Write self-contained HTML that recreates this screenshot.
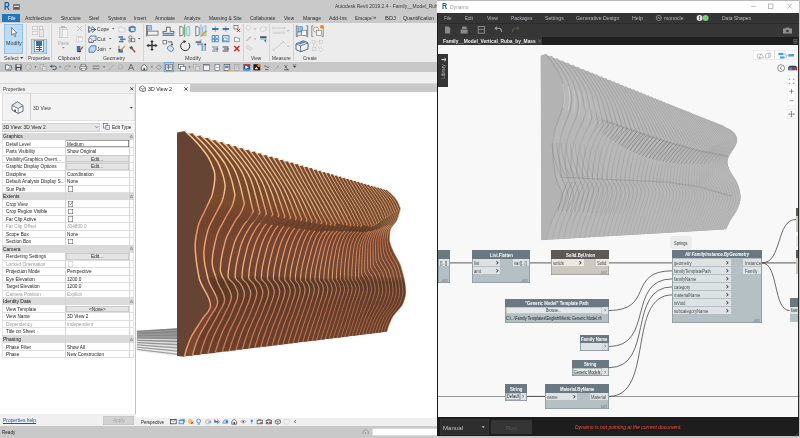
<!DOCTYPE html>
<html lang="en">
<head>
<meta charset="utf-8">
<title>Autodesk Revit 2019.2.4 and Dynamo</title>
<style>
html,body{margin:0;padding:0;}
body{width:800px;height:438px;overflow:hidden;background:#fff;font-family:"Liberation Sans",sans-serif;}
#screen{filter:blur(0.3px);position:relative;width:800px;height:438px;overflow:hidden;background:#fff;}
#screen div,#screen span,#screen svg,#screen a,#screen button,#screen section,#screen header,#screen nav{position:absolute;display:block;box-sizing:border-box;margin:0;padding:0;border:0;}
#screen svg{overflow:visible;}
.t{white-space:nowrap;transform-origin:0 0;line-height:1;font-family:"Liberation Sans",sans-serif;}
</style>
</head>
<body>
<div id="screen">
<section id="revit" style="left:0;top:0;width:438px;height:438px;overflow:hidden;background:#fff">
<div style="left:0px;top:0px;width:438px;height:22.5px;background:#c9c9c9;"></div>
<div style="left:0px;top:22.5px;width:438px;height:39.5px;background:#ececec;"></div>
<div style="left:0px;top:62px;width:438px;height:10px;background:#c8c8c8;"></div>
<div style="left:0px;top:72px;width:438px;height:11.5px;background:#f0f0f0;"></div>
<div style="left:0px;top:83.2px;width:438px;height:0.8px;background:#d9d9d9;"></div>
<span class="t" style="left:3.8px;top:1.1px;font-size:43.6px;color:#1c5aa0;font-weight:bold;transform:scale(0.1842,0.25);">R</span>
<div style="left:13.2px;top:4.2px;width:6.4px;height:5.6px;background:#7a7a7a;border-radius:0.6px;"></div>
<div style="left:14px;top:5.6px;width:4.8px;height:0.9px;background:#e8e8e8;"></div>
<div style="left:14px;top:7.3px;width:4.8px;height:1.7px;background:#5a5a5a;"></div>
<span class="t" style="left:335px;top:4.24px;font-size:19.6px;color:#3a3a3a;transform:scale(0.2500,0.25);">Autodesk Revit 2019.2.4 - Family__Model_Ruba_by_Mass.rfa</span>
<div style="left:1.6px;top:13.8px;width:18.8px;height:8.7px;background:#2377b9;"></div>
<span class="t" style="left:7.6px;top:15.7px;font-size:20px;color:#fff;transform:scale(0.2327,0.25);">File</span>
<span class="t" style="left:25.4px;top:15.7px;font-size:20px;color:#2b2b2b;transform:scale(0.2540,0.25);">Architecture</span>
<span class="t" style="left:60.9px;top:15.7px;font-size:20px;color:#2b2b2b;transform:scale(0.2440,0.25);">Structure</span>
<span class="t" style="left:89.1px;top:15.7px;font-size:20px;color:#2b2b2b;transform:scale(0.2237,0.25);">Steel</span>
<span class="t" style="left:107.8px;top:15.7px;font-size:20px;color:#2b2b2b;transform:scale(0.2360,0.25);">Systems</span>
<span class="t" style="left:134.1px;top:15.7px;font-size:20px;color:#2b2b2b;transform:scale(0.2399,0.25);">Insert</span>
<span class="t" style="left:155px;top:15.7px;font-size:20px;color:#2b2b2b;transform:scale(0.2498,0.25);">Annotate</span>
<span class="t" style="left:183.6px;top:15.7px;font-size:20px;color:#2b2b2b;transform:scale(0.2319,0.25);">Analyze</span>
<span class="t" style="left:208.9px;top:15.7px;font-size:20px;color:#2b2b2b;transform:scale(0.2444,0.25);">Massing &amp; Site</span>
<span class="t" style="left:249.9px;top:15.7px;font-size:20px;color:#2b2b2b;transform:scale(0.2493,0.25);">Collaborate</span>
<span class="t" style="left:283.9px;top:15.7px;font-size:20px;color:#2b2b2b;transform:scale(0.2349,0.25);">View</span>
<span class="t" style="left:302.5px;top:15.7px;font-size:20px;color:#2b2b2b;transform:scale(0.2477,0.25);">Manage</span>
<span class="t" style="left:328.6px;top:15.7px;font-size:20px;color:#2b2b2b;transform:scale(0.2597,0.25);">Add-Ins</span>
<span class="t" style="left:354.8px;top:15.7px;font-size:20px;color:#2b2b2b;transform:scale(0.2187,0.25);">Enscape™</span>
<span class="t" style="left:384.5px;top:15.7px;font-size:20px;color:#2b2b2b;transform:scale(0.2911,0.25);">BDJ</span>
<span class="t" style="left:403.4px;top:15.7px;font-size:20px;color:#2b2b2b;transform:scale(0.2551,0.25);">Quantification</span>
<div style="left:25.6px;top:24px;width:0.6px;height:36.5px;background:#d4d4d4;"></div>
<div style="left:51px;top:24px;width:0.6px;height:36.5px;background:#d4d4d4;"></div>
<div style="left:85.3px;top:24px;width:0.6px;height:36.5px;background:#d4d4d4;"></div>
<div style="left:143px;top:24px;width:0.6px;height:36.5px;background:#d4d4d4;"></div>
<div style="left:242.6px;top:24px;width:0.6px;height:36.5px;background:#d4d4d4;"></div>
<div style="left:269px;top:24px;width:0.6px;height:36.5px;background:#d4d4d4;"></div>
<div style="left:292.9px;top:24px;width:0.6px;height:36.5px;background:#d4d4d4;"></div>
<span class="t" style="left:3.9px;top:56px;font-size:20px;color:#3c3c3c;transform:scale(0.2644,0.25);">Select</span>
<span class="t" style="left:27.5px;top:56px;font-size:20px;color:#3c3c3c;transform:scale(0.2413,0.25);">Properties</span>
<span class="t" style="left:57.8px;top:56px;font-size:20px;color:#3c3c3c;transform:scale(0.2570,0.25);">Clipboard</span>
<span class="t" style="left:103px;top:56px;font-size:20px;color:#3c3c3c;transform:scale(0.2506,0.25);">Geometry</span>
<span class="t" style="left:184.8px;top:56px;font-size:20px;color:#3c3c3c;transform:scale(0.2716,0.25);">Modify</span>
<span class="t" style="left:250.8px;top:56px;font-size:20px;color:#3c3c3c;transform:scale(0.2373,0.25);">View</span>
<span class="t" style="left:271.7px;top:56px;font-size:20px;color:#3c3c3c;transform:scale(0.2403,0.25);">Measure</span>
<span class="t" style="left:303px;top:56px;font-size:20px;color:#3c3c3c;transform:scale(0.2299,0.25);">Create</span>
<svg style="left:20.3px;top:57.3px" width="3.4" height="2" viewBox="0 0 3.4 2"><path d="M0 0H3.4L1.7 2Z" fill="#444"/></svg>
<div style="left:4px;top:23.6px;width:19px;height:30px;background:#bcdcf6;box-shadow:inset 0 0 0 0.6px #6fb0e6;"></div>
<span class="t" style="left:6px;top:41.1px;font-size:20px;color:#333;transform:scale(0.2665,0.25);">Modify</span>
<svg style="left:9.5px;top:26.5px" width="8" height="11" viewBox="0 0 8 11"><path d="M1.6 0.6V8.2L3.4 6.6L4.7 9.6L5.9 9.1L4.6 6.2H6.9Z" fill="#fff" stroke="#555" stroke-width="0.7" stroke-linejoin="round"/></svg>
<div style="left:31px;top:39px;width:16.2px;height:14.6px;background:#bcdcf6;box-shadow:inset 0 0 0 0.6px #6fb0e6;"></div>
<div style="left:34.3px;top:40.3px;width:9.4px;height:12px;background:#fdfdfd;box-shadow:inset 0 0 0 0.6px #555;"></div>
<div style="left:35.6px;top:41.4px;width:6.8px;height:4.2px;background:#2f6fb4;"></div>
<div style="left:35.6px;top:47px;width:6.8px;height:0.7px;background:#555;"></div>
<div style="left:35.6px;top:49.2px;width:6.8px;height:0.7px;background:#555;"></div>
<div style="left:39.2px;top:46.4px;width:0.7px;height:4.3px;background:#555;"></div>
<div style="left:32.4px;top:26px;width:6px;height:4.3px;background:#f4f4f4;box-shadow:inset 0 0 0 0.5px #b0b0b0;"></div>
<div style="left:38.9px;top:26px;width:4.6px;height:4.3px;background:#f4f4f4;box-shadow:inset 0 0 0 0.5px #b0b0b0;"></div>
<div style="left:32.4px;top:30.8px;width:6px;height:4.3px;background:#f4f4f4;box-shadow:inset 0 0 0 0.5px #b0b0b0;"></div>
<div style="left:38.9px;top:29px;width:5.4px;height:8px;background:#e6e6e6;box-shadow:inset 0 0 0 0.5px #b0b0b0;"></div>
<div style="left:58.6px;top:27.2px;width:8.4px;height:10.4px;background:#e3e3e3;box-shadow:inset 0 0 0 0.5px #b9b9b9;border-radius:0.8px;"></div>
<div style="left:60.8px;top:26px;width:4px;height:2.4px;background:#d0d0d0;box-shadow:inset 0 0 0 0.4px #aaa;"></div>
<div style="left:62.4px;top:29.2px;width:6px;height:8.6px;background:#f3f3f3;box-shadow:inset 0 0 0 0.5px #bdbdbd;"></div>
<span class="t" style="left:57.8px;top:41px;font-size:20px;color:#a8a8a8;transform:scale(0.2190,0.25);">Paste</span>
<svg style="left:62.2px;top:47px" width="2.6" height="1.6" viewBox="0 0 2.6 1.6"><path d="M0 0H2.6L1.3 1.6Z" fill="#888"/></svg>
<svg style="left:76px;top:25.4px" width="7" height="7" viewBox="0 0 7 7"><path d="M1 1L6 6M6 1L1 6" stroke="#c4c4c4" stroke-width="1"/></svg>
<div style="left:76.2px;top:35.6px;width:5.2px;height:6.2px;background:#f0f0f0;box-shadow:inset 0 0 0 0.5px #c2c2c2;"></div>
<div style="left:77.8px;top:37.2px;width:5px;height:5.2px;background:#f4f4f4;box-shadow:inset 0 0 0 0.5px #c2c2c2;"></div>
<svg style="left:75.6px;top:45px" width="8" height="8" viewBox="0 0 8 8"><rect x="0.8" y="1" width="3.6" height="5" fill="#3d6fa8"/><path d="M3 7L7 1.6" stroke="#8a6a3a" stroke-width="1.3"/><path d="M1 6.6H5" stroke="#333" stroke-width="0.9"/></svg>
<svg style="left:87.5px;top:24.5px" width="9" height="9" viewBox="0 0 9 9"><path d="M1 1V8M2 4.5H8M4 1.5L7.5 4.5L4 7.5" stroke="#3a4a5a" stroke-width="0.9" fill="none"/><rect x="0.6" y="3" width="3" height="3" fill="#e8eef5" stroke="#3a4a5a" stroke-width="0.6"/></svg>
<span class="t" style="left:96.6px;top:26.6px;font-size:20px;color:#333;transform:scale(0.2510,0.25);">Cope</span>
<svg style="left:88px;top:34.5px" width="9" height="8" viewBox="0 0 9 8"><path d="M2.5 1H8V5.5H5.5V7.5H0.8V4Z" fill="#dfeaf6" stroke="#2b6cb0" stroke-width="0.8"/><circle cx="2.3" cy="5.3" r="1.7" fill="#fff" stroke="#c33" stroke-width="0.6"/></svg>
<span class="t" style="left:96.6px;top:36.6px;font-size:20px;color:#333;transform:scale(0.2699,0.25);">Cut</span>
<svg style="left:88px;top:44.5px" width="9" height="8" viewBox="0 0 9 8"><path d="M3 0.8H8V4.5L6 7.2H1V3.6Z" fill="#b9d6f2" stroke="#2b6cb0" stroke-width="0.8"/></svg>
<span class="t" style="left:96.6px;top:46.6px;font-size:20px;color:#333;transform:scale(0.2453,0.25);">Join</span>
<svg style="left:111.5px;top:28.3px" width="2.4" height="1.5" viewBox="0 0 2.4 1.5"><path d="M0 0H2.4L1.2 1.5Z" fill="#555"/></svg>
<svg style="left:108.6px;top:38.3px" width="2.4" height="1.5" viewBox="0 0 2.4 1.5"><path d="M0 0H2.4L1.2 1.5Z" fill="#555"/></svg>
<svg style="left:108.6px;top:48.3px" width="2.4" height="1.5" viewBox="0 0 2.4 1.5"><path d="M0 0H2.4L1.2 1.5Z" fill="#555"/></svg>
<svg style="left:117.5px;top:25px" width="8" height="8" viewBox="0 0 8 8"><path d="M1 2H3.5L4.3 3H7V7H1Z" fill="#efefef" stroke="#c4c4c4" stroke-width="0.6"/></svg>
<svg style="left:127.5px;top:25px" width="8" height="8" viewBox="0 0 8 8"><path d="M1 2.2L4.6 1L7.2 2V6L3.6 7.2L1 6Z" fill="#5b8fc7" stroke="#2a4f7a" stroke-width="0.6"/><rect x="3" y="3" width="3.4" height="3" fill="#cfe2f5"/></svg>
<svg style="left:117.5px;top:35px" width="8" height="8" viewBox="0 0 8 8"><path d="M0.5 2H5M2 4.2H7.5M1 6.4H5.5" stroke="#4a7db5" stroke-width="1.5"/><path d="M4 0.8V7.4" stroke="#666" stroke-width="0.6"/></svg>
<svg style="left:127.5px;top:35px" width="9" height="8" viewBox="0 0 9 8"><circle cx="2.4" cy="2.4" r="1.6" fill="none" stroke="#555" stroke-width="0.7"/><rect x="3.6" y="3.8" width="3.2" height="3" fill="#fff" stroke="#555" stroke-width="0.7"/><circle cx="1.8" cy="6" r="1.1" fill="none" stroke="#555" stroke-width="0.6"/></svg>
<svg style="left:138px;top:38.3px" width="2.4" height="1.5" viewBox="0 0 2.4 1.5"><path d="M0 0H2.4L1.2 1.5Z" fill="#555"/></svg>
<svg style="left:117.5px;top:44.5px" width="8" height="8" viewBox="0 0 8 8"><rect x="0.6" y="4" width="4.2" height="3.6" fill="#2e6db3"/><path d="M2.5 5.5L7 1" stroke="#e09a2b" stroke-width="1.5"/><path d="M1 0.6V6.5" stroke="#444" stroke-width="0.7"/></svg>
<svg style="left:127.5px;top:44.5px" width="8" height="8" viewBox="0 0 8 8"><path d="M1.2 2.4L3.6 1L5.4 3.2L3 4.6Z" fill="#555"/><path d="M4 3.6L7.2 7.2" stroke="#a0522d" stroke-width="1.4"/></svg>
<svg style="left:0;top:0" width="438" height="62" viewBox="0 0 438 62"><g transform="translate(146,24.5)"><path d="M0.7 0.5V12" stroke="#444" stroke-width="0.8"/><rect x="1.4" y="1.2" width="4.2" height="4.2" fill="#9fc9f0" stroke="#3a78b8" stroke-width="0.5"/><rect x="1.4" y="6.6" width="10.6" height="4" fill="#f2f2f2" stroke="#555" stroke-width="0.7"/></g><g transform="translate(162,25)"><path d="M1 8.3V6.4H4.6V2.2H8.2V6.4H12V8.3Z" fill="#f8f8f8" stroke="#444" stroke-width="0.8"/><path d="M0.6 10.2H12.4" stroke="#2f7ac6" stroke-width="1.3"/></g><g transform="translate(179,24.5)"><path d="M0.8 1.6L4.2 3V10.4L0.8 11.6Z" fill="#f4f4f4" stroke="#555" stroke-width="0.7"/><path d="M10.6 1.6L7.2 3V10.4L10.6 11.6Z" fill="#cfe4f7" stroke="#8ab" stroke-width="0.7"/><path d="M5.7 0V12.5" stroke="#3a9a3a" stroke-width="0.8"/></g><g transform="translate(195,24.5)"><path d="M0.8 1.6L4.2 3V10.4L0.8 11.6Z" fill="#f4f4f4" stroke="#555" stroke-width="0.7"/><path d="M11 1L7.6 3V10.4L11 11.6Z" fill="#cfe4f7" stroke="#8ab" stroke-width="0.7"/><path d="M6 0V12.5" stroke="#6aa9e0" stroke-width="0.8"/><path d="M6.4 11.4L11.4 6.4" stroke="#e0a020" stroke-width="1.8"/></g><g transform="translate(146,39.5)"><path d="M6 0.4L7.8 2.6H6.7V5.3H9.4V4.2L11.6 6L9.4 7.8V6.7H6.7V9.4H7.8L6 11.6L4.2 9.4H5.3V6.7H2.6V7.8L0.4 6L2.6 4.2V5.3H5.3V2.6H4.2Z" fill="#333"/></g><g transform="translate(162,39.5)"><rect x="1" y="1" width="3.6" height="3.4" fill="#fff" stroke="#555" stroke-width="0.7"/><path d="M5.6 2.4H10V5.4" fill="none" stroke="#444" stroke-width="0.8"/><path d="M8.8 4.6L10 6.4L11.2 4.6Z" fill="#444"/><ellipse cx="8.4" cy="9" rx="3.2" ry="2.6" fill="#cfe4f7" stroke="#3a78b8" stroke-width="0.7" transform="rotate(35 8.4 9)"/></g><g transform="translate(179,39.5)"><path d="M9.6 3.4A4.6 4.6 0 1 1 5.4 2" fill="none" stroke="#333" stroke-width="1"/><path d="M4.6 0.4L7.4 2L4.8 3.8Z" fill="#333"/></g><g transform="translate(195,39.5)"><path d="M0.6 2.6H6.4" stroke="#777" stroke-width="1.8"/><path d="M2 4.8H7.4V11.6" fill="none" stroke="#6aa9e0" stroke-width="1.9"/><path d="M10.2 4.5V11.4" stroke="#555" stroke-width="0.8"/><path d="M9 5.6L10.2 3.6L11.4 5.6Z" fill="#444"/><path d="M4.6 1.2L6.6 0.4" stroke="#555" stroke-width="0.6"/></g><g transform="translate(211.5,26)"><path d="M0.6 3H7" stroke="#2f7ac6" stroke-width="2"/><path d="M3.8 0.4V5.8" stroke="#c33" stroke-width="0.6"/></g><g transform="translate(222,26)"><path d="M0.6 3H7" stroke="#2f7ac6" stroke-width="2"/><path d="M3.8 0.4V5.8" stroke="#c33" stroke-width="0.6"/></g><g transform="translate(233,25)"><rect x="1" y="0.6" width="4" height="3.4" fill="#f4f4f4" stroke="#555" stroke-width="0.6"/><path d="M4 3.8L7 6.8M7 3.8L4 6.8" stroke="#d22" stroke-width="1"/></g><g transform="translate(211.5,35)"><rect x="0.6" y="0.6" width="2.6" height="2.6" fill="#fff" stroke="#2f7ac6" stroke-width="0.8"/><rect x="4.2" y="0.6" width="2.6" height="2.6" fill="#fff" stroke="#2f7ac6" stroke-width="0.8"/><rect x="0.6" y="4.2" width="2.6" height="2.6" fill="#fff" stroke="#2f7ac6" stroke-width="0.8"/><rect x="4.2" y="4.2" width="2.6" height="2.6" fill="#fff" stroke="#2f7ac6" stroke-width="0.8"/></g><g transform="translate(222,35)"><rect x="0.6" y="0.6" width="6.4" height="6.2" fill="#cfe4f7" stroke="#2f7ac6" stroke-width="0.8"/><rect x="1.6" y="3" width="3.4" height="2.8" fill="#fff" stroke="#2f7ac6" stroke-width="0.5"/></g><g transform="translate(233.5,36)"><path d="M1 1.4H3L3.6 2.2H6V5.4H1Z" fill="#fff" stroke="#666" stroke-width="0.6"/></g><g transform="translate(211.5,45)"><path d="M0.6 2H4.2M1.8 4H7M0.6 6H4.2" stroke="#555" stroke-width="0.8"/><path d="M5.6 1V7" stroke="#2f7ac6" stroke-width="1"/></g><g transform="translate(222,45)"><path d="M0.6 2H5M1.8 4H7M0.6 6H5" stroke="#333" stroke-width="0.9"/><path d="M5.8 1V7" stroke="#2f7ac6" stroke-width="1"/></g><g transform="translate(233.5,45.3)"><path d="M0.8 0.8L5.8 6M5.8 0.8L0.8 6" stroke="#e02020" stroke-width="1.5"/></g><g transform="translate(245.5,25)"><circle cx="3" cy="2.6" r="2.1" fill="#f6f6f6" stroke="#c6c6c6" stroke-width="0.6"/><rect x="2.1" y="4.6" width="1.8" height="1.6" fill="#d4d4d4"/><path d="M8.4 3.4H10.8L9.6 4.8Z" fill="#999"/></g><g transform="translate(259.5,25.2)"><path d="M0.8 3L3.4 1.4L6.4 2.4V5.4L3.4 6.4L0.8 5.2Z" fill="#eee" stroke="#c2c2c2" stroke-width="0.6"/></g><g transform="translate(245.5,35)"><path d="M1 6L5.4 1.4" stroke="#c4c4c4" stroke-width="1.5"/><path d="M8.4 3.4H10.8L9.6 4.8Z" fill="#999"/></g><g transform="translate(259.5,35.6)"><rect x="0.6" y="0.6" width="6.4" height="2" fill="#555"/><rect x="0.6" y="2.8" width="6.4" height="1.2" fill="#9ab"/><path d="M6.6 3.6L4.4 5.2L6.6 6.6Z" fill="#1d6fd0"/></g><g transform="translate(245.5,45)"><rect x="0.8" y="1.6" width="5.4" height="2.6" fill="#e2e2e2" stroke="#c0c0c0" stroke-width="0.5" transform="rotate(32 3.5 3)"/></g><g transform="translate(272,26.5)"><path d="M1 1.6H12.4" stroke="#bdbdbd" stroke-width="0.7"/><path d="M1 0.4V2.8M12.4 0.4V2.8" stroke="#bdbdbd" stroke-width="0.7"/><rect x="0.6" y="5" width="12.4" height="2.6" fill="#d9d9d9"/><path d="M15.2 4.2H17.4" stroke="#888" stroke-width="0.6"/></g><g transform="translate(272,40)"><path d="M1.4 10L11.8 1.6" stroke="#bdbdbd" stroke-width="0.7"/><path d="M0.4 8.6L2.6 11.4M10.6 0.6L12.8 3" stroke="#bdbdbd" stroke-width="0.7"/><path d="M15.2 6.2H17.4" stroke="#888" stroke-width="0.6"/></g><g transform="translate(295.5,25)"><path d="M2.4 0.8H0.8V11.6H2.4M10.6 0.8H12.2V11.6H10.6" fill="none" stroke="#555" stroke-width="0.7"/><rect x="2.4" y="1.8" width="4.6" height="5" fill="#8fc1ee" stroke="#3a78b8" stroke-width="0.6"/><rect x="6" y="5.2" width="5.2" height="5.2" fill="#f6f6f6" stroke="#666" stroke-width="0.6"/><rect x="2" y="7" width="4" height="3.6" fill="#cfe4f7" stroke="#3a78b8" stroke-width="0.5"/></g><g transform="translate(311,25)"><path d="M2.4 0.8H0.8V11.6H2.4M10.6 0.8H12.2V11.6H10.6" fill="none" stroke="#666" stroke-width="0.7"/><circle cx="5" cy="4.6" r="2.6" fill="#f4f4f4" stroke="#777" stroke-width="0.6"/><rect x="5.4" y="5.6" width="5" height="4.8" fill="#f4f4f4" stroke="#777" stroke-width="0.6"/><circle cx="10.8" cy="1.8" r="1.9" fill="#f08a1c"/></g><g transform="translate(295,39.5)"><path d="M1 4.4L8.4 1.2L13 3.4V9.6L5.6 12.2L1 10.2Z" fill="#eef3f8" stroke="#3c4a58" stroke-width="0.8" stroke-linejoin="round"/><path d="M1 4.4L5.6 6.4L13 3.4M5.6 6.4V12.2" fill="none" stroke="#3c4a58" stroke-width="0.7"/><path d="M2.6 3.8L9 1.4L11.4 2.6L5.2 5Z" fill="#4a8fd4"/></g><g transform="translate(311.5,39.5)" opacity="0.75"><rect x="0.6" y="0.8" width="2.8" height="2.8" fill="#f4f4f4" stroke="#aaa" stroke-width="0.5"/><rect x="8" y="0.8" width="2.8" height="2.8" fill="#f4f4f4" stroke="#aaa" stroke-width="0.5"/><path d="M3.6 2.2H7.6M2 4V8M4 4.4L8.6 9" stroke="#aaa" stroke-width="0.5"/><rect x="0.6" y="8" width="4" height="3.4" fill="#e4e4e4" stroke="#b5b5b5" stroke-width="0.5"/><rect x="8" y="8.6" width="2.8" height="2.8" fill="#f4f4f4" stroke="#aaa" stroke-width="0.5" transform="rotate(45 9.4 10)"/></g></svg>
<svg style="left:0;top:0" width="438" height="73" viewBox="0 0 438 73"><g transform="translate(5,63.5)"><path d="M0.6 1.4H3L3.8 2.4H6.4V6.4H0.6Z" fill="#f4f4f4" stroke="#3a4a5a" stroke-width="0.7"/><path d="M4.2 4.4H7.2L6 6.4H3Z" fill="#dfe8f0" stroke="#3a4a5a" stroke-width="0.5"/></g><g transform="translate(15,63.8)"><rect x="0.4" y="0.4" width="6.2" height="6.2" fill="#3a4350" rx="0.5"/><rect x="1.6" y="0.8" width="3.8" height="2.2" fill="#eef2f6"/><rect x="1.8" y="4.2" width="3.4" height="2.4" fill="#c9d3de"/></g><g transform="translate(25,63.8)" opacity="0.6"><circle cx="3.4" cy="3.4" r="2.8" fill="#ddd" stroke="#8a8a8a" stroke-width="0.7"/><path d="M3.4 3.4L5.4 5.4" stroke="#888" stroke-width="0.8"/></g><g transform="translate(39.5,63.8)" opacity="0.6"><rect x="0.6" y="0.6" width="3.6" height="4.6" fill="#e2e2e2" stroke="#8a8a8a" stroke-width="0.6"/><rect x="3" y="2.4" width="3.6" height="4.4" fill="#e9e9e9" stroke="#8a8a8a" stroke-width="0.6"/></g><g transform="translate(49.5,63.8)"><path d="M1.8 2.4H5.2A1.7 1.7 0 0 1 5.2 5.8H3" fill="none" stroke="#4a5866" stroke-width="1"/><path d="M2.6 0.6L0.4 2.4L2.6 4.2Z" fill="#4a5866"/></g><g transform="translate(64.5,63.8)" opacity="0.45"><path d="M5.2 2.4H1.8A1.7 1.7 0 0 0 1.8 5.8H4" fill="none" stroke="#7a7a7a" stroke-width="1"/><path d="M4.4 0.6L6.6 2.4L4.4 4.2Z" fill="#7a7a7a"/></g><g transform="translate(79.5,63.6)"><rect x="1.6" y="0.6" width="4.4" height="2.4" fill="#fff" stroke="#4a5866" stroke-width="0.6"/><rect x="0.4" y="2.6" width="6.8" height="3.2" fill="#eef2f6" stroke="#3a4350" stroke-width="0.7" rx="0.6"/><rect x="1.8" y="4.6" width="4" height="2" fill="#fff" stroke="#4a5866" stroke-width="0.5"/></g><g transform="translate(92.5,64)"><path d="M0.6 2H6.4M0.6 4.8H6.4" stroke="#5a5a5a" stroke-width="0.7"/><path d="M0.6 1V6M6.4 1V6" stroke="#8a8a8a" stroke-width="0.5"/></g><g transform="translate(108,63.8)" opacity="0.6"><path d="M0.8 6L6 0.8" stroke="#8a8a8a" stroke-width="0.8"/><circle cx="1.4" cy="5.6" r="0.9" fill="#999"/></g><g transform="translate(117.5,63.8)" opacity="0.6"><circle cx="3.2" cy="3" r="2.2" fill="none" stroke="#9a9a9a" stroke-width="0.8"/><path d="M1.6 4.6L0.6 6.6" stroke="#999" stroke-width="0.8"/></g><g transform="translate(127.5,63.4)"><path d="M0.8 7L3.6 0.6L6.4 7M1.8 4.8H5.4" fill="none" stroke="#5a5a5a" stroke-width="0.8"/></g><g transform="translate(140.5,63.6)"><path d="M0.8 3.2L3.6 0.8L6.4 3.2V6.6H0.8Z" fill="#f4f6f8" stroke="#3a4350" stroke-width="0.7"/><rect x="3" y="4.2" width="1.4" height="2.4" fill="#3a4350"/></g><g transform="translate(155.5,64.2)" opacity="0.7"><path d="M1 3L3.6 0.6L6 3L3.6 5.6Z" fill="none" stroke="#6a6a6a" stroke-width="0.7"/></g><g transform="translate(164.2,62.6)"><rect x="0" y="0" width="9.6" height="9.2" fill="#b9d8f5" stroke="#4a90d9" stroke-width="0.6"/><rect x="1.6" y="1.6" width="6.4" height="6" fill="#fff" stroke="#333" stroke-width="0.6"/><path d="M2.4 3.4H7.2M2.4 5.2H7.2M4.2 2.4V7" stroke="#333" stroke-width="0.6"/></g><g transform="translate(178,63.8)"><rect x="0.6" y="0.6" width="5" height="4" fill="#fff" stroke="#4a5360" stroke-width="0.6"/><rect x="2.4" y="2.6" width="5" height="4" fill="#fff" stroke="#4a5360" stroke-width="0.6"/></g><g transform="translate(193,63.8)" opacity="0.55"><rect x="0.6" y="0.6" width="3.4" height="3.4" fill="#eee" stroke="#8a8a8a" stroke-width="0.6"/><rect x="2.6" y="2.6" width="3.8" height="3.8" fill="#eee" stroke="#8a8a8a" stroke-width="0.6"/></g><g transform="translate(203,63.8)"><rect x="0.6" y="0.6" width="6" height="6" fill="#f4f4f4" stroke="#5a6270" stroke-width="0.6"/><rect x="0.6" y="0.6" width="6" height="1.1" fill="#6a7280"/></g><g transform="translate(214.4,63.8)"><rect x="0.6" y="0.6" width="4.6" height="6" fill="#f4f4f4" stroke="#5a6270" stroke-width="0.6"/><path d="M1.6 3.6H4.2" stroke="#5a6270" stroke-width="0.6"/></g><g transform="translate(223.5,63.6)"><rect x="0.6" y="0.8" width="5.6" height="6" fill="#f6f6f6" stroke="#555" stroke-width="0.7"/><rect x="1.6" y="2" width="3.6" height="2.6" fill="#4a8fd4"/><circle cx="5.6" cy="6.4" r="1.3" fill="#e8a020"/></g><g transform="translate(233.5,63.8)" opacity="0.7"><rect x="1" y="0.6" width="4.4" height="6" fill="#ddd" stroke="#8a8a8a" stroke-width="0.6"/><path d="M2 2.4H4.4M2 4H4.4" stroke="#888" stroke-width="0.5"/></g><g transform="translate(243,63.6)"><rect x="0.4" y="0.6" width="6.8" height="6.2" fill="#2a5d92"/><path d="M2.4 2L5.6 3.7L2.4 5.4Z" fill="#fff"/><rect x="0.4" y="0.6" width="6.8" height="1.4" fill="#d33"/><rect x="0.4" y="5.4" width="6.8" height="1.4" fill="#3a9ad9"/></g><g transform="translate(253,63.6)"><rect x="0.4" y="0.6" width="6.8" height="6.2" fill="#1c1c1c"/><circle cx="5.8" cy="1.8" r="1.6" fill="#f0761c"/><path d="M1.4 5.6L3.4 3.2L5.4 5.6Z" fill="#ddd"/></g><g transform="translate(263,64)"><path d="M0.8 2.6C2.4 0.4 4.2 4.8 6.4 2.6M2 5.2L5.6 5.8" fill="none" stroke="#5a5a5a" stroke-width="0.9"/></g><g transform="translate(273.5,64)" opacity="0.5"><path d="M1 6L5.4 0.8M3.4 2.4L5.6 3.4" stroke="#8a8a8a" stroke-width="0.8" fill="none"/></g><g transform="translate(283,64)"><path d="M1.4 1L4.6 5.6M1 5.8H6M4.4 1.4L2 3.6" stroke="#4a4a4a" stroke-width="0.8" fill="none"/></g><g transform="translate(292.7,66)"><path d="M0.6 0H3L1.8 1.5Z M0 -1.2H3.6" fill="#333" stroke="#333" stroke-width="0.4"/></g><path d="M34.5 66.4H36.7L35.6 67.8Z" fill="#444"/><path d="M59 66.4H61.2L60.1 67.8Z" fill="#444"/><path d="M74 66.4H76.2L75.1 67.8Z" fill="#444"/><path d="M103 66.4H105.2L104.1 67.8Z" fill="#444"/><path d="M150.8 66.4H153.0L151.9 67.8Z" fill="#444"/><path d="M188.5 66.4H190.7L189.6 67.8Z" fill="#444"/></svg>
<section id="props" style="left:0;top:83.5px;width:135.5px;height:341.5px;background:#fff">
</section>
<div style="left:0px;top:84px;width:135.5px;height:8.6px;background:#f0f0f0;"></div>
<span class="t" style="left:3px;top:86.6px;font-size:20px;color:#444;transform:scale(0.2435,0.25);">Properties</span>
<svg style="left:129.6px;top:87px" width="3.6" height="3.6" viewBox="0 0 3.6 3.6"><path d="M0.3 0.3L3.3 3.3M3.3 0.3L0.3 3.3" stroke="#222" stroke-width="0.8"/></svg>
<div style="left:1.5px;top:92.6px;width:133px;height:28.6px;background:#f3f3f3;box-shadow:inset 0 0 0 0.5px #d0d0d0;"></div>
<div style="left:30.4px;top:92.6px;width:0.5px;height:28.6px;background:#d0d0d0;"></div>
<svg style="left:10.5px;top:101px" width="13" height="13" viewBox="0 0 13 13"><path d="M6.4 0.8L12 4.6V10.2L7.2 12.4L1 9V4.4Z" fill="#fdfdfd" stroke="#55606c" stroke-width="0.9" stroke-linejoin="round"/><path d="M1 4.4L7.2 7.4L12 4.6M7.2 7.4V12.4" fill="none" stroke="#55606c" stroke-width="0.7"/><path d="M3.4 8.2V10.2L4.8 11V8.8Z" fill="#333"/><path d="M6.4 0.8L12 4.6L7.2 7.4L1 4.4Z" fill="#e4e9ee" stroke="#55606c" stroke-width="0.6"/></svg>
<span class="t" style="left:32.8px;top:105.8px;font-size:20px;color:#444;transform:scale(0.2402,0.25);">3D View</span>
<svg style="left:130.4px;top:107.2px" width="2.8" height="1.8" viewBox="0 0 2.8 1.8"><path d="M0 0H2.8L1.4 1.8Z" fill="#333"/></svg>
<div style="left:1.8px;top:122.8px;width:98.6px;height:9.2px;background:#e6e6e6;box-shadow:inset 0 0 0 0.5px #bdbdbd;"></div>
<div style="left:101.2px;top:122.6px;width:33.6px;height:9.6px;background:#f6f6f6;box-shadow:inset 0 0 0 0.4px #dadada;"></div>
<span class="t" style="left:3.4px;top:125.4px;font-size:20px;color:#222;transform:scale(0.2420,0.25);">3D View: 3D View 2</span>
<svg style="left:94.6px;top:126px" width="3.4" height="2.2" viewBox="0 0 3.4 2.2"><path d="M0.3 0.3L1.7 1.8L3.1 0.3" fill="none" stroke="#555" stroke-width="0.6"/></svg>
<svg style="left:103px;top:123.4px" width="7" height="7" viewBox="0 0 7 7"><rect x="0.6" y="0.6" width="3.6" height="4.4" fill="#fff" stroke="#555" stroke-width="0.6"/><rect x="2.8" y="2.6" width="3.6" height="3.8" fill="#dfe9f4" stroke="#3a6ea8" stroke-width="0.6"/></svg>
<span class="t" style="left:112.2px;top:125.3px;font-size:20px;color:#222;transform:scale(0.2337,0.25);">Edit Type</span>
<div style="left:1.5px;top:132.5px;width:132.6px;height:225.39px;background:#fff;box-shadow:inset 0 0 0 0.5px #cfcfcf;"></div>
<div style="left:1.5px;top:132.5px;width:132.6px;height:7.51px;background:#dadada;"></div>
<span class="t" style="left:3px;top:134.16px;font-size:20px;color:#111;transform:scale(0.2475,0.25);">Graphics</span>
<svg style="left:129.6px;top:134.76px" width="3" height="3.2" viewBox="0 0 3 3.2"><path d="M0.3 1.5L1.5 0.3L2.7 1.5M0.3 3L1.5 1.8L2.7 3" fill="none" stroke="#333" stroke-width="0.5"/></svg>
<div style="left:1.5px;top:147.13px;width:132.6px;height:0.5px;background:#dedede;"></div>
<span class="t" style="left:6.4px;top:141.67px;font-size:20px;color:#1f1f1f;transform:scale(0.2350,0.25);">Detail Level</span>
<div style="left:65.4px;top:140.21px;width:63.8px;height:7.01px;background:#fff;box-shadow:inset 0 0 0 0.6px #444;"></div>
<span class="t" style="left:67px;top:141.67px;font-size:20px;color:#1f1f1f;transform:scale(0.2350,0.25);">Medium</span>
<div style="left:1.5px;top:154.64px;width:132.6px;height:0.5px;background:#dedede;"></div>
<span class="t" style="left:6.4px;top:149.18px;font-size:20px;color:#1f1f1f;transform:scale(0.2350,0.25);">Parts Visibility</span>
<span class="t" style="left:67px;top:149.18px;font-size:20px;color:#1f1f1f;transform:scale(0.2350,0.25);">Show Original</span>
<div style="left:1.5px;top:162.15px;width:132.6px;height:0.5px;background:#dedede;"></div>
<span class="t" style="left:6.4px;top:156.7px;font-size:20px;color:#1f1f1f;transform:scale(0.2350,0.25);">Visibility/Graphics Overri...</span>
<div style="left:65.6px;top:155.34px;width:63.6px;height:6.71px;background:#e4e4e4;box-shadow:inset 0 0 0 0.5px #b4b4b4;"></div>
<span class="t" style="left:91.49px;top:156.7px;font-size:20px;color:#1f1f1f;transform:scale(0.2350,0.25);">Edit...</span>
<div style="left:1.5px;top:169.66px;width:132.6px;height:0.5px;background:#dedede;"></div>
<span class="t" style="left:6.4px;top:164.21px;font-size:20px;color:#1f1f1f;transform:scale(0.2350,0.25);">Graphic Display Options</span>
<div style="left:65.6px;top:162.85px;width:63.6px;height:6.71px;background:#e4e4e4;box-shadow:inset 0 0 0 0.5px #b4b4b4;"></div>
<span class="t" style="left:91.49px;top:164.21px;font-size:20px;color:#1f1f1f;transform:scale(0.2350,0.25);">Edit...</span>
<div style="left:1.5px;top:177.18px;width:132.6px;height:0.5px;background:#dedede;"></div>
<span class="t" style="left:6.4px;top:171.72px;font-size:20px;color:#1f1f1f;transform:scale(0.2350,0.25);">Discipline</span>
<span class="t" style="left:67px;top:171.72px;font-size:20px;color:#1f1f1f;transform:scale(0.2350,0.25);">Coordination</span>
<div style="left:1.5px;top:184.69px;width:132.6px;height:0.5px;background:#dedede;"></div>
<span class="t" style="left:6.4px;top:179.23px;font-size:20px;color:#1f1f1f;transform:scale(0.2350,0.25);">Default Analysis Display S...</span>
<span class="t" style="left:67px;top:179.23px;font-size:20px;color:#1f1f1f;transform:scale(0.2350,0.25);">None</span>
<div style="left:1.5px;top:192.2px;width:132.6px;height:0.5px;background:#dedede;"></div>
<span class="t" style="left:6.4px;top:186.75px;font-size:20px;color:#1f1f1f;transform:scale(0.2350,0.25);">Sun Path</span>
<div style="left:67.6px;top:186.19px;width:5.4px;height:5.4px;background:#fff;box-shadow:inset 0 0 0 0.5px #555;"></div>
<div style="left:1.5px;top:192.6px;width:132.6px;height:7.51px;background:#dadada;"></div>
<span class="t" style="left:3px;top:194.26px;font-size:20px;color:#111;transform:scale(0.2475,0.25);">Extents</span>
<svg style="left:129.6px;top:194.86px" width="3" height="3.2" viewBox="0 0 3 3.2"><path d="M0.3 1.5L1.5 0.3L2.7 1.5M0.3 3L1.5 1.8L2.7 3" fill="none" stroke="#333" stroke-width="0.5"/></svg>
<div style="left:1.5px;top:207.23px;width:132.6px;height:0.5px;background:#dedede;"></div>
<span class="t" style="left:6.4px;top:201.77px;font-size:20px;color:#1f1f1f;transform:scale(0.2350,0.25);">Crop View</span>
<div style="left:67.6px;top:201.22px;width:5.4px;height:5.4px;background:#fff;box-shadow:inset 0 0 0 0.5px #555;"></div>
<svg style="left:68.5px;top:202.32px" width="3.6" height="3.2" viewBox="0 0 3.6 3.2"><path d="M0.4 1.6L1.4 2.7L3.3 0.4" fill="none" stroke="#333" stroke-width="0.6"/></svg>
<div style="left:1.5px;top:214.74px;width:132.6px;height:0.5px;background:#dedede;"></div>
<span class="t" style="left:6.4px;top:209.29px;font-size:20px;color:#1f1f1f;transform:scale(0.2350,0.25);">Crop Region Visible</span>
<div style="left:67.6px;top:208.73px;width:5.4px;height:5.4px;background:#fff;box-shadow:inset 0 0 0 0.5px #555;"></div>
<div style="left:1.5px;top:222.26px;width:132.6px;height:0.5px;background:#dedede;"></div>
<span class="t" style="left:6.4px;top:216.8px;font-size:20px;color:#1f1f1f;transform:scale(0.2350,0.25);">Far Clip Active</span>
<div style="left:67.6px;top:216.24px;width:5.4px;height:5.4px;background:#fff;box-shadow:inset 0 0 0 0.5px #555;"></div>
<div style="left:1.5px;top:229.77px;width:132.6px;height:0.5px;background:#dedede;"></div>
<span class="t" style="left:6.4px;top:224.31px;font-size:20px;color:#9a9a9a;transform:scale(0.2350,0.25);">Far Clip Offset</span>
<span class="t" style="left:67px;top:224.31px;font-size:20px;color:#9a9a9a;transform:scale(0.2350,0.25);">304800.0</span>
<div style="left:1.5px;top:237.28px;width:132.6px;height:0.5px;background:#dedede;"></div>
<span class="t" style="left:6.4px;top:231.83px;font-size:20px;color:#1f1f1f;transform:scale(0.2350,0.25);">Scope Box</span>
<span class="t" style="left:67px;top:231.83px;font-size:20px;color:#1f1f1f;transform:scale(0.2350,0.25);">None</span>
<div style="left:1.5px;top:244.8px;width:132.6px;height:0.5px;background:#dedede;"></div>
<span class="t" style="left:6.4px;top:239.34px;font-size:20px;color:#1f1f1f;transform:scale(0.2350,0.25);">Section Box</span>
<div style="left:67.6px;top:238.78px;width:5.4px;height:5.4px;background:#fff;box-shadow:inset 0 0 0 0.5px #555;"></div>
<div style="left:1.5px;top:245.19px;width:132.6px;height:7.51px;background:#dadada;"></div>
<span class="t" style="left:3px;top:246.85px;font-size:20px;color:#111;transform:scale(0.2475,0.25);">Camera</span>
<svg style="left:129.6px;top:247.45px" width="3" height="3.2" viewBox="0 0 3 3.2"><path d="M0.3 1.5L1.5 0.3L2.7 1.5M0.3 3L1.5 1.8L2.7 3" fill="none" stroke="#333" stroke-width="0.5"/></svg>
<div style="left:1.5px;top:259.82px;width:132.6px;height:0.5px;background:#dedede;"></div>
<span class="t" style="left:6.4px;top:254.36px;font-size:20px;color:#1f1f1f;transform:scale(0.2350,0.25);">Rendering Settings</span>
<div style="left:65.6px;top:253.01px;width:63.6px;height:6.71px;background:#e4e4e4;box-shadow:inset 0 0 0 0.5px #b4b4b4;"></div>
<span class="t" style="left:91.49px;top:254.36px;font-size:20px;color:#1f1f1f;transform:scale(0.2350,0.25);">Edit...</span>
<div style="left:1.5px;top:267.33px;width:132.6px;height:0.5px;background:#dedede;"></div>
<span class="t" style="left:6.4px;top:261.88px;font-size:20px;color:#9a9a9a;transform:scale(0.2350,0.25);">Locked Orientation</span>
<div style="left:67.6px;top:261.32px;width:5.4px;height:5.4px;background:#fff;box-shadow:inset 0 0 0 0.5px #c8c8c8;"></div>
<div style="left:1.5px;top:274.85px;width:132.6px;height:0.5px;background:#dedede;"></div>
<span class="t" style="left:6.4px;top:269.39px;font-size:20px;color:#1f1f1f;transform:scale(0.2350,0.25);">Projection Mode</span>
<span class="t" style="left:67px;top:269.39px;font-size:20px;color:#1f1f1f;transform:scale(0.2350,0.25);">Perspective</span>
<div style="left:1.5px;top:282.36px;width:132.6px;height:0.5px;background:#dedede;"></div>
<span class="t" style="left:6.4px;top:276.9px;font-size:20px;color:#1f1f1f;transform:scale(0.2350,0.25);">Eye Elevation</span>
<span class="t" style="left:67px;top:276.9px;font-size:20px;color:#1f1f1f;transform:scale(0.2350,0.25);">1200.0</span>
<div style="left:1.5px;top:289.87px;width:132.6px;height:0.5px;background:#dedede;"></div>
<span class="t" style="left:6.4px;top:284.42px;font-size:20px;color:#1f1f1f;transform:scale(0.2350,0.25);">Target Elevation</span>
<span class="t" style="left:67px;top:284.42px;font-size:20px;color:#1f1f1f;transform:scale(0.2350,0.25);">1200.0</span>
<div style="left:1.5px;top:297.39px;width:132.6px;height:0.5px;background:#dedede;"></div>
<span class="t" style="left:6.4px;top:291.93px;font-size:20px;color:#9a9a9a;transform:scale(0.2350,0.25);">Camera Position</span>
<span class="t" style="left:67px;top:291.93px;font-size:20px;color:#9a9a9a;transform:scale(0.2350,0.25);">Explicit</span>
<div style="left:1.5px;top:297.79px;width:132.6px;height:7.51px;background:#dadada;"></div>
<span class="t" style="left:3px;top:299.44px;font-size:20px;color:#111;transform:scale(0.2475,0.25);">Identity Data</span>
<svg style="left:129.6px;top:300.04px" width="3" height="3.2" viewBox="0 0 3 3.2"><path d="M0.3 1.5L1.5 0.3L2.7 1.5M0.3 3L1.5 1.8L2.7 3" fill="none" stroke="#333" stroke-width="0.5"/></svg>
<div style="left:1.5px;top:312.41px;width:132.6px;height:0.5px;background:#dedede;"></div>
<span class="t" style="left:6.4px;top:306.96px;font-size:20px;color:#1f1f1f;transform:scale(0.2350,0.25);">View Template</span>
<div style="left:65.6px;top:305.6px;width:63.6px;height:6.71px;background:#e4e4e4;box-shadow:inset 0 0 0 0.5px #b4b4b4;"></div>
<span class="t" style="left:89.14px;top:306.96px;font-size:20px;color:#1f1f1f;transform:scale(0.2350,0.25);">&lt;None&gt;</span>
<div style="left:1.5px;top:319.93px;width:132.6px;height:0.5px;background:#dedede;"></div>
<span class="t" style="left:6.4px;top:314.47px;font-size:20px;color:#1f1f1f;transform:scale(0.2350,0.25);">View Name</span>
<span class="t" style="left:67px;top:314.47px;font-size:20px;color:#1f1f1f;transform:scale(0.2350,0.25);">3D View 2</span>
<div style="left:1.5px;top:327.44px;width:132.6px;height:0.5px;background:#dedede;"></div>
<span class="t" style="left:6.4px;top:321.98px;font-size:20px;color:#9a9a9a;transform:scale(0.2350,0.25);">Dependency</span>
<span class="t" style="left:67px;top:321.98px;font-size:20px;color:#9a9a9a;transform:scale(0.2350,0.25);">Independent</span>
<div style="left:1.5px;top:334.95px;width:132.6px;height:0.5px;background:#dedede;"></div>
<span class="t" style="left:6.4px;top:329.49px;font-size:20px;color:#1f1f1f;transform:scale(0.2350,0.25);">Title on Sheet</span>
<div style="left:1.5px;top:335.35px;width:132.6px;height:7.51px;background:#dadada;"></div>
<span class="t" style="left:3px;top:337.01px;font-size:20px;color:#111;transform:scale(0.2475,0.25);">Phasing</span>
<svg style="left:129.6px;top:337.61px" width="3" height="3.2" viewBox="0 0 3 3.2"><path d="M0.3 1.5L1.5 0.3L2.7 1.5M0.3 3L1.5 1.8L2.7 3" fill="none" stroke="#333" stroke-width="0.5"/></svg>
<div style="left:1.5px;top:349.98px;width:132.6px;height:0.5px;background:#dedede;"></div>
<span class="t" style="left:6.4px;top:344.52px;font-size:20px;color:#1f1f1f;transform:scale(0.2350,0.25);">Phase Filter</span>
<span class="t" style="left:67px;top:344.52px;font-size:20px;color:#1f1f1f;transform:scale(0.2350,0.25);">Show All</span>
<div style="left:1.5px;top:357.49px;width:132.6px;height:0.5px;background:#dedede;"></div>
<span class="t" style="left:6.4px;top:352.03px;font-size:20px;color:#1f1f1f;transform:scale(0.2350,0.25);">Phase</span>
<span class="t" style="left:67px;top:352.03px;font-size:20px;color:#1f1f1f;transform:scale(0.2350,0.25);">New Construction</span>
<div style="left:64.6px;top:132.5px;width:0.5px;height:225.39px;background:#d6d6d6;"></div>
<div style="left:129.4px;top:132.9px;width:0.5px;height:225.39px;background:#d6d6d6;"></div>
<div style="left:135.2px;top:84px;width:0.7px;height:341px;background:#c4c4c4;"></div>
<div style="left:0px;top:414.4px;width:135.5px;height:11.6px;background:#f0f0f0;"></div>
<span class="t" style="left:3px;top:417.8px;font-size:20px;color:#1b55c0;transform:scale(0.2453,0.25);">Properties help</span>
<div style="left:3px;top:422.6px;width:33px;height:0.4px;background:#1b55c0;"></div>
<div style="left:103.2px;top:415.9px;width:30.8px;height:8.8px;background:#d2d2d2;box-shadow:inset 0 0 0 0.5px #c0c0c0;"></div>
<span class="t" style="left:113px;top:417.8px;font-size:20px;color:#a2a2a2;transform:scale(0.2399,0.25);">Apply</span>
<div style="left:136px;top:83.6px;width:302px;height:8.7px;background:#c9c9c9;"></div>
<div style="left:136.2px;top:83.6px;width:53.6px;height:9px;background:#fff;"></div>
<svg style="left:138.6px;top:85.4px" width="7" height="7" viewBox="0 0 7 7"><path d="M3.5 0.6L6.4 2.8V5.8L3.8 6.6L0.6 5.2V2.6Z" fill="#fff" stroke="#444" stroke-width="0.7" stroke-linejoin="round"/><path d="M0.6 2.6L3.8 4L6.4 2.8M3.8 4V6.6" fill="none" stroke="#444" stroke-width="0.5"/></svg>
<span class="t" style="left:147.6px;top:86.8px;font-size:20px;color:#222;transform:scale(0.2621,0.25);">3D View 2</span>
<svg style="left:183.6px;top:87px" width="3.8" height="3.8" viewBox="0 0 3.8 3.8"><path d="M0.3 0.3L3.5 3.5M3.5 0.3L0.3 3.5" stroke="#222" stroke-width="0.8"/></svg>
<div style="left:136px;top:92.3px;width:302px;height:325.7px;background:#fff;"></div>
<svg id="revit-model" style="left:0;top:0" width="438" height="438" viewBox="0 0 438 438"><defs><linearGradient id="bs" x1="0" y1="0" x2="0" y2="1"><stop offset="0" stop-color="#f6cf96"/><stop offset="0.25" stop-color="#f5c68c"/><stop offset="0.36" stop-color="#e6875f"/><stop offset="0.5" stop-color="#f0a676"/><stop offset="0.68" stop-color="#f6c589"/><stop offset="0.8" stop-color="#ea8d64"/><stop offset="1" stop-color="#ee9a6c"/></linearGradient><linearGradient id="bf" x1="0" y1="0" x2="0" y2="1"><stop offset="0" stop-color="#784830"/><stop offset="0.3" stop-color="#7a4a2e"/><stop offset="0.38" stop-color="#70432d"/><stop offset="0.5" stop-color="#764632"/><stop offset="0.7" stop-color="#6e4230"/><stop offset="1" stop-color="#7c4a33"/></linearGradient></defs><g><linearGradient id="gl" x1="0" y1="0" x2="0" y2="1"><stop offset="0" stop-color="#828282"/><stop offset="0.35" stop-color="#979797"/><stop offset="0.6" stop-color="#bcbcbc"/><stop offset="1" stop-color="#e2e2e2"/></linearGradient><polygon points="136.9,330.7 177,328.2 177,356.2 136.9,350.8" fill="url(#gl)"/><line x1="136.9" y1="331.2" x2="177" y2="328.8" stroke="#7c7c7c" stroke-width="0.5"/><line x1="136.9" y1="332.34" x2="177" y2="330.39" stroke="#a8a8a8" stroke-width="0.5"/><line x1="136.9" y1="333.48" x2="177" y2="331.98" stroke="#7c7c7c" stroke-width="0.5"/><line x1="136.9" y1="334.62" x2="177" y2="333.56" stroke="#a8a8a8" stroke-width="0.5"/><line x1="136.9" y1="335.76" x2="177" y2="335.15" stroke="#7c7c7c" stroke-width="0.5"/><line x1="136.9" y1="336.91" x2="177" y2="336.74" stroke="#a8a8a8" stroke-width="0.5"/><line x1="136.9" y1="338.05" x2="177" y2="338.33" stroke="#7c7c7c" stroke-width="0.5"/><line x1="136.9" y1="339.19" x2="177" y2="339.92" stroke="#fafafa" stroke-width="0.75"/><line x1="136.9" y1="340.33" x2="177" y2="341.51" stroke="#8a8a8a" stroke-width="0.75"/><line x1="136.9" y1="341.47" x2="177" y2="343.09" stroke="#fafafa" stroke-width="0.75"/><line x1="136.9" y1="342.61" x2="177" y2="344.68" stroke="#8a8a8a" stroke-width="0.75"/><line x1="136.9" y1="343.75" x2="177" y2="346.27" stroke="#fafafa" stroke-width="0.75"/><line x1="136.9" y1="344.89" x2="177" y2="347.86" stroke="#8a8a8a" stroke-width="0.75"/><line x1="136.9" y1="346.04" x2="177" y2="349.45" stroke="#fafafa" stroke-width="0.75"/><line x1="136.9" y1="347.18" x2="177" y2="351.04" stroke="#8a8a8a" stroke-width="0.75"/><line x1="136.9" y1="348.32" x2="177" y2="352.62" stroke="#fafafa" stroke-width="0.75"/><line x1="136.9" y1="349.46" x2="177" y2="354.21" stroke="#8a8a8a" stroke-width="0.75"/><line x1="136.9" y1="350.6" x2="177" y2="355.8" stroke="#fafafa" stroke-width="0.75"/></g><path d="M378 191L387 190L390.1 192.6L392.8 195.2L394.6 197.1L395.1 197.7L396.9 200.3L397.6 201.3L398.3 202.8L398.4 202.9L399 204.2L399.5 205.5L399.5 205.6L400 207L400.5 208L400.6 208.4L400.2 209.8L399.9 210.6L399.8 211.3L399.4 212.7L399.2 213.2L399 214.1L398.5 215.5L398.5 215.8L398.1 216.9L397.6 218.3L397.6 218.3L397.1 219.8L397.1 219.8L396.5 220.9L394.7 223.5L392.7 226.1L391 228.6L390.1 231.1L390.1 231.2L389.9 233.8L389.7 236.4L389.6 239L389.6 239.6L389.8 241.5L390.5 244.1L391.4 246.7L391.4 246.7L392.4 249.3L393.6 251.8L395 254.4L396.4 257L397.8 259.6L399.2 262.1L400.4 264.7L401.3 267.3L401.5 267.9L402 269.9L402.7 272.4L403.4 275L404 277.6L404.5 280.2L405 282.7L405.4 285.3L405.7 287.9L405.9 290.5L405.9 292L405.9 293.1L405.5 295.6L404.9 298.2L404 300.8L403.1 303.4L403.1 303.4L401.7 305.9L399.7 308.5L397.4 311.1L395.1 313.7L393.1 316.2L392.4 317.5L391.7 318.8L390.5 321.4L389.4 324L388.4 326.5L387.6 329.1L387 331.7L378 332.2Z" fill="url(#bf)"/><path d="M387 190L390.1 192.6L392.8 195.2L394.6 197.1L395.1 197.7L396.9 200.3L397.6 201.3L398.3 202.8L398.4 202.9L399 204.2L399.5 205.5L399.5 205.6L400 207L400.5 208L400.6 208.4L400.2 209.8L399.9 210.6L399.8 211.3L399.4 212.7L399.2 213.2L399 214.1L398.5 215.5L398.5 215.8L398.1 216.9L397.6 218.3L397.6 218.3L397.1 219.8L397.1 219.8L396.5 220.9L394.7 223.5L392.7 226.1L391 228.6L390.1 231.1L390.1 231.2L389.9 233.8L389.7 236.4L389.6 239L389.6 239.6L389.8 241.5L390.5 244.1L391.4 246.7L391.4 246.7L392.4 249.3L393.6 251.8L395 254.4L396.4 257L397.8 259.6L399.2 262.1L400.4 264.7L401.3 267.3L401.5 267.9L402 269.9L402.7 272.4L403.4 275L404 277.6L404.5 280.2L405 282.7L405.4 285.3L405.7 287.9L405.9 290.5L405.9 292L405.9 293.1L405.5 295.6L404.9 298.2L404 300.8L403.1 303.4L403.1 303.4L401.7 305.9L399.7 308.5L397.4 311.1L395.1 313.7L393.1 316.2L392.4 317.5L391.7 318.8L390.5 321.4L389.4 324L388.4 326.5L387.6 329.1L387 331.7" fill="none" stroke="url(#bs)" stroke-width="0.8" stroke-opacity="0.72" stroke-linejoin="round"/><path d="M400.2 209.8L399.9 210.6L399.8 211.3L399.4 212.7L399.2 213.2L399 214.1L398.5 215.5L398.5 215.8L398.1 216.9L397.6 218.3L397.6 218.3L397.1 219.8L397.1 219.8L396.5 220.9L394.7 223.5" fill="none" stroke="#2a1a10" stroke-width="1.1" stroke-opacity="0.15"/><path d="M375.1 190.2L384.1 189.2L387.1 191.8L389.7 194.4L391.8 196.8L391.9 197L393.8 199.6L395.5 202.2L395.5 202.3L396 203.1L396.3 203.7L396.7 204.8L396.9 205.2L397.5 206.6L397.7 207.4L398 208L398.6 209.5L398.5 209.9L398.1 210.9L397.7 212.3L397.6 212.5L397.3 213.7L396.9 215.1L396.9 215.2L396.4 216.6L396.1 217.7L396 218L395.4 219.5L395.1 220.3L395.1 220.3L394.8 220.9L393.5 222.9L391.5 225.5L389.5 228.1L388.3 230.7L388.2 231.3L387.9 233.3L387.5 235.9L387.4 238.5L387.3 240.2L387.4 241.1L387.7 243.7L388.3 246.3L388.9 248.7L389 248.9L389.9 251.5L391.1 254.1L392.5 256.7L394 259.3L395.5 261.9L396.9 264.5L398 267.1L398.5 268.9L398.8 269.7L399.5 272.3L400.2 274.9L400.8 277.5L401.4 280.1L401.9 282.7L402.3 285.3L402.6 287.9L402.8 290.5L402.8 291.8L402.7 293.1L402.3 295.7L401.6 298.3L400.8 300.9L399.9 303.3L399.8 303.5L398.4 306.1L396.5 308.7L394.3 311.3L392.1 313.9L390.2 316.5L389.5 317.8L388.9 319.1L387.7 321.7L386.6 324.3L385.6 326.9L384.8 329.5L384.1 332.1L375.1 332.6Z" fill="url(#bf)"/><path d="M384.1 189.2L387.1 191.8L389.7 194.4L391.8 196.8L391.9 197L393.8 199.6L395.5 202.2L395.5 202.3L396 203.1L396.3 203.7L396.7 204.8L396.9 205.2L397.5 206.6L397.7 207.4L398 208L398.6 209.5L398.5 209.9L398.1 210.9L397.7 212.3L397.6 212.5L397.3 213.7L396.9 215.1L396.9 215.2L396.4 216.6L396.1 217.7L396 218L395.4 219.5L395.1 220.3L395.1 220.3L394.8 220.9L393.5 222.9L391.5 225.5L389.5 228.1L388.3 230.7L388.2 231.3L387.9 233.3L387.5 235.9L387.4 238.5L387.3 240.2L387.4 241.1L387.7 243.7L388.3 246.3L388.9 248.7L389 248.9L389.9 251.5L391.1 254.1L392.5 256.7L394 259.3L395.5 261.9L396.9 264.5L398 267.1L398.5 268.9L398.8 269.7L399.5 272.3L400.2 274.9L400.8 277.5L401.4 280.1L401.9 282.7L402.3 285.3L402.6 287.9L402.8 290.5L402.8 291.8L402.7 293.1L402.3 295.7L401.6 298.3L400.8 300.9L399.9 303.3L399.8 303.5L398.4 306.1L396.5 308.7L394.3 311.3L392.1 313.9L390.2 316.5L389.5 317.8L388.9 319.1L387.7 321.7L386.6 324.3L385.6 326.9L384.8 329.5L384.1 332.1" fill="none" stroke="url(#bs)" stroke-width="0.81" stroke-opacity="0.72" stroke-linejoin="round"/><path d="M398.5 209.9L398.1 210.9L397.7 212.3L397.6 212.5L397.3 213.7L396.9 215.1L396.9 215.2L396.4 216.6L396.1 217.7L396 218L395.4 219.5L395.1 220.3L395.1 220.3L394.8 220.9L393.5 222.9L391.5 225.5" fill="none" stroke="#2a1a10" stroke-width="1.11" stroke-opacity="0.19"/><path d="M372.2 189.3L381.2 188.3L384 190.9L386.5 193.6L388.7 196.2L389 196.5L390.7 198.8L392.4 201.4L393.5 203.3L393.6 203.5L393.8 204L394.2 204.8L394.8 206.2L395 206.7L395.4 207.7L396 209.1L396 209.3L396.6 210.5L396.1 211.9L396.1 212L395.6 213.4L395.3 214.5L395.2 214.9L394.7 216.3L394.5 217.1L394.3 217.8L393.7 219.2L393.5 219.8L393.2 220.6L393 220.9L392.4 222.1L392.2 222.4L390.3 225L388.2 227.6L386.6 230.2L386.2 231.5L385.9 232.9L385.5 235.5L385.2 238.1L385 240.7L385 240.8L385.2 243.3L385.5 246L386 248.6L386.4 250.8L386.5 251.2L387.4 253.8L388.6 256.4L390.1 259.1L391.6 261.7L393.2 264.3L394.5 266.9L395.5 269.5L395.5 269.8L396.2 272.2L396.9 274.8L397.6 277.4L398.2 280L398.7 282.6L399.1 285.3L399.4 287.9L399.6 290.5L399.6 291.6L399.5 293.1L399.1 295.7L398.3 298.4L397.4 301L396.6 303.2L396.5 303.6L395.1 306.2L393.2 308.8L391.1 311.5L389.1 314.1L387.3 316.7L386.6 318L385.9 319.3L384.8 321.9L383.7 324.6L382.7 327.2L381.9 329.8L381.2 332.4L372.2 332.9Z" fill="url(#bf)"/><path d="M381.2 188.3L384 190.9L386.5 193.6L388.7 196.2L389 196.5L390.7 198.8L392.4 201.4L393.5 203.3L393.6 203.5L393.8 204L394.2 204.8L394.8 206.2L395 206.7L395.4 207.7L396 209.1L396 209.3L396.6 210.5L396.1 211.9L396.1 212L395.6 213.4L395.3 214.5L395.2 214.9L394.7 216.3L394.5 217.1L394.3 217.8L393.7 219.2L393.5 219.8L393.2 220.6L393 220.9L392.4 222.1L392.2 222.4L390.3 225L388.2 227.6L386.6 230.2L386.2 231.5L385.9 232.9L385.5 235.5L385.2 238.1L385 240.7L385 240.8L385.2 243.3L385.5 246L386 248.6L386.4 250.8L386.5 251.2L387.4 253.8L388.6 256.4L390.1 259.1L391.6 261.7L393.2 264.3L394.5 266.9L395.5 269.5L395.5 269.8L396.2 272.2L396.9 274.8L397.6 277.4L398.2 280L398.7 282.6L399.1 285.3L399.4 287.9L399.6 290.5L399.6 291.6L399.5 293.1L399.1 295.7L398.3 298.4L397.4 301L396.6 303.2L396.5 303.6L395.1 306.2L393.2 308.8L391.1 311.5L389.1 314.1L387.3 316.7L386.6 318L385.9 319.3L384.8 321.9L383.7 324.6L382.7 327.2L381.9 329.8L381.2 332.4" fill="none" stroke="url(#bs)" stroke-width="0.82" stroke-opacity="0.73" stroke-linejoin="round"/><path d="M396.1 211.9L396.1 212L395.6 213.4L395.3 214.5L395.2 214.9L394.7 216.3L394.5 217.1L394.3 217.8L393.7 219.2L393.5 219.8L393.2 220.6L393 220.9L392.4 222.1L392.2 222.4L390.3 225" fill="none" stroke="#2a1a10" stroke-width="1.12" stroke-opacity="0.22"/><path d="M369.3 188.4L378.3 187.4L380.9 190.1L383.3 192.7L385.4 195.4L386.1 196.3L387.4 198L389.2 200.7L390.8 203.3L391.1 204L391.4 204.4L392 205.9L392.1 205.9L392.7 207.3L393.2 208.6L393.3 208.8L393.9 210.2L394.4 211.2L394.5 211.7L394 213.1L393.7 213.9L393.5 214.6L393 216L392.9 216.5L392.5 217.5L392 219L392 219.2L391.5 220.4L391 221.6L390.9 221.8L390.8 221.9L389.9 223.3L389.1 224.4L386.9 227.1L385 229.7L384.1 231.8L384 232.4L383.4 235L383 237.7L382.7 240.3L382.7 241.5L382.7 242.9L382.9 245.6L383.2 248.2L383.6 250.9L383.9 253L384 253.5L384.8 256.2L386.1 258.8L387.6 261.4L389.3 264.1L390.8 266.7L392 269.4L392.5 270.8L392.8 272L393.5 274.6L394.2 277.3L394.9 279.9L395.4 282.6L395.9 285.2L396.2 287.9L396.3 290.5L396.4 291.3L396.2 293.1L395.8 295.8L395 298.4L394 301.1L393.3 303.1L393.1 303.7L391.7 306.4L389.9 309L387.9 311.6L386 314.3L384.3 316.9L383.6 318.2L383 319.6L381.8 322.2L380.7 324.9L379.8 327.5L378.9 330.1L378.2 332.8L369.2 333.3Z" fill="url(#bf)"/><path d="M378.3 187.4L380.9 190.1L383.3 192.7L385.4 195.4L386.1 196.3L387.4 198L389.2 200.7L390.8 203.3L391.1 204L391.4 204.4L392 205.9L392.1 205.9L392.7 207.3L393.2 208.6L393.3 208.8L393.9 210.2L394.4 211.2L394.5 211.7L394 213.1L393.7 213.9L393.5 214.6L393 216L392.9 216.5L392.5 217.5L392 219L392 219.2L391.5 220.4L391 221.6L390.9 221.8L390.8 221.9L389.9 223.3L389.1 224.4L386.9 227.1L385 229.7L384.1 231.8L384 232.4L383.4 235L383 237.7L382.7 240.3L382.7 241.5L382.7 242.9L382.9 245.6L383.2 248.2L383.6 250.9L383.9 253L384 253.5L384.8 256.2L386.1 258.8L387.6 261.4L389.3 264.1L390.8 266.7L392 269.4L392.5 270.8L392.8 272L393.5 274.6L394.2 277.3L394.9 279.9L395.4 282.6L395.9 285.2L396.2 287.9L396.3 290.5L396.4 291.3L396.2 293.1L395.8 295.8L395 298.4L394 301.1L393.3 303.1L393.1 303.7L391.7 306.4L389.9 309L387.9 311.6L386 314.3L384.3 316.9L383.6 318.2L383 319.6L381.8 322.2L380.7 324.9L379.8 327.5L378.9 330.1L378.2 332.8" fill="none" stroke="url(#bs)" stroke-width="0.83" stroke-opacity="0.73" stroke-linejoin="round"/><path d="M394 213.1L393.7 213.9L393.5 214.6L393 216L392.9 216.5L392.5 217.5L392 219L392 219.2L391.5 220.4L391 221.6L390.9 221.8L390.8 221.9L389.9 223.3L389.1 224.4" fill="none" stroke="#2a1a10" stroke-width="1.13" stroke-opacity="0.26"/><path d="M366.2 187.6L375.2 186.6L377.7 189.2L380 191.9L382.1 194.6L383.2 196L384.1 197.2L385.9 199.9L387.6 202.6L388.7 204.5L389 205.2L389.2 205.6L389.9 207L390.3 207.9L390.5 208.5L391.1 210L391.4 210.5L391.8 211.4L392.4 212.9L392.3 213.2L391.9 214.3L391.3 215.8L391.3 215.9L390.8 217.3L390.4 218.5L390.3 218.7L389.8 220.2L389.3 221.2L389.1 221.7L388.9 222.3L388.4 223.1L387.9 223.9L387.3 224.6L385.7 226.5L383.6 229.2L382.1 231.9L382.1 232.1L381.4 234.5L380.8 237.2L380.4 239.9L380.3 242.1L380.3 242.5L380.4 245.2L380.5 247.9L380.8 250.5L381 253.2L381.3 255.2L381.4 255.9L382.2 258.5L383.6 261.2L385.2 263.9L386.8 266.5L388.3 269.2L389.3 271.9L389.3 271.9L390.1 274.5L390.8 277.2L391.5 279.8L392.1 282.5L392.6 285.2L392.9 287.8L393 290.5L393 291L392.9 293.2L392.3 295.8L391.5 298.5L390.6 301.2L389.9 303L389.6 303.8L388.2 306.5L386.5 309.2L384.6 311.8L382.8 314.5L381.2 317.2L380.5 318.5L379.9 319.8L378.8 322.5L377.7 325.2L376.8 327.8L375.9 330.5L375.2 333.2L366.2 333.7Z" fill="url(#bf)"/><path d="M375.2 186.6L377.7 189.2L380 191.9L382.1 194.6L383.2 196L384.1 197.2L385.9 199.9L387.6 202.6L388.7 204.5L389 205.2L389.2 205.6L389.9 207L390.3 207.9L390.5 208.5L391.1 210L391.4 210.5L391.8 211.4L392.4 212.9L392.3 213.2L391.9 214.3L391.3 215.8L391.3 215.9L390.8 217.3L390.4 218.5L390.3 218.7L389.8 220.2L389.3 221.2L389.1 221.7L388.9 222.3L388.4 223.1L387.9 223.9L387.3 224.6L385.7 226.5L383.6 229.2L382.1 231.9L382.1 232.1L381.4 234.5L380.8 237.2L380.4 239.9L380.3 242.1L380.3 242.5L380.4 245.2L380.5 247.9L380.8 250.5L381 253.2L381.3 255.2L381.4 255.9L382.2 258.5L383.6 261.2L385.2 263.9L386.8 266.5L388.3 269.2L389.3 271.9L389.3 271.9L390.1 274.5L390.8 277.2L391.5 279.8L392.1 282.5L392.6 285.2L392.9 287.8L393 290.5L393 291L392.9 293.2L392.3 295.8L391.5 298.5L390.6 301.2L389.9 303L389.6 303.8L388.2 306.5L386.5 309.2L384.6 311.8L382.8 314.5L381.2 317.2L380.5 318.5L379.9 319.8L378.8 322.5L377.7 325.2L376.8 327.8L375.9 330.5L375.2 333.2" fill="none" stroke="url(#bs)" stroke-width="0.84" stroke-opacity="0.74" stroke-linejoin="round"/><path d="M392.3 213.2L391.9 214.3L391.3 215.8L391.3 215.9L390.8 217.3L390.4 218.5L390.3 218.7L389.8 220.2L389.3 221.2L389.1 221.7L388.9 222.3L388.4 223.1L387.9 223.9L387.3 224.6L385.7 226.5" fill="none" stroke="#2a1a10" stroke-width="1.14" stroke-opacity="0.3"/><path d="M363.1 186.7L372.1 185.7L374.5 188.3L376.7 191L378.8 193.7L380.3 195.8L380.7 196.4L382.6 199.1L384.3 201.8L385.9 204.5L386.1 205L387 206.7L387.2 207.2L387.7 208.2L388.3 209.7L388.4 209.9L389 211.2L389.6 212.5L389.6 212.7L390.3 214.1L390.3 214.1L389.8 215.2L389.7 215.6L389.1 217.1L388.8 217.9L388.6 218.6L388 220.1L387.8 220.6L387.4 221.5L386.7 223L386.7 223L386.6 223.3L385.8 224.5L384.6 226L384.6 226L382.3 228.7L380.4 231.4L380 232.4L379.5 234.1L378.7 236.7L378.2 239.4L377.9 242.1L377.9 242.9L377.9 244.8L378 247.5L378.1 250.2L378.3 252.9L378.5 255.6L378.6 257.6L378.7 258.3L379.6 260.9L381 263.6L382.7 266.3L384.3 269L385.7 271.7L386.1 273L386.5 274.4L387.3 277.1L388 279.8L388.6 282.5L389.1 285.1L389.5 287.8L389.6 290.5L389.6 290.8L389.4 293.2L388.8 295.9L388 298.6L387 301.3L386.4 302.9L386 304L384.7 306.7L383 309.3L381.3 312L379.6 314.7L378.1 317.4L377.4 318.8L376.8 320.1L375.7 322.8L374.7 325.5L373.7 328.2L372.8 330.9L372.1 333.5L363.1 334Z" fill="url(#bf)"/><path d="M372.1 185.7L374.5 188.3L376.7 191L378.8 193.7L380.3 195.8L380.7 196.4L382.6 199.1L384.3 201.8L385.9 204.5L386.1 205L387 206.7L387.2 207.2L387.7 208.2L388.3 209.7L388.4 209.9L389 211.2L389.6 212.5L389.6 212.7L390.3 214.1L390.3 214.1L389.8 215.2L389.7 215.6L389.1 217.1L388.8 217.9L388.6 218.6L388 220.1L387.8 220.6L387.4 221.5L386.7 223L386.7 223L386.6 223.3L385.8 224.5L384.6 226L384.6 226L382.3 228.7L380.4 231.4L380 232.4L379.5 234.1L378.7 236.7L378.2 239.4L377.9 242.1L377.9 242.9L377.9 244.8L378 247.5L378.1 250.2L378.3 252.9L378.5 255.6L378.6 257.6L378.7 258.3L379.6 260.9L381 263.6L382.7 266.3L384.3 269L385.7 271.7L386.1 273L386.5 274.4L387.3 277.1L388 279.8L388.6 282.5L389.1 285.1L389.5 287.8L389.6 290.5L389.6 290.8L389.4 293.2L388.8 295.9L388 298.6L387 301.3L386.4 302.9L386 304L384.7 306.7L383 309.3L381.3 312L379.6 314.7L378.1 317.4L377.4 318.8L376.8 320.1L375.7 322.8L374.7 325.5L373.7 328.2L372.8 330.9L372.1 333.5" fill="none" stroke="url(#bs)" stroke-width="0.85" stroke-opacity="0.74" stroke-linejoin="round"/><path d="M389.8 215.2L389.7 215.6L389.1 217.1L388.8 217.9L388.6 218.6L388 220.1L387.8 220.6L387.4 221.5L386.7 223L386.7 223L386.6 223.3L385.8 224.5L384.6 226L384.6 226" fill="none" stroke="#2a1a10" stroke-width="1.15" stroke-opacity="0.34"/><path d="M360 185.7L369 184.7L371.2 187.4L373.3 190.2L375.3 192.9L377.2 195.5L377.3 195.6L379.1 198.3L380.9 201L382.6 203.7L383.6 205.5L384 206.4L384.8 208L385.3 209.1L385.5 209.5L386.1 211L386.5 211.9L386.8 212.5L387.4 214L387.7 214.6L388.1 215.5L387.5 216.9L387.4 217.3L386.9 218.4L386.3 219.9L386.3 220L385.7 221.4L385.1 222.7L385 222.9L384.6 223.7L384.2 224.4L383.4 225.4L383.1 225.9L381.8 227.4L381.1 228.1L378.8 230.8L377.9 232.7L377.6 233.6L376.7 236.3L376 239L375.6 241.7L375.5 243.6L375.5 244.4L375.5 247.1L375.5 249.8L375.6 252.6L375.7 255.3L375.8 258L375.9 260.1L376 260.7L376.9 263.4L378.4 266.1L380.1 268.8L381.8 271.5L382.9 274.1L382.9 274.3L383.7 277L384.4 279.7L385.1 282.4L385.7 285.1L386 287.8L386.2 290.5L386.2 290.5L385.9 293.2L385.3 296L384.4 298.7L383.4 301.4L382.9 302.8L382.4 304.1L381.1 306.8L379.5 309.5L377.9 312.2L376.3 314.9L374.9 317.7L374.3 319L373.7 320.4L372.6 323.1L371.6 325.8L370.6 328.5L369.7 331.2L368.9 333.9L359.9 334.4Z" fill="url(#bf)"/><path d="M369 184.7L371.2 187.4L373.3 190.2L375.3 192.9L377.2 195.5L377.3 195.6L379.1 198.3L380.9 201L382.6 203.7L383.6 205.5L384 206.4L384.8 208L385.3 209.1L385.5 209.5L386.1 211L386.5 211.9L386.8 212.5L387.4 214L387.7 214.6L388.1 215.5L387.5 216.9L387.4 217.3L386.9 218.4L386.3 219.9L386.3 220L385.7 221.4L385.1 222.7L385 222.9L384.6 223.7L384.2 224.4L383.4 225.4L383.1 225.9L381.8 227.4L381.1 228.1L378.8 230.8L377.9 232.7L377.6 233.6L376.7 236.3L376 239L375.6 241.7L375.5 243.6L375.5 244.4L375.5 247.1L375.5 249.8L375.6 252.6L375.7 255.3L375.8 258L375.9 260.1L376 260.7L376.9 263.4L378.4 266.1L380.1 268.8L381.8 271.5L382.9 274.1L382.9 274.3L383.7 277L384.4 279.7L385.1 282.4L385.7 285.1L386 287.8L386.2 290.5L386.2 290.5L385.9 293.2L385.3 296L384.4 298.7L383.4 301.4L382.9 302.8L382.4 304.1L381.1 306.8L379.5 309.5L377.9 312.2L376.3 314.9L374.9 317.7L374.3 319L373.7 320.4L372.6 323.1L371.6 325.8L370.6 328.5L369.7 331.2L368.9 333.9" fill="none" stroke="url(#bs)" stroke-width="0.86" stroke-opacity="0.74" stroke-linejoin="round"/><path d="M387.5 216.9L387.4 217.3L386.9 218.4L386.3 219.9L386.3 220L385.7 221.4L385.1 222.7L385 222.9L384.6 223.7L384.2 224.4L383.4 225.4L383.1 225.9L381.8 227.4" fill="none" stroke="#2a1a10" stroke-width="1.16" stroke-opacity="0.38"/><path d="M356.7 184.8L365.7 183.8L367.8 186.5L369.9 189.3L371.8 192L373.7 194.7L374.1 195.3L375.6 197.5L377.4 200.2L379.2 202.9L380.7 205.7L380.9 206.1L382.1 208.4L382.5 209.3L383.2 210.8L383.4 211.2L383.9 212.3L384.6 213.8L384.6 213.9L385.2 215.3L385.9 216.6L385.9 216.8L385.3 218.3L384.8 219.4L384.6 219.8L384 221.3L383.6 222.1L383.3 222.9L382.5 224.4L382.4 224.5L382.2 224.8L381.5 225.9L380.2 227.4L380 227.6L378.8 228.9L377.5 230.3L375.8 233L375.7 233.1L374.7 235.8L373.9 238.5L373.3 241.3L373 244L373 244.4L373 246.7L373 249.5L373 252.2L373.1 255L373.1 257.7L373.2 260.4L373.2 262.6L373.2 263.2L374.1 265.9L375.7 268.6L377.5 271.4L379.1 274.1L379.5 275.3L380 276.9L380.8 279.6L381.5 282.3L382.1 285.1L382.5 287.8L382.6 290.2L382.6 290.5L382.3 293.3L381.6 296L380.6 298.7L379.6 301.5L379.2 302.6L378.6 304.2L377.4 307L375.9 309.7L374.4 312.4L373 315.2L371.6 317.9L371 319.3L370.5 320.6L369.4 323.4L368.4 326.1L367.4 328.9L366.5 331.6L365.7 334.3L356.7 334.8Z" fill="url(#bf)"/><path d="M365.7 183.8L367.8 186.5L369.9 189.3L371.8 192L373.7 194.7L374.1 195.3L375.6 197.5L377.4 200.2L379.2 202.9L380.7 205.7L380.9 206.1L382.1 208.4L382.5 209.3L383.2 210.8L383.4 211.2L383.9 212.3L384.6 213.8L384.6 213.9L385.2 215.3L385.9 216.6L385.9 216.8L385.3 218.3L384.8 219.4L384.6 219.8L384 221.3L383.6 222.1L383.3 222.9L382.5 224.4L382.4 224.5L382.2 224.8L381.5 225.9L380.2 227.4L380 227.6L378.8 228.9L377.5 230.3L375.8 233L375.7 233.1L374.7 235.8L373.9 238.5L373.3 241.3L373 244L373 244.4L373 246.7L373 249.5L373 252.2L373.1 255L373.1 257.7L373.2 260.4L373.2 262.6L373.2 263.2L374.1 265.9L375.7 268.6L377.5 271.4L379.1 274.1L379.5 275.3L380 276.9L380.8 279.6L381.5 282.3L382.1 285.1L382.5 287.8L382.6 290.2L382.6 290.5L382.3 293.3L381.6 296L380.6 298.7L379.6 301.5L379.2 302.6L378.6 304.2L377.4 307L375.9 309.7L374.4 312.4L373 315.2L371.6 317.9L371 319.3L370.5 320.6L369.4 323.4L368.4 326.1L367.4 328.9L366.5 331.6L365.7 334.3" fill="none" stroke="url(#bs)" stroke-width="0.87" stroke-opacity="0.75" stroke-linejoin="round"/><path d="M385.3 218.3L384.8 219.4L384.6 219.8L384 221.3L383.6 222.1L383.3 222.9L382.5 224.4L382.4 224.5L382.2 224.8L381.5 225.9L380.2 227.4L380 227.6L378.8 228.9" fill="none" stroke="#2a1a10" stroke-width="1.17" stroke-opacity="0.42"/><path d="M353.4 183.8L362.4 182.8L364.4 185.6L366.4 188.4L368.3 191.1L370.2 193.9L370.9 195L372 196.6L373.8 199.4L375.6 202.2L377.3 204.9L378.3 206.7L378.8 207.7L380.2 210.4L380.3 210.7L381 212.2L381.4 213.2L381.6 213.7L382.3 215.2L382.7 216L383 216.8L383.7 218.3L383.6 218.7L383 219.8L382.3 221.3L382.2 221.5L381.6 222.8L380.8 224.3L380.8 224.4L380.2 225.3L379.8 225.9L378.9 227L378.6 227.4L377.1 228.9L376.3 229.8L375.7 230.4L374 232.5L373.6 233.3L372.8 235.3L371.8 238.1L371 240.8L370.6 243.6L370.5 245.2L370.5 246.4L370.4 249.1L370.4 251.9L370.4 254.6L370.4 257.4L370.4 260.2L370.4 262.9L370.4 265.3L370.4 265.7L371.3 268.5L373 271.2L374.9 274L376.1 276.5L376.1 276.7L377 279.5L377.8 282.3L378.4 285L378.8 287.8L378.9 289.9L378.9 290.5L378.6 293.3L377.8 296.1L376.8 298.8L375.8 301.6L375.5 302.5L374.8 304.4L373.6 307.1L372.3 309.9L370.9 312.6L369.5 315.4L368.3 318.2L367.7 319.5L367.2 320.9L366.1 323.7L365.1 326.5L364.1 329.2L363.2 332L362.4 334.7L353.4 335.2Z" fill="url(#bf)"/><path d="M362.4 182.8L364.4 185.6L366.4 188.4L368.3 191.1L370.2 193.9L370.9 195L372 196.6L373.8 199.4L375.6 202.2L377.3 204.9L378.3 206.7L378.8 207.7L380.2 210.4L380.3 210.7L381 212.2L381.4 213.2L381.6 213.7L382.3 215.2L382.7 216L383 216.8L383.7 218.3L383.6 218.7L383 219.8L382.3 221.3L382.2 221.5L381.6 222.8L380.8 224.3L380.8 224.4L380.2 225.3L379.8 225.9L378.9 227L378.6 227.4L377.1 228.9L376.3 229.8L375.7 230.4L374 232.5L373.6 233.3L372.8 235.3L371.8 238.1L371 240.8L370.6 243.6L370.5 245.2L370.5 246.4L370.4 249.1L370.4 251.9L370.4 254.6L370.4 257.4L370.4 260.2L370.4 262.9L370.4 265.3L370.4 265.7L371.3 268.5L373 271.2L374.9 274L376.1 276.5L376.1 276.7L377 279.5L377.8 282.3L378.4 285L378.8 287.8L378.9 289.9L378.9 290.5L378.6 293.3L377.8 296.1L376.8 298.8L375.8 301.6L375.5 302.5L374.8 304.4L373.6 307.1L372.3 309.9L370.9 312.6L369.5 315.4L368.3 318.2L367.7 319.5L367.2 320.9L366.1 323.7L365.1 326.5L364.1 329.2L363.2 332L362.4 334.7" fill="none" stroke="url(#bs)" stroke-width="0.88" stroke-opacity="0.75" stroke-linejoin="round"/><path d="M383.6 218.7L383 219.8L382.3 221.3L382.2 221.5L381.6 222.8L380.8 224.3L380.8 224.4L380.2 225.3L379.8 225.9L378.9 227L378.6 227.4L377.1 228.9L376.3 229.8" fill="none" stroke="#2a1a10" stroke-width="1.18" stroke-opacity="0.46"/><path d="M350.1 182.8L359.1 181.8L361 184.6L362.9 187.4L364.7 190.2L366.5 193L367.7 194.8L368.3 195.8L370.2 198.6L372 201.4L373.7 204.1L375.4 206.9L375.6 207.3L376.8 209.7L378 212.1L378.1 212.5L378.7 213.7L379.4 215.2L379.4 215.3L380.1 216.7L380.7 218.1L380.8 218.3L381.5 219.8L381.5 219.8L380.9 220.9L380.6 221.3L379.9 222.9L379.4 223.7L379.1 224.4L378.2 225.9L378 226.2L377.8 226.4L377 227.5L375.5 229L375.2 229.2L373.9 230.5L372.5 232L372.5 232.1L371.4 233.7L370.9 234.8L369.8 237.6L368.9 240.4L368.2 243.2L367.9 246L367.9 246.1L367.8 248.7L367.8 251.5L367.7 254.3L367.6 257.1L367.6 259.9L367.6 262.7L367.6 265.5L367.6 268.1L367.6 268.3L368.5 271L370.3 273.8L372.1 276.6L372.6 277.8L373.1 279.4L373.9 282.2L374.7 285L375.1 287.8L375.2 289.6L375.2 290.6L374.7 293.3L373.9 296.1L372.9 298.9L371.9 301.7L371.7 302.4L370.9 304.5L369.8 307.3L368.6 310.1L367.3 312.9L366 315.6L364.9 318.4L364.3 319.8L363.8 321.2L362.8 324L361.8 326.8L360.8 329.6L359.9 332.4L359 335.2L350 335.7Z" fill="url(#bf)"/><path d="M359.1 181.8L361 184.6L362.9 187.4L364.7 190.2L366.5 193L367.7 194.8L368.3 195.8L370.2 198.6L372 201.4L373.7 204.1L375.4 206.9L375.6 207.3L376.8 209.7L378 212.1L378.1 212.5L378.7 213.7L379.4 215.2L379.4 215.3L380.1 216.7L380.7 218.1L380.8 218.3L381.5 219.8L381.5 219.8L380.9 220.9L380.6 221.3L379.9 222.9L379.4 223.7L379.1 224.4L378.2 225.9L378 226.2L377.8 226.4L377 227.5L375.5 229L375.2 229.2L373.9 230.5L372.5 232L372.5 232.1L371.4 233.7L370.9 234.8L369.8 237.6L368.9 240.4L368.2 243.2L367.9 246L367.9 246.1L367.8 248.7L367.8 251.5L367.7 254.3L367.6 257.1L367.6 259.9L367.6 262.7L367.6 265.5L367.6 268.1L367.6 268.3L368.5 271L370.3 273.8L372.1 276.6L372.6 277.8L373.1 279.4L373.9 282.2L374.7 285L375.1 287.8L375.2 289.6L375.2 290.6L374.7 293.3L373.9 296.1L372.9 298.9L371.9 301.7L371.7 302.4L370.9 304.5L369.8 307.3L368.6 310.1L367.3 312.9L366 315.6L364.9 318.4L364.3 319.8L363.8 321.2L362.8 324L361.8 326.8L360.8 329.6L359.9 332.4L359 335.2" fill="none" stroke="url(#bs)" stroke-width="0.89" stroke-opacity="0.76" stroke-linejoin="round"/><path d="M380.9 220.9L380.6 221.3L379.9 222.9L379.4 223.7L379.1 224.4L378.2 225.9L378 226.2L377.8 226.4L377 227.5L375.5 229L375.2 229.2" fill="none" stroke="#2a1a10" stroke-width="1.19" stroke-opacity="0.5"/><path d="M346.6 181.8L355.6 180.8L357.4 183.7L359.2 186.5L361 189.3L362.8 192.1L364.4 194.6L364.6 194.9L366.4 197.7L368.3 200.5L370.1 203.3L371.8 206.2L372.8 208L373.3 209L374.7 211.8L375.6 213.6L376.1 214.6L376.3 215.2L377 216.7L377.3 217.4L377.7 218.3L378.5 219.8L378.7 220.2L379.2 221.4L378.3 222.9L378.2 223L377.4 224.5L376.6 225.9L376.4 226L375.7 227.2L375.4 227.6L374.3 228.7L373.9 229.1L372.2 230.7L371.3 231.5L370.6 232.2L369.4 233.8L369.2 234.1L369.1 234.3L367.8 237.1L366.8 239.9L365.9 242.7L365.4 245.5L365.3 247L365.2 248.4L365.1 251.2L365 254L364.9 256.8L364.8 259.6L364.7 262.4L364.7 265.2L364.7 268.1L364.7 270.9L364.7 271L365.6 273.7L367.5 276.5L369 279.2L369 279.3L370 282.1L370.8 284.9L371.3 287.8L371.4 289.3L371.3 290.6L370.8 293.4L369.9 296.2L368.9 299L367.9 301.8L367.8 302.2L366.9 304.6L365.9 307.4L364.8 310.3L363.6 313.1L362.5 315.9L361.4 318.7L360.9 320.1L360.4 321.5L359.3 324.3L358.4 327.1L357.4 330L356.5 332.8L355.5 335.6L346.5 336.1Z" fill="url(#bf)"/><path d="M355.6 180.8L357.4 183.7L359.2 186.5L361 189.3L362.8 192.1L364.4 194.6L364.6 194.9L366.4 197.7L368.3 200.5L370.1 203.3L371.8 206.2L372.8 208L373.3 209L374.7 211.8L375.6 213.6L376.1 214.6L376.3 215.2L377 216.7L377.3 217.4L377.7 218.3L378.5 219.8L378.7 220.2L379.2 221.4L378.3 222.9L378.2 223L377.4 224.5L376.6 225.9L376.4 226L375.7 227.2L375.4 227.6L374.3 228.7L373.9 229.1L372.2 230.7L371.3 231.5L370.6 232.2L369.4 233.8L369.2 234.1L369.1 234.3L367.8 237.1L366.8 239.9L365.9 242.7L365.4 245.5L365.3 247L365.2 248.4L365.1 251.2L365 254L364.9 256.8L364.8 259.6L364.7 262.4L364.7 265.2L364.7 268.1L364.7 270.9L364.7 271L365.6 273.7L367.5 276.5L369 279.2L369 279.3L370 282.1L370.8 284.9L371.3 287.8L371.4 289.3L371.3 290.6L370.8 293.4L369.9 296.2L368.9 299L367.9 301.8L367.8 302.2L366.9 304.6L365.9 307.4L364.8 310.3L363.6 313.1L362.5 315.9L361.4 318.7L360.9 320.1L360.4 321.5L359.3 324.3L358.4 327.1L357.4 330L356.5 332.8L355.5 335.6" fill="none" stroke="url(#bs)" stroke-width="0.9" stroke-opacity="0.76" stroke-linejoin="round"/><path d="M378.3 222.9L378.2 223L377.4 224.5L376.6 225.9L376.4 226L375.7 227.2L375.4 227.6L374.3 228.7L373.9 229.1L372.2 230.7" fill="none" stroke="#2a1a10" stroke-width="1.2" stroke-opacity="0.54"/><path d="M343.1 180.8L352.1 179.8L353.8 182.7L355.6 185.5L357.3 188.3L359.1 191.2L360.8 194L361 194.4L362.6 196.9L364.4 199.7L366.3 202.5L368.1 205.4L369.7 208.2L370 208.7L371.2 211.1L372.6 213.9L373.2 215.2L373.9 216.7L374 216.8L374.7 218.4L375.2 219.6L375.4 219.9L376.1 221.5L376.7 222.4L376.9 223L375.8 224.6L375.4 225.3L374.8 226.2L373.7 227.7L373.4 228.1L373.4 228.1L372.3 229.3L370.5 230.9L370.4 230.9L368.7 232.4L367.4 233.8L367.3 234L366.9 234.6L366.4 235.5L365.9 236.6L364.7 239.5L363.7 242.3L363 245.1L362.6 248L362.6 248L362.5 250.8L362.3 253.7L362.1 256.5L362 259.3L361.9 262.2L361.8 265L361.8 267.9L361.7 270.7L361.7 273.5L361.7 274L362.6 276.4L364.6 279.2L365.3 280.6L365.9 282.1L366.8 284.9L367.4 287.7L367.5 288.9L367.4 290.6L366.8 293.4L365.8 296.3L364.8 299.1L363.8 301.9L363.7 302.1L362.9 304.8L361.9 307.6L360.9 310.5L359.9 313.3L358.8 316.1L357.8 319L357.3 320.4L356.8 321.8L355.9 324.7L354.9 327.5L353.9 330.3L353 333.2L352 336L343 336.5Z" fill="url(#bf)"/><path d="M352.1 179.8L353.8 182.7L355.6 185.5L357.3 188.3L359.1 191.2L360.8 194L361 194.4L362.6 196.9L364.4 199.7L366.3 202.5L368.1 205.4L369.7 208.2L370 208.7L371.2 211.1L372.6 213.9L373.2 215.2L373.9 216.7L374 216.8L374.7 218.4L375.2 219.6L375.4 219.9L376.1 221.5L376.7 222.4L376.9 223L375.8 224.6L375.4 225.3L374.8 226.2L373.7 227.7L373.4 228.1L373.4 228.1L372.3 229.3L370.5 230.9L370.4 230.9L368.7 232.4L367.4 233.8L367.3 234L366.9 234.6L366.4 235.5L365.9 236.6L364.7 239.5L363.7 242.3L363 245.1L362.6 248L362.6 248L362.5 250.8L362.3 253.7L362.1 256.5L362 259.3L361.9 262.2L361.8 265L361.8 267.9L361.7 270.7L361.7 273.5L361.7 274L362.6 276.4L364.6 279.2L365.3 280.6L365.9 282.1L366.8 284.9L367.4 287.7L367.5 288.9L367.4 290.6L366.8 293.4L365.8 296.3L364.8 299.1L363.8 301.9L363.7 302.1L362.9 304.8L361.9 307.6L360.9 310.5L359.9 313.3L358.8 316.1L357.8 319L357.3 320.4L356.8 321.8L355.9 324.7L354.9 327.5L353.9 330.3L353 333.2L352 336" fill="none" stroke="url(#bs)" stroke-width="0.91" stroke-opacity="0.77" stroke-linejoin="round"/><path d="M375.8 224.6L375.4 225.3L374.8 226.2L373.7 227.7L373.4 228.1L373.4 228.1L372.3 229.3L370.5 230.9L370.4 230.9" fill="none" stroke="#2a1a10" stroke-width="1.21" stroke-opacity="0.58"/><path d="M339.5 179.8L348.5 178.8L350.2 181.6L351.8 184.5L353.5 187.4L355.2 190.2L356.9 193.1L357.6 194.2L358.7 196L360.5 198.8L362.4 201.7L364.2 204.6L366 207.4L367.1 209.5L367.6 210.3L369 213.2L370.4 216L370.8 216.9L371.6 218.5L371.8 218.9L372.3 220.1L373 221.6L373.1 221.8L373.8 223.2L374.5 224.6L374.6 224.8L373.3 226.4L372.4 227.5L372.1 227.9L371 229.2L370.7 229.5L369.7 230.4L368.8 231.1L366.8 232.7L366.2 233.2L365.2 234.3L364.7 235L364.2 235.8L364.1 236.1L363.4 237.4L362.7 239L361.5 241.8L360.7 244.7L360.1 247.6L360 249L359.8 250.4L359.6 253.3L359.4 256.2L359.2 259L359.1 261.9L358.9 264.8L358.8 267.6L358.8 270.5L358.7 273.4L358.7 276.2L358.7 277.1L359.5 279.1L361.5 282L361.6 282L362.7 284.9L363.4 287.7L363.5 288.6L363.3 290.6L362.6 293.5L361.6 296.3L360.6 299.2L359.6 301.9L359.6 302.1L358.7 304.9L357.8 307.8L356.9 310.7L356 313.5L355.1 316.4L354.2 319.3L353.7 320.7L353.2 322.1L352.3 325L351.3 327.9L350.4 330.7L349.4 333.6L348.4 336.5L339.4 337Z" fill="url(#bf)"/><path d="M348.5 178.8L350.2 181.6L351.8 184.5L353.5 187.4L355.2 190.2L356.9 193.1L357.6 194.2L358.7 196L360.5 198.8L362.4 201.7L364.2 204.6L366 207.4L367.1 209.5L367.6 210.3L369 213.2L370.4 216L370.8 216.9L371.6 218.5L371.8 218.9L372.3 220.1L373 221.6L373.1 221.8L373.8 223.2L374.5 224.6L374.6 224.8L373.3 226.4L372.4 227.5L372.1 227.9L371 229.2L370.7 229.5L369.7 230.4L368.8 231.1L366.8 232.7L366.2 233.2L365.2 234.3L364.7 235L364.2 235.8L364.1 236.1L363.4 237.4L362.7 239L361.5 241.8L360.7 244.7L360.1 247.6L360 249L359.8 250.4L359.6 253.3L359.4 256.2L359.2 259L359.1 261.9L358.9 264.8L358.8 267.6L358.8 270.5L358.7 273.4L358.7 276.2L358.7 277.1L359.5 279.1L361.5 282L361.6 282L362.7 284.9L363.4 287.7L363.5 288.6L363.3 290.6L362.6 293.5L361.6 296.3L360.6 299.2L359.6 301.9L359.6 302.1L358.7 304.9L357.8 307.8L356.9 310.7L356 313.5L355.1 316.4L354.2 319.3L353.7 320.7L353.2 322.1L352.3 325L351.3 327.9L350.4 330.7L349.4 333.6L348.4 336.5" fill="none" stroke="url(#bs)" stroke-width="0.92" stroke-opacity="0.77" stroke-linejoin="round"/><path d="M373.3 226.4L372.4 227.5L372.1 227.9L371 229.2L370.7 229.5L369.7 230.4L368.8 231.1" fill="none" stroke="#2a1a10" stroke-width="1.22" stroke-opacity="0.61"/><path d="M335.8 178.7L344.8 177.7L346.5 180.6L348.1 183.5L349.8 186.4L351.4 189.3L353.1 192.2L354 193.6L354.9 195.1L356.7 198L358.6 200.8L360.4 203.7L362.2 206.6L363.9 209.5L363.9 209.6L365.4 212.4L366.8 215.3L368 217.7L368.2 218.2L368.7 219.3L369.5 220.9L369.6 221.1L370.2 222.5L371 224L371 224.1L371.8 225.7L370.7 226.9L370.4 227.2L369 228.8L368.3 229.6L368.1 229.8L367.4 230.4L365.4 232L364.5 232.7L363.4 233.6L361.9 235.2L361.9 235.2L361.7 235.6L361.1 236.8L360.3 238.4L360.2 238.5L359 241.4L358 244.3L357.3 247.2L356.9 249.6L356.9 250.1L356.6 253L356.4 255.9L356.2 258.8L356 261.6L355.8 264.5L355.6 267.4L355.5 270.3L355.5 273.2L355.4 276.1L355.4 278.9L355.4 279L357.3 281.9L357.9 282.8L358.7 284.8L359.6 287.7L359.6 288.4L359.4 290.6L358.7 293.5L357.7 296.4L356.6 299.3L355.7 301.9L355.6 302.2L354.8 305.1L354 308L353.1 310.9L352.2 313.8L351.4 316.7L350.5 319.5L350 321L349.6 322.4L348.6 325.3L347.7 328.2L346.7 331.1L345.7 334L344.7 336.9L335.7 337.4Z" fill="url(#bf)"/><path d="M344.8 177.7L346.5 180.6L348.1 183.5L349.8 186.4L351.4 189.3L353.1 192.2L354 193.6L354.9 195.1L356.7 198L358.6 200.8L360.4 203.7L362.2 206.6L363.9 209.5L363.9 209.6L365.4 212.4L366.8 215.3L368 217.7L368.2 218.2L368.7 219.3L369.5 220.9L369.6 221.1L370.2 222.5L371 224L371 224.1L371.8 225.7L370.7 226.9L370.4 227.2L369 228.8L368.3 229.6L368.1 229.8L367.4 230.4L365.4 232L364.5 232.7L363.4 233.6L361.9 235.2L361.9 235.2L361.7 235.6L361.1 236.8L360.3 238.4L360.2 238.5L359 241.4L358 244.3L357.3 247.2L356.9 249.6L356.9 250.1L356.6 253L356.4 255.9L356.2 258.8L356 261.6L355.8 264.5L355.6 267.4L355.5 270.3L355.5 273.2L355.4 276.1L355.4 278.9L355.4 279L357.3 281.9L357.9 282.8L358.7 284.8L359.6 287.7L359.6 288.4L359.4 290.6L358.7 293.5L357.7 296.4L356.6 299.3L355.7 301.9L355.6 302.2L354.8 305.1L354 308L353.1 310.9L352.2 313.8L351.4 316.7L350.5 319.5L350 321L349.6 322.4L348.6 325.3L347.7 328.2L346.7 331.1L345.7 334L344.7 336.9" fill="none" stroke="url(#bs)" stroke-width="0.94" stroke-opacity="0.78" stroke-linejoin="round"/><path d="M370.7 226.9L370.4 227.2L369 228.8L368.3 229.6L368.1 229.8L367.4 230.4L365.4 232" fill="none" stroke="#2a1a10" stroke-width="1.24" stroke-opacity="0.65"/><path d="M332.1 177.6L341.1 176.6L342.7 179.5L344.4 182.4L346 185.4L347.7 188.3L349.4 191.2L350.3 192.7L351.2 194.1L353 197.1L354.8 200L356.7 202.9L358.5 205.8L360.2 208.7L360.4 209.1L361.8 211.7L363.2 214.6L364.6 217.4L364.7 217.5L365.4 219L366.1 220.4L366.1 220.6L366.9 222.2L367.5 223.4L367.7 223.8L368.5 225.4L367.8 226.3L367.1 227.1L365.7 228.7L365.2 229.2L365 229.5L364.1 230.3L362.1 231.9L361.8 232.1L360.1 233.5L358.7 235.1L358.7 235.1L358.6 235.2L357.8 236.7L357.2 238L357 238.3L355.9 240.9L354.8 243.8L354.1 246.8L353.6 249.7L353.6 249.8L353.3 252.6L353 255.5L352.7 258.4L352.5 261.4L352.3 264.3L352.1 267.2L351.9 270.1L351.8 273.1L351.8 276L351.8 278.9L351.8 279L353.5 281.8L354.2 282.9L355 284.8L355.9 287.7L356 288.4L355.8 290.6L355.1 293.5L354.1 296.5L353 299.4L352.1 302L352 302.3L351.2 305.2L350.3 308.1L349.4 311.1L348.5 314L347.7 316.9L346.7 319.8L346.3 321.3L345.8 322.8L344.9 325.7L343.9 328.6L342.9 331.5L342 334.5L341 337.4L332 337.9Z" fill="url(#bf)"/><path d="M341.1 176.6L342.7 179.5L344.4 182.4L346 185.4L347.7 188.3L349.4 191.2L350.3 192.7L351.2 194.1L353 197.1L354.8 200L356.7 202.9L358.5 205.8L360.2 208.7L360.4 209.1L361.8 211.7L363.2 214.6L364.6 217.4L364.7 217.5L365.4 219L366.1 220.4L366.1 220.6L366.9 222.2L367.5 223.4L367.7 223.8L368.5 225.4L367.8 226.3L367.1 227.1L365.7 228.7L365.2 229.2L365 229.5L364.1 230.3L362.1 231.9L361.8 232.1L360.1 233.5L358.7 235.1L358.7 235.1L358.6 235.2L357.8 236.7L357.2 238L357 238.3L355.9 240.9L354.8 243.8L354.1 246.8L353.6 249.7L353.6 249.8L353.3 252.6L353 255.5L352.7 258.4L352.5 261.4L352.3 264.3L352.1 267.2L351.9 270.1L351.8 273.1L351.8 276L351.8 278.9L351.8 279L353.5 281.8L354.2 282.9L355 284.8L355.9 287.7L356 288.4L355.8 290.6L355.1 293.5L354.1 296.5L353 299.4L352.1 302L352 302.3L351.2 305.2L350.3 308.1L349.4 311.1L348.5 314L347.7 316.9L346.7 319.8L346.3 321.3L345.8 322.8L344.9 325.7L343.9 328.6L342.9 331.5L342 334.5L341 337.4" fill="none" stroke="url(#bs)" stroke-width="0.95" stroke-opacity="0.78" stroke-linejoin="round"/><path d="M367.8 226.3L367.1 227.1L365.7 228.7L365.2 229.2L365 229.5L364.1 230.3L362.1 231.9L361.8 232.1" fill="none" stroke="#2a1a10" stroke-width="1.25" stroke-opacity="0.68"/><path d="M328.2 176.5L337.2 175.5L338.9 178.4L340.5 181.4L342.2 184.3L343.9 187.3L345.6 190.2L346.5 191.7L347.4 193.2L349.2 196.1L351 199.1L352.9 202L354.7 205L356.4 207.9L356.8 208.5L358 210.9L359.5 213.9L361 216.8L361.1 217.1L361.9 218.7L362.4 219.8L362.7 220.4L363.5 222L363.9 222.7L364.3 223.6L365.1 225.2L364.9 225.7L363.8 226.9L362.4 228.5L362.3 228.6L361.7 229.3L360.8 230.1L359 231.6L358.8 231.7L356.8 233.4L355.7 234.5L355.4 235L355.3 235.1L354.5 236.6L354 237.5L353.7 238.2L352.7 240.4L351.6 243.4L350.8 246.3L350.2 249.3L350.1 250L349.8 252.2L349.5 255.2L349.2 258.1L348.9 261.1L348.7 264L348.4 267L348.3 269.9L348.1 272.9L348.1 275.9L348 278.8L348 279L349.7 281.8L350.5 283L351.3 284.7L352.2 287.7L352.2 288.5L352 290.6L351.4 293.6L350.4 296.5L349.3 299.5L348.4 302.1L348.3 302.4L347.4 305.4L346.5 308.3L345.7 311.3L344.8 314.2L343.8 317.2L342.9 320.1L342.5 321.6L342 323.1L341 326L340.1 329L339.1 332L338.1 334.9L337.1 337.9L328.1 338.4Z" fill="url(#bf)"/><path d="M337.2 175.5L338.9 178.4L340.5 181.4L342.2 184.3L343.9 187.3L345.6 190.2L346.5 191.7L347.4 193.2L349.2 196.1L351 199.1L352.9 202L354.7 205L356.4 207.9L356.8 208.5L358 210.9L359.5 213.9L361 216.8L361.1 217.1L361.9 218.7L362.4 219.8L362.7 220.4L363.5 222L363.9 222.7L364.3 223.6L365.1 225.2L364.9 225.7L363.8 226.9L362.4 228.5L362.3 228.6L361.7 229.3L360.8 230.1L359 231.6L358.8 231.7L356.8 233.4L355.7 234.5L355.4 235L355.3 235.1L354.5 236.6L354 237.5L353.7 238.2L352.7 240.4L351.6 243.4L350.8 246.3L350.2 249.3L350.1 250L349.8 252.2L349.5 255.2L349.2 258.1L348.9 261.1L348.7 264L348.4 267L348.3 269.9L348.1 272.9L348.1 275.9L348 278.8L348 279L349.7 281.8L350.5 283L351.3 284.7L352.2 287.7L352.2 288.5L352 290.6L351.4 293.6L350.4 296.5L349.3 299.5L348.4 302.1L348.3 302.4L347.4 305.4L346.5 308.3L345.7 311.3L344.8 314.2L343.8 317.2L342.9 320.1L342.5 321.6L342 323.1L341 326L340.1 329L339.1 332L338.1 334.9L337.1 337.9" fill="none" stroke="url(#bs)" stroke-width="0.96" stroke-opacity="0.79" stroke-linejoin="round"/><path d="M364.9 225.7L363.8 226.9L362.4 228.5L362.3 228.6L361.7 229.3L360.8 230.1L359 231.6L358.8 231.7" fill="none" stroke="#2a1a10" stroke-width="1.26" stroke-opacity="0.7"/><path d="M324.3 175.3L333.3 174.3L334.9 177.3L336.6 180.3L338.3 183.3L340 186.2L341.7 189.2L342.6 190.7L343.5 192.2L345.3 195.2L347.1 198.2L349 201.2L350.8 204.1L352.6 207.1L353 208L354.2 210.1L355.7 213.1L357.2 216.1L357.6 216.8L358.4 218.5L358.7 219.1L359.2 220.1L360 221.8L360.2 222L360.9 223.4L361.7 225L361.7 225L360.3 226.7L359.2 228L359 228.3L358.3 229.1L357.4 230L356.2 231L355.4 231.6L353.5 233.2L352.7 234L352 234.9L351.9 235.1L351.1 236.5L350.9 236.9L350.3 238.2L349.5 239.9L348.3 242.9L347.5 245.9L346.8 248.9L346.6 250.3L346.4 251.9L346 254.8L345.6 257.8L345.3 260.8L345 263.8L344.7 266.8L344.5 269.8L344.4 272.7L344.3 275.7L344.2 278.7L344.2 279.1L345.8 281.7L346.7 283.1L347.4 284.7L348.3 287.6L348.4 288.5L348.2 290.6L347.6 293.6L346.6 296.6L345.5 299.6L344.6 302.3L344.5 302.6L343.6 305.5L342.7 308.5L341.8 311.5L340.9 314.5L339.9 317.5L339 320.5L338.5 321.9L338.1 323.4L337.1 326.4L336.1 329.4L335.1 332.4L334.2 335.4L333.2 338.3L324.2 338.8Z" fill="url(#bf)"/><path d="M333.3 174.3L334.9 177.3L336.6 180.3L338.3 183.3L340 186.2L341.7 189.2L342.6 190.7L343.5 192.2L345.3 195.2L347.1 198.2L349 201.2L350.8 204.1L352.6 207.1L353 208L354.2 210.1L355.7 213.1L357.2 216.1L357.6 216.8L358.4 218.5L358.7 219.1L359.2 220.1L360 221.8L360.2 222L360.9 223.4L361.7 225L361.7 225L360.3 226.7L359.2 228L359 228.3L358.3 229.1L357.4 230L356.2 231L355.4 231.6L353.5 233.2L352.7 234L352 234.9L351.9 235.1L351.1 236.5L350.9 236.9L350.3 238.2L349.5 239.9L348.3 242.9L347.5 245.9L346.8 248.9L346.6 250.3L346.4 251.9L346 254.8L345.6 257.8L345.3 260.8L345 263.8L344.7 266.8L344.5 269.8L344.4 272.7L344.3 275.7L344.2 278.7L344.2 279.1L345.8 281.7L346.7 283.1L347.4 284.7L348.3 287.6L348.4 288.5L348.2 290.6L347.6 293.6L346.6 296.6L345.5 299.6L344.6 302.3L344.5 302.6L343.6 305.5L342.7 308.5L341.8 311.5L340.9 314.5L339.9 317.5L339 320.5L338.5 321.9L338.1 323.4L337.1 326.4L336.1 329.4L335.1 332.4L334.2 335.4L333.2 338.3" fill="none" stroke="url(#bs)" stroke-width="0.97" stroke-opacity="0.79" stroke-linejoin="round"/><path d="M360.3 226.7L359.2 228L359 228.3L358.3 229.1L357.4 230L356.2 231L355.4 231.6" fill="none" stroke="#2a1a10" stroke-width="1.27" stroke-opacity="0.7"/><path d="M320.3 174.1L329.3 173.1L330.9 176.2L332.6 179.2L334.3 182.2L336 185.2L337.7 188.2L338.6 189.7L339.5 191.2L341.3 194.2L343.2 197.2L345 200.3L346.8 203.3L348.6 206.3L349.2 207.4L350.3 209.3L351.8 212.3L353.4 215.3L354 216.6L354.8 218.2L354.9 218.3L355.7 219.9L356.4 221.3L356.5 221.5L357.3 223.2L358 224.4L358.2 224.8L356.8 226.5L356.1 227.4L355.5 228.2L354.8 229L353.9 229.8L353.3 230.4L352 231.5L350 233.1L349.8 233.4L348.6 234.8L348.4 235.1L347.7 236.4L347.6 236.4L346.8 238.1L346.2 239.4L345 242.4L344.1 245.4L343.3 248.5L343 250.5L342.8 251.5L342.4 254.5L342 257.5L341.6 260.5L341.2 263.5L341 266.5L340.7 269.6L340.5 272.6L340.4 275.6L340.3 278.6L340.3 279.2L341.7 281.6L342.9 283.2L343.5 284.6L344.4 287.6L344.5 288.6L344.3 290.6L343.7 293.7L342.7 296.7L341.6 299.7L340.7 302.4L340.6 302.7L339.7 305.7L338.8 308.7L337.9 311.7L336.9 314.7L336 317.8L335 320.8L334.5 322.3L334 323.8L333.1 326.8L332.1 329.8L331.1 332.8L330.1 335.8L329.1 338.8L320.1 339.3Z" fill="url(#bf)"/><path d="M329.3 173.1L330.9 176.2L332.6 179.2L334.3 182.2L336 185.2L337.7 188.2L338.6 189.7L339.5 191.2L341.3 194.2L343.2 197.2L345 200.3L346.8 203.3L348.6 206.3L349.2 207.4L350.3 209.3L351.8 212.3L353.4 215.3L354 216.6L354.8 218.2L354.9 218.3L355.7 219.9L356.4 221.3L356.5 221.5L357.3 223.2L358 224.4L358.2 224.8L356.8 226.5L356.1 227.4L355.5 228.2L354.8 229L353.9 229.8L353.3 230.4L352 231.5L350 233.1L349.8 233.4L348.6 234.8L348.4 235.1L347.7 236.4L347.6 236.4L346.8 238.1L346.2 239.4L345 242.4L344.1 245.4L343.3 248.5L343 250.5L342.8 251.5L342.4 254.5L342 257.5L341.6 260.5L341.2 263.5L341 266.5L340.7 269.6L340.5 272.6L340.4 275.6L340.3 278.6L340.3 279.2L341.7 281.6L342.9 283.2L343.5 284.6L344.4 287.6L344.5 288.6L344.3 290.6L343.7 293.7L342.7 296.7L341.6 299.7L340.7 302.4L340.6 302.7L339.7 305.7L338.8 308.7L337.9 311.7L336.9 314.7L336 317.8L335 320.8L334.5 322.3L334 323.8L333.1 326.8L332.1 329.8L331.1 332.8L330.1 335.8L329.1 338.8" fill="none" stroke="url(#bs)" stroke-width="0.99" stroke-opacity="0.8" stroke-linejoin="round"/><path d="M356.8 226.5L356.1 227.4L355.5 228.2L354.8 229L353.9 229.8L353.3 230.4L352 231.5" fill="none" stroke="#2a1a10" stroke-width="1.29" stroke-opacity="0.7"/><path d="M316.2 172.9L325.2 171.9L326.8 175L328.5 178L330.2 181.1L331.9 184.1L333.6 187.2L334.5 188.7L335.4 190.2L337.2 193.2L339.1 196.3L340.9 199.3L342.8 202.4L344.5 205.4L345.4 206.8L346.2 208.5L347.9 211.5L349.4 214.6L350.3 216.3L351 217.6L351.2 218L352 219.6L352.5 220.6L352.9 221.3L353.7 223L354.1 223.7L354.6 224.7L353.3 226.3L352.9 226.7L351.9 228L351.2 228.8L350.4 229.7L350.3 229.8L348.5 231.3L346.8 232.8L346.5 233L345 234.7L344.8 235.1L344.4 235.9L344.1 236.4L343.3 238L342.9 238.9L341.6 241.9L340.6 245L339.8 248L339.3 250.8L339.2 251.1L338.7 254.1L338.3 257.2L337.8 260.2L337.4 263.3L337.1 266.3L336.8 269.3L336.6 272.4L336.4 275.4L336.4 278.5L336.4 279.3L337.6 281.5L338.9 283.3L339.4 284.6L340.4 287.6L340.5 288.6L340.3 290.7L339.7 293.7L338.7 296.7L337.6 299.8L336.7 302.5L336.6 302.8L335.7 305.9L334.8 308.9L333.8 312L332.9 315L331.9 318L330.9 321.1L330.4 322.6L329.9 324.1L329 327.2L328 330.2L327 333.3L326 336.3L325 339.4L316 339.9Z" fill="url(#bf)"/><path d="M325.2 171.9L326.8 175L328.5 178L330.2 181.1L331.9 184.1L333.6 187.2L334.5 188.7L335.4 190.2L337.2 193.2L339.1 196.3L340.9 199.3L342.8 202.4L344.5 205.4L345.4 206.8L346.2 208.5L347.9 211.5L349.4 214.6L350.3 216.3L351 217.6L351.2 218L352 219.6L352.5 220.6L352.9 221.3L353.7 223L354.1 223.7L354.6 224.7L353.3 226.3L352.9 226.7L351.9 228L351.2 228.8L350.4 229.7L350.3 229.8L348.5 231.3L346.8 232.8L346.5 233L345 234.7L344.8 235.1L344.4 235.9L344.1 236.4L343.3 238L342.9 238.9L341.6 241.9L340.6 245L339.8 248L339.3 250.8L339.2 251.1L338.7 254.1L338.3 257.2L337.8 260.2L337.4 263.3L337.1 266.3L336.8 269.3L336.6 272.4L336.4 275.4L336.4 278.5L336.4 279.3L337.6 281.5L338.9 283.3L339.4 284.6L340.4 287.6L340.5 288.6L340.3 290.7L339.7 293.7L338.7 296.7L337.6 299.8L336.7 302.5L336.6 302.8L335.7 305.9L334.8 308.9L333.8 312L332.9 315L331.9 318L330.9 321.1L330.4 322.6L329.9 324.1L329 327.2L328 330.2L327 333.3L326 336.3L325 339.4" fill="none" stroke="url(#bs)" stroke-width="1" stroke-opacity="0.81" stroke-linejoin="round"/><path d="M353.3 226.3L352.9 226.7L351.9 228L351.2 228.8L350.4 229.7L350.3 229.8L348.5 231.3" fill="none" stroke="#2a1a10" stroke-width="1.3" stroke-opacity="0.7"/><path d="M311.9 171.7L320.9 170.7L322.6 173.8L324.3 176.9L326 179.9L327.7 183L329.4 186.1L330.3 187.6L331.2 189.2L333 192.2L334.9 195.3L336.7 198.4L338.6 201.5L340.4 204.5L341.4 206.3L342.1 207.6L343.8 210.7L345.4 213.8L346.6 216L347 216.8L347.4 217.7L348.3 219.4L348.6 219.9L349.2 221.1L350.1 222.8L350.2 223L350.9 224.5L349.7 226.1L349.6 226.2L348.3 227.8L347.6 228.7L347.1 229.1L346.8 229.5L344.9 231.2L343.7 232.2L343 232.9L341.4 234.6L341.2 235L341 235.3L340.5 236.3L339.7 238L339.5 238.4L338.2 241.4L337.1 244.5L336.3 247.6L335.6 250.7L335.5 251.1L335.1 253.8L334.5 256.8L334 259.9L333.6 263L333.2 266.1L332.8 269.1L332.6 272.2L332.4 275.3L332.3 278.4L332.3 279.4L333.4 281.4L334.8 283.4L335.3 284.5L336.3 287.6L336.4 288.7L336.3 290.7L335.6 293.7L334.6 296.8L333.5 299.9L332.6 302.7L332.5 303L331.6 306L330.7 309.1L329.7 312.2L328.7 315.3L327.7 318.3L326.7 321.4L326.2 323L325.7 324.5L324.7 327.6L323.7 330.6L322.7 333.7L321.7 336.8L320.7 339.9L311.7 340.4Z" fill="url(#bf)"/><path d="M320.9 170.7L322.6 173.8L324.3 176.9L326 179.9L327.7 183L329.4 186.1L330.3 187.6L331.2 189.2L333 192.2L334.9 195.3L336.7 198.4L338.6 201.5L340.4 204.5L341.4 206.3L342.1 207.6L343.8 210.7L345.4 213.8L346.6 216L347 216.8L347.4 217.7L348.3 219.4L348.6 219.9L349.2 221.1L350.1 222.8L350.2 223L350.9 224.5L349.7 226.1L349.6 226.2L348.3 227.8L347.6 228.7L347.1 229.1L346.8 229.5L344.9 231.2L343.7 232.2L343 232.9L341.4 234.6L341.2 235L341 235.3L340.5 236.3L339.7 238L339.5 238.4L338.2 241.4L337.1 244.5L336.3 247.6L335.6 250.7L335.5 251.1L335.1 253.8L334.5 256.8L334 259.9L333.6 263L333.2 266.1L332.8 269.1L332.6 272.2L332.4 275.3L332.3 278.4L332.3 279.4L333.4 281.4L334.8 283.4L335.3 284.5L336.3 287.6L336.4 288.7L336.3 290.7L335.6 293.7L334.6 296.8L333.5 299.9L332.6 302.7L332.5 303L331.6 306L330.7 309.1L329.7 312.2L328.7 315.3L327.7 318.3L326.7 321.4L326.2 323L325.7 324.5L324.7 327.6L323.7 330.6L322.7 333.7L321.7 336.8L320.7 339.9" fill="none" stroke="url(#bs)" stroke-width="1.01" stroke-opacity="0.81" stroke-linejoin="round"/><path d="M349.7 226.1L349.6 226.2L348.3 227.8L347.6 228.7L347.1 229.1L346.8 229.5L344.9 231.2" fill="none" stroke="#2a1a10" stroke-width="1.31" stroke-opacity="0.7"/><path d="M307.6 170.4L316.6 169.4L318.3 172.6L320 175.7L321.7 178.8L323.4 181.9L325.1 185L326 186.5L326.9 188.1L328.7 191.2L330.6 194.3L332.5 197.4L334.3 200.5L336.1 203.6L337.3 205.7L337.9 206.7L339.6 209.9L341.2 213L342.7 215.7L342.9 216.1L343.6 217.4L344.5 219.2L344.5 219.2L345.4 220.9L346.1 222.3L346.3 222.6L347.2 224.3L346.3 225.4L345.9 226L344.5 227.7L343.9 228.5L343.8 228.6L343 229.4L341.2 231.1L340.6 231.6L339.3 232.8L337.8 234.5L337.7 234.7L337.5 235.1L336.8 236.3L336 237.8L336 238L334.7 240.9L333.6 244L332.6 247.2L331.9 250.3L331.7 251.5L331.3 253.4L330.7 256.5L330.1 259.6L329.6 262.7L329.2 265.8L328.8 268.9L328.4 272L328.2 275.1L328.1 278.2L328.1 279.5L329 281.3L330.7 283.5L331 284.5L332.1 287.6L332.2 288.8L332.1 290.7L331.4 293.8L330.4 296.9L329.3 300L328.4 302.8L328.4 303.1L327.4 306.2L326.5 309.3L325.5 312.4L324.4 315.5L323.4 318.7L322.4 321.8L321.9 323.3L321.4 324.9L320.4 328L319.4 331.1L318.4 334.2L317.4 337.3L316.4 340.4L307.4 340.9Z" fill="url(#bf)"/><path d="M316.6 169.4L318.3 172.6L320 175.7L321.7 178.8L323.4 181.9L325.1 185L326 186.5L326.9 188.1L328.7 191.2L330.6 194.3L332.5 197.4L334.3 200.5L336.1 203.6L337.3 205.7L337.9 206.7L339.6 209.9L341.2 213L342.7 215.7L342.9 216.1L343.6 217.4L344.5 219.2L344.5 219.2L345.4 220.9L346.1 222.3L346.3 222.6L347.2 224.3L346.3 225.4L345.9 226L344.5 227.7L343.9 228.5L343.8 228.6L343 229.4L341.2 231.1L340.6 231.6L339.3 232.8L337.8 234.5L337.7 234.7L337.5 235.1L336.8 236.3L336 237.8L336 238L334.7 240.9L333.6 244L332.6 247.2L331.9 250.3L331.7 251.5L331.3 253.4L330.7 256.5L330.1 259.6L329.6 262.7L329.2 265.8L328.8 268.9L328.4 272L328.2 275.1L328.1 278.2L328.1 279.5L329 281.3L330.7 283.5L331 284.5L332.1 287.6L332.2 288.8L332.1 290.7L331.4 293.8L330.4 296.9L329.3 300L328.4 302.8L328.4 303.1L327.4 306.2L326.5 309.3L325.5 312.4L324.4 315.5L323.4 318.7L322.4 321.8L321.9 323.3L321.4 324.9L320.4 328L319.4 331.1L318.4 334.2L317.4 337.3L316.4 340.4" fill="none" stroke="url(#bs)" stroke-width="1.03" stroke-opacity="0.82" stroke-linejoin="round"/><path d="M346.3 225.4L345.9 226L344.5 227.7L343.9 228.5L343.8 228.6L343 229.4L341.2 231.1L340.6 231.6" fill="none" stroke="#2a1a10" stroke-width="1.33" stroke-opacity="0.7"/><path d="M303.2 169.1L312.2 168.1L313.9 171.3L315.5 174.4L317.2 177.6L319 180.7L320.7 183.9L321.6 185.4L322.5 187L324.3 190.1L326.2 193.3L328.1 196.4L329.9 199.6L331.8 202.7L333.1 205.1L333.5 205.9L335.3 209L337 212.1L338.6 215.3L338.7 215.5L339.7 217.2L340.3 218.4L340.6 218.9L341.5 220.7L342 221.6L342.4 222.4L343.4 224.1L343 224.7L342 225.8L340.7 227.6L340.5 227.8L340 228.4L339.2 229.3L337.4 231L337.4 231L335.5 232.8L334.3 234.1L334 234.5L333.6 235.1L333 236.2L332.5 237.3L332.2 237.9L331.1 240.4L329.9 243.6L329 246.7L328.2 249.8L327.7 251.8L327.5 253L326.8 256.1L326.2 259.3L325.6 262.4L325.1 265.6L324.6 268.7L324.2 271.8L324 275L323.8 278.1L323.8 279.6L324.6 281.3L326.4 283.6L326.7 284.4L327.7 287.5L327.9 288.8L327.8 290.7L327.1 293.8L326.2 297L325.1 300.1L324.2 302.9L324.1 303.3L323.1 306.4L322.1 309.5L321.1 312.7L320.1 315.8L319 319L318 322.1L317.5 323.7L317 325.2L316 328.4L315 331.5L314 334.7L313 337.8L312 341L303 341.5Z" fill="url(#bf)"/><path d="M312.2 168.1L313.9 171.3L315.5 174.4L317.2 177.6L319 180.7L320.7 183.9L321.6 185.4L322.5 187L324.3 190.1L326.2 193.3L328.1 196.4L329.9 199.6L331.8 202.7L333.1 205.1L333.5 205.9L335.3 209L337 212.1L338.6 215.3L338.7 215.5L339.7 217.2L340.3 218.4L340.6 218.9L341.5 220.7L342 221.6L342.4 222.4L343.4 224.1L343 224.7L342 225.8L340.7 227.6L340.5 227.8L340 228.4L339.2 229.3L337.4 231L337.4 231L335.5 232.8L334.3 234.1L334 234.5L333.6 235.1L333 236.2L332.5 237.3L332.2 237.9L331.1 240.4L329.9 243.6L329 246.7L328.2 249.8L327.7 251.8L327.5 253L326.8 256.1L326.2 259.3L325.6 262.4L325.1 265.6L324.6 268.7L324.2 271.8L324 275L323.8 278.1L323.8 279.6L324.6 281.3L326.4 283.6L326.7 284.4L327.7 287.5L327.9 288.8L327.8 290.7L327.1 293.8L326.2 297L325.1 300.1L324.2 302.9L324.1 303.3L323.1 306.4L322.1 309.5L321.1 312.7L320.1 315.8L319 319L318 322.1L317.5 323.7L317 325.2L316 328.4L315 331.5L314 334.7L313 337.8L312 341" fill="none" stroke="url(#bs)" stroke-width="1.04" stroke-opacity="0.82" stroke-linejoin="round"/><path d="M343 224.7L342 225.8L340.7 227.6L340.5 227.8L340 228.4L339.2 229.3L337.4 231L337.4 231" fill="none" stroke="#2a1a10" stroke-width="1.34" stroke-opacity="0.7"/><path d="M298.6 167.8L307.6 166.8L309.3 170L311 173.2L312.7 176.4L314.5 179.5L316.2 182.7L317.1 184.3L318 185.9L319.8 189.1L321.7 192.2L323.6 195.4L325.4 198.6L327.3 201.8L328.8 204.5L329.1 204.9L330.9 208.1L332.6 211.3L334.3 214.5L334.7 215.2L335.6 217L336 217.6L336.6 218.7L337.5 220.5L337.7 220.8L338.5 222.2L339.4 223.9L339.4 224L338.1 225.7L337 227.2L336.8 227.4L336.1 228.3L335.4 229.2L334.2 230.3L333.5 230.9L331.7 232.7L330.9 233.5L330.2 234.4L329.7 235.1L329.2 236.2L328.9 236.7L328.3 237.9L327.4 239.9L326.2 243.1L325.2 246.2L324.3 249.4L323.7 252.2L323.6 252.6L322.9 255.8L322.2 258.9L321.5 262.1L320.9 265.3L320.4 268.5L319.9 271.6L319.6 274.8L319.4 278L319.4 279.8L320 281.2L322 283.7L322.3 284.3L323.3 287.5L323.5 288.9L323.4 290.7L322.7 293.9L321.8 297.1L320.7 300.2L319.8 303.1L319.7 303.4L318.7 306.6L317.7 309.8L316.7 312.9L315.6 316.1L314.5 319.3L313.5 322.5L312.9 324.1L312.4 325.6L311.4 328.8L310.4 332L309.4 335.2L308.4 338.3L307.4 341.5L298.4 342Z" fill="url(#bf)"/><path d="M307.6 166.8L309.3 170L311 173.2L312.7 176.4L314.5 179.5L316.2 182.7L317.1 184.3L318 185.9L319.8 189.1L321.7 192.2L323.6 195.4L325.4 198.6L327.3 201.8L328.8 204.5L329.1 204.9L330.9 208.1L332.6 211.3L334.3 214.5L334.7 215.2L335.6 217L336 217.6L336.6 218.7L337.5 220.5L337.7 220.8L338.5 222.2L339.4 223.9L339.4 224L338.1 225.7L337 227.2L336.8 227.4L336.1 228.3L335.4 229.2L334.2 230.3L333.5 230.9L331.7 232.7L330.9 233.5L330.2 234.4L329.7 235.1L329.2 236.2L328.9 236.7L328.3 237.9L327.4 239.9L326.2 243.1L325.2 246.2L324.3 249.4L323.7 252.2L323.6 252.6L322.9 255.8L322.2 258.9L321.5 262.1L320.9 265.3L320.4 268.5L319.9 271.6L319.6 274.8L319.4 278L319.4 279.8L320 281.2L322 283.7L322.3 284.3L323.3 287.5L323.5 288.9L323.4 290.7L322.7 293.9L321.8 297.1L320.7 300.2L319.8 303.1L319.7 303.4L318.7 306.6L317.7 309.8L316.7 312.9L315.6 316.1L314.5 319.3L313.5 322.5L312.9 324.1L312.4 325.6L311.4 328.8L310.4 332L309.4 335.2L308.4 338.3L307.4 341.5" fill="none" stroke="url(#bs)" stroke-width="1.06" stroke-opacity="0.83" stroke-linejoin="round"/><path d="M339.4 224L338.1 225.7L337 227.2L336.8 227.4L336.1 228.3L335.4 229.2L334.2 230.3L333.5 230.9" fill="none" stroke="#2a1a10" stroke-width="1.36" stroke-opacity="0.7"/><path d="M294 166.5L303 165.5L304.7 168.7L306.4 171.9L308.1 175.1L309.8 178.3L311.6 181.5L312.5 183.1L313.4 184.7L315.2 187.9L317.1 191.2L319 194.4L320.8 197.6L322.7 200.8L324.4 203.8L324.5 204L326.3 207.2L328.1 210.4L329.8 213.6L330.6 215L331.5 216.7L331.6 216.8L332.5 218.5L333.4 220.1L333.5 220.3L334.4 222L335.2 223.3L335.4 223.8L334.1 225.6L333.4 226.5L332.8 227.3L332.2 228.2L331.4 229.1L330.8 229.7L329.6 230.9L327.8 232.6L327.5 232.9L326.2 234.4L325.8 235.2L325.2 236.1L325.2 236.2L324.4 237.9L323.7 239.3L322.5 242.5L321.4 245.8L320.5 249L319.7 252.2L319.6 252.6L318.9 255.4L318.1 258.6L317.4 261.8L316.7 265L316.1 268.2L315.6 271.4L315.2 274.7L315 277.9L314.9 279.9L315.4 281.1L317.5 283.9L317.7 284.3L318.8 287.5L318.9 289L318.8 290.7L318.2 293.9L317.3 297.1L316.2 300.3L315.3 303.2L315.2 303.6L314.2 306.8L313.2 310L312.1 313.2L311 316.4L309.9 319.6L308.8 322.8L308.3 324.4L307.8 326L306.8 329.3L305.7 332.5L304.7 335.7L303.7 338.9L302.7 342.1L293.7 342.6Z" fill="url(#bf)"/><path d="M303 165.5L304.7 168.7L306.4 171.9L308.1 175.1L309.8 178.3L311.6 181.5L312.5 183.1L313.4 184.7L315.2 187.9L317.1 191.2L319 194.4L320.8 197.6L322.7 200.8L324.4 203.8L324.5 204L326.3 207.2L328.1 210.4L329.8 213.6L330.6 215L331.5 216.7L331.6 216.8L332.5 218.5L333.4 220.1L333.5 220.3L334.4 222L335.2 223.3L335.4 223.8L334.1 225.6L333.4 226.5L332.8 227.3L332.2 228.2L331.4 229.1L330.8 229.7L329.6 230.9L327.8 232.6L327.5 232.9L326.2 234.4L325.8 235.2L325.2 236.1L325.2 236.2L324.4 237.9L323.7 239.3L322.5 242.5L321.4 245.8L320.5 249L319.7 252.2L319.6 252.6L318.9 255.4L318.1 258.6L317.4 261.8L316.7 265L316.1 268.2L315.6 271.4L315.2 274.7L315 277.9L314.9 279.9L315.4 281.1L317.5 283.9L317.7 284.3L318.8 287.5L318.9 289L318.8 290.7L318.2 293.9L317.3 297.1L316.2 300.3L315.3 303.2L315.2 303.6L314.2 306.8L313.2 310L312.1 313.2L311 316.4L309.9 319.6L308.8 322.8L308.3 324.4L307.8 326L306.8 329.3L305.7 332.5L304.7 335.7L303.7 338.9L302.7 342.1" fill="none" stroke="url(#bs)" stroke-width="1.07" stroke-opacity="0.84" stroke-linejoin="round"/><path d="M334.1 225.6L333.4 226.5L332.8 227.3L332.2 228.2L331.4 229.1L330.8 229.7L329.6 230.9" fill="none" stroke="#2a1a10" stroke-width="1.37" stroke-opacity="0.7"/><path d="M289.2 165.1L298.2 164.1L299.9 167.3L301.6 170.6L303.3 173.8L305.1 177.1L306.8 180.3L307.7 181.9L308.6 183.6L310.5 186.8L312.3 190L314.2 193.3L316.1 196.5L318 199.8L319.8 203L319.9 203.2L321.7 206.3L323.5 209.5L325.3 212.8L326.3 214.7L327.1 216L327.3 216.5L328.3 218.3L328.9 219.3L329.3 220.1L330.3 221.9L330.7 222.5L331.3 223.6L330 225.4L329.8 225.8L328.7 227.2L328.1 228.1L327.3 229L327.3 229L325.6 230.8L324.1 232.3L323.8 232.6L322.2 234.4L321.7 235.2L321.5 235.5L321.2 236.1L320.3 237.9L319.9 238.8L318.6 242L317.5 245.3L316.5 248.5L315.7 251.8L315.4 253L314.8 255L314 258.2L313.2 261.5L312.4 264.7L311.7 268L311.1 271.2L310.6 274.5L310.4 277.7L310.3 280.1L310.6 281L312.9 284L313 284.2L314.1 287.5L314.3 289.1L314.2 290.7L313.6 294L312.7 297.2L311.6 300.5L310.7 303.4L310.6 303.7L309.6 307L308.5 310.2L307.4 313.5L306.3 316.7L305.2 320L304.1 323.2L303.5 324.8L303 326.5L302 329.7L301 332.9L299.9 336.2L298.9 339.4L297.9 342.7L288.9 343.2Z" fill="url(#bf)"/><path d="M298.2 164.1L299.9 167.3L301.6 170.6L303.3 173.8L305.1 177.1L306.8 180.3L307.7 181.9L308.6 183.6L310.5 186.8L312.3 190L314.2 193.3L316.1 196.5L318 199.8L319.8 203L319.9 203.2L321.7 206.3L323.5 209.5L325.3 212.8L326.3 214.7L327.1 216L327.3 216.5L328.3 218.3L328.9 219.3L329.3 220.1L330.3 221.9L330.7 222.5L331.3 223.6L330 225.4L329.8 225.8L328.7 227.2L328.1 228.1L327.3 229L327.3 229L325.6 230.8L324.1 232.3L323.8 232.6L322.2 234.4L321.7 235.2L321.5 235.5L321.2 236.1L320.3 237.9L319.9 238.8L318.6 242L317.5 245.3L316.5 248.5L315.7 251.8L315.4 253L314.8 255L314 258.2L313.2 261.5L312.4 264.7L311.7 268L311.1 271.2L310.6 274.5L310.4 277.7L310.3 280.1L310.6 281L312.9 284L313 284.2L314.1 287.5L314.3 289.1L314.2 290.7L313.6 294L312.7 297.2L311.6 300.5L310.7 303.4L310.6 303.7L309.6 307L308.5 310.2L307.4 313.5L306.3 316.7L305.2 320L304.1 323.2L303.5 324.8L303 326.5L302 329.7L301 332.9L299.9 336.2L298.9 339.4L297.9 342.7" fill="none" stroke="url(#bs)" stroke-width="1.09" stroke-opacity="0.84" stroke-linejoin="round"/><path d="M330 225.4L329.8 225.8L328.7 227.2L328.1 228.1L327.3 229L327.3 229L325.6 230.8" fill="none" stroke="#2a1a10" stroke-width="1.39" stroke-opacity="0.7"/><path d="M284.3 163.6L293.3 162.6L295 165.9L296.8 169.2L298.6 172.5L300.4 175.8L302.2 179.1L303 180.5L304 182.3L305.9 185.6L307.8 188.9L309.7 192.2L311.6 195.5L313.5 198.8L315.4 202.1L315.4 202.1L317.2 205.3L319 208.6L320.7 211.9L321.9 214.1L322.5 215.2L322.9 215.9L323.9 217.7L324.3 218.5L324.9 219.5L325.8 221.3L326.1 221.8L326.8 223.2L325.6 225L325.5 225L324.3 226.8L323.6 227.7L323.1 228.3L322.9 228.6L321.1 230.4L319.9 231.6L319.4 232.2L317.8 234L317.2 234.9L317.2 234.9L316.8 235.8L315.9 237.6L315.6 238.2L314.2 241.5L313.1 244.8L312 248L311.1 251.3L310.7 253L310.3 254.6L309.4 257.9L308.6 261.2L307.7 264.5L307 267.7L306.3 271L305.9 274.3L305.6 277.6L305.5 280L305.8 280.9L308.2 284.1L308.3 284.2L309.4 287.5L309.6 289.3L309.6 290.7L309 294L308.1 297.3L307 300.6L306 303.7L305.9 303.9L304.9 307.2L303.8 310.4L302.7 313.7L301.5 317L300.4 320.3L299.2 323.6L298.6 325.4L298.1 326.9L297.1 330.2L296.1 333.4L295 336.7L294 340L293 343.3L284 343.8Z" fill="url(#bf)"/><path d="M293.3 162.6L295 165.9L296.8 169.2L298.6 172.5L300.4 175.8L302.2 179.1L303 180.5L304 182.3L305.9 185.6L307.8 188.9L309.7 192.2L311.6 195.5L313.5 198.8L315.4 202.1L315.4 202.1L317.2 205.3L319 208.6L320.7 211.9L321.9 214.1L322.5 215.2L322.9 215.9L323.9 217.7L324.3 218.5L324.9 219.5L325.8 221.3L326.1 221.8L326.8 223.2L325.6 225L325.5 225L324.3 226.8L323.6 227.7L323.1 228.3L322.9 228.6L321.1 230.4L319.9 231.6L319.4 232.2L317.8 234L317.2 234.9L317.2 234.9L316.8 235.8L315.9 237.6L315.6 238.2L314.2 241.5L313.1 244.8L312 248L311.1 251.3L310.7 253L310.3 254.6L309.4 257.9L308.6 261.2L307.7 264.5L307 267.7L306.3 271L305.9 274.3L305.6 277.6L305.5 280L305.8 280.9L308.2 284.1L308.3 284.2L309.4 287.5L309.6 289.3L309.6 290.7L309 294L308.1 297.3L307 300.6L306 303.7L305.9 303.9L304.9 307.2L303.8 310.4L302.7 313.7L301.5 317L300.4 320.3L299.2 323.6L298.6 325.4L298.1 326.9L297.1 330.2L296.1 333.4L295 336.7L294 340L293 343.3" fill="none" stroke="url(#bs)" stroke-width="1.1" stroke-opacity="0.85" stroke-linejoin="round"/><path d="M325.6 225L325.5 225L324.3 226.8L323.6 227.7L323.1 228.3L322.9 228.6L321.1 230.4L319.9 231.6" fill="none" stroke="#2a1a10" stroke-width="1.4" stroke-opacity="0.7"/><path d="M279.3 162.2L288.3 161.2L290.1 164.5L292 167.8L293.8 171.1L295.7 174.5L297.6 177.8L298.2 178.9L299.5 181.1L301.4 184.4L303.4 187.7L305.3 191.1L307.3 194.4L309.2 197.7L310.7 200.5L311 201L312.8 204.4L314.5 207.7L316.2 211L317.4 213.2L317.9 214.3L318.3 215.1L319.3 216.9L319.6 217.7L320.2 218.7L321.1 220.6L321.3 221L322.1 222.4L320.8 224.2L320.8 224.3L319.6 226L318.9 227L318.4 227.6L318.2 227.9L316.4 229.7L315.2 230.9L314.6 231.5L313.1 233.4L312.5 234.3L312.5 234.3L312 235.2L311.1 237L310.8 237.6L309.4 240.9L308.2 244.2L307.1 247.6L306.2 250.9L305.7 252.5L305.3 254.2L304.4 257.5L303.5 260.8L302.7 264.2L302 267.5L301.3 270.8L300.9 274.1L300.6 277.5L300.5 279.9L300.8 280.8L303.4 284L303.4 284.1L304.7 287.4L305 289.5L304.9 290.8L304.4 294.1L303.4 297.4L302.3 300.7L301.2 304L301.2 304.1L300.2 307.4L299.1 310.7L297.9 314L296.7 317.3L295.5 320.7L294.3 324L293.6 326L293.2 327.3L292.1 330.6L291 333.9L290 337.3L289 340.6L288 343.9L279 344.4Z" fill="url(#bf)"/><path d="M288.3 161.2L290.1 164.5L292 167.8L293.8 171.1L295.7 174.5L297.6 177.8L298.2 178.9L299.5 181.1L301.4 184.4L303.4 187.7L305.3 191.1L307.3 194.4L309.2 197.7L310.7 200.5L311 201L312.8 204.4L314.5 207.7L316.2 211L317.4 213.2L317.9 214.3L318.3 215.1L319.3 216.9L319.6 217.7L320.2 218.7L321.1 220.6L321.3 221L322.1 222.4L320.8 224.2L320.8 224.3L319.6 226L318.9 227L318.4 227.6L318.2 227.9L316.4 229.7L315.2 230.9L314.6 231.5L313.1 233.4L312.5 234.3L312.5 234.3L312 235.2L311.1 237L310.8 237.6L309.4 240.9L308.2 244.2L307.1 247.6L306.2 250.9L305.7 252.5L305.3 254.2L304.4 257.5L303.5 260.8L302.7 264.2L302 267.5L301.3 270.8L300.9 274.1L300.6 277.5L300.5 279.9L300.8 280.8L303.4 284L303.4 284.1L304.7 287.4L305 289.5L304.9 290.8L304.4 294.1L303.4 297.4L302.3 300.7L301.2 304L301.2 304.1L300.2 307.4L299.1 310.7L297.9 314L296.7 317.3L295.5 320.7L294.3 324L293.6 326L293.2 327.3L292.1 330.6L291 333.9L290 337.3L289 340.6L288 343.9" fill="none" stroke="url(#bs)" stroke-width="1.12" stroke-opacity="0.86" stroke-linejoin="round"/><path d="M320.8 224.2L320.8 224.3L319.6 226L318.9 227L318.4 227.6L318.2 227.9L316.4 229.7L315.2 230.9" fill="none" stroke="#2a1a10" stroke-width="1.42" stroke-opacity="0.7"/><path d="M274.1 160.7L283.1 159.7L285.1 163L287 166.4L289 169.7L290.9 173.1L292.9 176.5L293.3 177.3L294.8 179.8L296.8 183.2L298.9 186.6L300.9 189.9L302.8 193.3L304.7 196.6L305.9 198.8L306.5 200L308.3 203.4L310 206.7L311.6 210.1L312.7 212.4L313.2 213.4L313.6 214.2L314.5 216.1L314.8 216.8L315.4 217.9L316.3 219.7L316.5 220.2L317.2 221.6L315.9 223.4L315.9 223.5L314.7 225.3L314 226.2L313.5 226.9L313.3 227.1L311.5 229L310.3 230.3L309.8 230.8L308.2 232.7L307.6 233.6L307.6 233.6L307.1 234.5L306.1 236.4L305.9 237L304.4 240.3L303.1 243.7L302 247.1L301.1 250.4L300.6 252.1L300.2 253.8L299.3 257.1L298.4 260.5L297.6 263.9L296.8 267.2L296.2 270.6L295.7 274L295.4 277.3L295.4 279.7L295.7 280.7L298.4 284L298.4 284L299.8 287.4L300.2 289.8L300.1 290.8L299.6 294.1L298.7 297.5L297.5 300.9L296.4 304.2L296.3 304.5L295.3 307.6L294.2 310.9L293 314.3L291.7 317.7L290.4 321L289.2 324.4L288.4 326.7L288.1 327.7L287 331.1L285.9 334.5L284.8 337.8L283.8 341.2L282.8 344.6L273.8 345.1Z" fill="url(#bf)"/><path d="M283.1 159.7L285.1 163L287 166.4L289 169.7L290.9 173.1L292.9 176.5L293.3 177.3L294.8 179.8L296.8 183.2L298.9 186.6L300.9 189.9L302.8 193.3L304.7 196.6L305.9 198.8L306.5 200L308.3 203.4L310 206.7L311.6 210.1L312.7 212.4L313.2 213.4L313.6 214.2L314.5 216.1L314.8 216.8L315.4 217.9L316.3 219.7L316.5 220.2L317.2 221.6L315.9 223.4L315.9 223.5L314.7 225.3L314 226.2L313.5 226.9L313.3 227.1L311.5 229L310.3 230.3L309.8 230.8L308.2 232.7L307.6 233.6L307.6 233.6L307.1 234.5L306.1 236.4L305.9 237L304.4 240.3L303.1 243.7L302 247.1L301.1 250.4L300.6 252.1L300.2 253.8L299.3 257.1L298.4 260.5L297.6 263.9L296.8 267.2L296.2 270.6L295.7 274L295.4 277.3L295.4 279.7L295.7 280.7L298.4 284L298.4 284L299.8 287.4L300.2 289.8L300.1 290.8L299.6 294.1L298.7 297.5L297.5 300.9L296.4 304.2L296.3 304.5L295.3 307.6L294.2 310.9L293 314.3L291.7 317.7L290.4 321L289.2 324.4L288.4 326.7L288.1 327.7L287 331.1L285.9 334.5L284.8 337.8L283.8 341.2L282.8 344.6" fill="none" stroke="url(#bs)" stroke-width="1.13" stroke-opacity="0.86" stroke-linejoin="round"/><path d="M315.9 223.4L315.9 223.5L314.7 225.3L314 226.2L313.5 226.9L313.3 227.1L311.5 229L310.3 230.3" fill="none" stroke="#2a1a10" stroke-width="1.43" stroke-opacity="0.7"/><path d="M268.8 159.1L277.8 158.1L279.9 161.5L281.9 164.9L284 168.3L286 171.7L288 175.1L288.3 175.5L290.1 178.5L292.2 181.9L294.2 185.3L296.3 188.7L298.3 192.1L300.2 195.5L301 197.2L302 198.9L303.6 202.3L305.3 205.7L306.8 209.1L307.9 211.4L308.4 212.5L308.7 213.3L309.6 215.2L309.9 215.9L310.4 217L311.3 218.9L311.5 219.3L312.2 220.8L310.9 222.7L310.9 222.7L309.7 224.5L309 225.5L308.5 226.1L308.3 226.4L306.6 228.3L305.3 229.5L304.8 230.1L303.2 232L302.6 233L302.6 233L302.1 233.9L301.1 235.8L300.8 236.4L299.3 239.8L297.9 243.2L296.8 246.6L295.8 250L295.3 251.7L294.9 253.4L294 256.8L293.1 260.2L292.3 263.6L291.5 267L290.9 270.4L290.4 273.8L290.2 277.2L290.1 279.5L290.5 280.6L293.3 284L293.3 284L294.7 287.4L295.3 290.1L295.2 290.8L294.8 294.2L293.8 297.6L292.6 301L291.5 304.4L291.3 304.9L290.4 307.8L289.2 311.2L287.9 314.6L286.6 318L285.3 321.4L284 324.8L283.1 327.4L282.9 328.2L281.7 331.6L280.6 335L279.6 338.4L278.5 341.8L277.5 345.2L268.5 345.7Z" fill="url(#bf)"/><path d="M277.8 158.1L279.9 161.5L281.9 164.9L284 168.3L286 171.7L288 175.1L288.3 175.5L290.1 178.5L292.2 181.9L294.2 185.3L296.3 188.7L298.3 192.1L300.2 195.5L301 197.2L302 198.9L303.6 202.3L305.3 205.7L306.8 209.1L307.9 211.4L308.4 212.5L308.7 213.3L309.6 215.2L309.9 215.9L310.4 217L311.3 218.9L311.5 219.3L312.2 220.8L310.9 222.7L310.9 222.7L309.7 224.5L309 225.5L308.5 226.1L308.3 226.4L306.6 228.3L305.3 229.5L304.8 230.1L303.2 232L302.6 233L302.6 233L302.1 233.9L301.1 235.8L300.8 236.4L299.3 239.8L297.9 243.2L296.8 246.6L295.8 250L295.3 251.7L294.9 253.4L294 256.8L293.1 260.2L292.3 263.6L291.5 267L290.9 270.4L290.4 273.8L290.2 277.2L290.1 279.5L290.5 280.6L293.3 284L293.3 284L294.7 287.4L295.3 290.1L295.2 290.8L294.8 294.2L293.8 297.6L292.6 301L291.5 304.4L291.3 304.9L290.4 307.8L289.2 311.2L287.9 314.6L286.6 318L285.3 321.4L284 324.8L283.1 327.4L282.9 328.2L281.7 331.6L280.6 335L279.6 338.4L278.5 341.8L277.5 345.2" fill="none" stroke="url(#bs)" stroke-width="1.15" stroke-opacity="0.87" stroke-linejoin="round"/><path d="M310.9 222.7L310.9 222.7L309.7 224.5L309 225.5L308.5 226.1L308.3 226.4L306.6 228.3L305.3 229.5" fill="none" stroke="#2a1a10" stroke-width="1.45" stroke-opacity="0.7"/><path d="M263.4 157.5L272.4 156.5L274.6 160L276.7 163.4L278.9 166.8L281 170.3L283.1 173.7L283.2 173.8L285.2 177.2L287.4 180.6L289.5 184.1L291.6 187.5L293.6 190.9L295.5 194.4L296 195.4L297.2 197.8L298.9 201.3L300.4 204.7L301.9 208.2L302.9 210.5L303.4 211.6L303.7 212.4L304.5 214.3L304.9 215L305.3 216.2L306.2 218.1L306.4 218.5L307 220L305.8 221.8L305.7 221.9L304.6 223.7L303.9 224.7L303.4 225.4L303.2 225.6L301.4 227.5L300.2 228.8L299.6 229.4L298 231.3L297.4 232.3L297.4 232.3L296.9 233.2L295.9 235.1L295.6 235.7L294 239.2L292.6 242.6L291.4 246L290.4 249.5L289.9 251.2L289.5 252.9L288.6 256.4L287.7 259.8L286.8 263.3L286.1 266.7L285.5 270.1L285 273.6L284.7 277L284.7 279.3L285.1 280.5L288.1 283.9L288.1 283.9L289.6 287.4L290.2 290.5L290.2 290.8L289.8 294.2L288.8 297.7L287.6 301.1L286.4 304.6L286.2 305.3L285.3 308L284 311.5L282.7 314.9L281.4 318.3L280 321.8L278.7 325.2L277.7 328.1L277.5 328.7L276.3 332.1L275.2 335.6L274.1 339L273 342.4L272 345.9L263 346.4Z" fill="url(#bf)"/><path d="M272.4 156.5L274.6 160L276.7 163.4L278.9 166.8L281 170.3L283.1 173.7L283.2 173.8L285.2 177.2L287.4 180.6L289.5 184.1L291.6 187.5L293.6 190.9L295.5 194.4L296 195.4L297.2 197.8L298.9 201.3L300.4 204.7L301.9 208.2L302.9 210.5L303.4 211.6L303.7 212.4L304.5 214.3L304.9 215L305.3 216.2L306.2 218.1L306.4 218.5L307 220L305.8 221.8L305.7 221.9L304.6 223.7L303.9 224.7L303.4 225.4L303.2 225.6L301.4 227.5L300.2 228.8L299.6 229.4L298 231.3L297.4 232.3L297.4 232.3L296.9 233.2L295.9 235.1L295.6 235.7L294 239.2L292.6 242.6L291.4 246L290.4 249.5L289.9 251.2L289.5 252.9L288.6 256.4L287.7 259.8L286.8 263.3L286.1 266.7L285.5 270.1L285 273.6L284.7 277L284.7 279.3L285.1 280.5L288.1 283.9L288.1 283.9L289.6 287.4L290.2 290.5L290.2 290.8L289.8 294.2L288.8 297.7L287.6 301.1L286.4 304.6L286.2 305.3L285.3 308L284 311.5L282.7 314.9L281.4 318.3L280 321.8L278.7 325.2L277.7 328.1L277.5 328.7L276.3 332.1L275.2 335.6L274.1 339L273 342.4L272 345.9" fill="none" stroke="url(#bs)" stroke-width="1.17" stroke-opacity="0.88" stroke-linejoin="round"/><path d="M305.8 221.8L305.7 221.9L304.6 223.7L303.9 224.7L303.4 225.4L303.2 225.6L301.4 227.5L300.2 228.8" fill="none" stroke="#2a1a10" stroke-width="1.47" stroke-opacity="0.7"/><path d="M257.8 155.9L266.8 154.9L269.1 158.4L271.4 161.9L273.6 165.3L275.9 168.8L277.9 172L278.1 172.3L280.3 175.8L282.5 179.3L284.7 182.8L286.8 186.3L288.8 189.7L290.7 193.2L290.8 193.6L292.4 196.7L293.9 200.2L295.4 203.7L296.8 207.2L297.8 209.5L298.2 210.6L298.6 211.4L299.3 213.3L299.6 214.1L300.1 215.3L300.9 217.2L301.1 217.6L301.7 219.1L300.5 221L300.4 221.1L299.3 222.9L298.6 223.9L298.1 224.6L297.9 224.9L296.2 226.8L294.9 228.1L294.3 228.7L292.8 230.6L292.1 231.6L292.1 231.6L291.6 232.5L290.6 234.4L290.2 235L288.6 238.5L287.1 242L285.9 245.5L284.8 249L284.4 250.7L283.9 252.5L283 256L282.1 259.4L281.3 262.9L280.5 266.4L279.9 269.9L279.4 273.4L279.1 276.9L279.1 279.1L279.6 280.4L282.7 283.8L282.7 283.9L284.3 287.3L285 290.8L285 290.8L284.6 294.3L283.7 297.8L282.5 301.3L281.2 304.8L280.9 305.8L280 308.2L278.8 311.7L277.4 315.2L276 318.7L274.6 322.2L273.2 325.7L272.1 328.8L272 329.2L270.8 332.6L269.6 336.1L268.5 339.6L267.4 343.1L266.4 346.6L257.4 347.1Z" fill="url(#bf)"/><path d="M266.8 154.9L269.1 158.4L271.4 161.9L273.6 165.3L275.9 168.8L277.9 172L278.1 172.3L280.3 175.8L282.5 179.3L284.7 182.8L286.8 186.3L288.8 189.7L290.7 193.2L290.8 193.6L292.4 196.7L293.9 200.2L295.4 203.7L296.8 207.2L297.8 209.5L298.2 210.6L298.6 211.4L299.3 213.3L299.6 214.1L300.1 215.3L300.9 217.2L301.1 217.6L301.7 219.1L300.5 221L300.4 221.1L299.3 222.9L298.6 223.9L298.1 224.6L297.9 224.9L296.2 226.8L294.9 228.1L294.3 228.7L292.8 230.6L292.1 231.6L292.1 231.6L291.6 232.5L290.6 234.4L290.2 235L288.6 238.5L287.1 242L285.9 245.5L284.8 249L284.4 250.7L283.9 252.5L283 256L282.1 259.4L281.3 262.9L280.5 266.4L279.9 269.9L279.4 273.4L279.1 276.9L279.1 279.1L279.6 280.4L282.7 283.8L282.7 283.9L284.3 287.3L285 290.8L285 290.8L284.6 294.3L283.7 297.8L282.5 301.3L281.2 304.8L280.9 305.8L280 308.2L278.8 311.7L277.4 315.2L276 318.7L274.6 322.2L273.2 325.7L272.1 328.8L272 329.2L270.8 332.6L269.6 336.1L268.5 339.6L267.4 343.1L266.4 346.6" fill="none" stroke="url(#bs)" stroke-width="1.19" stroke-opacity="0.89" stroke-linejoin="round"/><path d="M300.5 221L300.4 221.1L299.3 222.9L298.6 223.9L298.1 224.6L297.9 224.9L296.2 226.8L294.9 228.1" fill="none" stroke="#2a1a10" stroke-width="1.49" stroke-opacity="0.7"/><path d="M252 154.2L261 153.2L263.5 156.7L265.9 160.3L268.3 163.8L270.6 167.3L272.4 170.1L272.9 170.8L275.2 174.4L277.5 177.9L279.7 181.4L281.9 185L283.9 188.5L285.5 191.7L285.7 192L287.3 195.5L288.8 199.1L290.3 202.6L291.6 206.1L292.5 208.5L292.9 209.7L293.2 210.5L294 212.4L294.3 213.2L294.7 214.3L295.5 216.3L295.7 216.7L296.3 218.2L295.1 220.2L295 220.2L293.9 222.1L293.2 223.1L292.7 223.8L292.5 224L290.7 226L289.5 227.3L288.9 227.9L287.3 229.9L286.7 230.8L286.7 230.8L286.1 231.8L285.1 233.7L284.7 234.4L283 237.9L281.5 241.4L280.2 245L279.1 248.5L278.6 250.2L278.2 252L277.2 255.5L276.3 259.1L275.5 262.6L274.8 266.1L274.1 269.7L273.7 273.2L273.4 276.7L273.4 278.9L273.9 280.2L277.1 283.8L277.2 283.9L278.8 287.3L279.7 290.8L279.7 291.2L279.4 294.4L278.4 297.9L277.2 301.4L275.9 304.9L275.4 306.3L274.7 308.5L273.4 312L271.9 315.5L270.5 319.1L269 322.6L267.6 326.1L266.3 329.6L266.3 329.6L265.1 333.2L263.9 336.7L262.8 340.2L261.7 343.8L260.6 347.3L251.6 347.8Z" fill="url(#bf)"/><path d="M261 153.2L263.5 156.7L265.9 160.3L268.3 163.8L270.6 167.3L272.4 170.1L272.9 170.8L275.2 174.4L277.5 177.9L279.7 181.4L281.9 185L283.9 188.5L285.5 191.7L285.7 192L287.3 195.5L288.8 199.1L290.3 202.6L291.6 206.1L292.5 208.5L292.9 209.7L293.2 210.5L294 212.4L294.3 213.2L294.7 214.3L295.5 216.3L295.7 216.7L296.3 218.2L295.1 220.2L295 220.2L293.9 222.1L293.2 223.1L292.7 223.8L292.5 224L290.7 226L289.5 227.3L288.9 227.9L287.3 229.9L286.7 230.8L286.7 230.8L286.1 231.8L285.1 233.7L284.7 234.4L283 237.9L281.5 241.4L280.2 245L279.1 248.5L278.6 250.2L278.2 252L277.2 255.5L276.3 259.1L275.5 262.6L274.8 266.1L274.1 269.7L273.7 273.2L273.4 276.7L273.4 278.9L273.9 280.2L277.1 283.8L277.2 283.9L278.8 287.3L279.7 290.8L279.7 291.2L279.4 294.4L278.4 297.9L277.2 301.4L275.9 304.9L275.4 306.3L274.7 308.5L273.4 312L271.9 315.5L270.5 319.1L269 322.6L267.6 326.1L266.3 329.6L266.3 329.6L265.1 333.2L263.9 336.7L262.8 340.2L261.7 343.8L260.6 347.3" fill="none" stroke="url(#bs)" stroke-width="1.21" stroke-opacity="0.89" stroke-linejoin="round"/><path d="M295.1 220.2L295 220.2L293.9 222.1L293.2 223.1L292.7 223.8L292.5 224L290.7 226L289.5 227.3" fill="none" stroke="#2a1a10" stroke-width="1.51" stroke-opacity="0.7"/><path d="M246.1 152.5L255.1 151.5L257.7 155L260.3 158.6L262.8 162.2L265.3 165.8L266.8 168.1L267.6 169.3L270 172.9L272.4 176.5L274.7 180.1L276.8 183.6L278.8 187.2L280.1 189.7L280.6 190.8L282.1 194.4L283.6 197.9L284.9 201.5L286.2 205.1L287.1 207.5L287.5 208.6L287.8 209.5L288.5 211.4L288.8 212.2L289.2 213.4L289.9 215.4L290.1 215.8L290.7 217.3L289.5 219.3L289.4 219.4L288.3 221.2L287.6 222.2L287.1 222.9L286.9 223.2L285.2 225.2L283.9 226.5L283.3 227.1L281.7 229.1L281.1 230.1L281.1 230.1L280.5 231.1L279.4 233L279.1 233.7L277.3 237.2L275.7 240.8L274.4 244.4L273.2 248L272.7 249.7L272.3 251.5L271.3 255.1L270.4 258.7L269.6 262.3L268.8 265.8L268.2 269.4L267.8 273L267.5 276.6L267.5 278.7L268.1 280.1L271.4 283.7L271.5 283.9L273.2 287.3L274.2 290.8L274.2 291.6L274 294.4L273 298L271.8 301.6L270.4 305.1L269.8 306.8L269.2 308.7L267.8 312.3L266.3 315.9L264.8 319.4L263.3 323L261.8 326.6L260.5 330.2L260.4 330.4L259.2 333.7L258 337.3L256.9 340.9L255.7 344.5L254.7 348L245.7 348.5Z" fill="url(#bf)"/><path d="M255.1 151.5L257.7 155L260.3 158.6L262.8 162.2L265.3 165.8L266.8 168.1L267.6 169.3L270 172.9L272.4 176.5L274.7 180.1L276.8 183.6L278.8 187.2L280.1 189.7L280.6 190.8L282.1 194.4L283.6 197.9L284.9 201.5L286.2 205.1L287.1 207.5L287.5 208.6L287.8 209.5L288.5 211.4L288.8 212.2L289.2 213.4L289.9 215.4L290.1 215.8L290.7 217.3L289.5 219.3L289.4 219.4L288.3 221.2L287.6 222.2L287.1 222.9L286.9 223.2L285.2 225.2L283.9 226.5L283.3 227.1L281.7 229.1L281.1 230.1L281.1 230.1L280.5 231.1L279.4 233L279.1 233.7L277.3 237.2L275.7 240.8L274.4 244.4L273.2 248L272.7 249.7L272.3 251.5L271.3 255.1L270.4 258.7L269.6 262.3L268.8 265.8L268.2 269.4L267.8 273L267.5 276.6L267.5 278.7L268.1 280.1L271.4 283.7L271.5 283.9L273.2 287.3L274.2 290.8L274.2 291.6L274 294.4L273 298L271.8 301.6L270.4 305.1L269.8 306.8L269.2 308.7L267.8 312.3L266.3 315.9L264.8 319.4L263.3 323L261.8 326.6L260.5 330.2L260.4 330.4L259.2 333.7L258 337.3L256.9 340.9L255.7 344.5L254.7 348" fill="none" stroke="url(#bs)" stroke-width="1.22" stroke-opacity="0.9" stroke-linejoin="round"/><path d="M289.5 219.3L289.4 219.4L288.3 221.2L287.6 222.2L287.1 222.9L286.9 223.2L285.2 225.2L283.9 226.5" fill="none" stroke="#2a1a10" stroke-width="1.52" stroke-opacity="0.7"/><path d="M240 150.7L249 149.7L251.8 153.3L254.5 156.9L257.2 160.5L259.8 164.2L261.1 166.1L262.2 167.8L264.7 171.4L267.1 175L269.5 178.6L271.6 182.3L273.6 185.9L274.5 187.7L275.3 189.5L276.8 193.1L278.2 196.7L279.4 200.4L280.7 204L281.5 206.4L281.9 207.6L282.1 208.4L282.8 210.4L283.1 211.2L283.5 212.4L284.2 214.4L284.3 214.8L284.9 216.4L283.7 218.4L283.6 218.5L282.5 220.4L281.9 221.4L281.3 222.1L281.1 222.4L279.4 224.3L278.2 225.7L277.6 226.3L276 228.3L275.3 229.3L275.3 229.3L274.7 230.3L273.6 232.3L273.3 232.9L271.4 236.6L269.8 240.2L268.3 243.8L267.2 247.4L266.7 249.2L266.2 251L265.2 254.7L264.3 258.3L263.5 261.9L262.7 265.5L262.1 269.1L261.7 272.8L261.4 276.4L261.4 278.5L262 280L265.6 283.6L265.7 283.8L267.4 287.2L268.5 290.9L268.6 292L268.4 294.5L267.5 298.1L266.2 301.7L264.8 305.3L264.1 307.3L263.5 309L262.1 312.6L260.6 316.2L259 319.8L257.4 323.4L255.9 327.1L254.5 330.7L254.3 331.2L253.2 334.3L251.9 337.9L250.8 341.5L249.6 345.2L248.6 348.8L239.6 349.3Z" fill="url(#bf)"/><path d="M249 149.7L251.8 153.3L254.5 156.9L257.2 160.5L259.8 164.2L261.1 166.1L262.2 167.8L264.7 171.4L267.1 175L269.5 178.6L271.6 182.3L273.6 185.9L274.5 187.7L275.3 189.5L276.8 193.1L278.2 196.7L279.4 200.4L280.7 204L281.5 206.4L281.9 207.6L282.1 208.4L282.8 210.4L283.1 211.2L283.5 212.4L284.2 214.4L284.3 214.8L284.9 216.4L283.7 218.4L283.6 218.5L282.5 220.4L281.9 221.4L281.3 222.1L281.1 222.4L279.4 224.3L278.2 225.7L277.6 226.3L276 228.3L275.3 229.3L275.3 229.3L274.7 230.3L273.6 232.3L273.3 232.9L271.4 236.6L269.8 240.2L268.3 243.8L267.2 247.4L266.7 249.2L266.2 251L265.2 254.7L264.3 258.3L263.5 261.9L262.7 265.5L262.1 269.1L261.7 272.8L261.4 276.4L261.4 278.5L262 280L265.6 283.6L265.7 283.8L267.4 287.2L268.5 290.9L268.6 292L268.4 294.5L267.5 298.1L266.2 301.7L264.8 305.3L264.1 307.3L263.5 309L262.1 312.6L260.6 316.2L259 319.8L257.4 323.4L255.9 327.1L254.5 330.7L254.3 331.2L253.2 334.3L251.9 337.9L250.8 341.5L249.6 345.2L248.6 348.8" fill="none" stroke="url(#bs)" stroke-width="1.24" stroke-opacity="0.91" stroke-linejoin="round"/><path d="M283.7 218.4L283.6 218.5L282.5 220.4L281.9 221.4L281.3 222.1L281.1 222.4L279.4 224.3L278.2 225.7" fill="none" stroke="#2a1a10" stroke-width="1.54" stroke-opacity="0.66"/><path d="M233.7 148.9L242.7 147.9L245.7 151.5L248.6 155.2L251.4 158.9L254.1 162.5L255.2 164L256.7 166.2L259.3 169.9L261.8 173.5L264.1 177.2L266.3 180.9L268.2 184.5L268.7 185.6L269.8 188.2L271.3 191.9L272.6 195.5L273.8 199.2L274.9 202.9L275.7 205.3L276.1 206.5L276.3 207.4L276.9 209.4L277.2 210.2L277.6 211.4L278.3 213.4L278.4 213.9L278.9 215.4L277.8 217.4L277.7 217.5L276.6 219.5L276 220.5L275.4 221.2L275.2 221.5L273.5 223.5L272.3 224.9L271.7 225.5L270 227.5L269.4 228.5L269.4 228.5L268.8 229.5L267.6 231.6L267.3 232.2L265.3 235.9L263.6 239.5L262.1 243.2L260.9 246.9L260.4 248.7L259.9 250.5L259 254.2L258.1 257.9L257.2 261.5L256.5 265.2L255.9 268.9L255.4 272.5L255.2 276.2L255.1 278.3L255.9 279.9L259.5 283.5L259.7 283.8L261.4 287.2L262.7 290.9L262.8 292.4L262.6 294.5L261.8 298.2L260.5 301.9L259 305.5L258.2 307.8L257.7 309.2L256.2 312.9L254.7 316.6L253 320.2L251.4 323.9L249.8 327.6L248.3 331.2L248 332.1L247 334.9L245.7 338.6L244.5 342.2L243.4 345.9L242.3 349.6L233.3 350.1Z" fill="url(#bf)"/><path d="M242.7 147.9L245.7 151.5L248.6 155.2L251.4 158.9L254.1 162.5L255.2 164L256.7 166.2L259.3 169.9L261.8 173.5L264.1 177.2L266.3 180.9L268.2 184.5L268.7 185.6L269.8 188.2L271.3 191.9L272.6 195.5L273.8 199.2L274.9 202.9L275.7 205.3L276.1 206.5L276.3 207.4L276.9 209.4L277.2 210.2L277.6 211.4L278.3 213.4L278.4 213.9L278.9 215.4L277.8 217.4L277.7 217.5L276.6 219.5L276 220.5L275.4 221.2L275.2 221.5L273.5 223.5L272.3 224.9L271.7 225.5L270 227.5L269.4 228.5L269.4 228.5L268.8 229.5L267.6 231.6L267.3 232.2L265.3 235.9L263.6 239.5L262.1 243.2L260.9 246.9L260.4 248.7L259.9 250.5L259 254.2L258.1 257.9L257.2 261.5L256.5 265.2L255.9 268.9L255.4 272.5L255.2 276.2L255.1 278.3L255.9 279.9L259.5 283.5L259.7 283.8L261.4 287.2L262.7 290.9L262.8 292.4L262.6 294.5L261.8 298.2L260.5 301.9L259 305.5L258.2 307.8L257.7 309.2L256.2 312.9L254.7 316.6L253 320.2L251.4 323.9L249.8 327.6L248.3 331.2L248 332.1L247 334.9L245.7 338.6L244.5 342.2L243.4 345.9L242.3 349.6" fill="none" stroke="url(#bs)" stroke-width="1.26" stroke-opacity="0.92" stroke-linejoin="round"/><path d="M277.8 217.4L277.7 217.5L276.6 219.5L276 220.5L275.4 221.2L275.2 221.5L273.5 223.5L272.3 224.9" fill="none" stroke="#2a1a10" stroke-width="1.56" stroke-opacity="0.6"/><path d="M227.3 147L236.3 146L239.5 149.7L242.6 153.4L245.6 157.1L248.4 160.8L249.1 161.9L251 164.6L253.7 168.3L256.3 172L258.7 175.7L260.8 179.4L262.7 183.1L262.8 183.4L264.2 186.8L265.6 190.6L266.8 194.3L267.9 198L269 201.7L269.7 204.2L270.1 205.4L270.3 206.3L270.9 208.3L271.2 209.1L271.5 210.4L272.2 212.4L272.3 212.9L272.8 214.4L271.6 216.5L271.6 216.6L270.5 218.5L269.9 219.5L269.3 220.3L269.1 220.6L267.4 222.6L266.2 224L265.6 224.7L263.9 226.7L263.3 227.7L263.3 227.7L262.6 228.7L261.5 230.8L261.1 231.4L259.1 235.2L257.3 238.9L255.8 242.6L254.5 246.3L254 248.2L253.5 250L252.5 253.7L251.6 257.5L250.7 261.2L250 264.9L249.4 268.6L249 272.3L248.7 276L248.7 278.1L249.5 279.8L253.3 283.5L253.5 283.8L255.3 287.2L256.6 290.9L256.9 292.8L256.7 294.6L255.9 298.3L254.6 302L253.1 305.8L252.1 308.4L251.7 309.5L250.2 313.2L248.6 316.9L246.9 320.6L245.1 324.3L243.5 328.1L242 331.8L241.5 332.9L240.6 335.5L239.3 339.2L238.1 342.9L236.9 346.6L235.8 350.4L226.8 350.9Z" fill="url(#bf)"/><path d="M236.3 146L239.5 149.7L242.6 153.4L245.6 157.1L248.4 160.8L249.1 161.9L251 164.6L253.7 168.3L256.3 172L258.7 175.7L260.8 179.4L262.7 183.1L262.8 183.4L264.2 186.8L265.6 190.6L266.8 194.3L267.9 198L269 201.7L269.7 204.2L270.1 205.4L270.3 206.3L270.9 208.3L271.2 209.1L271.5 210.4L272.2 212.4L272.3 212.9L272.8 214.4L271.6 216.5L271.6 216.6L270.5 218.5L269.9 219.5L269.3 220.3L269.1 220.6L267.4 222.6L266.2 224L265.6 224.7L263.9 226.7L263.3 227.7L263.3 227.7L262.6 228.7L261.5 230.8L261.1 231.4L259.1 235.2L257.3 238.9L255.8 242.6L254.5 246.3L254 248.2L253.5 250L252.5 253.7L251.6 257.5L250.7 261.2L250 264.9L249.4 268.6L249 272.3L248.7 276L248.7 278.1L249.5 279.8L253.3 283.5L253.5 283.8L255.3 287.2L256.6 290.9L256.9 292.8L256.7 294.6L255.9 298.3L254.6 302L253.1 305.8L252.1 308.4L251.7 309.5L250.2 313.2L248.6 316.9L246.9 320.6L245.1 324.3L243.5 328.1L242 331.8L241.5 332.9L240.6 335.5L239.3 339.2L238.1 342.9L236.9 346.6L235.8 350.4" fill="none" stroke="url(#bs)" stroke-width="1.29" stroke-opacity="0.93" stroke-linejoin="round"/><path d="M271.6 216.5L271.6 216.6L270.5 218.5L269.9 219.5L269.3 220.3L269.1 220.6L267.4 222.6L266.2 224" fill="none" stroke="#2a1a10" stroke-width="1.59" stroke-opacity="0.53"/><path d="M220.6 145L229.6 144L233.1 147.8L236.4 151.6L239.5 155.3L242.5 159.1L242.8 159.6L245.2 162.9L248 166.6L250.6 170.4L253 174.2L255.2 177.9L256.7 181.1L256.9 181.7L258.4 185.5L259.7 189.2L260.8 193L261.9 196.8L262.9 200.5L263.6 203.1L263.9 204.3L264.1 205.1L264.7 207.2L264.9 208.1L265.3 209.3L265.9 211.4L266 211.8L266.5 213.4L265.3 215.5L265.3 215.6L264.2 217.6L263.6 218.6L263 219.4L262.8 219.6L261.1 221.7L259.9 223.1L259.3 223.8L257.7 225.9L257 226.9L257 226.9L256.3 227.9L255.1 230L254.7 230.7L252.6 234.4L250.8 238.2L249.2 242L247.8 245.7L247.3 247.6L246.8 249.5L245.8 253.3L244.9 257L244.1 260.8L243.3 264.6L242.7 268.3L242.3 272.1L242.1 275.9L242 277.8L242.9 279.6L246.8 283.4L247.1 283.7L248.9 287.2L250.4 290.9L250.7 293.3L250.7 294.7L249.9 298.5L248.6 302.2L247 306L245.8 309L245.5 309.7L244 313.5L242.3 317.3L240.6 321L238.8 324.8L237 328.6L235.4 332.3L234.8 333.9L234 336.1L232.7 339.9L231.4 343.6L230.2 347.4L229.1 351.2L220.1 351.7Z" fill="url(#bf)"/><path d="M229.6 144L233.1 147.8L236.4 151.6L239.5 155.3L242.5 159.1L242.8 159.6L245.2 162.9L248 166.6L250.6 170.4L253 174.2L255.2 177.9L256.7 181.1L256.9 181.7L258.4 185.5L259.7 189.2L260.8 193L261.9 196.8L262.9 200.5L263.6 203.1L263.9 204.3L264.1 205.1L264.7 207.2L264.9 208.1L265.3 209.3L265.9 211.4L266 211.8L266.5 213.4L265.3 215.5L265.3 215.6L264.2 217.6L263.6 218.6L263 219.4L262.8 219.6L261.1 221.7L259.9 223.1L259.3 223.8L257.7 225.9L257 226.9L257 226.9L256.3 227.9L255.1 230L254.7 230.7L252.6 234.4L250.8 238.2L249.2 242L247.8 245.7L247.3 247.6L246.8 249.5L245.8 253.3L244.9 257L244.1 260.8L243.3 264.6L242.7 268.3L242.3 272.1L242.1 275.9L242 277.8L242.9 279.6L246.8 283.4L247.1 283.7L248.9 287.2L250.4 290.9L250.7 293.3L250.7 294.7L249.9 298.5L248.6 302.2L247 306L245.8 309L245.5 309.7L244 313.5L242.3 317.3L240.6 321L238.8 324.8L237 328.6L235.4 332.3L234.8 333.9L234 336.1L232.7 339.9L231.4 343.6L230.2 347.4L229.1 351.2" fill="none" stroke="url(#bs)" stroke-width="1.31" stroke-opacity="0.94" stroke-linejoin="round"/><path d="M265.3 215.5L265.3 215.6L264.2 217.6L263.6 218.6L263 219.4L262.8 219.6L261.1 221.7L259.9 223.1" fill="none" stroke="#2a1a10" stroke-width="1.61" stroke-opacity="0.46"/><path d="M213.7 143L222.7 142L226.5 145.8L230 149.7L233.3 153.5L236.4 157.3L236.4 157.3L239.3 161.1L242.2 164.9L244.8 168.8L247.3 172.6L249.3 176.4L250.4 178.7L251 180.2L252.3 184L253.6 187.8L254.6 191.7L255.6 195.5L256.6 199.3L257.2 201.9L257.5 203.1L257.7 204L258.3 206.1L258.5 206.9L258.8 208.2L259.4 210.3L259.5 210.8L260 212.4L258.8 214.5L258.8 214.6L257.7 216.6L257.1 217.6L256.6 218.4L256.4 218.7L254.7 220.8L253.4 222.2L252.9 222.9L251.2 225L250.5 226L250.5 226L249.8 227.1L248.6 229.2L248.2 229.8L246 233.7L244.1 237.5L242.4 241.3L241 245.1L240.4 247L239.9 248.9L239 252.8L238 256.6L237.2 260.4L236.5 264.2L235.9 268L235.4 271.8L235.2 275.7L235.2 277.6L236.2 279.5L240.2 283.3L240.5 283.7L242.4 287.1L244 290.9L244.4 293.8L244.4 294.8L243.7 298.6L242.4 302.4L240.7 306.2L239.4 309.6L239.2 310L237.7 313.8L235.9 317.7L234.1 321.5L232.2 325.3L230.4 329.1L228.7 332.9L228 334.8L227.2 336.8L225.9 340.6L224.6 344.4L223.4 348.2L222.2 352L213.2 352.5Z" fill="url(#bf)"/><path d="M222.7 142L226.5 145.8L230 149.7L233.3 153.5L236.4 157.3L236.4 157.3L239.3 161.1L242.2 164.9L244.8 168.8L247.3 172.6L249.3 176.4L250.4 178.7L251 180.2L252.3 184L253.6 187.8L254.6 191.7L255.6 195.5L256.6 199.3L257.2 201.9L257.5 203.1L257.7 204L258.3 206.1L258.5 206.9L258.8 208.2L259.4 210.3L259.5 210.8L260 212.4L258.8 214.5L258.8 214.6L257.7 216.6L257.1 217.6L256.6 218.4L256.4 218.7L254.7 220.8L253.4 222.2L252.9 222.9L251.2 225L250.5 226L250.5 226L249.8 227.1L248.6 229.2L248.2 229.8L246 233.7L244.1 237.5L242.4 241.3L241 245.1L240.4 247L239.9 248.9L239 252.8L238 256.6L237.2 260.4L236.5 264.2L235.9 268L235.4 271.8L235.2 275.7L235.2 277.6L236.2 279.5L240.2 283.3L240.5 283.7L242.4 287.1L244 290.9L244.4 293.8L244.4 294.8L243.7 298.6L242.4 302.4L240.7 306.2L239.4 309.6L239.2 310L237.7 313.8L235.9 317.7L234.1 321.5L232.2 325.3L230.4 329.1L228.7 332.9L228 334.8L227.2 336.8L225.9 340.6L224.6 344.4L223.4 348.2L222.2 352" fill="none" stroke="url(#bs)" stroke-width="1.33" stroke-opacity="0.95" stroke-linejoin="round"/><path d="M258.8 214.5L258.8 214.6L257.7 216.6L257.1 217.6L256.6 218.4L256.4 218.7L254.7 220.8L253.4 222.2" fill="none" stroke="#2a1a10" stroke-width="1.63" stroke-opacity="0.37"/><path d="M206.7 141L215.7 140L219.7 143.8L223.5 147.7L227 151.6L229.8 154.9L230.2 155.4L233.2 159.3L236.2 163.2L238.9 167.1L241.3 170.9L243.3 174.8L243.9 176.2L244.8 178.7L246.1 182.5L247.2 186.4L248.2 190.3L249.2 194.2L250 198L250.6 200.6L250.9 201.9L251.1 202.8L251.6 204.9L251.8 205.8L252.1 207L252.7 209.2L252.8 209.6L253.3 211.3L252.1 213.4L252.1 213.5L251 215.6L250.4 216.6L249.9 217.4L249.7 217.7L248 219.8L246.8 221.3L246.2 221.9L244.5 224.1L243.8 225.1L243.8 225.1L243.1 226.2L241.8 228.3L241.4 229L239.2 232.9L237.1 236.8L235.3 240.6L233.9 244.5L233.4 246.4L232.9 248.4L231.9 252.2L230.9 256.1L230.1 260L229.4 263.9L228.8 267.7L228.3 271.6L228.1 275.5L228.1 277.3L229.2 279.3L233.4 283.2L233.7 283.7L235.6 287.1L237.3 291L237.9 294.3L237.9 294.8L237.3 298.7L236 302.6L234.3 306.4L232.7 310.3L232.7 310.3L231.1 314.2L229.3 318.1L227.4 321.9L225.4 325.8L223.5 329.7L221.8 333.5L220.9 335.9L220.3 337.4L218.9 341.3L217.5 345.2L216.3 349L215.2 352.9L206.2 353.4Z" fill="url(#bf)"/><path d="M215.7 140L219.7 143.8L223.5 147.7L227 151.6L229.8 154.9L230.2 155.4L233.2 159.3L236.2 163.2L238.9 167.1L241.3 170.9L243.3 174.8L243.9 176.2L244.8 178.7L246.1 182.5L247.2 186.4L248.2 190.3L249.2 194.2L250 198L250.6 200.6L250.9 201.9L251.1 202.8L251.6 204.9L251.8 205.8L252.1 207L252.7 209.2L252.8 209.6L253.3 211.3L252.1 213.4L252.1 213.5L251 215.6L250.4 216.6L249.9 217.4L249.7 217.7L248 219.8L246.8 221.3L246.2 221.9L244.5 224.1L243.8 225.1L243.8 225.1L243.1 226.2L241.8 228.3L241.4 229L239.2 232.9L237.1 236.8L235.3 240.6L233.9 244.5L233.4 246.4L232.9 248.4L231.9 252.2L230.9 256.1L230.1 260L229.4 263.9L228.8 267.7L228.3 271.6L228.1 275.5L228.1 277.3L229.2 279.3L233.4 283.2L233.7 283.7L235.6 287.1L237.3 291L237.9 294.3L237.9 294.8L237.3 298.7L236 302.6L234.3 306.4L232.7 310.3L232.7 310.3L231.1 314.2L229.3 318.1L227.4 321.9L225.4 325.8L223.5 329.7L221.8 333.5L220.9 335.9L220.3 337.4L218.9 341.3L217.5 345.2L216.3 349L215.2 352.9" fill="none" stroke="url(#bs)" stroke-width="1.35" stroke-opacity="0.96" stroke-linejoin="round"/><path d="M252.1 213.4L252.1 213.5L251 215.6L250.4 216.6L249.9 217.4L249.7 217.7L248 219.8L246.8 221.3" fill="none" stroke="#2a1a10" stroke-width="1.65" stroke-opacity="0.28"/><path d="M199.4 138.8L208.4 137.8L212.5 141.8L216.4 145.7L220 149.6L222.8 152.9L223.3 153.5L226.4 157.5L229.3 161.4L232 165.3L234.3 169.2L235.9 172.6L236.1 173.2L237.6 177.1L238.8 181L240 184.9L241 188.9L241.9 192.7L241.9 192.8L242.4 194.9L242.8 196.7L242.9 197L243.3 199.2L243.7 200.7L243.8 201.3L244.3 203.5L244 204.6L243.7 205.7L243 207.8L242.7 208.5L242.1 210L241.6 211.1L241.1 212.1L241 212.4L239.8 214.3L238.4 216.4L238.3 216.5L236.7 218.6L235.6 220.3L235.3 220.8L234.9 221.5L233.4 224.2L231.1 228.1L229 232.1L227.1 236L225.6 239.9L225.1 241.9L224.6 243.9L223.6 247.8L222.7 251.7L221.9 255.6L221.2 259.6L220.7 263.5L220.4 267.4L220.3 270.2L220.4 271.3L221.8 275.3L224 279.2L225.6 282.4L225.9 283.1L227.9 287L229.9 291L231.2 294.9L231.4 296.9L231.2 298.8L230 302.8L228.2 306.7L226.2 310.6L225.4 312.3L224.4 314.5L222.5 318.5L220.5 322.4L218.4 326.3L216.4 330.2L214.6 334.2L213.5 336.8L213 338.1L211.5 342L210.2 346L209 349.9L207.8 353.8L198.8 354.3Z" fill="url(#bf)"/><path d="M208.4 137.8L212.5 141.8L216.4 145.7L220 149.6L222.8 152.9L223.3 153.5L226.4 157.5L229.3 161.4L232 165.3L234.3 169.2L235.9 172.6L236.1 173.2L237.6 177.1L238.8 181L240 184.9L241 188.9L241.9 192.7L241.9 192.8L242.4 194.9L242.8 196.7L242.9 197L243.3 199.2L243.7 200.7L243.8 201.3L244.3 203.5L244 204.6L243.7 205.7L243 207.8L242.7 208.5L242.1 210L241.6 211.1L241.1 212.1L241 212.4L239.8 214.3L238.4 216.4L238.3 216.5L236.7 218.6L235.6 220.3L235.3 220.8L234.9 221.5L233.4 224.2L231.1 228.1L229 232.1L227.1 236L225.6 239.9L225.1 241.9L224.6 243.9L223.6 247.8L222.7 251.7L221.9 255.6L221.2 259.6L220.7 263.5L220.4 267.4L220.3 270.2L220.4 271.3L221.8 275.3L224 279.2L225.6 282.4L225.9 283.1L227.9 287L229.9 291L231.2 294.9L231.4 296.9L231.2 298.8L230 302.8L228.2 306.7L226.2 310.6L225.4 312.3L224.4 314.5L222.5 318.5L220.5 322.4L218.4 326.3L216.4 330.2L214.6 334.2L213.5 336.8L213 338.1L211.5 342L210.2 346L209 349.9L207.8 353.8" fill="none" stroke="url(#bs)" stroke-width="1.37" stroke-opacity="0.97" stroke-linejoin="round"/><path d="M191.8 136.6L200.8 135.6L205.1 139.6L209.1 143.6L212.7 147.6L215.6 151L216.1 151.6L219.2 155.5L222.2 159.5L224.9 163.5L227 167.5L227.6 168.7L228.7 171.5L230.1 175.5L231.4 179.4L232.5 183.4L232.6 183.9L233.1 186.1L233.4 187.4L233.6 188.3L234.1 190.5L234.3 191.4L234.5 192.7L234.9 194.9L234.8 195.4L234.6 197.1L234.1 199.3L234.1 199.4L233.5 201.5L233 203.3L232.9 203.7L232.4 205.1L232.1 205.9L231.5 207.3L231.1 208L229.9 210.2L229.2 211.3L228.5 212.4L226.8 215.3L225.6 217.5L224.6 219.3L222.5 223.3L220.3 227.3L218.4 231.2L216.9 235.2L216.5 236.8L215.9 239.2L214.9 243.2L214 247.2L213.3 251.2L212.7 255.1L212.3 259.1L212.2 262.3L212.2 263.1L212.7 267.1L213.7 271.1L215.1 275.1L216.5 279L217.1 280.9L217.9 283L219.8 287L222 291L223.7 295L224.6 299L224.6 299.7L224.1 302.9L222.3 306.9L219.9 310.9L217.9 314.6L217.7 314.9L215.7 318.9L213.5 322.9L211.3 326.9L209.1 330.8L207.2 334.8L205.9 337.7L205.5 338.8L204 342.8L202.6 346.8L201.4 350.8L200.3 354.7L191.3 355.2Z" fill="url(#bf)"/><path d="M200.8 135.6L205.1 139.6L209.1 143.6L212.7 147.6L215.6 151L216.1 151.6L219.2 155.5L222.2 159.5L224.9 163.5L227 167.5L227.6 168.7L228.7 171.5L230.1 175.5L231.4 179.4L232.5 183.4L232.6 183.9L233.1 186.1L233.4 187.4L233.6 188.3L234.1 190.5L234.3 191.4L234.5 192.7L234.9 194.9L234.8 195.4L234.6 197.1L234.1 199.3L234.1 199.4L233.5 201.5L233 203.3L232.9 203.7L232.4 205.1L232.1 205.9L231.5 207.3L231.1 208L229.9 210.2L229.2 211.3L228.5 212.4L226.8 215.3L225.6 217.5L224.6 219.3L222.5 223.3L220.3 227.3L218.4 231.2L216.9 235.2L216.5 236.8L215.9 239.2L214.9 243.2L214 247.2L213.3 251.2L212.7 255.1L212.3 259.1L212.2 262.3L212.2 263.1L212.7 267.1L213.7 271.1L215.1 275.1L216.5 279L217.1 280.9L217.9 283L219.8 287L222 291L223.7 295L224.6 299L224.6 299.7L224.1 302.9L222.3 306.9L219.9 310.9L217.9 314.6L217.7 314.9L215.7 318.9L213.5 322.9L211.3 326.9L209.1 330.8L207.2 334.8L205.9 337.7L205.5 338.8L204 342.8L202.6 346.8L201.4 350.8L200.3 354.7" fill="none" stroke="url(#bs)" stroke-width="1.4" stroke-opacity="0.98" stroke-linejoin="round"/><path d="M184 134.3L193 133.3L197.4 137.4L201.5 141.4L205.2 145.5L208.1 148.9L208.6 149.5L211.8 153.6L214.8 157.6L217.4 161.6L218.9 164.6L219.4 165.7L221 169.7L222.5 173.8L222.8 174.7L223.5 176.9L223.7 177.8L224 179.1L224.5 181.3L224.6 181.9L224.9 183.6L225.1 185.8L225.1 185.9L224.9 188L224.7 189.9L224.7 190.2L224.3 192.5L224 194L223.8 194.7L223.3 196.9L223 198L222.8 198.7L222.7 199.1L221.9 201.4L221.6 202.1L220.9 203.6L219.6 206.1L217.5 210.2L215.9 213.3L215.5 214.2L213.4 218.2L211.2 222.3L209.3 226.3L207.8 230.4L207.5 231.5L206.8 234.4L205.9 238.5L205 242.5L204.4 246.5L204 250.6L203.9 253.9L203.9 254.6L204.1 258.7L204.6 262.7L205.3 266.8L206.2 270.8L207.1 274.8L208.1 278.9L208.3 279.4L209.5 282.9L211.5 287L213.7 291L215.7 295.1L217.2 299.1L217.7 302.7L217.7 303.1L216.4 307.2L213.9 311.2L211.1 315.3L210.1 317L208.7 319.3L206.4 323.4L204 327.4L201.6 331.4L199.5 335.5L198.1 338.7L197.7 339.5L196.2 343.6L194.8 347.6L193.5 351.7L192.5 355.7L183.5 356.2Z" fill="url(#bf)"/><path d="M193 133.3L197.4 137.4L201.5 141.4L205.2 145.5L208.1 148.9L208.6 149.5L211.8 153.6L214.8 157.6L217.4 161.6L218.9 164.6L219.4 165.7L221 169.7L222.5 173.8L222.8 174.7L223.5 176.9L223.7 177.8L224 179.1L224.5 181.3L224.6 181.9L224.9 183.6L225.1 185.8L225.1 185.9L224.9 188L224.7 189.9L224.7 190.2L224.3 192.5L224 194L223.8 194.7L223.3 196.9L223 198L222.8 198.7L222.7 199.1L221.9 201.4L221.6 202.1L220.9 203.6L219.6 206.1L217.5 210.2L215.9 213.3L215.5 214.2L213.4 218.2L211.2 222.3L209.3 226.3L207.8 230.4L207.5 231.5L206.8 234.4L205.9 238.5L205 242.5L204.4 246.5L204 250.6L203.9 253.9L203.9 254.6L204.1 258.7L204.6 262.7L205.3 266.8L206.2 270.8L207.1 274.8L208.1 278.9L208.3 279.4L209.5 282.9L211.5 287L213.7 291L215.7 295.1L217.2 299.1L217.7 302.7L217.7 303.1L216.4 307.2L213.9 311.2L211.1 315.3L210.1 317L208.7 319.3L206.4 323.4L204 327.4L201.6 331.4L199.5 335.5L198.1 338.7L197.7 339.5L196.2 343.6L194.8 347.6L193.5 351.7L192.5 355.7" fill="none" stroke="url(#bs)" stroke-width="1.42" stroke-opacity="0.99" stroke-linejoin="round"/><path d="M177 132.5L185 131L189.5 135.1L193.7 139.2L197.5 143.3L200.5 146.8L201 147.4L204.3 151.5L207.3 155.6L209.6 159.7L209.9 160.3L211.5 163.8L211.9 164.9L212.8 167.1L213.2 167.9L213.7 169.4L214.3 171.6L214.4 172L214.7 173.9L214.9 176.1L214.9 176.1L214.8 178.4L214.7 180.2L214.6 180.7L214.4 182.9L214.2 184.3L214.1 185.2L213.7 187.4L213.5 188.5L213.3 189.7L212.8 191.9L212.7 192.6L212.3 194.2L211.4 196.7L209.6 200.8L207.7 204.9L205.8 208.9L205.7 209L203.8 213.1L201.7 217.2L199.8 221.3L198.3 225.4L198.2 225.8L197.4 229.5L196.5 233.6L195.8 237.7L195.3 241.8L195.2 245L195.2 245.9L195.3 250L195.6 254.1L196 258.2L196.5 262.3L197.1 266.4L197.8 270.5L198.5 274.6L199.1 277.7L199.3 278.7L200.8 282.8L202.8 286.9L205.1 291L207.3 295.1L209.2 299.2L210.3 303.4L210.5 305.9L210.3 307.5L208.2 311.6L204.8 315.7L202 319.5L201.8 319.8L199.2 323.9L196.5 328L194 332.1L191.6 336.2L189.9 339.8L189.7 340.3L188.1 344.4L186.6 348.5L185.4 352.6L184.4 356.7L177 356Z" fill="#654433"/><path d="M185 131L189.5 135.1L193.7 139.2L197.5 143.3L200.5 146.8L201 147.4L204.3 151.5L207.3 155.6L209.6 159.7L209.9 160.3L211.5 163.8L211.9 164.9L212.8 167.1L213.2 167.9L213.7 169.4L214.3 171.6L214.4 172L214.7 173.9L214.9 176.1L214.9 176.1L214.8 178.4L214.7 180.2L214.6 180.7L214.4 182.9L214.2 184.3L214.1 185.2L213.7 187.4L213.5 188.5L213.3 189.7L212.8 191.9L212.7 192.6L212.3 194.2L211.4 196.7L209.6 200.8L207.7 204.9L205.8 208.9L205.7 209L203.8 213.1L201.7 217.2L199.8 221.3L198.3 225.4L198.2 225.8L197.4 229.5L196.5 233.6L195.8 237.7L195.3 241.8L195.2 245L195.2 245.9L195.3 250L195.6 254.1L196 258.2L196.5 262.3L197.1 266.4L197.8 270.5L198.5 274.6L199.1 277.7L199.3 278.7L200.8 282.8L202.8 286.9L205.1 291L207.3 295.1L209.2 299.2L210.3 303.4L210.5 305.9L210.3 307.5L208.2 311.6L204.8 315.7L202 319.5L201.8 319.8L199.2 323.9L196.5 328L194 332.1L191.6 336.2L189.9 339.8L189.7 340.3L188.1 344.4L186.6 348.5L185.4 352.6L184.4 356.7" fill="none" stroke="url(#bs)" stroke-width="1.45" stroke-opacity="1" stroke-linejoin="round"/><linearGradient id="bd" gradientUnits="userSpaceOnUse" x1="0" y1="274" x2="0" y2="292"><stop offset="0" stop-color="#2e170c" stop-opacity="0"/><stop offset="0.45" stop-color="#2e170c" stop-opacity="0.3"/><stop offset="1" stop-color="#2e170c" stop-opacity="0.2"/></linearGradient><path d="M208.14 278.89L215.06 275.06L221.76 275.27L228.08 277.31L235.16 277.57L242.02 277.82L248.71 276.03L255.16 276.21L261.42 276.38L267.5 276.55L273.41 276.71L279.15 276.87L284.73 277.03L290.15 277.18L295.43 277.32L300.57 277.46L305.57 277.6L310.37 277.74L314.96 277.87L319.45 277.99L323.83 278.12L328.1 278.24L332.28 278.36L336.36 278.48L340.4 275.58L344.27 275.72L348.07 275.85L351.78 275.99L355.41 276.12L358.69 277.14L362.59 276.38L367.51 276.5L372.07 276.62L376.13 276.74L379.96 276.85L383.68 276.96L387.29 277.08L390.8 277.18L394.22 277.29L397.55 277.39L400.8 277.5L403.97 277.6L403.97 277.6L404.54 280.17L405.03 282.75L405.43 285.33L405.71 287.9L405.87 290.48L405.9 292.02L405.87 293.05L405.51 295.63L404.86 298.21L404.01 300.78L403.06 303.36L403.06 303.36L401.69 305.94L399.68 308.51L397.36 311.09L395.06 313.67L393.1 316.24L392.36 317.53L391.71 318.82L390.49 321.39L389.38 323.97L388.4 326.55L387.6 329.12L387 331.7L387 331.7L384.13 332.05L381.21 332.41L378.23 332.78L375.19 333.16L372.08 333.54L368.91 333.93L365.67 334.33L362.37 334.74L358.99 335.16L355.54 335.58L352.01 336.02L348.41 336.46L344.72 336.92L340.95 337.38L337.1 337.86L333.15 338.34L329.11 338.84L324.98 339.35L320.75 339.88L316.41 340.41L311.96 340.96L307.41 341.52L302.74 342.1L297.95 342.69L293.03 343.3L287.98 343.92L282.81 344.56L277.49 345.21L272.02 345.89L266.4 346.58L260.63 347.29L254.69 348.03L248.58 348.78L242.29 349.56L235.81 350.36L229.13 351.18L222.25 352.03L215.15 352.91L207.83 353.81L200.27 354.74L192.47 355.7L192.47 355.7L193.51 351.66L194.76 347.62L196.17 343.58L197.74 339.53L198.06 338.73L199.51 335.49L201.63 331.45L203.96 327.4L206.37 323.36L208.75 319.32L210.07 316.95L211.07 315.28L213.88 311.23L216.43 307.19L217.68 303.15L217.7 302.72L217.21 299.11L215.74 295.06L213.69 291.02L211.46 286.98L209.48 282.93L208.26 279.36L208.14 278.89Z" fill="url(#bd)"/></svg>
<div style="left:136px;top:417.6px;width:302px;height:8.2px;background:#f0f0f0;"></div>
<span class="t" style="left:141.2px;top:419.53px;font-size:18.8px;color:#222;transform:scale(0.2342,0.25);">Perspective</span>
<svg style="left:0;top:0" width="438" height="438" viewBox="0 0 438 438"><g transform="translate(170,418.4)" opacity="1"><rect x="0.4" y="1" width="5.8" height="4.4" fill="#fff" stroke="#333" stroke-width="0.7"/><path d="M0.6 1.2L3.3 3.4L6 1.2" fill="none" stroke="#333" stroke-width="0.5"/></g><g transform="translate(178.5,418.4)" opacity="1"><rect x="0.6" y="2" width="4.6" height="3.4" fill="#dbeaf8" stroke="#2f7ac6" stroke-width="0.7"/><path d="M1.8 1H6.2V4.2" fill="none" stroke="#2f7ac6" stroke-width="0.7"/></g><g transform="translate(187.6,418.4)" opacity="1"><circle cx="2.6" cy="3" r="2" fill="#f8d26a" stroke="#d89a20" stroke-width="0.5"/><path d="M3.4 3.2L5.8 5.6M5.8 3.2L3.4 5.6" stroke="#d22" stroke-width="0.8"/></g><g transform="translate(195.5,418.4)" opacity="1"><circle cx="3.2" cy="2.6" r="1.9" fill="#eaf3fb" stroke="#2f7ac6" stroke-width="0.7"/><path d="M2 5.6H4.4" stroke="#2f7ac6" stroke-width="0.8"/></g><g transform="translate(205,418.4)" opacity="1"><path d="M0.6 2.4L3 1.2L5.6 2.4V4.4L3 5.6L0.6 4.4Z" fill="#eee" stroke="#888" stroke-width="0.5"/><path d="M3.4 3.6H6.2" stroke="#2f7ac6" stroke-width="0.9"/></g><g transform="translate(213.5,418.4)" opacity="1"><path d="M0.6 3.4H4.6" stroke="#2f7ac6" stroke-width="1.6"/><path d="M3.6 1.2L6 3.4L3.6 5.6" fill="none" stroke="#2f5f9a" stroke-width="0.7"/><circle cx="1.4" cy="1.8" r="0.8" fill="#d33"/></g><g transform="translate(222,418.4)" opacity="1"><path d="M0.6 4.8L2.4 1.6H5.8V4.8Z" fill="#cfe2f5" stroke="#2f7ac6" stroke-width="0.6"/><circle cx="4.6" cy="3.4" r="1" fill="#2f5f9a"/></g><g transform="translate(231,418.4)" opacity="1"><path d="M0.8 3L3.2 0.8L5.6 3V5.8H0.8Z" fill="#f4f4f4" stroke="#444" stroke-width="0.7"/><rect x="2.6" y="3.6" width="1.4" height="2.2" fill="#444"/></g><g transform="translate(240.1,418.4)" opacity="1"><path d="M0.4 3.2C1.6 1.4 4.8 1.4 6 3.2C4.8 5 1.6 5 0.4 3.2Z" fill="#f0f0f0" stroke="#777" stroke-width="0.5"/><circle cx="3.2" cy="3.2" r="0.9" fill="#555"/></g><g transform="translate(248.6,418.4)" opacity="1"><circle cx="3.2" cy="2.4" r="1.2" fill="#3a8ee0"/><path d="M3.2 3.4V5.6" stroke="#3a8ee0" stroke-width="0.6"/></g><g transform="translate(256.5,418.4)" opacity="1"><rect x="0.6" y="1.8" width="5.2" height="3.6" fill="#f0f0f0" stroke="#444" stroke-width="0.7"/><path d="M2 1.8V1H4.2V1.8" fill="none" stroke="#444" stroke-width="0.5"/><circle cx="4.6" cy="4.4" r="0.9" fill="#555"/></g><g transform="translate(265.6,418.4)" opacity="1"><rect x="0.6" y="1.8" width="5.2" height="3.6" fill="#f0f0f0" stroke="#444" stroke-width="0.7"/><path d="M2 1.8V1H4.2V1.8" fill="none" stroke="#444" stroke-width="0.5"/><circle cx="4.6" cy="4.2" r="1.1" fill="#c33"/><circle cx="2" cy="4.2" r="0.8" fill="#2f7ac6"/></g><g transform="translate(274.7,418.4)" opacity="1"><path d="M0.6 2.2L3.4 1L5.8 2V4.6L3 5.8L0.6 4.8Z" fill="#ddd" stroke="#444" stroke-width="0.6"/><path d="M0.6 2.2L3 3.2L5.8 2M3 3.2V5.8" fill="none" stroke="#444" stroke-width="0.4"/></g><g transform="translate(283.7,418.4)" opacity="0.8"><rect x="0.8" y="1" width="4.6" height="4.6" fill="#f4f4f4" stroke="#aaa" stroke-width="0.5" stroke-dasharray="0.9 0.6"/></g><path d="M295.8 420.2L294.4 421.6L295.8 423" fill="none" stroke="#222" stroke-width="0.7"/></svg>
<div style="left:0px;top:425.8px;width:438px;height:12.2px;background:#c9c9c9;"></div>
<span class="t" style="left:2.2px;top:429.6px;font-size:20px;color:#222;transform:scale(0.2283,0.25);">Ready</span>
<div style="left:371.6px;top:428.2px;width:66.4px;height:8px;background:#fff;box-shadow:inset 0 0 0 0.5px #b4b4b4;"></div>
<svg style="left:361.5px;top:428.4px" width="8" height="7" viewBox="0 0 8 7"><path d="M1 6V3.4L3.6 1.4L6.4 3.4V6M3.6 6V4.2" fill="none" stroke="#8a8a8a" stroke-width="0.7"/></svg>
</section>
<section id="dynamo" style="left:437.6px;top:0;width:362.4px;height:438px;overflow:hidden;background:#f8f8f8">
</section>
<div style="left:437.2px;top:0px;width:362.8px;height:438px;background:#f8f8f8;"></div>
<div style="left:437.2px;top:0px;width:362.8px;height:12.8px;background:#fff;"></div>
<div style="left:437.2px;top:0px;width:362.8px;height:0.8px;background:#b9b9b9;"></div>
<div style="left:798.6px;top:0px;width:1.4px;height:438px;background:#c4c4c4;"></div>
<span class="t" style="left:441.5px;top:1.72px;font-size:34.4px;color:#1c5aa0;font-weight:bold;transform:scale(0.2093,0.25);">R</span>
<span class="t" style="left:450px;top:4.69px;font-size:19.2px;color:#9a9a9a;transform:scale(0.2574,0.25);">Dynamo</span>
<div style="left:438px;top:12.8px;width:360.8px;height:10.2px;background:#353535;"></div>
<span class="t" style="left:443.9px;top:15.8px;font-size:20px;color:#b4b8c0;transform:scale(0.2327,0.25);">File</span>
<span class="t" style="left:464.7px;top:15.8px;font-size:20px;color:#b4b8c0;transform:scale(0.2292,0.25);">Edit</span>
<span class="t" style="left:486.5px;top:15.8px;font-size:20px;color:#b4b8c0;transform:scale(0.2582,0.25);">View</span>
<span class="t" style="left:510.5px;top:15.8px;font-size:20px;color:#b4b8c0;transform:scale(0.2448,0.25);">Packages</span>
<span class="t" style="left:544.8px;top:15.8px;font-size:20px;color:#b4b8c0;transform:scale(0.2601,0.25);">Settings</span>
<span class="t" style="left:575.7px;top:15.8px;font-size:20px;color:#b4b8c0;transform:scale(0.2614,0.25);">Generative Design</span>
<span class="t" style="left:631.6px;top:15.8px;font-size:20px;color:#b4b8c0;transform:scale(0.2626,0.25);">Help</span>
<span class="t" style="left:664px;top:15.8px;font-size:20px;color:#b4b8c0;transform:scale(0.2593,0.25);">monocle</span>
<span class="t" style="left:721.9px;top:15.8px;font-size:20px;color:#b4b8c0;transform:scale(0.2508,0.25);">Data Shapes</span>
<div style="left:438px;top:23px;width:360.8px;height:13.8px;background:#363636;"></div>
<div style="left:438px;top:22.8px;width:360.8px;height:0.4px;background:#2c2c2c;"></div>
<div style="left:438px;top:36.8px;width:360.8px;height:8px;background:#1f1f1f;"></div>
<div style="left:438px;top:37px;width:104.4px;height:7.8px;background:#383838;"></div>
<span class="t" style="left:442.6px;top:38.89px;font-size:19.2px;color:#f0f0f0;font-weight:bold;transform:scale(0.2528,0.25);">Family__Model_Vertical_Ruba_by_Mass</span>
<div style="left:438px;top:44.8px;width:360.8px;height:372px;background:#f8f8f8;"></div>
<svg id="wires" style="left:0;top:0" width="800" height="438" viewBox="0 0 800 438"><path d="M438 396.5H800" stroke="#8c8c8c" stroke-width="0.9"/><path d="M438 262.9H472.2M529.9 262.9H551.4M609 262.9H672.3" stroke="#4a4a4a" stroke-width="0.9"/><path d="M762 262.9H796.2" stroke="#777" stroke-width="1.1"/><path d="M608.9 310.5C654.55 310.5 626.65 270.8 672.3 270.8" fill="none" stroke="#3c3c3c" stroke-width="0.75"/><path d="M608.9 346.5C654.55 346.5 626.65 278.9 672.3 278.9" fill="none" stroke="#3c3c3c" stroke-width="0.75"/><path d="M608.9 367.7C654.55 367.7 626.65 286.9 672.3 286.9" fill="none" stroke="#3c3c3c" stroke-width="0.75"/><path d="M608.9 396.4C654.55 396.4 626.65 294.9 672.3 294.9" fill="none" stroke="#3c3c3c" stroke-width="0.75"/><path d="M526.8 396.4C540.12 396.4 531.98 396.4 545.3 396.4" fill="none" stroke="#3c3c3c" stroke-width="0.75"/><path d="M762 262.9C782.52 262.9 775.68 219.4 796.2 219.4" fill="none" stroke="#3c3c3c" stroke-width="0.75"/><path d="M762 262.9C778.56 262.9 773.04 310.5 789.6 310.5" fill="none" stroke="#3c3c3c" stroke-width="0.75"/></svg>
<svg id="dynamo-model" style="left:0;top:0" width="800" height="438" viewBox="0 0 800 438"><defs><clipPath id="gclip"><path d="M540.5 55.6L545.7 53L722 124.6C730 128 737.5 133 737.5 140C737.5 147 729.5 153 728 160C727 166 731 173 736 180C739 186 740.6 192 740.6 197C740.6 206 735 214 730.3 221L726.2 229.6L541.2 240.2Z"/></clipPath><linearGradient id="gs" x1="0" y1="0" x2="0" y2="1"><stop offset="0" stop-color="#8e8e8e"/><stop offset="0.18" stop-color="#959595"/><stop offset="0.3" stop-color="#858585"/><stop offset="0.45" stop-color="#a2a2a2"/><stop offset="0.62" stop-color="#8a8a8a"/><stop offset="0.8" stop-color="#989898"/><stop offset="1" stop-color="#a4a4a4"/></linearGradient></defs><g clip-path="url(#gclip)"><path d="M540.5 57L545.7 55.4L722 126.8C730 128 737.5 133 737.5 140C737.5 147 729.5 153 728 160C727 166 731 173 736 180C739 186 740.6 192 740.6 197C740.6 206 735 214 730.3 221L726.2 229.6L541.2 240.2Z" fill="#b3b3b3"/><path d="M716 124.6L722 125.2L725.2 127.1L727.9 129L729.7 130.4L730.2 130.9L732.1 132.8L732.7 133.5L733.5 134.6L733.6 134.7L734.2 135.6L734.7 136.6L734.8 136.7L735.3 137.7L735.8 138.4L735.9 138.7L735.5 139.8L735.3 140.3L735.2 140.8L734.8 141.9L734.7 142.2L734.5 142.9L734.1 143.9L734.1 144.1L733.7 145L733.3 146L733.3 146L732.8 147.1L732.8 147.1L732.3 147.9L730.6 149.8L728.7 151.7L727.1 153.6L726.3 155.4L726.3 155.5L726.1 157.4L726 159.3L726 161.2L726 161.6L726.3 163.1L727.1 164.9L728 166.8L728 166.8L729 168.7L730.3 170.6L731.7 172.5L733.2 174.4L734.7 176.3L736.1 178.2L737.4 180.1L738.4 182L738.6 182.5L739.1 183.9L739.9 185.8L740.6 187.7L741.3 189.6L741.9 191.4L742.5 193.3L743 195.2L743.3 197.1L743.6 199L743.6 200.2L743.6 200.9L743.3 202.8L742.8 204.7L742 206.6L741.2 208.5L741.2 208.5L739.9 210.4L738 212.3L735.8 214.2L733.6 216.1L731.7 217.9L731.1 218.9L730.5 219.8L729.3 221.7L728.3 223.6L727.4 225.5L726.7 227.4L726.2 229.3L720.2 229.8Z" fill="#b8b8b8"/><path d="M722 125.2L725.2 127.1L727.9 129L729.7 130.4L730.2 130.9L732.1 132.8L732.7 133.5L733.5 134.6L733.6 134.7L734.2 135.6L734.7 136.6L734.8 136.7L735.3 137.7L735.8 138.4L735.9 138.7L735.5 139.8L735.3 140.3L735.2 140.8L734.8 141.9L734.7 142.2L734.5 142.9L734.1 143.9L734.1 144.1L733.7 145L733.3 146L733.3 146L732.8 147.1L732.8 147.1L732.3 147.9L730.6 149.8L728.7 151.7L727.1 153.6L726.3 155.4L726.3 155.5L726.1 157.4L726 159.3L726 161.2L726 161.6L726.3 163.1L727.1 164.9L728 166.8L728 166.8L729 168.7L730.3 170.6L731.7 172.5L733.2 174.4L734.7 176.3L736.1 178.2L737.4 180.1L738.4 182L738.6 182.5L739.1 183.9L739.9 185.8L740.6 187.7L741.3 189.6L741.9 191.4L742.5 193.3L743 195.2L743.3 197.1L743.6 199L743.6 200.2L743.6 200.9L743.3 202.8L742.8 204.7L742 206.6L741.2 208.5L741.2 208.5L739.9 210.4L738 212.3L735.8 214.2L733.6 216.1L731.7 217.9L731.1 218.9L730.5 219.8L729.3 221.7L728.3 223.6L727.4 225.5L726.7 227.4L726.2 229.3" fill="none" stroke="url(#gs)" stroke-width="0.7" stroke-opacity="0.4"/><path d="M713.8 123.7L719.8 124.3L722.8 126.2L725.4 128.1L727.5 129.9L727.7 130.1L729.6 132L731.2 133.8L731.3 133.9L731.7 134.5L732 134.9L732.6 135.8L732.7 135.9L733.2 137L733.6 137.7L733.8 138L734.4 139.1L734.2 139.6L734 140.1L733.6 141.2L733.5 141.5L733.3 142.2L732.9 143.3L732.9 143.4L732.5 144.3L732.1 145.3L732.1 145.4L731.7 146.4L731.3 147.1L731.2 147.3L731.1 147.5L729.8 149.2L727.9 151.1L726.1 153L725 154.9L724.9 155.3L724.6 156.8L724.4 158.7L724.3 160.6L724.3 161.8L724.4 162.5L724.9 164.5L725.6 166.4L726.2 167.9L726.4 168.3L727.4 170.2L728.7 172.1L730.1 174L731.7 175.9L733.2 177.8L734.6 179.7L735.7 181.7L736.2 182.8L736.5 183.6L737.3 185.5L738 187.4L738.7 189.3L739.4 191.2L739.9 193.1L740.4 195L740.8 196.9L741 198.9L741.1 199.8L741.1 200.8L740.8 202.7L740.2 204.6L739.4 206.5L738.6 208.3L738.5 208.4L737.2 210.3L735.4 212.2L733.3 214.1L731.2 216.1L729.5 218L728.8 218.9L728.2 219.9L727.1 221.8L726.1 223.7L725.3 225.6L724.5 227.5L724 229.4L718 229.9Z" fill="#b8b8b8"/><path d="M719.8 124.3L722.8 126.2L725.4 128.1L727.5 129.9L727.7 130.1L729.6 132L731.2 133.8L731.3 133.9L731.7 134.5L732 134.9L732.6 135.8L732.7 135.9L733.2 137L733.6 137.7L733.8 138L734.4 139.1L734.2 139.6L734 140.1L733.6 141.2L733.5 141.5L733.3 142.2L732.9 143.3L732.9 143.4L732.5 144.3L732.1 145.3L732.1 145.4L731.7 146.4L731.3 147.1L731.2 147.3L731.1 147.5L729.8 149.2L727.9 151.1L726.1 153L725 154.9L724.9 155.3L724.6 156.8L724.4 158.7L724.3 160.6L724.3 161.8L724.4 162.5L724.9 164.5L725.6 166.4L726.2 167.9L726.4 168.3L727.4 170.2L728.7 172.1L730.1 174L731.7 175.9L733.2 177.8L734.6 179.7L735.7 181.7L736.2 182.8L736.5 183.6L737.3 185.5L738 187.4L738.7 189.3L739.4 191.2L739.9 193.1L740.4 195L740.8 196.9L741 198.9L741.1 199.8L741.1 200.8L740.8 202.7L740.2 204.6L739.4 206.5L738.6 208.3L738.5 208.4L737.2 210.3L735.4 212.2L733.3 214.1L731.2 216.1L729.5 218L728.8 218.9L728.2 219.9L727.1 221.8L726.1 223.7L725.3 225.6L724.5 227.5L724 229.4" fill="none" stroke="url(#gs)" stroke-width="0.71" stroke-opacity="0.4"/><path d="M711.6 122.8L717.6 123.4L720.4 125.4L723 127.3L725.2 129.2L725.4 129.4L727.2 131.2L728.9 133.1L729.7 134.2L729.9 134.4L730.3 135L730.4 135.2L731.1 136.3L731.5 136.9L731.7 137.3L732.3 138.4L732.6 138.9L732.9 139.5L732.5 140.5L732.4 140.8L732.1 141.6L731.7 142.6L731.7 142.7L731.3 143.7L731 144.7L730.9 144.8L730.5 145.8L730.1 146.6L730 146.9L729.8 147.2L729.3 148L728.9 148.5L727 150.4L725.1 152.4L723.7 154.3L723.4 155.1L723.2 156.2L722.9 158.2L722.7 160.1L722.7 161.9L722.7 162L722.9 164L723.4 165.9L724 167.8L724.4 169L724.6 169.7L725.7 171.7L727 173.6L728.5 175.5L730.1 177.5L731.6 179.4L732.9 181.3L733.9 183.3L733.9 183.3L734.6 185.2L735.4 187.1L736.1 189L736.8 191L737.4 192.9L737.8 194.8L738.2 196.8L738.4 198.7L738.5 199.5L738.5 200.6L738.1 202.5L737.5 204.5L736.7 206.4L736 208.1L735.8 208.3L734.6 210.3L732.8 212.2L730.8 214.1L728.9 216.1L727.2 218L726.5 219L726 219.9L724.9 221.8L723.9 223.8L723 225.7L722.3 227.6L721.8 229.6L715.8 230.1Z" fill="#b8b8b8"/><path d="M717.6 123.4L720.4 125.4L723 127.3L725.2 129.2L725.4 129.4L727.2 131.2L728.9 133.1L729.7 134.2L729.9 134.4L730.3 135L730.4 135.2L731.1 136.3L731.5 136.9L731.7 137.3L732.3 138.4L732.6 138.9L732.9 139.5L732.5 140.5L732.4 140.8L732.1 141.6L731.7 142.6L731.7 142.7L731.3 143.7L731 144.7L730.9 144.8L730.5 145.8L730.1 146.6L730 146.9L729.8 147.2L729.3 148L728.9 148.5L727 150.4L725.1 152.4L723.7 154.3L723.4 155.1L723.2 156.2L722.9 158.2L722.7 160.1L722.7 161.9L722.7 162L722.9 164L723.4 165.9L724 167.8L724.4 169L724.6 169.7L725.7 171.7L727 173.6L728.5 175.5L730.1 177.5L731.6 179.4L732.9 181.3L733.9 183.3L733.9 183.3L734.6 185.2L735.4 187.1L736.1 189L736.8 191L737.4 192.9L737.8 194.8L738.2 196.8L738.4 198.7L738.5 199.5L738.5 200.6L738.1 202.5L737.5 204.5L736.7 206.4L736 208.1L735.8 208.3L734.6 210.3L732.8 212.2L730.8 214.1L728.9 216.1L727.2 218L726.5 219L726 219.9L724.9 221.8L723.9 223.8L723 225.7L722.3 227.6L721.8 229.6" fill="none" stroke="url(#gs)" stroke-width="0.71" stroke-opacity="0.4"/><path d="M709.4 121.9L715.4 122.5L718 124.5L720.5 126.4L722.7 128.4L723.2 128.9L724.6 130.3L726.4 132.3L727.9 134.2L728.1 134.4L728.1 134.5L728.8 135.6L729.2 136.2L729.5 136.7L730.1 137.7L730.3 138.1L730.7 138.8L731.4 139.9L731.3 140.1L730.9 140.9L730.5 142L730.5 142L730.1 143.1L729.8 144L729.7 144.2L729.2 145.2L729 145.9L728.8 146.3L728.2 147.3L728.2 147.4L727.9 147.9L727.5 148.4L726.2 149.8L724.2 151.8L722.6 153.7L721.9 155L721.8 155.7L721.3 157.6L721 159.6L720.9 161.5L720.9 162L721 163.4L721.3 165.4L721.8 167.3L722.3 169.3L722.5 170.1L722.9 171.2L723.9 173.2L725.3 175.1L726.9 177.1L728.5 179L730 181L731.1 182.9L731.5 183.7L731.9 184.9L732.7 186.8L733.4 188.8L734.1 190.7L734.7 192.7L735.2 194.6L735.6 196.6L735.8 198.5L735.9 199.2L735.8 200.5L735.4 202.4L734.8 204.4L734 206.3L733.3 207.9L733.1 208.3L731.8 210.2L730.2 212.2L728.3 214.1L726.4 216.1L724.8 218L724.2 219L723.7 220L722.6 221.9L721.6 223.9L720.8 225.8L720.1 227.8L719.5 229.7L713.5 230.2Z" fill="#b8b8b8"/><path d="M715.4 122.5L718 124.5L720.5 126.4L722.7 128.4L723.2 128.9L724.6 130.3L726.4 132.3L727.9 134.2L728.1 134.4L728.1 134.5L728.8 135.6L729.2 136.2L729.5 136.7L730.1 137.7L730.3 138.1L730.7 138.8L731.4 139.9L731.3 140.1L730.9 140.9L730.5 142L730.5 142L730.1 143.1L729.8 144L729.7 144.2L729.2 145.2L729 145.9L728.8 146.3L728.2 147.3L728.2 147.4L727.9 147.9L727.5 148.4L726.2 149.8L724.2 151.8L722.6 153.7L721.9 155L721.8 155.7L721.3 157.6L721 159.6L720.9 161.5L720.9 162L721 163.4L721.3 165.4L721.8 167.3L722.3 169.3L722.5 170.1L722.9 171.2L723.9 173.2L725.3 175.1L726.9 177.1L728.5 179L730 181L731.1 182.9L731.5 183.7L731.9 184.9L732.7 186.8L733.4 188.8L734.1 190.7L734.7 192.7L735.2 194.6L735.6 196.6L735.8 198.5L735.9 199.2L735.8 200.5L735.4 202.4L734.8 204.4L734 206.3L733.3 207.9L733.1 208.3L731.8 210.2L730.2 212.2L728.3 214.1L726.4 216.1L724.8 218L724.2 219L723.7 220L722.6 221.9L721.6 223.9L720.8 225.8L720.1 227.8L719.5 229.7" fill="none" stroke="url(#gs)" stroke-width="0.72" stroke-opacity="0.4"/><path d="M707.1 121L713.1 121.6L715.6 123.6L718 125.5L720.1 127.5L721 128.4L722 129.5L723.8 131.4L725.5 133.4L726.2 134.3L726.5 134.9L726.9 135.4L727.2 136L727.9 137.1L728 137.4L728.5 138.1L729.1 139.2L729.2 139.3L729.8 140.3L729.3 141.3L729.3 141.4L728.9 142.5L728.6 143.3L728.4 143.6L728 144.6L727.8 145.2L727.5 145.7L727 146.8L726.8 147.2L726.7 147.5L726.4 147.9L725.5 149L725.4 149.2L723.4 151.1L721.5 153.1L720.4 154.9L720.4 155.1L719.8 157L719.4 159L719.2 161L719.2 162.2L719.2 162.9L719.4 164.9L719.7 166.9L720 168.8L720.5 170.8L720.6 171.3L721.1 172.8L722.2 174.7L723.7 176.7L725.3 178.7L726.9 180.6L728.3 182.6L729 184.1L729.2 184.6L730 186.5L730.7 188.5L731.4 190.5L732.1 192.5L732.6 194.4L733 196.4L733.2 198.4L733.2 198.9L733.1 200.3L732.7 202.3L732 204.3L731.2 206.2L730.6 207.6L730.3 208.2L729.1 210.2L727.5 212.1L725.7 214.1L724 216.1L722.5 218L721.9 219L721.3 220L720.3 222L719.4 223.9L718.5 225.9L717.8 227.9L717.2 229.8L711.2 230.3Z" fill="#b8b8b8"/><path d="M713.1 121.6L715.6 123.6L718 125.5L720.1 127.5L721 128.4L722 129.5L723.8 131.4L725.5 133.4L726.2 134.3L726.5 134.9L726.9 135.4L727.2 136L727.9 137.1L728 137.4L728.5 138.1L729.1 139.2L729.2 139.3L729.8 140.3L729.3 141.3L729.3 141.4L728.9 142.5L728.6 143.3L728.4 143.6L728 144.6L727.8 145.2L727.5 145.7L727 146.8L726.8 147.2L726.7 147.5L726.4 147.9L725.5 149L725.4 149.2L723.4 151.1L721.5 153.1L720.4 154.9L720.4 155.1L719.8 157L719.4 159L719.2 161L719.2 162.2L719.2 162.9L719.4 164.9L719.7 166.9L720 168.8L720.5 170.8L720.6 171.3L721.1 172.8L722.2 174.7L723.7 176.7L725.3 178.7L726.9 180.6L728.3 182.6L729 184.1L729.2 184.6L730 186.5L730.7 188.5L731.4 190.5L732.1 192.5L732.6 194.4L733 196.4L733.2 198.4L733.2 198.9L733.1 200.3L732.7 202.3L732 204.3L731.2 206.2L730.6 207.6L730.3 208.2L729.1 210.2L727.5 212.1L725.7 214.1L724 216.1L722.5 218L721.9 219L721.3 220L720.3 222L719.4 223.9L718.5 225.9L717.8 227.9L717.2 229.8" fill="none" stroke="url(#gs)" stroke-width="0.73" stroke-opacity="0.41"/><path d="M704.8 120.1L710.8 120.7L713.2 122.7L715.4 124.7L717.5 126.6L718.7 127.9L719.4 128.6L721.3 130.6L722.9 132.6L724.2 134.3L724.4 134.6L724.9 135.3L725.6 136.4L725.7 136.6L726.2 137.5L726.8 138.6L726.9 138.6L727.5 139.7L728.1 140.5L728.2 140.8L727.7 141.9L727.4 142.5L727.2 143L726.8 144.1L726.6 144.5L726.3 145.2L725.8 146.2L725.7 146.5L725.2 147.3L725.1 147.6L724.5 148.4L724.4 148.5L723.5 149.5L722.5 150.5L720.5 152.5L719 154.5L718.9 154.8L718.4 156.4L717.8 158.4L717.5 160.4L717.4 162.4L717.4 162.4L717.5 164.4L717.7 166.4L718 168.4L718.3 170.4L718.6 172.3L718.6 172.5L719.2 174.3L720.5 176.3L722 178.3L723.7 180.3L725.2 182.3L726.4 184.3L726.5 184.6L727.2 186.3L728 188.2L728.7 190.2L729.3 192.2L729.9 194.2L730.3 196.2L730.5 198.2L730.5 198.5L730.4 200.2L729.9 202.2L729.2 204.1L728.4 206.1L727.8 207.4L727.5 208.1L726.3 210.1L724.8 212.1L723.1 214.1L721.5 216.1L720.1 218.1L719.5 219L719 220L717.9 222L717 224L716.2 226L715.4 228L714.8 230L708.8 230.5Z" fill="#b8b8b8"/><path d="M710.8 120.7L713.2 122.7L715.4 124.7L717.5 126.6L718.7 127.9L719.4 128.6L721.3 130.6L722.9 132.6L724.2 134.3L724.4 134.6L724.9 135.3L725.6 136.4L725.7 136.6L726.2 137.5L726.8 138.6L726.9 138.6L727.5 139.7L728.1 140.5L728.2 140.8L727.7 141.9L727.4 142.5L727.2 143L726.8 144.1L726.6 144.5L726.3 145.2L725.8 146.2L725.7 146.5L725.2 147.3L725.1 147.6L724.5 148.4L724.4 148.5L723.5 149.5L722.5 150.5L720.5 152.5L719 154.5L718.9 154.8L718.4 156.4L717.8 158.4L717.5 160.4L717.4 162.4L717.4 162.4L717.5 164.4L717.7 166.4L718 168.4L718.3 170.4L718.6 172.3L718.6 172.5L719.2 174.3L720.5 176.3L722 178.3L723.7 180.3L725.2 182.3L726.4 184.3L726.5 184.6L727.2 186.3L728 188.2L728.7 190.2L729.3 192.2L729.9 194.2L730.3 196.2L730.5 198.2L730.5 198.5L730.4 200.2L729.9 202.2L729.2 204.1L728.4 206.1L727.8 207.4L727.5 208.1L726.3 210.1L724.8 212.1L723.1 214.1L721.5 216.1L720.1 218.1L719.5 219L719 220L717.9 222L717 224L716.2 226L715.4 228L714.8 230" fill="none" stroke="url(#gs)" stroke-width="0.73" stroke-opacity="0.41"/><path d="M702.5 119.1L708.5 119.7L710.7 121.7L712.8 123.7L714.9 125.7L716.4 127.4L716.8 127.8L718.6 129.8L720.3 131.8L721.9 133.8L722.3 134.3L723.2 135.8L723.3 135.8L723.9 136.9L724.5 137.8L724.6 138L725.2 139.1L725.6 139.8L725.9 140.2L726.5 141.3L726.3 141.8L726 142.4L725.5 143.5L725.4 143.8L725 144.6L724.5 145.7L724.5 145.8L724 146.8L723.4 147.8L723.4 147.8L723.4 147.9L722.5 149L721.7 149.8L721.4 150.1L719.5 151.8L717.8 153.8L717.3 154.7L716.9 155.9L716.3 157.9L715.8 159.9L715.6 161.9L715.6 162.6L715.7 163.9L715.8 165.9L716 167.9L716.2 169.9L716.4 171.9L716.6 173.8L716.7 173.9L717.4 175.9L718.7 177.9L720.4 179.9L722 181.9L723.4 184L724 185.1L724.3 186L725.1 188L725.9 190L726.6 192L727.1 194L727.5 196L727.7 198L727.7 198.2L727.6 200L727.1 202L726.4 204L725.5 206L725 207.2L724.6 208L723.5 210L722 212.1L720.5 214.1L719 216.1L717.6 218.1L717.1 219.1L716.5 220.1L715.6 222.1L714.6 224.1L713.8 226.1L713.1 228.1L712.4 230.1L706.4 230.6Z" fill="#b8b8b8"/><path d="M708.5 119.7L710.7 121.7L712.8 123.7L714.9 125.7L716.4 127.4L716.8 127.8L718.6 129.8L720.3 131.8L721.9 133.8L722.3 134.3L723.2 135.8L723.3 135.8L723.9 136.9L724.5 137.8L724.6 138L725.2 139.1L725.6 139.8L725.9 140.2L726.5 141.3L726.3 141.8L726 142.4L725.5 143.5L725.4 143.8L725 144.6L724.5 145.7L724.5 145.8L724 146.8L723.4 147.8L723.4 147.8L723.4 147.9L722.5 149L721.7 149.8L721.4 150.1L719.5 151.8L717.8 153.8L717.3 154.7L716.9 155.9L716.3 157.9L715.8 159.9L715.6 161.9L715.6 162.6L715.7 163.9L715.8 165.9L716 167.9L716.2 169.9L716.4 171.9L716.6 173.8L716.7 173.9L717.4 175.9L718.7 177.9L720.4 179.9L722 181.9L723.4 184L724 185.1L724.3 186L725.1 188L725.9 190L726.6 192L727.1 194L727.5 196L727.7 198L727.7 198.2L727.6 200L727.1 202L726.4 204L725.5 206L725 207.2L724.6 208L723.5 210L722 212.1L720.5 214.1L719 216.1L717.6 218.1L717.1 219.1L716.5 220.1L715.6 222.1L714.6 224.1L713.8 226.1L713.1 228.1L712.4 230.1" fill="none" stroke="url(#gs)" stroke-width="0.74" stroke-opacity="0.41"/><path d="M700.1 118.2L706.1 118.8L708.2 120.8L710.3 122.8L712.2 124.8L714.1 126.9L714.1 126.9L715.9 128.9L717.7 130.9L719.3 133L720.3 134.3L720.7 135L721.6 136.2L722 137L722.2 137.4L722.9 138.5L723.2 139L723.5 139.6L724.2 140.7L724.4 141.1L724.9 141.8L724.3 142.9L724.2 143.1L723.8 144L723.3 145.1L723.3 145.2L722.7 146.3L722.3 147.1L722.1 147.4L721.8 148L721.4 148.5L720.8 149.2L720.4 149.6L719.2 150.7L718.7 151.2L716.6 153.2L715.8 154.6L715.5 155.3L714.8 157.3L714.2 159.3L713.8 161.3L713.8 162.8L713.8 163.4L713.9 165.4L714 167.4L714.1 169.4L714.3 171.5L714.5 173.5L714.6 175.2L714.7 175.5L715.5 177.6L717 179.6L718.7 181.6L720.3 183.6L721.4 185.6L721.4 185.7L722.2 187.7L723 189.7L723.7 191.7L724.3 193.8L724.7 195.8L724.9 197.8L724.9 197.8L724.8 199.9L724.2 201.9L723.5 203.9L722.6 205.9L722.2 207L721.7 208L720.6 210L719.2 212L717.8 214L716.4 216.1L715.1 218.1L714.6 219.1L714.1 220.1L713.1 222.2L712.2 224.2L711.4 226.2L710.7 228.2L710 230.3L704 230.8Z" fill="#b8b8b8"/><path d="M706.1 118.8L708.2 120.8L710.3 122.8L712.2 124.8L714.1 126.9L714.1 126.9L715.9 128.9L717.7 130.9L719.3 133L720.3 134.3L720.7 135L721.6 136.2L722 137L722.2 137.4L722.9 138.5L723.2 139L723.5 139.6L724.2 140.7L724.4 141.1L724.9 141.8L724.3 142.9L724.2 143.1L723.8 144L723.3 145.1L723.3 145.2L722.7 146.3L722.3 147.1L722.1 147.4L721.8 148L721.4 148.5L720.8 149.2L720.4 149.6L719.2 150.7L718.7 151.2L716.6 153.2L715.8 154.6L715.5 155.3L714.8 157.3L714.2 159.3L713.8 161.3L713.8 162.8L713.8 163.4L713.9 165.4L714 167.4L714.1 169.4L714.3 171.5L714.5 173.5L714.6 175.2L714.7 175.5L715.5 177.6L717 179.6L718.7 181.6L720.3 183.6L721.4 185.6L721.4 185.7L722.2 187.7L723 189.7L723.7 191.7L724.3 193.8L724.7 195.8L724.9 197.8L724.9 197.8L724.8 199.9L724.2 201.9L723.5 203.9L722.6 205.9L722.2 207L721.7 208L720.6 210L719.2 212L717.8 214L716.4 216.1L715.1 218.1L714.6 219.1L714.1 220.1L713.1 222.2L712.2 224.2L711.4 226.2L710.7 228.2L710 230.3" fill="none" stroke="url(#gs)" stroke-width="0.75" stroke-opacity="0.41"/><path d="M697.7 117.2L703.7 117.8L705.7 119.8L707.6 121.9L709.5 123.9L711.4 126L711.7 126.3L713.2 128L714.9 130.1L716.6 132.1L718.1 134.2L718.3 134.4L719.5 136.2L719.8 136.8L720.5 137.9L720.7 138.3L721.2 139L721.8 140.1L721.9 140.3L722.5 141.3L723.2 142.4L723.2 142.4L722.6 143.5L722.1 144.4L722 144.6L721.5 145.8L721.1 146.5L720.9 146.9L720.2 148L720.1 148.2L719.9 148.5L719.3 149.1L718.2 150.3L717.8 150.5L716.9 151.4L715.6 152.6L714.1 154.5L714.1 154.6L713.3 156.7L712.5 158.7L712.1 160.8L711.9 162.8L711.9 163.1L712 164.9L712.1 166.9L712.2 169L712.3 171L712.4 173.1L712.5 175.1L712.6 176.6L712.7 177.2L713.6 179.2L715.2 181.3L716.9 183.3L718.4 185.4L718.8 186.2L719.3 187.4L720.1 189.5L720.9 191.5L721.5 193.6L721.9 195.6L722.1 197.4L722.1 197.6L721.9 199.7L721.3 201.7L720.5 203.8L719.6 205.8L719.3 206.7L718.8 207.9L717.7 209.9L716.4 212L715.1 214L713.8 216.1L712.6 218.1L712.1 219.2L711.6 220.2L710.7 222.2L709.8 224.3L709 226.3L708.2 228.4L707.5 230.4L701.5 230.9Z" fill="#b8b8b8"/><path d="M703.7 117.8L705.7 119.8L707.6 121.9L709.5 123.9L711.4 126L711.7 126.3L713.2 128L714.9 130.1L716.6 132.1L718.1 134.2L718.3 134.4L719.5 136.2L719.8 136.8L720.5 137.9L720.7 138.3L721.2 139L721.8 140.1L721.9 140.3L722.5 141.3L723.2 142.4L723.2 142.4L722.6 143.5L722.1 144.4L722 144.6L721.5 145.8L721.1 146.5L720.9 146.9L720.2 148L720.1 148.2L719.9 148.5L719.3 149.1L718.2 150.3L717.8 150.5L716.9 151.4L715.6 152.6L714.1 154.5L714.1 154.6L713.3 156.7L712.5 158.7L712.1 160.8L711.9 162.8L711.9 163.1L712 164.9L712.1 166.9L712.2 169L712.3 171L712.4 173.1L712.5 175.1L712.6 176.6L712.7 177.2L713.6 179.2L715.2 181.3L716.9 183.3L718.4 185.4L718.8 186.2L719.3 187.4L720.1 189.5L720.9 191.5L721.5 193.6L721.9 195.6L722.1 197.4L722.1 197.6L721.9 199.7L721.3 201.7L720.5 203.8L719.6 205.8L719.3 206.7L718.8 207.9L717.7 209.9L716.4 212L715.1 214L713.8 216.1L712.6 218.1L712.1 219.2L711.6 220.2L710.7 222.2L709.8 224.3L709 226.3L708.2 228.4L707.5 230.4" fill="none" stroke="url(#gs)" stroke-width="0.76" stroke-opacity="0.41"/><path d="M695.2 116.2L701.2 116.8L703.1 118.9L705 120.9L706.8 123L708.6 125.1L709.3 125.8L710.4 127.1L712.2 129.2L713.9 131.3L715.5 133.3L716.2 134.4L716.9 135.4L718.1 137.3L718.2 137.5L718.8 138.4L719.4 139.5L719.4 139.6L720.1 140.7L720.6 141.6L720.8 141.9L721.5 143L721.1 143.7L720.8 144.1L720.2 145.3L720 145.7L719.6 146.4L719 147.5L718.8 147.8L718.4 148.4L718.2 148.7L717.1 149.8L717 149.9L715.8 151L714.7 152L714.5 152.1L712.8 154L712.5 154.5L711.8 156.1L711 158.2L710.3 160.2L710 162.3L710 163.3L710 164.4L710.1 166.4L710.2 168.5L710.3 170.6L710.3 172.6L710.4 174.7L710.5 176.8L710.5 178.1L710.6 178.8L711.7 180.9L713.4 183L715.1 185.1L716.1 186.7L716.3 187.1L717.1 189.2L717.9 191.3L718.6 193.3L719 195.4L719.2 197L719.2 197.5L718.9 199.5L718.3 201.6L717.5 203.7L716.6 205.7L716.3 206.5L715.8 207.8L714.7 209.9L713.6 211.9L712.3 214L711.1 216.1L710 218.2L709.5 219.2L709.1 220.2L708.2 222.3L707.3 224.4L706.5 226.4L705.7 228.5L705 230.6L699 231.1Z" fill="#b8b8b8"/><path d="M701.2 116.8L703.1 118.9L705 120.9L706.8 123L708.6 125.1L709.3 125.8L710.4 127.1L712.2 129.2L713.9 131.3L715.5 133.3L716.2 134.4L716.9 135.4L718.1 137.3L718.2 137.5L718.8 138.4L719.4 139.5L719.4 139.6L720.1 140.7L720.6 141.6L720.8 141.9L721.5 143L721.1 143.7L720.8 144.1L720.2 145.3L720 145.7L719.6 146.4L719 147.5L718.8 147.8L718.4 148.4L718.2 148.7L717.1 149.8L717 149.9L715.8 151L714.7 152L714.5 152.1L712.8 154L712.5 154.5L711.8 156.1L711 158.2L710.3 160.2L710 162.3L710 163.3L710 164.4L710.1 166.4L710.2 168.5L710.3 170.6L710.3 172.6L710.4 174.7L710.5 176.8L710.5 178.1L710.6 178.8L711.7 180.9L713.4 183L715.1 185.1L716.1 186.7L716.3 187.1L717.1 189.2L717.9 191.3L718.6 193.3L719 195.4L719.2 197L719.2 197.5L718.9 199.5L718.3 201.6L717.5 203.7L716.6 205.7L716.3 206.5L715.8 207.8L714.7 209.9L713.6 211.9L712.3 214L711.1 216.1L710 218.2L709.5 219.2L709.1 220.2L708.2 222.3L707.3 224.4L706.5 226.4L705.7 228.5L705 230.6" fill="none" stroke="url(#gs)" stroke-width="0.76" stroke-opacity="0.41"/><path d="M692.7 115.2L698.7 115.8L700.5 117.9L702.3 119.9L704.1 122L705.9 124.1L706.8 125.3L707.6 126.2L709.3 128.3L711.1 130.4L712.7 132.5L714.1 134.5L714.2 134.6L715.6 136.7L716.3 137.9L716.8 138.8L717 139L717.7 140.2L718 140.8L718.3 141.3L719 142.5L719.3 142.9L719.7 143.6L719 144.8L718.9 145L718.4 145.9L717.7 147.1L717.7 147.1L716.9 148.2L716.6 148.7L716.2 149.2L716 149.4L714.8 150.5L713.8 151.3L713.4 151.7L712.1 152.8L711.6 153.4L710.8 154.4L710.3 155.5L709.4 157.6L708.7 159.7L708.2 161.7L708.1 163.6L708.1 163.8L708.1 165.9L708.1 168L708.2 170.1L708.2 172.2L708.2 174.3L708.3 176.4L708.4 178.5L708.4 179.6L708.6 180.6L709.8 182.6L711.6 184.7L713.2 186.8L713.4 187.4L714.1 188.9L714.9 191L715.6 193.1L716.1 195.2L716.2 196.6L716.2 197.3L715.9 199.4L715.3 201.5L714.4 203.5L713.6 205.6L713.4 206.2L712.7 207.7L711.8 209.8L710.7 211.9L709.5 214L708.4 216.1L707.4 218.2L706.9 219.2L706.5 220.3L705.6 222.4L704.8 224.4L703.9 226.5L703.2 228.6L702.4 230.7L696.4 231.2Z" fill="#b8b8b8"/><path d="M698.7 115.8L700.5 117.9L702.3 119.9L704.1 122L705.9 124.1L706.8 125.3L707.6 126.2L709.3 128.3L711.1 130.4L712.7 132.5L714.1 134.5L714.2 134.6L715.6 136.7L716.3 137.9L716.8 138.8L717 139L717.7 140.2L718 140.8L718.3 141.3L719 142.5L719.3 142.9L719.7 143.6L719 144.8L718.9 145L718.4 145.9L717.7 147.1L717.7 147.1L716.9 148.2L716.6 148.7L716.2 149.2L716 149.4L714.8 150.5L713.8 151.3L713.4 151.7L712.1 152.8L711.6 153.4L710.8 154.4L710.3 155.5L709.4 157.6L708.7 159.7L708.2 161.7L708.1 163.6L708.1 163.8L708.1 165.9L708.1 168L708.2 170.1L708.2 172.2L708.2 174.3L708.3 176.4L708.4 178.5L708.4 179.6L708.6 180.6L709.8 182.6L711.6 184.7L713.2 186.8L713.4 187.4L714.1 188.9L714.9 191L715.6 193.1L716.1 195.2L716.2 196.6L716.2 197.3L715.9 199.4L715.3 201.5L714.4 203.5L713.6 205.6L713.4 206.2L712.7 207.7L711.8 209.8L710.7 211.9L709.5 214L708.4 216.1L707.4 218.2L706.9 219.2L706.5 220.3L705.6 222.4L704.8 224.4L703.9 226.5L703.2 228.6L702.4 230.7" fill="none" stroke="url(#gs)" stroke-width="0.77" stroke-opacity="0.41"/><path d="M690.1 114.1L696.1 114.7L697.9 116.8L699.6 119L701.3 121.1L703 123.2L704.3 124.8L704.7 125.3L706.5 127.4L708.2 129.5L709.9 131.6L711.4 133.7L712 134.6L712.9 135.9L714.2 138L714.5 138.5L715.2 139.7L715.4 140.1L715.9 140.8L716.5 142L716.6 142.2L717.2 143.2L717.9 144.3L717.9 144.3L717.2 145.5L716.6 146.4L716.4 146.6L715.7 147.8L715.2 148.5L714.9 148.9L714.8 149L713.7 150.1L713.1 150.6L712.3 151.3L710.9 152.4L710.5 152.7L709.7 153.6L709.1 154.4L708.9 154.9L707.9 157L707 159.1L706.4 161.2L706.1 163.3L706.1 163.9L706.1 165.4L706.1 167.5L706.1 169.6L706.1 171.7L706.1 173.9L706.1 176L706.1 178.1L706.2 180.2L706.2 181.2L706.5 182.3L708 184.4L709.8 186.5L710.7 188L711 188.6L711.9 190.8L712.6 192.9L713.1 195L713.2 196.2L713.2 197.1L712.9 199.2L712.2 201.3L711.3 203.4L710.5 205.5L710.3 205.9L709.7 207.6L708.7 209.8L707.7 211.9L706.7 214L705.7 216.1L704.7 218.2L704.3 219.3L703.9 220.3L703 222.4L702.2 224.5L701.4 226.6L700.6 228.8L699.8 230.9L693.8 231.4Z" fill="#b8b8b8"/><path d="M696.1 114.7L697.9 116.8L699.6 119L701.3 121.1L703 123.2L704.3 124.8L704.7 125.3L706.5 127.4L708.2 129.5L709.9 131.6L711.4 133.7L712 134.6L712.9 135.9L714.2 138L714.5 138.5L715.2 139.7L715.4 140.1L715.9 140.8L716.5 142L716.6 142.2L717.2 143.2L717.9 144.3L717.9 144.3L717.2 145.5L716.6 146.4L716.4 146.6L715.7 147.8L715.2 148.5L714.9 148.9L714.8 149L713.7 150.1L713.1 150.6L712.3 151.3L710.9 152.4L710.5 152.7L709.7 153.6L709.1 154.4L708.9 154.9L707.9 157L707 159.1L706.4 161.2L706.1 163.3L706.1 163.9L706.1 165.4L706.1 167.5L706.1 169.6L706.1 171.7L706.1 173.9L706.1 176L706.1 178.1L706.2 180.2L706.2 181.2L706.5 182.3L708 184.4L709.8 186.5L710.7 188L711 188.6L711.9 190.8L712.6 192.9L713.1 195L713.2 196.2L713.2 197.1L712.9 199.2L712.2 201.3L711.3 203.4L710.5 205.5L710.3 205.9L709.7 207.6L708.7 209.8L707.7 211.9L706.7 214L705.7 216.1L704.7 218.2L704.3 219.3L703.9 220.3L703 222.4L702.2 224.5L701.4 226.6L700.6 228.8L699.8 230.9" fill="none" stroke="url(#gs)" stroke-width="0.78" stroke-opacity="0.41"/><path d="M687.5 113.1L693.5 113.7L695.2 115.8L696.9 118L698.5 120.1L700.2 122.2L701.8 124.3L701.9 124.4L703.5 126.5L705.3 128.6L707 130.8L708.6 132.9L709.9 134.7L710.1 135L711.5 137.2L712.7 139.2L712.7 139.3L713.4 140.4L714 141.4L714 141.5L714.7 142.7L715.2 143.6L715.4 143.9L716.1 145L715.7 145.7L715.3 146.2L714.5 147.4L714.2 147.8L713.6 148.6L713.1 149.2L712.6 149.7L712.3 150L711.2 150.9L709.7 152.1L709.7 152.1L708.3 153.3L707.5 154.2L707.4 154.3L707.4 154.4L706.4 156.4L705.4 158.5L704.7 160.6L704.2 162.8L704.1 164.2L704.1 164.9L704 167L704 169.2L703.9 171.3L703.9 173.4L703.9 175.6L703.9 177.7L704 179.8L704 182L704 182.9L704.4 184.1L706.1 186.2L707.7 188.4L707.9 188.6L708.7 190.5L709.5 192.6L710.1 194.8L710.2 195.8L710.2 196.9L709.7 199L709 201.2L708.1 203.3L707.3 205.4L707.2 205.7L706.5 207.6L705.7 209.7L704.8 211.8L703.8 214L702.9 216.1L702 218.2L701.6 219.3L701.2 220.4L700.4 222.5L699.6 224.6L698.8 226.8L698 228.9L697.2 231L691.2 231.5Z" fill="#b8b8b8"/><path d="M693.5 113.7L695.2 115.8L696.9 118L698.5 120.1L700.2 122.2L701.8 124.3L701.9 124.4L703.5 126.5L705.3 128.6L707 130.8L708.6 132.9L709.9 134.7L710.1 135L711.5 137.2L712.7 139.2L712.7 139.3L713.4 140.4L714 141.4L714 141.5L714.7 142.7L715.2 143.6L715.4 143.9L716.1 145L715.7 145.7L715.3 146.2L714.5 147.4L714.2 147.8L713.6 148.6L713.1 149.2L712.6 149.7L712.3 150L711.2 150.9L709.7 152.1L709.7 152.1L708.3 153.3L707.5 154.2L707.4 154.3L707.4 154.4L706.4 156.4L705.4 158.5L704.7 160.6L704.2 162.8L704.1 164.2L704.1 164.9L704 167L704 169.2L703.9 171.3L703.9 173.4L703.9 175.6L703.9 177.7L704 179.8L704 182L704 182.9L704.4 184.1L706.1 186.2L707.7 188.4L707.9 188.6L708.7 190.5L709.5 192.6L710.1 194.8L710.2 195.8L710.2 196.9L709.7 199L709 201.2L708.1 203.3L707.3 205.4L707.2 205.7L706.5 207.6L705.7 209.7L704.8 211.8L703.8 214L702.9 216.1L702 218.2L701.6 219.3L701.2 220.4L700.4 222.5L699.6 224.6L698.8 226.8L698 228.9L697.2 231" fill="none" stroke="url(#gs)" stroke-width="0.79" stroke-opacity="0.42"/><path d="M684.9 112L690.9 112.6L692.5 114.8L694.1 116.9L695.7 119.1L697.3 121.2L698.9 123.4L699.2 123.8L700.6 125.6L702.3 127.7L704 129.9L705.7 132L707.2 134.2L707.7 134.8L708.7 136.3L710 138.5L710.8 139.9L711.2 140.6L711.5 141.1L712.2 142.3L712.5 142.8L712.9 143.4L713.6 144.6L713.8 145L714.3 145.8L713.3 147L713.2 147.1L712.4 148.2L711.5 149.3L711.4 149.4L711.2 149.5L710.1 150.6L708.9 151.4L708.5 151.7L706.9 152.9L706.2 153.6L705.8 154.1L705.7 154.3L705.1 155.3L704.9 155.7L703.8 157.9L703 160L702.4 162.2L702.1 164.4L702.1 164.6L702 166.5L701.9 168.7L701.8 170.8L701.8 173L701.7 175.1L701.7 177.3L701.7 179.4L701.7 181.6L701.8 183.8L701.8 184.6L702.3 185.9L704.2 188.1L705 189.3L705.4 190.2L706.4 192.4L707 194.5L707.1 195.4L707 196.7L706.6 198.9L705.8 201L704.9 203.2L704.1 205.3L704.1 205.4L703.3 207.5L702.6 209.6L701.8 211.8L700.9 213.9L700.1 216.1L699.3 218.3L698.9 219.3L698.5 220.4L697.7 222.6L696.9 224.7L696.1 226.9L695.3 229L694.5 231.2L688.5 231.7Z" fill="#b8b8b8"/><path d="M690.9 112.6L692.5 114.8L694.1 116.9L695.7 119.1L697.3 121.2L698.9 123.4L699.2 123.8L700.6 125.6L702.3 127.7L704 129.9L705.7 132L707.2 134.2L707.7 134.8L708.7 136.3L710 138.5L710.8 139.9L711.2 140.6L711.5 141.1L712.2 142.3L712.5 142.8L712.9 143.4L713.6 144.6L713.8 145L714.3 145.8L713.3 147L713.2 147.1L712.4 148.2L711.5 149.3L711.4 149.4L711.2 149.5L710.1 150.6L708.9 151.4L708.5 151.7L706.9 152.9L706.2 153.6L705.8 154.1L705.7 154.3L705.1 155.3L704.9 155.7L703.8 157.9L703 160L702.4 162.2L702.1 164.4L702.1 164.6L702 166.5L701.9 168.7L701.8 170.8L701.8 173L701.7 175.1L701.7 177.3L701.7 179.4L701.7 181.6L701.8 183.8L701.8 184.6L702.3 185.9L704.2 188.1L705 189.3L705.4 190.2L706.4 192.4L707 194.5L707.1 195.4L707 196.7L706.6 198.9L705.8 201L704.9 203.2L704.1 205.3L704.1 205.4L703.3 207.5L702.6 209.6L701.8 211.8L700.9 213.9L700.1 216.1L699.3 218.3L698.9 219.3L698.5 220.4L697.7 222.6L696.9 224.7L696.1 226.9L695.3 229L694.5 231.2" fill="none" stroke="url(#gs)" stroke-width="0.8" stroke-opacity="0.42"/><path d="M682.2 110.9L688.2 111.5L689.7 113.7L691.3 115.9L692.8 118.1L694.4 120.2L696 122.4L696.6 123.3L697.6 124.6L699.3 126.8L701 129L702.7 131.1L704.3 133.3L705.4 134.9L705.8 135.5L707.1 137.7L708.4 139.9L708.9 140.6L709.6 141.8L709.7 142L710.3 143L711 144.2L711 144.2L711.7 145.4L712.3 146.4L712.4 146.6L711.3 147.8L710.6 148.6L710.2 149L709.4 149.9L709 150.2L708.3 150.7L707.4 151.4L705.7 152.6L705.3 152.9L704.3 153.8L703.9 154.3L703.4 155L703.4 155.1L702.8 156.2L702.2 157.3L701.3 159.5L700.6 161.6L700.1 163.8L700 165L699.9 166L699.8 168.2L699.7 170.4L699.6 172.5L699.5 174.7L699.5 176.9L699.4 179.1L699.4 181.2L699.5 183.4L699.5 185.6L699.5 186.4L700.2 187.8L702.1 190L702.1 190.1L703.2 192.1L703.9 194.3L703.9 194.9L703.8 196.5L703.3 198.7L702.5 200.9L701.6 203L700.9 205.1L700.8 205.2L700.1 207.4L699.4 209.6L698.7 211.7L698 213.9L697.2 216.1L696.5 218.3L696.1 219.4L695.7 220.5L694.9 222.6L694.2 224.8L693.4 227L692.6 229.2L691.8 231.4L685.8 231.9Z" fill="#b8b8b8"/><path d="M688.2 111.5L689.7 113.7L691.3 115.9L692.8 118.1L694.4 120.2L696 122.4L696.6 123.3L697.6 124.6L699.3 126.8L701 129L702.7 131.1L704.3 133.3L705.4 134.9L705.8 135.5L707.1 137.7L708.4 139.9L708.9 140.6L709.6 141.8L709.7 142L710.3 143L711 144.2L711 144.2L711.7 145.4L712.3 146.4L712.4 146.6L711.3 147.8L710.6 148.6L710.2 149L709.4 149.9L709 150.2L708.3 150.7L707.4 151.4L705.7 152.6L705.3 152.9L704.3 153.8L703.9 154.3L703.4 155L703.4 155.1L702.8 156.2L702.2 157.3L701.3 159.5L700.6 161.6L700.1 163.8L700 165L699.9 166L699.8 168.2L699.7 170.4L699.6 172.5L699.5 174.7L699.5 176.9L699.4 179.1L699.4 181.2L699.5 183.4L699.5 185.6L699.5 186.4L700.2 187.8L702.1 190L702.1 190.1L703.2 192.1L703.9 194.3L703.9 194.9L703.8 196.5L703.3 198.7L702.5 200.9L701.6 203L700.9 205.1L700.8 205.2L700.1 207.4L699.4 209.6L698.7 211.7L698 213.9L697.2 216.1L696.5 218.3L696.1 219.4L695.7 220.5L694.9 222.6L694.2 224.8L693.4 227L692.6 229.2L691.8 231.4" fill="none" stroke="url(#gs)" stroke-width="0.81" stroke-opacity="0.42"/><path d="M679.5 109.8L685.5 110.4L687 112.6L688.5 114.8L690 117L691.5 119.2L693.1 121.4L693.9 122.5L694.7 123.6L696.3 125.8L698 128L699.7 130.2L701.4 132.4L702.9 134.6L702.9 134.7L704.3 136.8L705.6 139L706.6 140.8L706.9 141.3L707.3 142L708 143.2L708.2 143.5L708.7 144.5L709.4 145.7L709.4 145.7L710.2 146.9L709.2 147.9L709 148.1L707.8 149.3L707.2 149.9L707 150.1L706.4 150.5L704.7 151.7L703.9 152.3L702.9 152.9L701.7 154.1L701.7 154.2L701.5 154.5L701 155.4L700.3 156.6L700.3 156.7L699.3 158.9L698.5 161.1L697.9 163.3L697.7 165.1L697.7 165.5L697.5 167.7L697.3 169.9L697.2 172.1L697.1 174.3L697 176.5L697 178.7L696.9 180.9L696.9 183.1L697 185.3L697 187.4L697 187.5L698.7 189.7L699.3 190.4L700.1 191.9L700.9 194.1L700.9 194.6L700.8 196.3L700.3 198.5L699.4 200.7L698.5 202.9L697.8 204.9L697.8 205.1L697.1 207.3L696.4 209.5L695.7 211.7L695.1 213.9L694.4 216.1L693.6 218.3L693.3 219.4L692.9 220.5L692.2 222.7L691.4 224.9L690.6 227.1L689.8 229.3L689 231.5L683 232Z" fill="#b8b8b8"/><path d="M685.5 110.4L687 112.6L688.5 114.8L690 117L691.5 119.2L693.1 121.4L693.9 122.5L694.7 123.6L696.3 125.8L698 128L699.7 130.2L701.4 132.4L702.9 134.6L702.9 134.7L704.3 136.8L705.6 139L706.6 140.8L706.9 141.3L707.3 142L708 143.2L708.2 143.5L708.7 144.5L709.4 145.7L709.4 145.7L710.2 146.9L709.2 147.9L709 148.1L707.8 149.3L707.2 149.9L707 150.1L706.4 150.5L704.7 151.7L703.9 152.3L702.9 152.9L701.7 154.1L701.7 154.2L701.5 154.5L701 155.4L700.3 156.6L700.3 156.7L699.3 158.9L698.5 161.1L697.9 163.3L697.7 165.1L697.7 165.5L697.5 167.7L697.3 169.9L697.2 172.1L697.1 174.3L697 176.5L697 178.7L696.9 180.9L696.9 183.1L697 185.3L697 187.4L697 187.5L698.7 189.7L699.3 190.4L700.1 191.9L700.9 194.1L700.9 194.6L700.8 196.3L700.3 198.5L699.4 200.7L698.5 202.9L697.8 204.9L697.8 205.1L697.1 207.3L696.4 209.5L695.7 211.7L695.1 213.9L694.4 216.1L693.6 218.3L693.3 219.4L692.9 220.5L692.2 222.7L691.4 224.9L690.6 227.1L689.8 229.3L689 231.5" fill="none" stroke="url(#gs)" stroke-width="0.81" stroke-opacity="0.42"/><path d="M676.7 108.7L682.7 109.3L684.2 111.5L685.7 113.8L687.2 116L688.7 118.2L690.3 120.4L691 121.5L691.8 122.7L693.5 124.9L695.2 127.1L696.9 129.3L698.5 131.6L700 133.8L700.2 134L701.4 136L702.8 138.2L704 140.3L704.1 140.5L704.7 141.5L705.3 142.7L705.4 142.7L706.1 144L706.6 144.9L706.8 145.2L707.5 146.4L706.9 147.1L706.4 147.6L705.2 148.9L704.7 149.4L704.6 149.5L703.8 150.1L702.1 151.3L701.7 151.6L700.4 152.5L699.2 153.8L699.2 153.8L699.2 153.8L698.5 155L697.9 156L697.8 156.2L696.8 158.3L696 160.5L695.4 162.7L695.1 164.9L695.1 164.9L694.9 167.2L694.7 169.4L694.5 171.6L694.4 173.8L694.3 176.1L694.2 178.3L694.2 180.5L694.2 182.7L694.2 185L694.2 187.2L694.2 187.2L695.9 189.4L696.5 190.2L697.2 191.6L698 193.9L698.1 194.4L698 196.1L697.4 198.3L696.6 200.5L695.7 202.8L695 204.8L695 205L694.3 207.2L693.6 209.4L692.9 211.7L692.2 213.9L691.5 216.1L690.8 218.3L690.4 219.4L690.1 220.6L689.3 222.8L688.5 225L687.8 227.2L687 229.5L686.2 231.7L680.2 232.2Z" fill="#b8b8b8"/><path d="M682.7 109.3L684.2 111.5L685.7 113.8L687.2 116L688.7 118.2L690.3 120.4L691 121.5L691.8 122.7L693.5 124.9L695.2 127.1L696.9 129.3L698.5 131.6L700 133.8L700.2 134L701.4 136L702.8 138.2L704 140.3L704.1 140.5L704.7 141.5L705.3 142.7L705.4 142.7L706.1 144L706.6 144.9L706.8 145.2L707.5 146.4L706.9 147.1L706.4 147.6L705.2 148.9L704.7 149.4L704.6 149.5L703.8 150.1L702.1 151.3L701.7 151.6L700.4 152.5L699.2 153.8L699.2 153.8L699.2 153.8L698.5 155L697.9 156L697.8 156.2L696.8 158.3L696 160.5L695.4 162.7L695.1 164.9L695.1 164.9L694.9 167.2L694.7 169.4L694.5 171.6L694.4 173.8L694.3 176.1L694.2 178.3L694.2 180.5L694.2 182.7L694.2 185L694.2 187.2L694.2 187.2L695.9 189.4L696.5 190.2L697.2 191.6L698 193.9L698.1 194.4L698 196.1L697.4 198.3L696.6 200.5L695.7 202.8L695 204.8L695 205L694.3 207.2L693.6 209.4L692.9 211.7L692.2 213.9L691.5 216.1L690.8 218.3L690.4 219.4L690.1 220.6L689.3 222.8L688.5 225L687.8 227.2L687 229.5L686.2 231.7" fill="none" stroke="url(#gs)" stroke-width="0.82" stroke-opacity="0.42"/><path d="M673.9 107.6L679.9 108.2L681.3 110.4L682.8 112.7L684.3 114.9L685.8 117.2L687.4 119.4L688.2 120.5L689 121.7L690.6 123.9L692.3 126.1L693.9 128.4L695.5 130.6L697.1 132.9L697.3 133.3L698.5 135.1L699.9 137.4L701.2 139.6L701.3 139.8L702 141L702.5 141.9L702.7 142.2L703.4 143.5L703.8 144.1L704.1 144.7L704.8 145.9L704.5 146.4L703.7 147.2L702.5 148.4L702.3 148.6L701.9 149L701.2 149.7L699.5 150.9L699.5 150.9L697.8 152.1L696.8 153.1L696.6 153.4L696.6 153.5L695.9 154.6L695.5 155.4L695.2 155.8L694.4 157.6L693.5 159.9L692.9 162.1L692.5 164.4L692.4 164.8L692.3 166.6L692 168.9L691.8 171.1L691.7 173.4L691.5 175.6L691.4 177.9L691.4 180.1L691.3 182.4L691.3 184.6L691.4 186.9L691.4 187L692.9 189.1L693.6 190L694.3 191.4L695.1 193.6L695.2 194.2L695.1 195.9L694.6 198.1L693.8 200.4L692.9 202.6L692.2 204.6L692.1 204.9L691.4 207.1L690.7 209.4L690 211.6L689.3 213.9L688.6 216.1L687.9 218.4L687.5 219.5L687.2 220.6L686.4 222.9L685.6 225.1L684.9 227.4L684.1 229.6L683.3 231.9L677.3 232.4Z" fill="#b8b8b8"/><path d="M679.9 108.2L681.3 110.4L682.8 112.7L684.3 114.9L685.8 117.2L687.4 119.4L688.2 120.5L689 121.7L690.6 123.9L692.3 126.1L693.9 128.4L695.5 130.6L697.1 132.9L697.3 133.3L698.5 135.1L699.9 137.4L701.2 139.6L701.3 139.8L702 141L702.5 141.9L702.7 142.2L703.4 143.5L703.8 144.1L704.1 144.7L704.8 145.9L704.5 146.4L703.7 147.2L702.5 148.4L702.3 148.6L701.9 149L701.2 149.7L699.5 150.9L699.5 150.9L697.8 152.1L696.8 153.1L696.6 153.4L696.6 153.5L695.9 154.6L695.5 155.4L695.2 155.8L694.4 157.6L693.5 159.9L692.9 162.1L692.5 164.4L692.4 164.8L692.3 166.6L692 168.9L691.8 171.1L691.7 173.4L691.5 175.6L691.4 177.9L691.4 180.1L691.3 182.4L691.3 184.6L691.4 186.9L691.4 187L692.9 189.1L693.6 190L694.3 191.4L695.1 193.6L695.2 194.2L695.1 195.9L694.6 198.1L693.8 200.4L692.9 202.6L692.2 204.6L692.1 204.9L691.4 207.1L690.7 209.4L690 211.6L689.3 213.9L688.6 216.1L687.9 218.4L687.5 219.5L687.2 220.6L686.4 222.9L685.6 225.1L684.9 227.4L684.1 229.6L683.3 231.9" fill="none" stroke="url(#gs)" stroke-width="0.83" stroke-opacity="0.42"/><path d="M671 106.4L677 107L678.4 109.3L679.9 111.5L681.4 113.8L682.9 116.1L684.5 118.4L685.2 119.5L686 120.6L687.6 122.9L689.3 125.2L691 127.5L692.6 129.7L694.1 132L694.5 132.6L695.6 134.3L696.9 136.5L698.3 138.8L698.5 139.2L699.2 140.5L699.6 141.1L699.9 141.7L700.6 143L700.9 143.4L701.4 144.2L702.1 145.5L702.1 145.6L701 146.7L699.9 147.9L699.8 148L699.2 148.6L698.5 149.2L697.3 150.2L696.9 150.5L695.2 151.7L694.4 152.5L694 153L693.9 153.1L693.3 154.2L693 154.7L692.6 155.5L691.9 157L691 159.3L690.3 161.6L689.9 163.8L689.7 164.6L689.6 166.1L689.3 168.4L689.1 170.6L688.9 172.9L688.7 175.2L688.6 177.5L688.5 179.7L688.5 182L688.4 184.3L688.5 186.6L688.5 186.8L689.9 188.8L690.7 189.9L691.3 191.1L692.2 193.4L692.3 194L692.2 195.7L691.6 197.9L690.8 200.2L690 202.5L689.3 204.5L689.2 204.8L688.5 207L687.8 209.3L687.1 211.6L686.4 213.8L685.7 216.1L684.9 218.4L684.6 219.5L684.2 220.7L683.5 222.9L682.7 225.2L681.9 227.5L681.1 229.8L680.3 232L674.3 232.5Z" fill="#b8b8b8"/><path d="M677 107L678.4 109.3L679.9 111.5L681.4 113.8L682.9 116.1L684.5 118.4L685.2 119.5L686 120.6L687.6 122.9L689.3 125.2L691 127.5L692.6 129.7L694.1 132L694.5 132.6L695.6 134.3L696.9 136.5L698.3 138.8L698.5 139.2L699.2 140.5L699.6 141.1L699.9 141.7L700.6 143L700.9 143.4L701.4 144.2L702.1 145.5L702.1 145.6L701 146.7L699.9 147.9L699.8 148L699.2 148.6L698.5 149.2L697.3 150.2L696.9 150.5L695.2 151.7L694.4 152.5L694 153L693.9 153.1L693.3 154.2L693 154.7L692.6 155.5L691.9 157L691 159.3L690.3 161.6L689.9 163.8L689.7 164.6L689.6 166.1L689.3 168.4L689.1 170.6L688.9 172.9L688.7 175.2L688.6 177.5L688.5 179.7L688.5 182L688.4 184.3L688.5 186.6L688.5 186.8L689.9 188.8L690.7 189.9L691.3 191.1L692.2 193.4L692.3 194L692.2 195.7L691.6 197.9L690.8 200.2L690 202.5L689.3 204.5L689.2 204.8L688.5 207L687.8 209.3L687.1 211.6L686.4 213.8L685.7 216.1L684.9 218.4L684.6 219.5L684.2 220.7L683.5 222.9L682.7 225.2L681.9 227.5L681.1 229.8L680.3 232" fill="none" stroke="url(#gs)" stroke-width="0.84" stroke-opacity="0.43"/><path d="M668 105.2L674 105.8L675.5 108.1L677 110.4L678.4 112.7L680 115L681.5 117.3L682.2 118.4L683 119.6L684.6 121.9L686.3 124.2L687.9 126.5L689.5 128.8L691.1 131.1L691.5 131.8L692.5 133.4L693.9 135.7L695.3 138L695.7 138.7L696.4 139.9L696.6 140.3L697.1 141.2L697.9 142.5L697.9 142.6L698.6 143.7L699.3 144.9L699.3 145L698.2 146.3L697.4 147.2L697.1 147.5L696.5 148.2L695.8 148.8L695 149.5L694.2 150.1L692.5 151.3L692.1 151.8L691.3 152.6L691.2 152.8L690.6 153.8L690.5 154.1L689.9 155.1L689.3 156.4L688.4 158.7L687.7 161L687.2 163.3L687 164.5L686.9 165.6L686.6 167.9L686.3 170.2L686.1 172.5L685.9 174.8L685.7 177.1L685.6 179.3L685.5 181.6L685.5 183.9L685.5 186.2L685.5 186.6L686.9 188.5L687.8 189.7L688.3 190.8L689.2 193.1L689.3 193.8L689.2 195.4L688.7 197.7L687.9 200L687 202.3L686.3 204.4L686.2 204.6L685.6 206.9L684.9 209.2L684.1 211.5L683.4 213.8L682.7 216.1L681.9 218.4L681.6 219.6L681.2 220.7L680.4 223L679.7 225.3L678.9 227.6L678.1 229.9L677.3 232.2L671.3 232.7Z" fill="#b8b8b8"/><path d="M674 105.8L675.5 108.1L677 110.4L678.4 112.7L680 115L681.5 117.3L682.2 118.4L683 119.6L684.6 121.9L686.3 124.2L687.9 126.5L689.5 128.8L691.1 131.1L691.5 131.8L692.5 133.4L693.9 135.7L695.3 138L695.7 138.7L696.4 139.9L696.6 140.3L697.1 141.2L697.9 142.5L697.9 142.6L698.6 143.7L699.3 144.9L699.3 145L698.2 146.3L697.4 147.2L697.1 147.5L696.5 148.2L695.8 148.8L695 149.5L694.2 150.1L692.5 151.3L692.1 151.8L691.3 152.6L691.2 152.8L690.6 153.8L690.5 154.1L689.9 155.1L689.3 156.4L688.4 158.7L687.7 161L687.2 163.3L687 164.5L686.9 165.6L686.6 167.9L686.3 170.2L686.1 172.5L685.9 174.8L685.7 177.1L685.6 179.3L685.5 181.6L685.5 183.9L685.5 186.2L685.5 186.6L686.9 188.5L687.8 189.7L688.3 190.8L689.2 193.1L689.3 193.8L689.2 195.4L688.7 197.7L687.9 200L687 202.3L686.3 204.4L686.2 204.6L685.6 206.9L684.9 209.2L684.1 211.5L683.4 213.8L682.7 216.1L681.9 218.4L681.6 219.6L681.2 220.7L680.4 223L679.7 225.3L678.9 227.6L678.1 229.9L677.3 232.2" fill="none" stroke="url(#gs)" stroke-width="0.85" stroke-opacity="0.43"/><path d="M665 104L671 104.6L672.5 106.9L674 109.2L675.4 111.6L676.9 113.9L678.4 116.2L679.2 117.4L680 118.5L681.6 120.9L683.2 123.2L684.8 125.5L686.4 127.8L688 130.2L688.6 131.1L689.4 132.5L690.9 134.8L692.2 137.1L692.8 138.1L693.5 139.4L693.6 139.4L694.3 140.7L694.9 141.8L695 142L695.8 143.2L696.3 144.1L696.5 144.5L695.4 145.8L694.9 146.4L694.3 147.1L693.7 147.7L693 148.4L692.6 148.7L691.4 149.6L689.8 150.9L689.7 151.1L688.6 152.2L688.5 152.4L687.9 153.4L687.9 153.5L687.2 154.7L686.7 155.7L685.8 158L685.1 160.4L684.5 162.7L684.2 164.4L684.1 165L683.8 167.3L683.5 169.7L683.2 172L683 174.3L682.8 176.6L682.7 178.9L682.6 181.3L682.5 183.6L682.5 185.9L682.5 186.4L683.7 188.2L684.7 189.5L685.3 190.6L686.1 192.9L686.2 193.6L686.1 195.2L685.6 197.5L684.9 199.9L684 202.2L683.3 204.3L683.2 204.5L682.5 206.8L681.8 209.2L681.1 211.5L680.4 213.8L679.6 216.1L678.9 218.5L678.5 219.6L678.1 220.8L677.4 223.1L676.6 225.4L675.8 227.7L675.1 230.1L674.3 232.4L668.3 232.9Z" fill="#b8b8b8"/><path d="M671 104.6L672.5 106.9L674 109.2L675.4 111.6L676.9 113.9L678.4 116.2L679.2 117.4L680 118.5L681.6 120.9L683.2 123.2L684.8 125.5L686.4 127.8L688 130.2L688.6 131.1L689.4 132.5L690.9 134.8L692.2 137.1L692.8 138.1L693.5 139.4L693.6 139.4L694.3 140.7L694.9 141.8L695 142L695.8 143.2L696.3 144.1L696.5 144.5L695.4 145.8L694.9 146.4L694.3 147.1L693.7 147.7L693 148.4L692.6 148.7L691.4 149.6L689.8 150.9L689.7 151.1L688.6 152.2L688.5 152.4L687.9 153.4L687.9 153.5L687.2 154.7L686.7 155.7L685.8 158L685.1 160.4L684.5 162.7L684.2 164.4L684.1 165L683.8 167.3L683.5 169.7L683.2 172L683 174.3L682.8 176.6L682.7 178.9L682.6 181.3L682.5 183.6L682.5 185.9L682.5 186.4L683.7 188.2L684.7 189.5L685.3 190.6L686.1 192.9L686.2 193.6L686.1 195.2L685.6 197.5L684.9 199.9L684 202.2L683.3 204.3L683.2 204.5L682.5 206.8L681.8 209.2L681.1 211.5L680.4 213.8L679.6 216.1L678.9 218.5L678.5 219.6L678.1 220.8L677.4 223.1L676.6 225.4L675.8 227.7L675.1 230.1L674.3 232.4" fill="none" stroke="url(#gs)" stroke-width="0.86" stroke-opacity="0.43"/><path d="M662 102.8L668 103.4L669.4 105.7L670.9 108.1L672.4 110.4L673.8 112.8L675.4 115.1L676.1 116.3L676.9 117.5L678.5 119.8L680.1 122.2L681.7 124.5L683.3 126.9L684.8 129.2L685.5 130.3L686.3 131.6L687.7 133.9L689.1 136.3L689.9 137.6L690.5 138.6L690.6 138.9L691.4 140.2L691.8 141L692.1 141.5L692.9 142.8L693.2 143.3L693.6 144L692.5 145.3L692.3 145.6L691.4 146.6L690.9 147.3L690.2 147.9L690.1 148L688.6 149.2L687.2 150.3L687.1 150.5L685.8 151.8L685.7 152.1L685.3 152.7L685.1 153.1L684.4 154.4L684.1 155L683.1 157.4L682.4 159.7L681.8 162.1L681.4 164.3L681.3 164.4L681 166.8L680.6 169.1L680.3 171.5L680.1 173.8L679.8 176.2L679.7 178.5L679.5 180.9L679.5 183.2L679.5 185.6L679.5 186.2L680.6 187.9L681.7 189.3L682.1 190.3L683 192.6L683.1 193.4L683 195L682.5 197.3L681.8 199.7L680.9 202L680.2 204.1L680.2 204.4L679.5 206.7L678.8 209.1L678 211.4L677.3 213.8L676.5 216.1L675.8 218.5L675.4 219.7L675 220.8L674.3 223.2L673.5 225.5L672.7 227.9L672 230.2L671.2 232.6L665.2 233.1Z" fill="#b8b8b8"/><path d="M668 103.4L669.4 105.7L670.9 108.1L672.4 110.4L673.8 112.8L675.4 115.1L676.1 116.3L676.9 117.5L678.5 119.8L680.1 122.2L681.7 124.5L683.3 126.9L684.8 129.2L685.5 130.3L686.3 131.6L687.7 133.9L689.1 136.3L689.9 137.6L690.5 138.6L690.6 138.9L691.4 140.2L691.8 141L692.1 141.5L692.9 142.8L693.2 143.3L693.6 144L692.5 145.3L692.3 145.6L691.4 146.6L690.9 147.3L690.2 147.9L690.1 148L688.6 149.2L687.2 150.3L687.1 150.5L685.8 151.8L685.7 152.1L685.3 152.7L685.1 153.1L684.4 154.4L684.1 155L683.1 157.4L682.4 159.7L681.8 162.1L681.4 164.3L681.3 164.4L681 166.8L680.6 169.1L680.3 171.5L680.1 173.8L679.8 176.2L679.7 178.5L679.5 180.9L679.5 183.2L679.5 185.6L679.5 186.2L680.6 187.9L681.7 189.3L682.1 190.3L683 192.6L683.1 193.4L683 195L682.5 197.3L681.8 199.7L680.9 202L680.2 204.1L680.2 204.4L679.5 206.7L678.8 209.1L678 211.4L677.3 213.8L676.5 216.1L675.8 218.5L675.4 219.7L675 220.8L674.3 223.2L673.5 225.5L672.7 227.9L672 230.2L671.2 232.6" fill="none" stroke="url(#gs)" stroke-width="0.87" stroke-opacity="0.43"/><path d="M658.9 101.5L664.9 102.1L666.3 104.5L667.8 106.9L669.2 109.2L670.7 111.6L672.2 114L673 115.2L673.7 116.4L675.3 118.7L676.9 121.1L678.5 123.5L680.1 125.9L681.6 128.2L682.4 129.5L683.1 130.6L684.5 133L685.9 135.4L686.9 137L687.3 137.7L687.6 138.3L688.4 139.7L688.7 140.1L689.2 141L689.9 142.3L690 142.5L690.7 143.6L689.6 144.9L689.6 144.9L688.5 146.2L688 146.8L687.6 147.2L687.3 147.5L685.8 148.8L684.8 149.6L684.2 150.1L683 151.4L682.8 151.7L682.7 152L682.3 152.7L681.6 154L681.4 154.4L680.4 156.7L679.6 159.1L679 161.5L678.5 163.9L678.5 164.1L678.1 166.2L677.7 168.6L677.4 171L677.1 173.4L676.8 175.8L676.6 178.1L676.4 180.5L676.4 182.9L676.3 185.3L676.4 186L677.3 187.6L678.5 189.1L679 190L679.8 192.4L679.9 193.2L679.9 194.8L679.4 197.1L678.6 199.5L677.8 201.9L677.1 204L677 204.3L676.3 206.6L675.6 209L674.9 211.4L674.1 213.8L673.3 216.1L672.6 218.5L672.2 219.7L671.8 220.9L671.1 223.3L670.3 225.6L669.6 228L668.8 230.4L668 232.8L662 233.3Z" fill="#b8b8b8"/><path d="M664.9 102.1L666.3 104.5L667.8 106.9L669.2 109.2L670.7 111.6L672.2 114L673 115.2L673.7 116.4L675.3 118.7L676.9 121.1L678.5 123.5L680.1 125.9L681.6 128.2L682.4 129.5L683.1 130.6L684.5 133L685.9 135.4L686.9 137L687.3 137.7L687.6 138.3L688.4 139.7L688.7 140.1L689.2 141L689.9 142.3L690 142.5L690.7 143.6L689.6 144.9L689.6 144.9L688.5 146.2L688 146.8L687.6 147.2L687.3 147.5L685.8 148.8L684.8 149.6L684.2 150.1L683 151.4L682.8 151.7L682.7 152L682.3 152.7L681.6 154L681.4 154.4L680.4 156.7L679.6 159.1L679 161.5L678.5 163.9L678.5 164.1L678.1 166.2L677.7 168.6L677.4 171L677.1 173.4L676.8 175.8L676.6 178.1L676.4 180.5L676.4 182.9L676.3 185.3L676.4 186L677.3 187.6L678.5 189.1L679 190L679.8 192.4L679.9 193.2L679.9 194.8L679.4 197.1L678.6 199.5L677.8 201.9L677.1 204L677 204.3L676.3 206.6L675.6 209L674.9 211.4L674.1 213.8L673.3 216.1L672.6 218.5L672.2 219.7L671.8 220.9L671.1 223.3L670.3 225.6L669.6 228L668.8 230.4L668 232.8" fill="none" stroke="url(#gs)" stroke-width="0.88" stroke-opacity="0.43"/><path d="M655.7 100.2L661.7 100.8L663.1 103.2L664.6 105.6L666 108L667.5 110.4L669 112.8L669.7 114L670.5 115.2L672.1 117.6L673.6 120L675.2 122.4L676.8 124.8L678.4 127.3L679.3 128.8L679.8 129.7L681.3 132.1L682.7 134.5L683.9 136.5L684.1 136.9L684.6 137.8L685.4 139.1L685.5 139.3L686.1 140.4L686.8 141.7L686.9 141.8L687.7 143.1L686.9 144.1L686.6 144.4L685.6 145.7L685 146.4L684.9 146.5L684.4 147.1L682.9 148.4L682.3 148.9L681.3 149.7L680.1 151L680 151.3L679.9 151.4L679.4 152.3L678.7 153.7L678.7 153.7L677.7 156.1L676.8 158.5L676.2 160.9L675.6 163.3L675.5 164L675.2 165.7L674.8 168.1L674.4 170.5L674.1 172.9L673.8 175.3L673.5 177.7L673.3 180.1L673.2 182.5L673.2 184.9L673.2 185.9L674 187.3L675.4 188.9L675.7 189.7L676.6 192.1L676.7 193L676.7 194.5L676.2 196.9L675.4 199.3L674.6 201.7L673.9 203.9L673.8 204.1L673.1 206.5L672.4 208.9L671.7 211.3L670.9 213.7L670.1 216.1L669.3 218.5L669 219.7L668.6 220.9L667.8 223.3L667.1 225.8L666.3 228.2L665.6 230.6L664.8 233L658.8 233.5Z" fill="#b8b8b8"/><path d="M661.7 100.8L663.1 103.2L664.6 105.6L666 108L667.5 110.4L669 112.8L669.7 114L670.5 115.2L672.1 117.6L673.6 120L675.2 122.4L676.8 124.8L678.4 127.3L679.3 128.8L679.8 129.7L681.3 132.1L682.7 134.5L683.9 136.5L684.1 136.9L684.6 137.8L685.4 139.1L685.5 139.3L686.1 140.4L686.8 141.7L686.9 141.8L687.7 143.1L686.9 144.1L686.6 144.4L685.6 145.7L685 146.4L684.9 146.5L684.4 147.1L682.9 148.4L682.3 148.9L681.3 149.7L680.1 151L680 151.3L679.9 151.4L679.4 152.3L678.7 153.7L678.7 153.7L677.7 156.1L676.8 158.5L676.2 160.9L675.6 163.3L675.5 164L675.2 165.7L674.8 168.1L674.4 170.5L674.1 172.9L673.8 175.3L673.5 177.7L673.3 180.1L673.2 182.5L673.2 184.9L673.2 185.9L674 187.3L675.4 188.9L675.7 189.7L676.6 192.1L676.7 193L676.7 194.5L676.2 196.9L675.4 199.3L674.6 201.7L673.9 203.9L673.8 204.1L673.1 206.5L672.4 208.9L671.7 211.3L670.9 213.7L670.1 216.1L669.3 218.5L669 219.7L668.6 220.9L667.8 223.3L667.1 225.8L666.3 228.2L665.6 230.6L664.8 233" fill="none" stroke="url(#gs)" stroke-width="0.89" stroke-opacity="0.43"/><path d="M652.5 98.9L658.5 99.5L659.9 102L661.3 104.4L662.8 106.8L664.2 109.2L665.7 111.7L666.5 112.9L667.2 114.1L668.8 116.5L670.3 119L671.9 121.4L673.5 123.8L675 126.2L676.1 128L676.5 128.7L678 131.1L679.4 133.5L680.8 135.9L680.8 136L681.5 137.3L682.2 138.4L682.3 138.6L683.1 139.9L683.6 140.8L683.8 141.3L684.6 142.6L684.2 143.3L683.6 143.9L682.6 145.3L682.2 145.7L682 145.9L681.4 146.6L679.9 148L679.7 148.1L678.4 149.3L677.3 150.5L677.2 150.6L676.9 151.1L676.4 152L675.9 153L675.8 153.3L674.9 155.4L674 157.8L673.3 160.3L672.7 162.7L672.5 163.9L672.3 165.1L671.8 167.6L671.4 170L671 172.4L670.6 174.8L670.3 177.3L670.1 179.7L670 182.1L669.9 184.6L669.9 185.7L670.7 187L672.1 188.7L672.4 189.4L673.3 191.8L673.4 192.8L673.4 194.3L672.9 196.7L672.2 199.1L671.3 201.6L670.7 203.8L670.6 204L669.9 206.4L669.2 208.9L668.4 211.3L667.6 213.7L666.8 216.1L666 218.6L665.7 219.8L665.3 221L664.5 223.4L663.8 225.9L663 228.3L662.3 230.7L661.5 233.2L655.5 233.7Z" fill="#b8b8b8"/><path d="M658.5 99.5L659.9 102L661.3 104.4L662.8 106.8L664.2 109.2L665.7 111.7L666.5 112.9L667.2 114.1L668.8 116.5L670.3 119L671.9 121.4L673.5 123.8L675 126.2L676.1 128L676.5 128.7L678 131.1L679.4 133.5L680.8 135.9L680.8 136L681.5 137.3L682.2 138.4L682.3 138.6L683.1 139.9L683.6 140.8L683.8 141.3L684.6 142.6L684.2 143.3L683.6 143.9L682.6 145.3L682.2 145.7L682 145.9L681.4 146.6L679.9 148L679.7 148.1L678.4 149.3L677.3 150.5L677.2 150.6L676.9 151.1L676.4 152L675.9 153L675.8 153.3L674.9 155.4L674 157.8L673.3 160.3L672.7 162.7L672.5 163.9L672.3 165.1L671.8 167.6L671.4 170L671 172.4L670.6 174.8L670.3 177.3L670.1 179.7L670 182.1L669.9 184.6L669.9 185.7L670.7 187L672.1 188.7L672.4 189.4L673.3 191.8L673.4 192.8L673.4 194.3L672.9 196.7L672.2 199.1L671.3 201.6L670.7 203.8L670.6 204L669.9 206.4L669.2 208.9L668.4 211.3L667.6 213.7L666.8 216.1L666 218.6L665.7 219.8L665.3 221L664.5 223.4L663.8 225.9L663 228.3L662.3 230.7L661.5 233.2" fill="none" stroke="url(#gs)" stroke-width="0.9" stroke-opacity="0.44"/><path d="M649.2 97.6L655.2 98.2L656.6 100.6L658 103.1L659.5 105.6L660.9 108L662.4 110.5L663.1 111.7L663.9 112.9L665.4 115.4L667 117.9L668.5 120.3L670.1 122.8L671.6 125.2L672.8 127.2L673.1 127.7L674.6 130.1L676 132.6L677.4 135.1L677.6 135.4L678.4 136.7L678.8 137.5L679.2 138.1L679.9 139.4L680.3 140L680.7 140.8L681.5 142.1L681.4 142.4L680.5 143.5L679.5 144.8L679.4 144.9L678.9 145.5L678.3 146.2L677.1 147.3L676.9 147.5L675.4 148.9L674.5 149.8L674.2 150.2L673.9 150.7L673.4 151.6L673.1 152.3L672.8 152.9L672 154.7L671.1 157.2L670.4 159.6L669.8 162.1L669.4 163.8L669.3 164.5L668.8 167L668.3 169.5L667.9 171.9L667.5 174.4L667.1 176.8L666.9 179.3L666.7 181.7L666.6 184.2L666.6 185.5L667.2 186.7L668.8 188.6L669 189.1L669.9 191.6L670.1 192.6L670 194L669.6 196.5L668.9 198.9L668 201.4L667.4 203.6L667.3 203.9L666.6 206.3L665.8 208.8L665.1 211.2L664.3 213.7L663.5 216.2L662.7 218.6L662.3 219.8L661.9 221.1L661.2 223.5L660.4 226L659.7 228.4L658.9 230.9L658.2 233.4L652.2 233.9Z" fill="#b8b8b8"/><path d="M655.2 98.2L656.6 100.6L658 103.1L659.5 105.6L660.9 108L662.4 110.5L663.1 111.7L663.9 112.9L665.4 115.4L667 117.9L668.5 120.3L670.1 122.8L671.6 125.2L672.8 127.2L673.1 127.7L674.6 130.1L676 132.6L677.4 135.1L677.6 135.4L678.4 136.7L678.8 137.5L679.2 138.1L679.9 139.4L680.3 140L680.7 140.8L681.5 142.1L681.4 142.4L680.5 143.5L679.5 144.8L679.4 144.9L678.9 145.5L678.3 146.2L677.1 147.3L676.9 147.5L675.4 148.9L674.5 149.8L674.2 150.2L673.9 150.7L673.4 151.6L673.1 152.3L672.8 152.9L672 154.7L671.1 157.2L670.4 159.6L669.8 162.1L669.4 163.8L669.3 164.5L668.8 167L668.3 169.5L667.9 171.9L667.5 174.4L667.1 176.8L666.9 179.3L666.7 181.7L666.6 184.2L666.6 185.5L667.2 186.7L668.8 188.6L669 189.1L669.9 191.6L670.1 192.6L670 194L669.6 196.5L668.9 198.9L668 201.4L667.4 203.6L667.3 203.9L666.6 206.3L665.8 208.8L665.1 211.2L664.3 213.7L663.5 216.2L662.7 218.6L662.3 219.8L661.9 221.1L661.2 223.5L660.4 226L659.7 228.4L658.9 230.9L658.2 233.4" fill="none" stroke="url(#gs)" stroke-width="0.91" stroke-opacity="0.44"/><path d="M645.9 96.2L651.9 96.8L653.3 99.3L654.7 101.8L656.1 104.3L657.5 106.8L659 109.3L659.7 110.5L660.5 111.8L662 114.2L663.5 116.7L665.1 119.2L666.6 121.7L668.2 124.2L669.5 126.3L669.7 126.7L671.1 129.2L672.6 131.6L674 134.1L674.4 134.8L675.2 136.2L675.4 136.6L676 137.5L676.8 138.9L676.9 139.1L677.5 140.3L678.3 141.6L678.3 141.6L677.3 143L676.6 144.1L676.3 144.4L675.8 145.1L675.2 145.7L674.4 146.6L673.8 147.1L672.3 148.5L671.8 149L671.2 149.8L670.8 150.4L670.4 151.2L670.2 151.5L669.7 152.6L669.1 154L668.2 156.5L667.4 159L666.8 161.5L666.3 163.8L666.2 164L665.7 166.4L665.2 168.9L664.7 171.4L664.3 173.9L663.9 176.4L663.6 178.9L663.4 181.4L663.3 183.8L663.3 185.3L663.8 186.3L665.4 188.4L665.6 188.8L666.5 191.3L666.7 192.4L666.6 193.8L666.2 196.3L665.5 198.8L664.7 201.2L664 203.5L663.9 203.7L663.2 206.2L662.4 208.7L661.7 211.2L660.9 213.7L660 216.2L659.3 218.6L658.9 219.9L658.5 221.1L657.7 223.6L657 226.1L656.2 228.6L655.5 231.1L654.8 233.6L648.8 234.1Z" fill="#b8b8b8"/><path d="M651.9 96.8L653.3 99.3L654.7 101.8L656.1 104.3L657.5 106.8L659 109.3L659.7 110.5L660.5 111.8L662 114.2L663.5 116.7L665.1 119.2L666.6 121.7L668.2 124.2L669.5 126.3L669.7 126.7L671.1 129.2L672.6 131.6L674 134.1L674.4 134.8L675.2 136.2L675.4 136.6L676 137.5L676.8 138.9L676.9 139.1L677.5 140.3L678.3 141.6L678.3 141.6L677.3 143L676.6 144.1L676.3 144.4L675.8 145.1L675.2 145.7L674.4 146.6L673.8 147.1L672.3 148.5L671.8 149L671.2 149.8L670.8 150.4L670.4 151.2L670.2 151.5L669.7 152.6L669.1 154L668.2 156.5L667.4 159L666.8 161.5L666.3 163.8L666.2 164L665.7 166.4L665.2 168.9L664.7 171.4L664.3 173.9L663.9 176.4L663.6 178.9L663.4 181.4L663.3 183.8L663.3 185.3L663.8 186.3L665.4 188.4L665.6 188.8L666.5 191.3L666.7 192.4L666.6 193.8L666.2 196.3L665.5 198.8L664.7 201.2L664 203.5L663.9 203.7L663.2 206.2L662.4 208.7L661.7 211.2L660.9 213.7L660 216.2L659.3 218.6L658.9 219.9L658.5 221.1L657.7 223.6L657 226.1L656.2 228.6L655.5 231.1L654.8 233.6" fill="none" stroke="url(#gs)" stroke-width="0.92" stroke-opacity="0.44"/><path d="M642.5 94.9L648.5 95.5L649.8 98L651.2 100.5L652.6 103L654.1 105.5L655.5 108L656.3 109.3L657 110.5L658.5 113.1L660 115.6L661.6 118.1L663.1 120.6L664.6 123.1L666.1 125.5L666.1 125.6L667.6 128.1L669.1 130.7L670.5 133.2L671.1 134.2L671.9 135.6L672 135.7L672.7 137L673.4 138.2L673.5 138.4L674.3 139.8L674.9 140.7L675.1 141.2L674.1 142.5L673.6 143.2L673.1 143.9L672.6 144.6L672 145.3L671.6 145.7L670.6 146.7L669.2 148.1L669 148.3L668 149.5L667.7 150.1L667.3 150.8L667.3 150.8L666.6 152.2L666.2 153.3L665.2 155.8L664.4 158.3L663.7 160.8L663.2 163.4L663.1 163.7L662.6 165.9L662 168.4L661.5 170.9L661 173.4L660.6 175.9L660.2 178.4L660 181L659.8 183.5L659.8 185.1L660.2 186L662 188.2L662.1 188.5L663 191L663.2 192.2L663.1 193.5L662.7 196L662 198.6L661.2 201.1L660.5 203.3L660.5 203.6L659.8 206.1L659 208.6L658.2 211.1L657.4 213.6L656.6 216.2L655.8 218.7L655.4 219.9L655 221.2L654.2 223.7L653.5 226.2L652.7 228.7L652 231.2L651.3 233.8L645.3 234.3Z" fill="#b8b8b8"/><path d="M648.5 95.5L649.8 98L651.2 100.5L652.6 103L654.1 105.5L655.5 108L656.3 109.3L657 110.5L658.5 113.1L660 115.6L661.6 118.1L663.1 120.6L664.6 123.1L666.1 125.5L666.1 125.6L667.6 128.1L669.1 130.7L670.5 133.2L671.1 134.2L671.9 135.6L672 135.7L672.7 137L673.4 138.2L673.5 138.4L674.3 139.8L674.9 140.7L675.1 141.2L674.1 142.5L673.6 143.2L673.1 143.9L672.6 144.6L672 145.3L671.6 145.7L670.6 146.7L669.2 148.1L669 148.3L668 149.5L667.7 150.1L667.3 150.8L667.3 150.8L666.6 152.2L666.2 153.3L665.2 155.8L664.4 158.3L663.7 160.8L663.2 163.4L663.1 163.7L662.6 165.9L662 168.4L661.5 170.9L661 173.4L660.6 175.9L660.2 178.4L660 181L659.8 183.5L659.8 185.1L660.2 186L662 188.2L662.1 188.5L663 191L663.2 192.2L663.1 193.5L662.7 196L662 198.6L661.2 201.1L660.5 203.3L660.5 203.6L659.8 206.1L659 208.6L658.2 211.1L657.4 213.6L656.6 216.2L655.8 218.7L655.4 219.9L655 221.2L654.2 223.7L653.5 226.2L652.7 228.7L652 231.2L651.3 233.8" fill="none" stroke="url(#gs)" stroke-width="0.93" stroke-opacity="0.44"/><path d="M639 93.4L645 94L646.3 96.6L647.7 99.1L649.1 101.7L650.5 104.2L652 106.8L652.7 108L653.4 109.3L654.9 111.9L656.5 114.4L658 116.9L659.5 119.5L661 122L662.5 124.6L662.6 124.7L664 127.1L665.5 129.7L666.9 132.2L667.8 133.7L668.4 134.8L668.6 135.1L669.4 136.5L669.9 137.3L670.2 137.9L671 139.3L671.3 139.8L671.8 140.7L670.8 142.1L670.6 142.4L669.9 143.5L669.4 144.2L668.8 144.9L668.7 144.9L667.4 146.3L666.2 147.5L666 147.7L664.9 149.1L664.5 149.7L664.3 150L664.1 150.5L663.4 151.9L663.1 152.6L662.2 155.1L661.3 157.6L660.6 160.2L660 162.7L659.8 163.6L659.4 165.3L658.8 167.8L658.3 170.4L657.7 172.9L657.2 175.5L656.8 178L656.5 180.5L656.4 183.1L656.3 184.9L656.6 185.6L658.5 188L658.5 188.2L659.5 190.7L659.6 192L659.6 193.3L659.2 195.8L658.5 198.4L657.7 200.9L657 203.2L657 203.4L656.2 206L655.5 208.5L654.7 211.1L653.8 213.6L653 216.2L652.2 218.7L651.8 220L651.4 221.3L650.7 223.8L649.9 226.3L649.2 228.9L648.4 231.4L647.7 234L641.7 234.5Z" fill="#b8b8b8"/><path d="M645 94L646.3 96.6L647.7 99.1L649.1 101.7L650.5 104.2L652 106.8L652.7 108L653.4 109.3L654.9 111.9L656.5 114.4L658 116.9L659.5 119.5L661 122L662.5 124.6L662.6 124.7L664 127.1L665.5 129.7L666.9 132.2L667.8 133.7L668.4 134.8L668.6 135.1L669.4 136.5L669.9 137.3L670.2 137.9L671 139.3L671.3 139.8L671.8 140.7L670.8 142.1L670.6 142.4L669.9 143.5L669.4 144.2L668.8 144.9L668.7 144.9L667.4 146.3L666.2 147.5L666 147.7L664.9 149.1L664.5 149.7L664.3 150L664.1 150.5L663.4 151.9L663.1 152.6L662.2 155.1L661.3 157.6L660.6 160.2L660 162.7L659.8 163.6L659.4 165.3L658.8 167.8L658.3 170.4L657.7 172.9L657.2 175.5L656.8 178L656.5 180.5L656.4 183.1L656.3 184.9L656.6 185.6L658.5 188L658.5 188.2L659.5 190.7L659.6 192L659.6 193.3L659.2 195.8L658.5 198.4L657.7 200.9L657 203.2L657 203.4L656.2 206L655.5 208.5L654.7 211.1L653.8 213.6L653 216.2L652.2 218.7L651.8 220L651.4 221.3L650.7 223.8L649.9 226.3L649.2 228.9L648.4 231.4L647.7 234" fill="none" stroke="url(#gs)" stroke-width="0.94" stroke-opacity="0.44"/><path d="M635.4 92L641.4 92.6L642.8 95.2L644.2 97.8L645.6 100.3L647 102.9L648.5 105.5L649.1 106.7L649.9 108.1L651.4 110.6L652.9 113.2L654.5 115.8L656 118.3L657.5 120.9L659 123.5L659.1 123.6L660.5 126.1L661.9 128.6L663.4 131.2L664.4 133L664.8 133.8L665.1 134.4L665.9 135.8L666.3 136.4L666.7 137.2L667.5 138.6L667.7 138.9L668.3 140L667.4 141.5L667.3 141.5L666.4 142.9L665.9 143.6L665.5 144.1L665.4 144.3L664 145.7L663.1 146.7L662.7 147.1L661.5 148.5L661.1 149.2L661.1 149.2L660.7 149.9L660.1 151.4L659.9 151.8L658.9 154.4L658 157L657.3 159.5L656.7 162.1L656.4 163.4L656.1 164.7L655.4 167.3L654.8 169.8L654.2 172.4L653.7 175L653.3 177.6L652.9 180.1L652.8 182.7L652.7 184.6L653 185.3L654.9 187.8L654.9 187.9L655.8 190.4L656 191.8L656 193L655.6 195.6L654.9 198.2L654.1 200.7L653.5 203.1L653.4 203.3L652.7 205.9L651.9 208.4L651.1 211L650.2 213.6L649.4 216.2L648.6 218.7L648.2 220.1L647.8 221.3L647 223.9L646.3 226.5L645.5 229L644.8 231.6L644.1 234.2L638.1 234.7Z" fill="#b8b8b8"/><path d="M641.4 92.6L642.8 95.2L644.2 97.8L645.6 100.3L647 102.9L648.5 105.5L649.1 106.7L649.9 108.1L651.4 110.6L652.9 113.2L654.5 115.8L656 118.3L657.5 120.9L659 123.5L659.1 123.6L660.5 126.1L661.9 128.6L663.4 131.2L664.4 133L664.8 133.8L665.1 134.4L665.9 135.8L666.3 136.4L666.7 137.2L667.5 138.6L667.7 138.9L668.3 140L667.4 141.5L667.3 141.5L666.4 142.9L665.9 143.6L665.5 144.1L665.4 144.3L664 145.7L663.1 146.7L662.7 147.1L661.5 148.5L661.1 149.2L661.1 149.2L660.7 149.9L660.1 151.4L659.9 151.8L658.9 154.4L658 157L657.3 159.5L656.7 162.1L656.4 163.4L656.1 164.7L655.4 167.3L654.8 169.8L654.2 172.4L653.7 175L653.3 177.6L652.9 180.1L652.8 182.7L652.7 184.6L653 185.3L654.9 187.8L654.9 187.9L655.8 190.4L656 191.8L656 193L655.6 195.6L654.9 198.2L654.1 200.7L653.5 203.1L653.4 203.3L652.7 205.9L651.9 208.4L651.1 211L650.2 213.6L649.4 216.2L648.6 218.7L648.2 220.1L647.8 221.3L647 223.9L646.3 226.5L645.5 229L644.8 231.6L644.1 234.2" fill="none" stroke="url(#gs)" stroke-width="0.95" stroke-opacity="0.45"/><path d="M631.8 90.5L637.8 91.1L639.2 93.7L640.6 96.3L642.1 99L643.6 101.6L645 104.2L645.6 105.2L646.5 106.8L648 109.4L649.6 112L651.1 114.6L652.7 117.2L654.2 119.8L655.5 122.2L655.6 122.4L657.1 125L658.5 127.6L659.9 130.2L660.8 132L661.2 132.8L661.6 133.4L662.3 134.8L662.6 135.4L663.1 136.3L663.8 137.7L664 138L664.6 139.1L663.7 140.6L663.6 140.6L662.7 142L662.2 142.7L661.8 143.2L661.7 143.4L660.4 144.9L659.4 145.8L659 146.3L657.9 147.7L657.4 148.4L657.4 148.4L657.1 149.2L656.4 150.6L656.2 151.1L655.2 153.7L654.3 156.3L653.6 158.9L652.9 161.5L652.6 162.8L652.3 164.1L651.7 166.7L651.1 169.3L650.5 171.9L649.9 174.5L649.5 177.1L649.2 179.7L649 182.3L649 184.2L649.2 184.9L651.2 187.4L651.3 187.5L652.2 190.1L652.5 191.7L652.5 192.7L652.1 195.3L651.4 197.9L650.6 200.5L649.9 203.1L649.8 203.2L649.1 205.8L648.3 208.4L647.5 211L646.6 213.6L645.7 216.2L644.9 218.8L644.4 220.3L644.1 221.4L643.3 224L642.6 226.6L641.8 229.2L641.1 231.8L640.4 234.4L634.4 234.9Z" fill="#b8b8b8"/><path d="M637.8 91.1L639.2 93.7L640.6 96.3L642.1 99L643.6 101.6L645 104.2L645.6 105.2L646.5 106.8L648 109.4L649.6 112L651.1 114.6L652.7 117.2L654.2 119.8L655.5 122.2L655.6 122.4L657.1 125L658.5 127.6L659.9 130.2L660.8 132L661.2 132.8L661.6 133.4L662.3 134.8L662.6 135.4L663.1 136.3L663.8 137.7L664 138L664.6 139.1L663.7 140.6L663.6 140.6L662.7 142L662.2 142.7L661.8 143.2L661.7 143.4L660.4 144.9L659.4 145.8L659 146.3L657.9 147.7L657.4 148.4L657.4 148.4L657.1 149.2L656.4 150.6L656.2 151.1L655.2 153.7L654.3 156.3L653.6 158.9L652.9 161.5L652.6 162.8L652.3 164.1L651.7 166.7L651.1 169.3L650.5 171.9L649.9 174.5L649.5 177.1L649.2 179.7L649 182.3L649 184.2L649.2 184.9L651.2 187.4L651.3 187.5L652.2 190.1L652.5 191.7L652.5 192.7L652.1 195.3L651.4 197.9L650.6 200.5L649.9 203.1L649.8 203.2L649.1 205.8L648.3 208.4L647.5 211L646.6 213.6L645.7 216.2L644.9 218.8L644.4 220.3L644.1 221.4L643.3 224L642.6 226.6L641.8 229.2L641.1 231.8L640.4 234.4" fill="none" stroke="url(#gs)" stroke-width="0.96" stroke-opacity="0.45"/><path d="M628.1 89L634.1 89.6L635.6 92.3L637 94.9L638.5 97.6L640 100.2L641.5 102.8L642 103.6L643.1 105.5L644.6 108.1L646.2 110.7L647.7 113.4L649.3 116L650.8 118.6L651.9 120.7L652.2 121.3L653.6 123.9L654.9 126.5L656.3 129.2L657.2 131L657.6 131.8L657.9 132.4L658.6 133.9L658.9 134.5L659.3 135.3L660.1 136.8L660.2 137.1L660.8 138.2L659.9 139.7L659.8 139.7L659 141.1L658.5 141.8L658.1 142.4L657.9 142.6L656.6 144L655.7 145L655.3 145.5L654.1 146.9L653.7 147.6L653.7 147.6L653.3 148.4L652.7 149.8L652.4 150.3L651.4 152.9L650.5 155.5L649.7 158.2L649.1 160.8L648.8 162.1L648.5 163.5L647.8 166.1L647.2 168.7L646.6 171.4L646.1 174L645.7 176.6L645.4 179.3L645.2 181.9L645.2 183.8L645.4 184.5L647.5 187.1L647.5 187.2L648.6 189.8L648.8 191.6L648.8 192.5L648.5 195.1L647.8 197.7L647 200.4L646.2 203L646.2 203.1L645.5 205.6L644.6 208.3L643.8 210.9L642.9 213.5L642 216.2L641.2 218.8L640.6 220.5L640.4 221.5L639.6 224.1L638.8 226.7L638.1 229.4L637.3 232L636.6 234.6L630.6 235.1Z" fill="#b8b8b8"/><path d="M634.1 89.6L635.6 92.3L637 94.9L638.5 97.6L640 100.2L641.5 102.8L642 103.6L643.1 105.5L644.6 108.1L646.2 110.7L647.7 113.4L649.3 116L650.8 118.6L651.9 120.7L652.2 121.3L653.6 123.9L654.9 126.5L656.3 129.2L657.2 131L657.6 131.8L657.9 132.4L658.6 133.9L658.9 134.5L659.3 135.3L660.1 136.8L660.2 137.1L660.8 138.2L659.9 139.7L659.8 139.7L659 141.1L658.5 141.8L658.1 142.4L657.9 142.6L656.6 144L655.7 145L655.3 145.5L654.1 146.9L653.7 147.6L653.7 147.6L653.3 148.4L652.7 149.8L652.4 150.3L651.4 152.9L650.5 155.5L649.7 158.2L649.1 160.8L648.8 162.1L648.5 163.5L647.8 166.1L647.2 168.7L646.6 171.4L646.1 174L645.7 176.6L645.4 179.3L645.2 181.9L645.2 183.8L645.4 184.5L647.5 187.1L647.5 187.2L648.6 189.8L648.8 191.6L648.8 192.5L648.5 195.1L647.8 197.7L647 200.4L646.2 203L646.2 203.1L645.5 205.6L644.6 208.3L643.8 210.9L642.9 213.5L642 216.2L641.2 218.8L640.6 220.5L640.4 221.5L639.6 224.1L638.8 226.7L638.1 229.4L637.3 232L636.6 234.6" fill="none" stroke="url(#gs)" stroke-width="0.97" stroke-opacity="0.45"/><path d="M624.3 87.5L630.3 88.1L631.8 90.8L633.4 93.4L634.9 96.1L636.4 98.8L638 101.5L638.3 102L639.5 104.1L641.1 106.8L642.7 109.5L644.2 112.1L645.8 114.8L647.3 117.5L648.1 119.1L648.7 120.1L650 122.8L651.3 125.5L652.6 128.1L653.5 129.9L653.9 130.8L654.1 131.4L654.8 132.9L655.1 133.5L655.5 134.3L656.2 135.8L656.4 136.1L657 137.3L656 138.7L656 138.8L655.1 140.2L654.6 140.9L654.2 141.5L654.1 141.7L652.8 143.1L651.9 144.1L651.5 144.6L650.3 146.1L649.9 146.8L649.9 146.8L649.5 147.5L648.8 149L648.6 149.5L647.5 152.2L646.6 154.8L645.8 157.5L645.2 160.2L644.9 161.5L644.5 162.8L643.9 165.5L643.3 168.2L642.7 170.8L642.2 173.5L641.8 176.2L641.5 178.8L641.3 181.5L641.3 183.4L641.6 184.2L643.7 186.8L643.7 186.8L644.8 189.5L645.1 191.5L645.1 192.2L644.8 194.8L644.1 197.5L643.3 200.2L642.5 202.8L642.4 203.1L641.7 205.5L640.9 208.2L640 210.9L639.1 213.5L638.2 216.2L637.3 218.9L636.8 220.7L636.5 221.5L635.7 224.2L635 226.9L634.2 229.5L633.5 232.2L632.8 234.9L626.8 235.4Z" fill="#b8b8b8"/><path d="M630.3 88.1L631.8 90.8L633.4 93.4L634.9 96.1L636.4 98.8L638 101.5L638.3 102L639.5 104.1L641.1 106.8L642.7 109.5L644.2 112.1L645.8 114.8L647.3 117.5L648.1 119.1L648.7 120.1L650 122.8L651.3 125.5L652.6 128.1L653.5 129.9L653.9 130.8L654.1 131.4L654.8 132.9L655.1 133.5L655.5 134.3L656.2 135.8L656.4 136.1L657 137.3L656 138.7L656 138.8L655.1 140.2L654.6 140.9L654.2 141.5L654.1 141.7L652.8 143.1L651.9 144.1L651.5 144.6L650.3 146.1L649.9 146.8L649.9 146.8L649.5 147.5L648.8 149L648.6 149.5L647.5 152.2L646.6 154.8L645.8 157.5L645.2 160.2L644.9 161.5L644.5 162.8L643.9 165.5L643.3 168.2L642.7 170.8L642.2 173.5L641.8 176.2L641.5 178.8L641.3 181.5L641.3 183.4L641.6 184.2L643.7 186.8L643.7 186.8L644.8 189.5L645.1 191.5L645.1 192.2L644.8 194.8L644.1 197.5L643.3 200.2L642.5 202.8L642.4 203.1L641.7 205.5L640.9 208.2L640 210.9L639.1 213.5L638.2 216.2L637.3 218.9L636.8 220.7L636.5 221.5L635.7 224.2L635 226.9L634.2 229.5L633.5 232.2L632.8 234.9" fill="none" stroke="url(#gs)" stroke-width="0.99" stroke-opacity="0.45"/><path d="M620.4 86L626.4 86.6L628 89.3L629.6 92L631.2 94.7L632.8 97.4L634.3 100.1L634.5 100.4L635.9 102.8L637.5 105.5L639.1 108.2L640.7 110.9L642.2 113.6L643.7 116.3L644.3 117.5L645.1 119L646.4 121.7L647.6 124.4L648.8 127.1L649.7 128.9L650 129.8L650.3 130.4L651 131.9L651.2 132.5L651.6 133.3L652.3 134.8L652.5 135.2L653 136.3L652.1 137.8L652.1 137.9L651.2 139.3L650.7 140L650.3 140.6L650.2 140.8L648.9 142.3L648 143.3L647.6 143.7L646.4 145.2L646 146L646 146L645.6 146.7L644.9 148.2L644.7 148.7L643.6 151.4L642.7 154.1L641.9 156.8L641.2 159.5L640.9 160.8L640.5 162.2L639.9 164.9L639.3 167.6L638.7 170.3L638.2 173L637.8 175.7L637.5 178.4L637.3 181.1L637.3 182.9L637.6 183.8L639.8 186.5L639.8 186.5L640.9 189.2L641.3 191.4L641.3 191.9L641 194.6L640.4 197.3L639.5 200L638.7 202.7L638.6 203.1L638 205.4L637.1 208.1L636.2 210.8L635.3 213.5L634.3 216.2L633.4 218.9L632.8 220.9L632.6 221.6L631.8 224.3L631 227L630.3 229.7L629.6 232.4L628.8 235.1L622.8 235.6Z" fill="#b8b8b8"/><path d="M626.4 86.6L628 89.3L629.6 92L631.2 94.7L632.8 97.4L634.3 100.1L634.5 100.4L635.9 102.8L637.5 105.5L639.1 108.2L640.7 110.9L642.2 113.6L643.7 116.3L644.3 117.5L645.1 119L646.4 121.7L647.6 124.4L648.8 127.1L649.7 128.9L650 129.8L650.3 130.4L651 131.9L651.2 132.5L651.6 133.3L652.3 134.8L652.5 135.2L653 136.3L652.1 137.8L652.1 137.9L651.2 139.3L650.7 140L650.3 140.6L650.2 140.8L648.9 142.3L648 143.3L647.6 143.7L646.4 145.2L646 146L646 146L645.6 146.7L644.9 148.2L644.7 148.7L643.6 151.4L642.7 154.1L641.9 156.8L641.2 159.5L640.9 160.8L640.5 162.2L639.9 164.9L639.3 167.6L638.7 170.3L638.2 173L637.8 175.7L637.5 178.4L637.3 181.1L637.3 182.9L637.6 183.8L639.8 186.5L639.8 186.5L640.9 189.2L641.3 191.4L641.3 191.9L641 194.6L640.4 197.3L639.5 200L638.7 202.7L638.6 203.1L638 205.4L637.1 208.1L636.2 210.8L635.3 213.5L634.3 216.2L633.4 218.9L632.8 220.9L632.6 221.6L631.8 224.3L631 227L630.3 229.7L629.6 232.4L628.8 235.1" fill="none" stroke="url(#gs)" stroke-width="1" stroke-opacity="0.45"/><path d="M616.5 84.4L622.5 85L624.1 87.7L625.8 90.4L627.4 93.2L629 95.9L630.6 98.6L630.7 98.7L632.2 101.4L633.9 104.1L635.5 106.8L637.1 109.6L638.6 112.3L640 115L640.5 115.9L641.4 117.8L642.6 120.5L643.8 123.2L645 126L645.8 127.8L646.1 128.7L646.4 129.3L647 130.8L647.3 131.4L647.7 132.3L648.3 133.8L648.5 134.2L649 135.3L648.1 136.8L648 136.9L647.2 138.3L646.7 139.1L646.3 139.6L646.2 139.8L644.9 141.4L644 142.4L643.6 142.9L642.5 144.4L642 145.1L642 145.1L641.7 145.9L640.9 147.4L640.7 147.8L639.6 150.6L638.6 153.3L637.8 156L637.1 158.8L636.8 160.1L636.5 161.5L635.8 164.2L635.2 167L634.7 169.7L634.1 172.5L633.7 175.2L633.4 177.9L633.3 180.7L633.3 182.5L633.6 183.4L635.8 186.1L635.8 186.1L637 188.9L637.5 191.3L637.5 191.6L637.2 194.3L636.6 197.1L635.7 199.8L634.9 202.5L634.7 203.1L634.1 205.3L633.2 208L632.3 210.7L631.3 213.5L630.4 216.2L629.5 218.9L628.8 221.2L628.6 221.7L627.8 224.4L627 227.1L626.3 229.9L625.5 232.6L624.8 235.3L618.8 235.8Z" fill="#b8b8b8"/><path d="M622.5 85L624.1 87.7L625.8 90.4L627.4 93.2L629 95.9L630.6 98.6L630.7 98.7L632.2 101.4L633.9 104.1L635.5 106.8L637.1 109.6L638.6 112.3L640 115L640.5 115.9L641.4 117.8L642.6 120.5L643.8 123.2L645 126L645.8 127.8L646.1 128.7L646.4 129.3L647 130.8L647.3 131.4L647.7 132.3L648.3 133.8L648.5 134.2L649 135.3L648.1 136.8L648 136.9L647.2 138.3L646.7 139.1L646.3 139.6L646.2 139.8L644.9 141.4L644 142.4L643.6 142.9L642.5 144.4L642 145.1L642 145.1L641.7 145.9L640.9 147.4L640.7 147.8L639.6 150.6L638.6 153.3L637.8 156L637.1 158.8L636.8 160.1L636.5 161.5L635.8 164.2L635.2 167L634.7 169.7L634.1 172.5L633.7 175.2L633.4 177.9L633.3 180.7L633.3 182.5L633.6 183.4L635.8 186.1L635.8 186.1L637 188.9L637.5 191.3L637.5 191.6L637.2 194.3L636.6 197.1L635.7 199.8L634.9 202.5L634.7 203.1L634.1 205.3L633.2 208L632.3 210.7L631.3 213.5L630.4 216.2L629.5 218.9L628.8 221.2L628.6 221.7L627.8 224.4L627 227.1L626.3 229.9L625.5 232.6L624.8 235.3" fill="none" stroke="url(#gs)" stroke-width="1.01" stroke-opacity="0.46"/><path d="M612.5 82.7L618.5 83.3L620.2 86.1L621.9 88.9L623.6 91.6L625.2 94.4L626.7 97L626.9 97.2L628.5 99.9L630.2 102.7L631.8 105.5L633.4 108.2L634.9 111L636.3 113.8L636.5 114.2L637.6 116.5L638.8 119.3L639.9 122.1L641 124.9L641.8 126.7L642.1 127.6L642.4 128.2L643 129.8L643.2 130.4L643.6 131.3L644.2 132.8L644.4 133.2L644.8 134.3L644 135.9L643.9 135.9L643.1 137.4L642.6 138.1L642.2 138.7L642.1 138.9L640.9 140.4L640 141.5L639.6 141.9L638.4 143.5L638 144.2L638 144.2L637.6 145L636.9 146.5L636.6 147L635.5 149.8L634.5 152.5L633.6 155.3L632.9 158.1L632.6 159.5L632.3 160.8L631.7 163.6L631.1 166.4L630.5 169.1L630 171.9L629.6 174.7L629.3 177.5L629.1 180.2L629.1 182L629.5 183L631.8 185.8L631.8 185.8L633 188.5L633.5 191.2L633.5 191.3L633.3 194.1L632.6 196.8L631.8 199.6L630.9 202.4L630.7 203.1L630.1 205.1L629.2 207.9L628.3 210.7L627.3 213.4L626.3 216.2L625.4 219L624.6 221.4L624.5 221.7L623.7 224.5L622.9 227.3L622.2 230L621.4 232.8L620.7 235.6L614.7 236.1Z" fill="#b8b8b8"/><path d="M618.5 83.3L620.2 86.1L621.9 88.9L623.6 91.6L625.2 94.4L626.7 97L626.9 97.2L628.5 99.9L630.2 102.7L631.8 105.5L633.4 108.2L634.9 111L636.3 113.8L636.5 114.2L637.6 116.5L638.8 119.3L639.9 122.1L641 124.9L641.8 126.7L642.1 127.6L642.4 128.2L643 129.8L643.2 130.4L643.6 131.3L644.2 132.8L644.4 133.2L644.8 134.3L644 135.9L643.9 135.9L643.1 137.4L642.6 138.1L642.2 138.7L642.1 138.9L640.9 140.4L640 141.5L639.6 141.9L638.4 143.5L638 144.2L638 144.2L637.6 145L636.9 146.5L636.6 147L635.5 149.8L634.5 152.5L633.6 155.3L632.9 158.1L632.6 159.5L632.3 160.8L631.7 163.6L631.1 166.4L630.5 169.1L630 171.9L629.6 174.7L629.3 177.5L629.1 180.2L629.1 182L629.5 183L631.8 185.8L631.8 185.8L633 188.5L633.5 191.2L633.5 191.3L633.3 194.1L632.6 196.8L631.8 199.6L630.9 202.4L630.7 203.1L630.1 205.1L629.2 207.9L628.3 210.7L627.3 213.4L626.3 216.2L625.4 219L624.6 221.4L624.5 221.7L623.7 224.5L622.9 227.3L622.2 230L621.4 232.8L620.7 235.6" fill="none" stroke="url(#gs)" stroke-width="1.02" stroke-opacity="0.46"/><path d="M608.4 81.1L614.4 81.7L616.1 84.5L617.9 87.3L619.6 90.1L621.3 92.9L622.7 95.2L623 95.7L624.7 98.5L626.4 101.3L628 104.1L629.6 106.9L631.1 109.7L632.5 112.5L632.5 112.5L633.7 115.3L634.9 118.1L636 120.9L637 123.7L637.7 125.6L638 126.5L638.3 127.1L638.9 128.7L639.1 129.3L639.4 130.2L640 131.8L640.2 132.1L640.6 133.3L639.8 134.9L639.7 134.9L638.9 136.4L638.5 137.2L638.1 137.7L637.9 137.9L636.7 139.5L635.8 140.5L635.4 141L634.3 142.6L633.8 143.3L633.8 143.3L633.4 144.1L632.7 145.6L632.5 146.1L631.3 148.9L630.3 151.7L629.4 154.5L628.7 157.3L628.3 158.7L628 160.2L627.4 163L626.8 165.8L626.2 168.6L625.7 171.4L625.3 174.2L625 177L624.9 179.8L624.9 181.6L625.3 182.6L627.6 185.4L627.7 185.5L628.8 188.2L629.5 191L629.5 191.1L629.3 193.8L628.6 196.6L627.8 199.4L626.9 202.2L626.6 203.2L626.1 205L625.2 207.8L624.2 210.6L623.2 213.4L622.2 216.2L621.3 219L620.4 221.7L620.4 221.8L619.6 224.6L618.8 227.4L618 230.2L617.2 233L616.5 235.8L610.5 236.3Z" fill="#b8b8b8"/><path d="M614.4 81.7L616.1 84.5L617.9 87.3L619.6 90.1L621.3 92.9L622.7 95.2L623 95.7L624.7 98.5L626.4 101.3L628 104.1L629.6 106.9L631.1 109.7L632.5 112.5L632.5 112.5L633.7 115.3L634.9 118.1L636 120.9L637 123.7L637.7 125.6L638 126.5L638.3 127.1L638.9 128.7L639.1 129.3L639.4 130.2L640 131.8L640.2 132.1L640.6 133.3L639.8 134.9L639.7 134.9L638.9 136.4L638.5 137.2L638.1 137.7L637.9 137.9L636.7 139.5L635.8 140.5L635.4 141L634.3 142.6L633.8 143.3L633.8 143.3L633.4 144.1L632.7 145.6L632.5 146.1L631.3 148.9L630.3 151.7L629.4 154.5L628.7 157.3L628.3 158.7L628 160.2L627.4 163L626.8 165.8L626.2 168.6L625.7 171.4L625.3 174.2L625 177L624.9 179.8L624.9 181.6L625.3 182.6L627.6 185.4L627.7 185.5L628.8 188.2L629.5 191L629.5 191.1L629.3 193.8L628.6 196.6L627.8 199.4L626.9 202.2L626.6 203.2L626.1 205L625.2 207.8L624.2 210.6L623.2 213.4L622.2 216.2L621.3 219L620.4 221.7L620.4 221.8L619.6 224.6L618.8 227.4L618 230.2L617.2 233L616.5 235.8" fill="none" stroke="url(#gs)" stroke-width="1.04" stroke-opacity="0.46"/><path d="M604.1 79.4L610.1 80L612 82.8L613.8 85.6L615.6 88.5L617.4 91.3L618.6 93.4L619.1 94.2L620.8 97L622.5 99.8L624.1 102.7L625.7 105.5L627.2 108.4L628.3 110.7L628.5 111.2L629.7 114L630.8 116.9L631.9 119.7L632.9 122.5L633.5 124.5L633.9 125.4L634.1 126L634.6 127.6L634.9 128.2L635.2 129.1L635.7 130.7L635.9 131.1L636.3 132.3L635.5 133.8L635.4 133.9L634.6 135.4L634.2 136.2L633.8 136.7L633.7 137L632.4 138.5L631.6 139.6L631.2 140.1L630 141.6L629.6 142.4L629.6 142.4L629.2 143.2L628.5 144.8L628.2 145.3L627 148.1L626 150.9L625.1 153.8L624.3 156.6L624 158L623.7 159.4L623.1 162.3L622.4 165.1L621.9 168L621.4 170.8L621 173.6L620.7 176.5L620.6 179.3L620.6 181.1L621 182.2L623.4 185L623.4 185.1L624.6 187.8L625.3 190.7L625.4 191.1L625.2 193.5L624.6 196.3L623.7 199.2L622.8 202L622.4 203.2L622 204.9L621 207.7L620.1 210.5L619 213.4L618 216.2L617 219.1L616.1 221.9L616.1 221.9L615.3 224.7L614.5 227.6L613.7 230.4L613 233.2L612.3 236.1L606.3 236.6Z" fill="#b8b8b8"/><path d="M610.1 80L612 82.8L613.8 85.6L615.6 88.5L617.4 91.3L618.6 93.4L619.1 94.2L620.8 97L622.5 99.8L624.1 102.7L625.7 105.5L627.2 108.4L628.3 110.7L628.5 111.2L629.7 114L630.8 116.9L631.9 119.7L632.9 122.5L633.5 124.5L633.9 125.4L634.1 126L634.6 127.6L634.9 128.2L635.2 129.1L635.7 130.7L635.9 131.1L636.3 132.3L635.5 133.8L635.4 133.9L634.6 135.4L634.2 136.2L633.8 136.7L633.7 137L632.4 138.5L631.6 139.6L631.2 140.1L630 141.6L629.6 142.4L629.6 142.4L629.2 143.2L628.5 144.8L628.2 145.3L627 148.1L626 150.9L625.1 153.8L624.3 156.6L624 158L623.7 159.4L623.1 162.3L622.4 165.1L621.9 168L621.4 170.8L621 173.6L620.7 176.5L620.6 179.3L620.6 181.1L621 182.2L623.4 185L623.4 185.1L624.6 187.8L625.3 190.7L625.4 191.1L625.2 193.5L624.6 196.3L623.7 199.2L622.8 202L622.4 203.2L622 204.9L621 207.7L620.1 210.5L619 213.4L618 216.2L617 219.1L616.1 221.9L616.1 221.9L615.3 224.7L614.5 227.6L613.7 230.4L613 233.2L612.3 236.1" fill="none" stroke="url(#gs)" stroke-width="1.05" stroke-opacity="0.46"/><path d="M599.9 77.6L605.9 78.2L607.8 81.1L609.7 84L611.5 86.9L613.3 89.7L614.4 91.6L615.1 92.6L616.8 95.5L618.5 98.4L620.2 101.2L621.8 104.1L623.2 107L624.1 108.9L624.5 109.9L625.7 112.7L626.7 115.6L627.7 118.5L628.6 121.4L629.3 123.3L629.6 124.2L629.8 124.9L630.3 126.5L630.5 127.1L630.8 128L631.4 129.6L631.5 130L631.9 131.2L631.1 132.8L631 132.9L630.3 134.4L629.8 135.2L629.5 135.7L629.3 135.9L628.1 137.5L627.2 138.6L626.8 139.1L625.7 140.7L625.3 141.5L625.3 141.5L624.9 142.3L624.1 143.8L623.9 144.4L622.6 147.2L621.6 150.1L620.6 153L619.9 155.9L619.5 157.3L619.2 158.7L618.6 161.6L618 164.5L617.4 167.4L617 170.2L616.6 173.1L616.3 176L616.1 178.9L616.1 180.6L616.6 181.7L619 184.6L619.1 184.7L620.3 187.5L621.1 190.4L621.1 191L621 193.2L620.4 196.1L619.5 199L618.6 201.8L618.2 203.2L617.7 204.7L616.8 207.6L615.8 210.5L614.8 213.3L613.7 216.2L612.7 219.1L611.8 222L611.7 222.2L610.9 224.8L610.1 227.7L609.3 230.6L608.6 233.5L607.9 236.3L601.9 236.8Z" fill="#b8b8b8"/><path d="M605.9 78.2L607.8 81.1L609.7 84L611.5 86.9L613.3 89.7L614.4 91.6L615.1 92.6L616.8 95.5L618.5 98.4L620.2 101.2L621.8 104.1L623.2 107L624.1 108.9L624.5 109.9L625.7 112.7L626.7 115.6L627.7 118.5L628.6 121.4L629.3 123.3L629.6 124.2L629.8 124.9L630.3 126.5L630.5 127.1L630.8 128L631.4 129.6L631.5 130L631.9 131.2L631.1 132.8L631 132.9L630.3 134.4L629.8 135.2L629.5 135.7L629.3 135.9L628.1 137.5L627.2 138.6L626.8 139.1L625.7 140.7L625.3 141.5L625.3 141.5L624.9 142.3L624.1 143.8L623.9 144.4L622.6 147.2L621.6 150.1L620.6 153L619.9 155.9L619.5 157.3L619.2 158.7L618.6 161.6L618 164.5L617.4 167.4L617 170.2L616.6 173.1L616.3 176L616.1 178.9L616.1 180.6L616.6 181.7L619 184.6L619.1 184.7L620.3 187.5L621.1 190.4L621.1 191L621 193.2L620.4 196.1L619.5 199L618.6 201.8L618.2 203.2L617.7 204.7L616.8 207.6L615.8 210.5L614.8 213.3L613.7 216.2L612.7 219.1L611.8 222L611.7 222.2L610.9 224.8L610.1 227.7L609.3 230.6L608.6 233.5L607.9 236.3" fill="none" stroke="url(#gs)" stroke-width="1.06" stroke-opacity="0.47"/><path d="M595.5 75.9L601.5 76.5L603.5 79.4L605.4 82.3L607.4 85.2L609.2 88.1L610.1 89.7L611 91L612.7 93.9L614.5 96.8L616.2 99.7L617.7 102.7L619.2 105.6L619.8 107L620.4 108.5L621.5 111.4L622.5 114.3L623.4 117.2L624.3 120.1L624.9 122.1L625.2 123L625.4 123.7L625.9 125.3L626.1 126L626.4 126.9L626.9 128.5L627 128.9L627.4 130.1L626.6 131.7L626.6 131.8L625.8 133.3L625.4 134.1L625 134.7L624.8 134.9L623.7 136.5L622.8 137.6L622.4 138.1L621.3 139.7L620.8 140.5L620.8 140.5L620.4 141.3L619.7 142.9L619.4 143.4L618.2 146.3L617.1 149.3L616.1 152.2L615.3 155.1L615 156.5L614.7 158L614 160.9L613.5 163.8L612.9 166.7L612.4 169.6L612 172.5L611.7 175.5L611.6 178.4L611.6 180.1L612.1 181.3L614.6 184.2L614.7 184.4L615.9 187.1L616.8 190L616.8 190.9L616.7 192.9L616.1 195.8L615.3 198.8L614.3 201.7L613.8 203.3L613.4 204.6L612.5 207.5L611.5 210.4L610.4 213.3L609.3 216.2L608.3 219.1L607.3 222.1L607.2 222.5L606.5 225L605.6 227.9L604.9 230.8L604.1 233.7L603.4 236.6L597.4 237.1Z" fill="#b8b8b8"/><path d="M601.5 76.5L603.5 79.4L605.4 82.3L607.4 85.2L609.2 88.1L610.1 89.7L611 91L612.7 93.9L614.5 96.8L616.2 99.7L617.7 102.7L619.2 105.6L619.8 107L620.4 108.5L621.5 111.4L622.5 114.3L623.4 117.2L624.3 120.1L624.9 122.1L625.2 123L625.4 123.7L625.9 125.3L626.1 126L626.4 126.9L626.9 128.5L627 128.9L627.4 130.1L626.6 131.7L626.6 131.8L625.8 133.3L625.4 134.1L625 134.7L624.8 134.9L623.7 136.5L622.8 137.6L622.4 138.1L621.3 139.7L620.8 140.5L620.8 140.5L620.4 141.3L619.7 142.9L619.4 143.4L618.2 146.3L617.1 149.3L616.1 152.2L615.3 155.1L615 156.5L614.7 158L614 160.9L613.5 163.8L612.9 166.7L612.4 169.6L612 172.5L611.7 175.5L611.6 178.4L611.6 180.1L612.1 181.3L614.6 184.2L614.7 184.4L615.9 187.1L616.8 190L616.8 190.9L616.7 192.9L616.1 195.8L615.3 198.8L614.3 201.7L613.8 203.3L613.4 204.6L612.5 207.5L611.5 210.4L610.4 213.3L609.3 216.2L608.3 219.1L607.3 222.1L607.2 222.5L606.5 225L605.6 227.9L604.9 230.8L604.1 233.7L603.4 236.6" fill="none" stroke="url(#gs)" stroke-width="1.08" stroke-opacity="0.47"/><path d="M591 74L597 74.6L599.1 77.6L601.1 80.5L603.1 83.5L605 86.4L605.8 87.7L606.8 89.4L608.6 92.3L610.4 95.3L612.1 98.2L613.6 101.2L615 104.1L615.4 105.1L616.1 107.1L617.2 110L618.1 113L619 115.9L619.9 118.9L620.4 120.9L620.7 121.8L620.9 122.5L621.4 124.1L621.5 124.8L621.8 125.7L622.3 127.4L622.4 127.7L622.8 129L622 130.6L622 130.7L621.2 132.2L620.8 133L620.4 133.6L620.3 133.9L619.1 135.5L618.3 136.6L617.9 137.1L616.8 138.7L616.3 139.5L616.3 139.5L615.9 140.3L615.1 142L614.9 142.5L613.6 145.4L612.5 148.4L611.5 151.3L610.7 154.3L610.3 155.8L610 157.2L609.4 160.2L608.8 163.1L608.3 166.1L607.8 169L607.4 172L607.1 174.9L607 177.9L607 179.6L607.5 180.8L610.1 183.8L610.2 184L611.4 186.7L612.3 189.7L612.4 190.8L612.3 192.6L611.8 195.6L610.9 198.5L609.9 201.5L609.4 203.3L609 204.4L608.1 207.4L607 210.3L605.9 213.3L604.8 216.2L603.8 219.2L602.8 222.1L602.6 222.8L601.9 225.1L601.1 228L600.3 231L599.5 233.9L598.8 236.9L592.8 237.4Z" fill="#b8b8b8"/><path d="M597 74.6L599.1 77.6L601.1 80.5L603.1 83.5L605 86.4L605.8 87.7L606.8 89.4L608.6 92.3L610.4 95.3L612.1 98.2L613.6 101.2L615 104.1L615.4 105.1L616.1 107.1L617.2 110L618.1 113L619 115.9L619.9 118.9L620.4 120.9L620.7 121.8L620.9 122.5L621.4 124.1L621.5 124.8L621.8 125.7L622.3 127.4L622.4 127.7L622.8 129L622 130.6L622 130.7L621.2 132.2L620.8 133L620.4 133.6L620.3 133.9L619.1 135.5L618.3 136.6L617.9 137.1L616.8 138.7L616.3 139.5L616.3 139.5L615.9 140.3L615.1 142L614.9 142.5L613.6 145.4L612.5 148.4L611.5 151.3L610.7 154.3L610.3 155.8L610 157.2L609.4 160.2L608.8 163.1L608.3 166.1L607.8 169L607.4 172L607.1 174.9L607 177.9L607 179.6L607.5 180.8L610.1 183.8L610.2 184L611.4 186.7L612.3 189.7L612.4 190.8L612.3 192.6L611.8 195.6L610.9 198.5L609.9 201.5L609.4 203.3L609 204.4L608.1 207.4L607 210.3L605.9 213.3L604.8 216.2L603.8 219.2L602.8 222.1L602.6 222.8L601.9 225.1L601.1 228L600.3 231L599.5 233.9L598.8 236.9" fill="none" stroke="url(#gs)" stroke-width="1.09" stroke-opacity="0.47"/><path d="M586.4 72.2L592.4 72.8L594.6 75.8L596.7 78.8L598.7 81.7L600.7 84.7L601.3 85.7L602.5 87.7L604.4 90.7L606.2 93.7L607.8 96.7L609.4 99.7L610.7 102.7L610.9 103.1L611.8 105.7L612.8 108.6L613.7 111.6L614.5 114.6L615.3 117.6L615.8 119.6L616.1 120.6L616.3 121.3L616.7 122.9L616.9 123.6L617.2 124.6L617.6 126.2L617.7 126.6L618.1 127.8L617.3 129.5L617.3 129.6L616.6 131.1L616.1 132L615.8 132.6L615.6 132.8L614.5 134.4L613.6 135.5L613.2 136.1L612.1 137.7L611.7 138.5L611.7 138.5L611.3 139.4L610.5 141L610.2 141.5L608.9 144.5L607.7 147.5L606.7 150.5L605.9 153.5L605.6 155L605.3 156.5L604.6 159.5L604 162.4L603.5 165.4L603 168.4L602.6 171.4L602.4 174.4L602.2 177.4L602.2 179L602.8 180.4L605.4 183.4L605.5 183.6L606.8 186.4L607.7 189.3L607.9 190.8L607.8 192.3L607.3 195.3L606.4 198.3L605.4 201.3L604.8 203.3L604.5 204.3L603.6 207.3L602.5 210.3L601.4 213.3L600.2 216.2L599.1 219.2L598.1 222.2L597.9 223.1L597.3 225.2L596.4 228.2L595.6 231.2L594.9 234.2L594.1 237.2L588.1 237.7Z" fill="#b8b8b8"/><path d="M592.4 72.8L594.6 75.8L596.7 78.8L598.7 81.7L600.7 84.7L601.3 85.7L602.5 87.7L604.4 90.7L606.2 93.7L607.8 96.7L609.4 99.7L610.7 102.7L610.9 103.1L611.8 105.7L612.8 108.6L613.7 111.6L614.5 114.6L615.3 117.6L615.8 119.6L616.1 120.6L616.3 121.3L616.7 122.9L616.9 123.6L617.2 124.6L617.6 126.2L617.7 126.6L618.1 127.8L617.3 129.5L617.3 129.6L616.6 131.1L616.1 132L615.8 132.6L615.6 132.8L614.5 134.4L613.6 135.5L613.2 136.1L612.1 137.7L611.7 138.5L611.7 138.5L611.3 139.4L610.5 141L610.2 141.5L608.9 144.5L607.7 147.5L606.7 150.5L605.9 153.5L605.6 155L605.3 156.5L604.6 159.5L604 162.4L603.5 165.4L603 168.4L602.6 171.4L602.4 174.4L602.2 177.4L602.2 179L602.8 180.4L605.4 183.4L605.5 183.6L606.8 186.4L607.7 189.3L607.9 190.8L607.8 192.3L607.3 195.3L606.4 198.3L605.4 201.3L604.8 203.3L604.5 204.3L603.6 207.3L602.5 210.3L601.4 213.3L600.2 216.2L599.1 219.2L598.1 222.2L597.9 223.1L597.3 225.2L596.4 228.2L595.6 231.2L594.9 234.2L594.1 237.2" fill="none" stroke="url(#gs)" stroke-width="1.1" stroke-opacity="0.47"/><path d="M581.7 70.3L587.7 70.9L590 73.9L592.2 76.9L594.3 80L596.3 83L596.7 83.6L598.2 86L600 89L601.8 92.1L603.5 95.1L605 98.1L606.2 101L606.3 101.2L607.3 104.2L608.3 107.2L609.1 110.2L609.9 113.3L610.7 116.3L611.1 118.3L611.4 119.3L611.6 120L612 121.7L612.1 122.4L612.4 123.3L612.8 125L612.9 125.4L613.3 126.7L612.5 128.3L612.5 128.4L611.8 130L611.3 130.8L611 131.4L610.9 131.7L609.7 133.3L608.9 134.5L608.5 135L607.4 136.7L606.9 137.5L606.9 137.5L606.5 138.3L605.7 140L605.5 140.5L604.1 143.6L602.9 146.6L601.9 149.6L601 152.6L600.7 154.2L600.4 155.7L599.8 158.7L599.2 161.7L598.6 164.8L598.2 167.8L597.8 170.8L597.5 173.8L597.4 176.9L597.4 178.5L598 179.9L600.7 182.9L600.8 183.2L602.1 186L603.1 189L603.3 190.7L603.2 192L602.7 195.1L601.9 198.1L600.9 201.1L600.1 203.4L599.9 204.1L598.9 207.2L597.8 210.2L596.7 213.2L595.5 216.3L594.4 219.3L593.4 222.3L593.1 223.4L592.5 225.3L591.6 228.4L590.8 231.4L590.1 234.4L589.3 237.5L583.3 238Z" fill="#b8b8b8"/><path d="M587.7 70.9L590 73.9L592.2 76.9L594.3 80L596.3 83L596.7 83.6L598.2 86L600 89L601.8 92.1L603.5 95.1L605 98.1L606.2 101L606.3 101.2L607.3 104.2L608.3 107.2L609.1 110.2L609.9 113.3L610.7 116.3L611.1 118.3L611.4 119.3L611.6 120L612 121.7L612.1 122.4L612.4 123.3L612.8 125L612.9 125.4L613.3 126.7L612.5 128.3L612.5 128.4L611.8 130L611.3 130.8L611 131.4L610.9 131.7L609.7 133.3L608.9 134.5L608.5 135L607.4 136.7L606.9 137.5L606.9 137.5L606.5 138.3L605.7 140L605.5 140.5L604.1 143.6L602.9 146.6L601.9 149.6L601 152.6L600.7 154.2L600.4 155.7L599.8 158.7L599.2 161.7L598.6 164.8L598.2 167.8L597.8 170.8L597.5 173.8L597.4 176.9L597.4 178.5L598 179.9L600.7 182.9L600.8 183.2L602.1 186L603.1 189L603.3 190.7L603.2 192L602.7 195.1L601.9 198.1L600.9 201.1L600.1 203.4L599.9 204.1L598.9 207.2L597.8 210.2L596.7 213.2L595.5 216.3L594.4 219.3L593.4 222.3L593.1 223.4L592.5 225.3L591.6 228.4L590.8 231.4L590.1 234.4L589.3 237.5" fill="none" stroke="url(#gs)" stroke-width="1.12" stroke-opacity="0.48"/><path d="M576.8 68.3L582.8 68.9L585.3 72L587.6 75.1L589.8 78.1L591.8 81.2L592 81.5L593.7 84.3L595.6 87.3L597.4 90.4L599.1 93.5L600.6 96.5L601.5 98.9L601.7 99.6L602.7 102.7L603.6 105.8L604.4 108.8L605.2 111.9L605.9 115L606.3 117L606.6 118L606.7 118.7L607.1 120.4L607.3 121.1L607.5 122.1L607.9 123.8L608 124.2L608.4 125.5L607.6 127.2L607.6 127.2L606.9 128.9L606.5 129.7L606.1 130.3L606 130.5L604.9 132.2L604 133.4L603.7 133.9L602.5 135.6L602.1 136.5L602.1 136.5L601.7 137.3L600.9 139L600.6 139.5L599.2 142.6L598 145.7L596.9 148.7L596.1 151.8L595.7 153.3L595.4 154.9L594.8 157.9L594.2 161L593.7 164.1L593.2 167.1L592.8 170.2L592.6 173.3L592.4 176.4L592.4 177.9L593.1 179.4L595.8 182.5L596 182.8L597.2 185.6L598.3 188.6L598.6 190.7L598.5 191.7L598.1 194.8L597.2 197.8L596.2 200.9L595.4 203.5L595.2 204L594.2 207.1L593.1 210.1L591.9 213.2L590.7 216.3L589.6 219.3L588.5 222.4L588.1 223.7L587.6 225.5L586.7 228.5L585.9 231.6L585.2 234.7L584.4 237.7L578.4 238.2Z" fill="#b8b8b8"/><path d="M582.8 68.9L585.3 72L587.6 75.1L589.8 78.1L591.8 81.2L592 81.5L593.7 84.3L595.6 87.3L597.4 90.4L599.1 93.5L600.6 96.5L601.5 98.9L601.7 99.6L602.7 102.7L603.6 105.8L604.4 108.8L605.2 111.9L605.9 115L606.3 117L606.6 118L606.7 118.7L607.1 120.4L607.3 121.1L607.5 122.1L607.9 123.8L608 124.2L608.4 125.5L607.6 127.2L607.6 127.2L606.9 128.9L606.5 129.7L606.1 130.3L606 130.5L604.9 132.2L604 133.4L603.7 133.9L602.5 135.6L602.1 136.5L602.1 136.5L601.7 137.3L600.9 139L600.6 139.5L599.2 142.6L598 145.7L596.9 148.7L596.1 151.8L595.7 153.3L595.4 154.9L594.8 157.9L594.2 161L593.7 164.1L593.2 167.1L592.8 170.2L592.6 173.3L592.4 176.4L592.4 177.9L593.1 179.4L595.8 182.5L596 182.8L597.2 185.6L598.3 188.6L598.6 190.7L598.5 191.7L598.1 194.8L597.2 197.8L596.2 200.9L595.4 203.5L595.2 204L594.2 207.1L593.1 210.1L591.9 213.2L590.7 216.3L589.6 219.3L588.5 222.4L588.1 223.7L587.6 225.5L586.7 228.5L585.9 231.6L585.2 234.7L584.4 237.7" fill="none" stroke="url(#gs)" stroke-width="1.13" stroke-opacity="0.48"/><path d="M571.9 66.3L577.9 66.9L580.5 70L582.9 73.2L585.1 76.3L587.2 79.3L587.2 79.4L589.2 82.5L591.1 85.6L592.9 88.7L594.6 91.8L596 94.9L596.7 96.7L597.1 98L598 101.2L598.9 104.3L599.6 107.4L600.3 110.5L601 113.6L601.4 115.7L601.6 116.7L601.8 117.4L602.1 119.1L602.3 119.8L602.5 120.8L602.9 122.5L603 122.9L603.3 124.3L602.6 126L602.5 126L601.9 127.7L601.5 128.5L601.1 129.2L601 129.4L599.9 131.1L599.1 132.3L598.7 132.8L597.6 134.5L597.1 135.4L597.1 135.4L596.7 136.2L595.9 137.9L595.6 138.5L594.2 141.6L592.9 144.7L591.8 147.8L591 150.9L590.6 152.5L590.3 154L589.7 157.2L589.1 160.3L588.6 163.4L588.1 166.5L587.7 169.6L587.5 172.7L587.4 175.8L587.4 177.4L588 178.9L590.8 182L591 182.4L592.3 185.2L593.4 188.3L593.7 190.6L593.7 191.4L593.3 194.5L592.4 197.6L591.4 200.7L590.5 203.5L590.4 203.8L589.4 206.9L588.2 210L587 213.2L585.8 216.3L584.7 219.4L583.6 222.5L583.1 224.1L582.6 225.6L581.7 228.7L580.9 231.8L580.1 234.9L579.4 238L573.4 238.5Z" fill="#b8b8b8"/><path d="M577.9 66.9L580.5 70L582.9 73.2L585.1 76.3L587.2 79.3L587.2 79.4L589.2 82.5L591.1 85.6L592.9 88.7L594.6 91.8L596 94.9L596.7 96.7L597.1 98L598 101.2L598.9 104.3L599.6 107.4L600.3 110.5L601 113.6L601.4 115.7L601.6 116.7L601.8 117.4L602.1 119.1L602.3 119.8L602.5 120.8L602.9 122.5L603 122.9L603.3 124.3L602.6 126L602.5 126L601.9 127.7L601.5 128.5L601.1 129.2L601 129.4L599.9 131.1L599.1 132.3L598.7 132.8L597.6 134.5L597.1 135.4L597.1 135.4L596.7 136.2L595.9 137.9L595.6 138.5L594.2 141.6L592.9 144.7L591.8 147.8L591 150.9L590.6 152.5L590.3 154L589.7 157.2L589.1 160.3L588.6 163.4L588.1 166.5L587.7 169.6L587.5 172.7L587.4 175.8L587.4 177.4L588 178.9L590.8 182L591 182.4L592.3 185.2L593.4 188.3L593.7 190.6L593.7 191.4L593.3 194.5L592.4 197.6L591.4 200.7L590.5 203.5L590.4 203.8L589.4 206.9L588.2 210L587 213.2L585.8 216.3L584.7 219.4L583.6 222.5L583.1 224.1L582.6 225.6L581.7 228.7L580.9 231.8L580.1 234.9L579.4 238" fill="none" stroke="url(#gs)" stroke-width="1.15" stroke-opacity="0.48"/><path d="M566.9 64.3L572.9 64.9L575.5 68L578.1 71.2L580.4 74.4L582.3 77.1L582.5 77.5L584.5 80.7L586.5 83.8L588.3 87L589.9 90.1L591.3 93.3L591.7 94.5L592.3 96.4L593.2 99.6L594 102.7L594.7 105.9L595.3 109L595.9 112.2L596.3 114.3L596.5 115.4L596.7 116.1L597 117.8L597.2 118.5L597.4 119.5L597.8 121.3L597.9 121.7L598.2 123L597.4 124.7L597.4 124.8L596.7 126.5L596.3 127.3L596 128L595.9 128.2L594.8 129.9L594 131.1L593.6 131.7L592.5 133.4L592 134.3L592 134.3L591.6 135.1L590.8 136.9L590.5 137.4L589.1 140.6L587.8 143.7L586.6 146.9L585.7 150L585.4 151.6L585.1 153.2L584.5 156.4L583.9 159.5L583.3 162.7L582.9 165.8L582.5 169L582.3 172.1L582.2 175.3L582.2 176.8L582.9 178.4L585.7 181.6L585.9 182L587.2 184.7L588.3 187.9L588.8 190.6L588.7 191L588.4 194.2L587.5 197.4L586.5 200.5L585.5 203.6L585.4 203.7L584.4 206.8L583.3 210L582 213.1L580.8 216.3L579.6 219.4L578.5 222.6L577.9 224.4L577.5 225.7L576.6 228.9L575.8 232L575 235.2L574.3 238.4L568.3 238.9Z" fill="#b8b8b8"/><path d="M572.9 64.9L575.5 68L578.1 71.2L580.4 74.4L582.3 77.1L582.5 77.5L584.5 80.7L586.5 83.8L588.3 87L589.9 90.1L591.3 93.3L591.7 94.5L592.3 96.4L593.2 99.6L594 102.7L594.7 105.9L595.3 109L595.9 112.2L596.3 114.3L596.5 115.4L596.7 116.1L597 117.8L597.2 118.5L597.4 119.5L597.8 121.3L597.9 121.7L598.2 123L597.4 124.7L597.4 124.8L596.7 126.5L596.3 127.3L596 128L595.9 128.2L594.8 129.9L594 131.1L593.6 131.7L592.5 133.4L592 134.3L592 134.3L591.6 135.1L590.8 136.9L590.5 137.4L589.1 140.6L587.8 143.7L586.6 146.9L585.7 150L585.4 151.6L585.1 153.2L584.5 156.4L583.9 159.5L583.3 162.7L582.9 165.8L582.5 169L582.3 172.1L582.2 175.3L582.2 176.8L582.9 178.4L585.7 181.6L585.9 182L587.2 184.7L588.3 187.9L588.8 190.6L588.7 191L588.4 194.2L587.5 197.4L586.5 200.5L585.5 203.6L585.4 203.7L584.4 206.8L583.3 210L582 213.1L580.8 216.3L579.6 219.4L578.5 222.6L577.9 224.4L577.5 225.7L576.6 228.9L575.8 232L575 235.2L574.3 238.4" fill="none" stroke="url(#gs)" stroke-width="1.17" stroke-opacity="0.48"/><path d="M561.7 62.2L567.7 62.8L570.4 66L573 69.2L575.3 72.4L577.1 75.1L577.5 75.6L579.5 78.8L581.4 82L583.2 85.2L584.8 88.4L586 91.5L586 91.6L587 94.8L587.8 98L588.6 101.2L589.3 104.4L589.9 107.6L590.2 108.9L590.5 110.7L590.5 110.8L590.9 112.5L591.1 114L591.2 114.2L591.5 116L591.8 117.2L591.9 117.7L591.4 119.5L591.2 120.4L590.9 121.2L590.3 123L590.2 123.5L590.1 123.6L589.6 124.8L588.6 126.5L588.5 126.8L587.6 128.3L586.7 129.9L586.6 130L585.9 131.5L585.8 131.8L585.1 133.1L583.7 136.3L582.3 139.5L581.1 142.7L580.1 145.9L579.5 148.4L579.4 149.1L578.8 152.3L578.2 155.5L577.7 158.7L577.2 161.9L576.9 165.1L576.7 168.3L576.6 171.5L576.6 172.1L577.2 174.7L578.8 177.9L580.2 180.8L580.3 181.1L581.6 184.3L582.9 187.5L583.7 190.7L583.8 191.8L583.6 193.9L582.8 197.1L581.7 200.3L580.5 203.5L580.1 204.5L579.4 206.7L578.2 209.9L576.9 213.1L575.6 216.3L574.4 219.5L573.2 222.7L572.6 224.7L572.2 225.9L571.3 229.1L570.5 232.3L569.7 235.5L569 238.7L563 239.2Z" fill="#b8b8b8"/><path d="M567.7 62.8L570.4 66L573 69.2L575.3 72.4L577.1 75.1L577.5 75.6L579.5 78.8L581.4 82L583.2 85.2L584.8 88.4L586 91.5L586 91.6L587 94.8L587.8 98L588.6 101.2L589.3 104.4L589.9 107.6L590.2 108.9L590.5 110.7L590.5 110.8L590.9 112.5L591.1 114L591.2 114.2L591.5 116L591.8 117.2L591.9 117.7L591.4 119.5L591.2 120.4L590.9 121.2L590.3 123L590.2 123.5L590.1 123.6L589.6 124.8L588.6 126.5L588.5 126.8L587.6 128.3L586.7 129.9L586.6 130L585.9 131.5L585.8 131.8L585.1 133.1L583.7 136.3L582.3 139.5L581.1 142.7L580.1 145.9L579.5 148.4L579.4 149.1L578.8 152.3L578.2 155.5L577.7 158.7L577.2 161.9L576.9 165.1L576.7 168.3L576.6 171.5L576.6 172.1L577.2 174.7L578.8 177.9L580.2 180.8L580.3 181.1L581.6 184.3L582.9 187.5L583.7 190.7L583.8 191.8L583.6 193.9L582.8 197.1L581.7 200.3L580.5 203.5L580.1 204.5L579.4 206.7L578.2 209.9L576.9 213.1L575.6 216.3L574.4 219.5L573.2 222.7L572.6 224.7L572.2 225.9L571.3 229.1L570.5 232.3L569.7 235.5L569 238.7" fill="none" stroke="url(#gs)" stroke-width="1.18" stroke-opacity="0.49"/><path d="M556.4 60.1L562.4 60.7L565.1 63.9L567.7 67.1L570.1 70.4L571.9 73.1L572.2 73.6L574.3 76.9L576.2 80.1L578 83.4L579.4 86.6L580.1 88.3L580.5 89.8L581.5 93.1L582.3 96.3L583.1 99.6L583.7 102.6L583.7 102.8L584 104.4L584.3 106L584.4 106.2L584.7 108L584.9 109.3L585 109.7L585.3 111.5L585.1 112.5L585 113.3L584.7 115.1L584.5 115.8L584.3 116.9L583.8 118.7L583.7 118.9L583.7 119L583.2 120.4L582.4 122.2L582.4 122.3L581.5 124L580.7 125.5L580.6 125.8L579.4 128.4L579.3 128.7L577.9 132L576.5 135.2L575.2 138.5L574.2 141.7L573.5 144.6L573.4 145L572.8 148.2L572.2 151.4L571.7 154.7L571.3 157.9L571 161.2L570.8 164.4L570.8 166.5L570.9 167.7L571.4 170.9L572.4 174.1L573.5 177.4L574.2 179.4L574.6 180.6L575.8 183.9L577.2 187.1L578.3 190.4L578.6 193.2L578.6 193.6L578.1 196.8L576.9 200.1L575.5 203.3L574.6 205.6L574.3 206.6L573.1 209.8L571.7 213L570.4 216.3L569.1 219.5L567.9 222.8L567.1 225L566.8 226L565.9 229.3L565.1 232.5L564.3 235.7L563.6 239L557.6 239.5Z" fill="#b8b8b8"/><path d="M562.4 60.7L565.1 63.9L567.7 67.1L570.1 70.4L571.9 73.1L572.2 73.6L574.3 76.9L576.2 80.1L578 83.4L579.4 86.6L580.1 88.3L580.5 89.8L581.5 93.1L582.3 96.3L583.1 99.6L583.7 102.6L583.7 102.8L584 104.4L584.3 106L584.4 106.2L584.7 108L584.9 109.3L585 109.7L585.3 111.5L585.1 112.5L585 113.3L584.7 115.1L584.5 115.8L584.3 116.9L583.8 118.7L583.7 118.9L583.7 119L583.2 120.4L582.4 122.2L582.4 122.3L581.5 124L580.7 125.5L580.6 125.8L579.4 128.4L579.3 128.7L577.9 132L576.5 135.2L575.2 138.5L574.2 141.7L573.5 144.6L573.4 145L572.8 148.2L572.2 151.4L571.7 154.7L571.3 157.9L571 161.2L570.8 164.4L570.8 166.5L570.9 167.7L571.4 170.9L572.4 174.1L573.5 177.4L574.2 179.4L574.6 180.6L575.8 183.9L577.2 187.1L578.3 190.4L578.6 193.2L578.6 193.6L578.1 196.8L576.9 200.1L575.5 203.3L574.6 205.6L574.3 206.6L573.1 209.8L571.7 213L570.4 216.3L569.1 219.5L567.9 222.8L567.1 225L566.8 226L565.9 229.3L565.1 232.5L564.3 235.7L563.6 239" fill="none" stroke="url(#gs)" stroke-width="1.2" stroke-opacity="0.49"/><path d="M551 57.9L557 58.5L559.7 61.7L562.3 65L564.7 68.3L566.5 71.1L566.8 71.6L568.9 74.9L570.8 78.2L572.5 81.5L573.9 84.8L574 85.1L574.9 88.1L575.9 91.3L576.7 94.6L577 96L577.4 97.8L577.4 97.9L577.7 99.6L578 101.2L578 101.4L578.3 103.2L578.5 104.5L578.5 105L578.4 106.9L578.3 107.8L578.1 108.7L577.8 110.5L577.7 111.1L577.5 112.3L577.1 114.1L577.1 114.2L577 114.4L576.6 115.9L576 117.6L575.9 117.7L575.2 119.5L574.5 120.9L573.1 124.2L572.8 125.1L571.8 127.5L570.5 130.8L569.2 134.1L568.1 137.4L567.3 140.6L567.3 140.7L566.7 144L566.1 147.2L565.6 150.5L565.2 153.8L565 157.1L564.9 160.4L564.9 160.6L565.1 163.7L565.5 167L566.2 170.3L567 173.6L567.8 176.8L568 177.9L568.6 180.1L569.9 183.4L571.3 186.7L572.6 190L573.3 193.3L573.4 194.8L573.2 196.6L572.2 199.9L570.6 203.1L569.1 206.4L569 206.8L567.8 209.7L566.4 213L565 216.3L563.6 219.6L562.4 222.9L561.5 225.4L561.3 226.2L560.4 229.5L559.5 232.7L558.7 236L558.1 239.3L552.1 239.8Z" fill="#b8b8b8"/><path d="M557 58.5L559.7 61.7L562.3 65L564.7 68.3L566.5 71.1L566.8 71.6L568.9 74.9L570.8 78.2L572.5 81.5L573.9 84.8L574 85.1L574.9 88.1L575.9 91.3L576.7 94.6L577 96L577.4 97.8L577.4 97.9L577.7 99.6L578 101.2L578 101.4L578.3 103.2L578.5 104.5L578.5 105L578.4 106.9L578.3 107.8L578.1 108.7L577.8 110.5L577.7 111.1L577.5 112.3L577.1 114.1L577.1 114.2L577 114.4L576.6 115.9L576 117.6L575.9 117.7L575.2 119.5L574.5 120.9L573.1 124.2L572.8 125.1L571.8 127.5L570.5 130.8L569.2 134.1L568.1 137.4L567.3 140.6L567.3 140.7L566.7 144L566.1 147.2L565.6 150.5L565.2 153.8L565 157.1L564.9 160.4L564.9 160.6L565.1 163.7L565.5 167L566.2 170.3L567 173.6L567.8 176.8L568 177.9L568.6 180.1L569.9 183.4L571.3 186.7L572.6 190L573.3 193.3L573.4 194.8L573.2 196.6L572.2 199.9L570.6 203.1L569.1 206.4L569 206.8L567.8 209.7L566.4 213L565 216.3L563.6 219.6L562.4 222.9L561.5 225.4L561.3 226.2L560.4 229.5L559.5 232.7L558.7 236L558.1 239.3" fill="none" stroke="url(#gs)" stroke-width="1.21" stroke-opacity="0.49"/><path d="M545.4 55.6L551.4 56.2L554.2 59.5L556.8 62.9L559.2 66.2L561 69.1L561.3 69.6L563.4 72.9L565.3 76.2L566.9 79.6L567.7 81.6L568.1 82.9L569.2 86.2L570 89.1L570.2 89.6L570.5 90.9L570.9 92.7L570.9 92.9L571.2 94.6L571.4 96.2L571.4 96.4L571.6 98.2L571.5 99.6L571.5 100.1L571.4 101.9L571.3 102.9L571.2 103.7L570.9 105.6L570.8 106.2L570.6 107.4L570.3 109.3L570.3 109.3L570.2 109.6L569.9 111.1L569.3 112.9L569.3 112.9L568.1 116.2L566.8 119.6L566 121.7L565.6 122.9L564.3 126.3L563 129.6L561.8 132.9L561 136.3L561 136.4L560.4 139.6L559.9 142.9L559.4 146.3L559 149.6L558.9 152.9L558.9 154.4L558.9 156.3L559.1 159.6L559.5 162.9L559.9 166.3L560.5 169.6L561.1 172.9L561.7 176.3L561.7 176.4L562.6 179.6L563.8 183L565.3 186.3L566.6 189.6L567.6 193L568 196.3L568 196.4L567.4 199.6L565.8 203L564 206.3L563.2 208L562.5 209.6L561 213L559.5 216.3L558.1 219.6L556.7 223L555.8 225.7L555.6 226.3L554.7 229.6L553.8 233L553 236.3L552.4 239.7L546.4 240.2Z" fill="#b8b8b8"/><path d="M551.4 56.2L554.2 59.5L556.8 62.9L559.2 66.2L561 69.1L561.3 69.6L563.4 72.9L565.3 76.2L566.9 79.6L567.7 81.6L568.1 82.9L569.2 86.2L570 89.1L570.2 89.6L570.5 90.9L570.9 92.7L570.9 92.9L571.2 94.6L571.4 96.2L571.4 96.4L571.6 98.2L571.5 99.6L571.5 100.1L571.4 101.9L571.3 102.9L571.2 103.7L570.9 105.6L570.8 106.2L570.6 107.4L570.3 109.3L570.3 109.3L570.2 109.6L569.9 111.1L569.3 112.9L569.3 112.9L568.1 116.2L566.8 119.6L566 121.7L565.6 122.9L564.3 126.3L563 129.6L561.8 132.9L561 136.3L561 136.4L560.4 139.6L559.9 142.9L559.4 146.3L559 149.6L558.9 152.9L558.9 154.4L558.9 156.3L559.1 159.6L559.5 162.9L559.9 166.3L560.5 169.6L561.1 172.9L561.7 176.3L561.7 176.4L562.6 179.6L563.8 183L565.3 186.3L566.6 189.6L567.6 193L568 196.3L568 196.4L567.4 199.6L565.8 203L564 206.3L563.2 208L562.5 209.6L561 213L559.5 216.3L558.1 219.6L556.7 223L555.8 225.7L555.6 226.3L554.7 229.6L553.8 233L553 236.3L552.4 239.7" fill="none" stroke="url(#gs)" stroke-width="1.23" stroke-opacity="0.5"/><path d="M540.5 55.6L545.7 53.9L548.5 57.3L551.1 60.7L553.5 64.1L555.4 66.9L555.7 67.4L557.8 70.8L559.6 74.2L561.1 77.6L561.3 78.1L562.3 81L562.6 81.8L563.2 83.7L563.4 84.4L563.7 85.5L564.1 87.4L564.2 87.7L564.4 89.3L564.5 91.1L564.5 91.1L564.5 93L564.4 94.5L564.4 94.8L564.2 96.7L564.1 97.9L564 98.6L563.8 100.4L563.7 101.3L563.6 102.3L563.3 104.1L563.2 104.7L563 106L562.5 108L561.4 111.4L560.2 114.8L559 118.1L559 118.2L557.8 121.6L556.5 125L555.4 128.3L554.5 131.7L554.4 132.1L553.9 135.1L553.4 138.5L553 141.9L552.7 145.3L552.7 147.9L552.7 148.6L552.8 152L553 155.4L553.2 158.8L553.6 162.2L554 165.6L554.4 168.9L554.9 172.3L555.3 174.9L555.4 175.7L556.3 179.1L557.6 182.5L559 185.9L560.5 189.2L561.6 192.6L562.4 196L562.5 198.1L562.4 199.4L561.1 202.8L559 206.2L557.3 209.3L557.2 209.5L555.6 212.9L554 216.3L552.4 219.7L551 223.1L549.9 226L549.8 226.5L548.8 229.8L547.9 233.2L547.2 236.6L546.6 240L541.2 240.2Z" fill="#b3b3b3"/><path d="M545.7 53.9L548.5 57.3L551.1 60.7L553.5 64.1L555.4 66.9L555.7 67.4L557.8 70.8L559.6 74.2L561.1 77.6L561.3 78.1L562.3 81L562.6 81.8L563.2 83.7L563.4 84.4L563.7 85.5L564.1 87.4L564.2 87.7L564.4 89.3L564.5 91.1L564.5 91.1L564.5 93L564.4 94.5L564.4 94.8L564.2 96.7L564.1 97.9L564 98.6L563.8 100.4L563.7 101.3L563.6 102.3L563.3 104.1L563.2 104.7L563 106L562.5 108L561.4 111.4L560.2 114.8L559 118.1L559 118.2L557.8 121.6L556.5 125L555.4 128.3L554.5 131.7L554.4 132.1L553.9 135.1L553.4 138.5L553 141.9L552.7 145.3L552.7 147.9L552.7 148.6L552.8 152L553 155.4L553.2 158.8L553.6 162.2L554 165.6L554.4 168.9L554.9 172.3L555.3 174.9L555.4 175.7L556.3 179.1L557.6 182.5L559 185.9L560.5 189.2L561.6 192.6L562.4 196L562.5 198.1L562.4 199.4L561.1 202.8L559 206.2L557.3 209.3L557.2 209.5L555.6 212.9L554 216.3L552.4 219.7L551 223.1L549.9 226L549.8 226.5L548.8 229.8L547.9 233.2L547.2 236.6L546.6 240" fill="none" stroke="url(#gs)" stroke-width="1.25" stroke-opacity="0.5"/><path d="M598 117.33Q596.17 119.16 592.77 123.6" fill="none" stroke="#686868" stroke-width="0.9" stroke-opacity="0.12"/><path d="M601.3 118.45Q599.06 120.7 594.89 126.15" fill="none" stroke="#686868" stroke-width="0.9" stroke-opacity="0.16"/><path d="M604.6 119.61Q601.99 122.22 597.16 128.54" fill="none" stroke="#686868" stroke-width="0.9" stroke-opacity="0.2"/><path d="M607.9 120.76Q604.97 123.69 599.53 130.81" fill="none" stroke="#686868" stroke-width="0.9" stroke-opacity="0.25"/><path d="M611.2 121.92Q607.98 125.14 601.99 132.97" fill="none" stroke="#686868" stroke-width="0.9" stroke-opacity="0.29"/><path d="M614.5 123.07Q611.01 126.56 604.53 135.04" fill="none" stroke="#686868" stroke-width="0.9" stroke-opacity="0.32"/><path d="M617.8 124.23Q614.07 127.96 607.13 137.03" fill="none" stroke="#686868" stroke-width="0.9" stroke-opacity="0.36"/><path d="M621.1 125.38Q617.14 129.34 609.8 138.95" fill="none" stroke="#686868" stroke-width="0.9" stroke-opacity="0.4"/><path d="M624.4 126.54Q620.24 130.7 612.52 140.8" fill="none" stroke="#686868" stroke-width="0.9" stroke-opacity="0.43"/><path d="M627.7 127.69Q623.36 132.04 615.29 142.59" fill="none" stroke="#686868" stroke-width="0.9" stroke-opacity="0.46"/><path d="M631 128.85Q626.49 133.36 618.12 144.31" fill="none" stroke="#686868" stroke-width="0.9" stroke-opacity="0.49"/><path d="M634.3 130Q629.64 134.66 620.99 145.97" fill="none" stroke="#686868" stroke-width="0.9" stroke-opacity="0.52"/><path d="M637.6 131.16Q632.81 135.95 623.92 147.58" fill="none" stroke="#686868" stroke-width="0.9" stroke-opacity="0.54"/><path d="M640.9 132.3Q636 137.2 626.89 149.11" fill="none" stroke="#686868" stroke-width="0.9" stroke-opacity="0.56"/><path d="M644.2 133.4Q639.2 138.4 629.91 150.55" fill="none" stroke="#686868" stroke-width="0.9" stroke-opacity="0.58"/><path d="M647.5 134.5Q642.42 139.58 632.98 151.93" fill="none" stroke="#686868" stroke-width="0.9" stroke-opacity="0.59"/><path d="M650.8 135.6Q645.65 140.75 636.09 153.25" fill="none" stroke="#686868" stroke-width="0.9" stroke-opacity="0.6"/><path d="M654.1 136.7Q648.9 141.9 639.25 154.52" fill="none" stroke="#686868" stroke-width="0.9" stroke-opacity="0.61"/><path d="M657.4 137.8Q652.17 143.03 642.45 155.73" fill="none" stroke="#686868" stroke-width="0.9" stroke-opacity="0.62"/><path d="M660.7 138.9Q655.45 144.15 645.71 156.89" fill="none" stroke="#686868" stroke-width="0.9" stroke-opacity="0.62"/><path d="M664 140Q658.75 145.25 649 157.99" fill="none" stroke="#686868" stroke-width="0.9" stroke-opacity="0.61"/><path d="M667.3 141.08Q662.07 146.31 652.35 159.02" fill="none" stroke="#686868" stroke-width="0.9" stroke-opacity="0.61"/><path d="M670.6 141.98Q665.4 147.18 655.74 159.82" fill="none" stroke="#686868" stroke-width="0.9" stroke-opacity="0.6"/><path d="M673.9 142.88Q668.75 148.04 659.17 160.55" fill="none" stroke="#686868" stroke-width="0.9" stroke-opacity="0.59"/><path d="M677.2 143.78Q672.11 148.87 662.66 161.23" fill="none" stroke="#686868" stroke-width="0.9" stroke-opacity="0.57"/><path d="M680.5 144.68Q675.49 149.69 666.19 161.86" fill="none" stroke="#686868" stroke-width="0.9" stroke-opacity="0.55"/><path d="M683.8 145.58Q678.89 150.5 669.76 162.43" fill="none" stroke="#686868" stroke-width="0.9" stroke-opacity="0.53"/><path d="M687.1 146.48Q682.3 151.28 673.39 162.94" fill="none" stroke="#686868" stroke-width="0.9" stroke-opacity="0.51"/><path d="M690.4 147.38Q685.73 152.05 677.06 163.39" fill="none" stroke="#686868" stroke-width="0.9" stroke-opacity="0.48"/><path d="M693.7 148.28Q689.18 152.81 680.78 163.79" fill="none" stroke="#686868" stroke-width="0.9" stroke-opacity="0.45"/><path d="M697 149.18Q692.64 153.54 684.55 164.13" fill="none" stroke="#686868" stroke-width="0.9" stroke-opacity="0.42"/><path d="M700.3 150.06Q696.12 154.23 688.37 164.38" fill="none" stroke="#686868" stroke-width="0.9" stroke-opacity="0.38"/><path d="M703.6 150.7Q699.62 154.67 692.24 164.33" fill="none" stroke="#686868" stroke-width="0.9" stroke-opacity="0.35"/><path d="M706.9 151.34Q703.15 155.09 696.17 164.21" fill="none" stroke="#686868" stroke-width="0.9" stroke-opacity="0.31"/><path d="M710.2 151.97Q706.69 155.49 700.16 164.02" fill="none" stroke="#686868" stroke-width="0.9" stroke-opacity="0.27"/><path d="M713.5 152.61Q710.25 155.86 704.22 163.75" fill="none" stroke="#686868" stroke-width="0.9" stroke-opacity="0.23"/><path d="M716.8 153.25Q713.84 156.21 708.35 163.39" fill="none" stroke="#686868" stroke-width="0.9" stroke-opacity="0.19"/><path d="M720.1 153.89Q717.46 156.53 712.57 162.93" fill="none" stroke="#686868" stroke-width="0.9" stroke-opacity="0.14"/><path d="M723.4 154.53Q721.12 156.81 716.89 162.34" fill="none" stroke="#686868" stroke-width="0.9" stroke-opacity="0.1"/><path d="M568 181.23Q563 189.23 558 211.23" fill="none" stroke="#707070" stroke-width="0.6" stroke-opacity="0.6"/><path d="M572.2 181.43Q567.2 189.43 562.2 211.43" fill="none" stroke="#707070" stroke-width="0.6" stroke-opacity="0.57"/><path d="M576.4 181.63Q571.4 189.63 566.4 211.63" fill="none" stroke="#707070" stroke-width="0.6" stroke-opacity="0.54"/><path d="M580.6 181.83Q575.6 189.83 570.6 211.83" fill="none" stroke="#707070" stroke-width="0.6" stroke-opacity="0.52"/><path d="M584.8 182.02Q579.8 190.02 574.8 212.02" fill="none" stroke="#707070" stroke-width="0.6" stroke-opacity="0.49"/><path d="M589 182.22Q584 190.22 579 212.22" fill="none" stroke="#707070" stroke-width="0.6" stroke-opacity="0.46"/><path d="M593.2 182.42Q588.2 190.42 583.2 212.42" fill="none" stroke="#707070" stroke-width="0.6" stroke-opacity="0.43"/><path d="M597.4 182.61Q592.4 190.61 587.4 212.61" fill="none" stroke="#707070" stroke-width="0.6" stroke-opacity="0.4"/><path d="M601.6 182.81Q596.6 190.81 591.6 212.81" fill="none" stroke="#707070" stroke-width="0.6" stroke-opacity="0.38"/><path d="M605.8 183.01Q600.8 191.01 595.8 213.01" fill="none" stroke="#707070" stroke-width="0.6" stroke-opacity="0.35"/><path d="M610 183.2Q605 191.2 600 213.2" fill="none" stroke="#707070" stroke-width="0.6" stroke-opacity="0.32"/><path d="M614.2 183.4Q609.2 191.4 604.2 213.4" fill="none" stroke="#707070" stroke-width="0.6" stroke-opacity="0.29"/><path d="M618.4 183.6Q613.4 191.6 608.4 213.6" fill="none" stroke="#707070" stroke-width="0.6" stroke-opacity="0.26"/><path d="M622.6 183.79Q617.6 191.79 612.6 213.79" fill="none" stroke="#707070" stroke-width="0.6" stroke-opacity="0.24"/><path d="M626.8 183.99Q621.8 191.99 616.8 213.99" fill="none" stroke="#707070" stroke-width="0.6" stroke-opacity="0.21"/><path d="M631 184.17Q626 192.17 621 214.17" fill="none" stroke="#707070" stroke-width="0.6" stroke-opacity="0.18"/><path d="M635.2 184.36Q630.2 192.36 625.2 214.36" fill="none" stroke="#707070" stroke-width="0.6" stroke-opacity="0.15"/><path d="M639.4 184.54Q634.4 192.54 629.4 214.54" fill="none" stroke="#707070" stroke-width="0.6" stroke-opacity="0.12"/><path d="M643.6 184.72Q638.6 192.72 633.6 214.72" fill="none" stroke="#707070" stroke-width="0.6" stroke-opacity="0.1"/><path d="M552 143Q553 161 561 176" fill="none" stroke="#707070" stroke-width="0.6" stroke-opacity="0.5"/><path d="M556.6 143Q557.6 161 565.6 176" fill="none" stroke="#707070" stroke-width="0.6" stroke-opacity="0.46"/><path d="M561.2 143.2Q562.2 161.2 570.2 176.2" fill="none" stroke="#707070" stroke-width="0.6" stroke-opacity="0.42"/><path d="M565.8 143.41Q566.8 161.41 574.8 176.41" fill="none" stroke="#707070" stroke-width="0.6" stroke-opacity="0.38"/><path d="M570.4 143.63Q571.4 161.63 579.4 176.63" fill="none" stroke="#707070" stroke-width="0.6" stroke-opacity="0.35"/><path d="M575 143.84Q576 161.84 584 176.84" fill="none" stroke="#707070" stroke-width="0.6" stroke-opacity="0.31"/><path d="M579.6 144.06Q580.6 162.06 588.6 177.06" fill="none" stroke="#707070" stroke-width="0.6" stroke-opacity="0.27"/><path d="M584.2 144.28Q585.2 162.28 593.2 177.28" fill="none" stroke="#707070" stroke-width="0.6" stroke-opacity="0.23"/><path d="M588.8 144.49Q589.8 162.49 597.8 177.49" fill="none" stroke="#707070" stroke-width="0.6" stroke-opacity="0.19"/><path d="M593.4 144.71Q594.4 162.71 602.4 177.71" fill="none" stroke="#707070" stroke-width="0.6" stroke-opacity="0.15"/><path d="M598 144.92Q599 162.92 607 177.92" fill="none" stroke="#707070" stroke-width="0.6" stroke-opacity="0.12"/><path d="M560 177.14L564 177.33L568 177.52L572 177.7L576 177.89L580 178.08L584 178.27L588 178.45L592 178.64L596 178.83L600 179.02L604 179.2L608 179.39L612 179.58L616 179.77L620 179.95L624 180.13L628 180.3L632 180.48L636 180.65L640 180.83L644 181L648 181.17L652 181.35L656 181.52L660 181.7L664 181.87L668 182.15L672 182.76L676 183.36L680 183.97L684 184.58L688 185.18L692 185.79L696 186.39L700 187L704 188.16L708 189.32L712 190.48L716 191.65L720 192.81L724 193.97L728 195.13L732 196" fill="none" stroke="#7c7c7c" stroke-width="1.4" stroke-opacity="0.3"/><path d="M604 120.4L608 121.8L612 123.2L616 124.6L620 126L624 127.4L628 128.8L632 130.2L636 131.6L640 133L644 134.33L648 135.67L652 137L656 138.33L660 139.67L664 141L668 142.27L672 143.36L676 144.45L680 145.55L684 146.64L688 147.73L692 148.82L696 149.91L700 151L704 151.77L708 152.55L712 153.32L716 154.1L720 154.87L724 155.65L728 156.42" fill="none" stroke="#7c7c7c" stroke-width="1.6" stroke-opacity="0.28"/><path d="M563 84Q566 95 563 108" fill="none" stroke="#d2d2d2" stroke-width="1.1" stroke-opacity="0.75"/><path d="M568.2 86.4Q571.2 97.4 568.2 110.2" fill="none" stroke="#d2d2d2" stroke-width="1.1" stroke-opacity="0.67"/><path d="M573.4 88.8Q576.4 99.8 573.4 112.4" fill="none" stroke="#d2d2d2" stroke-width="1.1" stroke-opacity="0.59"/><path d="M578.6 91.2Q581.6 102.2 578.6 114.6" fill="none" stroke="#d2d2d2" stroke-width="1.1" stroke-opacity="0.51"/><path d="M583.8 93.6Q586.8 104.6 583.8 116.8" fill="none" stroke="#d2d2d2" stroke-width="1.1" stroke-opacity="0.43"/><path d="M589 96Q592 107 589 119" fill="none" stroke="#d2d2d2" stroke-width="1.1" stroke-opacity="0.35"/><path d="M594.2 98.4Q597.2 109.4 594.2 121.2" fill="none" stroke="#d2d2d2" stroke-width="1.1" stroke-opacity="0.27"/><path d="M599.4 100.8Q602.4 111.8 599.4 123.4" fill="none" stroke="#d2d2d2" stroke-width="1.1" stroke-opacity="0.19"/></g></svg>
<div style="left:438.2px;top:250.4px;width:11.4px;height:32.55px;background:#b5c0c4;box-shadow:inset 0 0 0 0.5px rgba(70,80,88,0.55);"></div>
<div style="left:438.2px;top:250.4px;width:11.4px;height:8.2px;background:#6a7882;"></div>
<div style="left:438.6px;top:259px;width:10.6px;height:7.34px;background:#dde3e5;"></div>
<span class="t" style="left:440.2px;top:260.7px;font-size:18.4px;color:#4a4a4a;transform:scale(0.2300,0.25);">[]..[]</span>
<span class="t" style="left:441.6px;top:277.63px;font-size:18.4px;color:#7a7f84;font-style:italic;transform:scale(0.1675,0.25);">auto</span>
<div style="left:472.1px;top:250.4px;width:57.8px;height:32.55px;background:#b5c0c4;box-shadow:inset 0 0 0 0.5px rgba(70,80,88,0.55);"></div>
<div style="left:472.1px;top:250.4px;width:57.8px;height:8.2px;background:#6a7882;"></div>
<span class="t" style="left:489.59px;top:252.58px;font-size:18.4px;color:#fff;font-weight:bold;transform:scale(0.2325,0.25);">List.Flatten</span>
<div style="left:472.5px;top:259px;width:27.8px;height:7.34px;background:#dde3e5;"></div>
<span class="t" style="left:474.1px;top:260.7px;font-size:18.4px;color:#4a4a4a;transform:scale(0.2300,0.25);">list</span>
<svg style="left:495.9px;top:261.02px" width="2.6" height="3.4" viewBox="0 0 2.6 3.4"><path d="M0.4 0.3L2.2 1.7L0.4 3.1" fill="none" stroke="#2a2a2a" stroke-width="1"/></svg>
<div style="left:472.5px;top:267.04px;width:27.8px;height:7.34px;background:#dde3e5;"></div>
<span class="t" style="left:474.1px;top:268.74px;font-size:18.4px;color:#4a4a4a;transform:scale(0.2300,0.25);">amt</span>
<svg style="left:495.9px;top:269.06px" width="2.6" height="3.4" viewBox="0 0 2.6 3.4"><path d="M0.4 0.3L2.2 1.7L0.4 3.1" fill="none" stroke="#2a2a2a" stroke-width="1"/></svg>
<div style="left:512.7px;top:259px;width:16.8px;height:7.34px;background:#dde3e5;"></div>
<span class="t" style="left:514.3px;top:260.7px;font-size:18.4px;color:#4a4a4a;transform:scale(0.2300,0.25);">var[]..[]</span>
<span class="t" style="left:521.9px;top:277.63px;font-size:18.4px;color:#7a7f84;font-style:italic;transform:scale(0.1675,0.25);">auto</span>
<div style="left:551.4px;top:250.4px;width:57.6px;height:24.75px;background:#cdc8bf;box-shadow:inset 0 0 0 0.5px rgba(70,80,88,0.55);"></div>
<div style="left:551.4px;top:250.4px;width:57.6px;height:8.2px;background:#5d5956;"></div>
<span class="t" style="left:565.58px;top:252.58px;font-size:18.4px;color:#fff;font-weight:bold;transform:scale(0.2325,0.25);">Solid.ByUnion</span>
<div style="left:551.8px;top:259px;width:31.8px;height:7.34px;background:#ebe8e2;"></div>
<span class="t" style="left:553.4px;top:260.7px;font-size:18.4px;color:#4a4a4a;transform:scale(0.2300,0.25);">solids</span>
<svg style="left:579.2px;top:261.02px" width="2.6" height="3.4" viewBox="0 0 2.6 3.4"><path d="M0.4 0.3L2.2 1.7L0.4 3.1" fill="none" stroke="#2a2a2a" stroke-width="1"/></svg>
<div style="left:595.8px;top:259px;width:12.8px;height:7.34px;background:#ebe8e2;"></div>
<span class="t" style="left:597.4px;top:260.7px;font-size:18.4px;color:#4a4a4a;transform:scale(0.2300,0.25);">Solid</span>
<span class="t" style="left:601px;top:269.83px;font-size:18.4px;color:#7a7f84;font-style:italic;transform:scale(0.1675,0.25);">auto</span>
<div style="left:672.3px;top:250.3px;width:89.6px;height:72.75px;background:#b5c0c4;box-shadow:inset 0 0 0 0.5px rgba(70,80,88,0.55);"></div>
<div style="left:672.3px;top:250.3px;width:89.6px;height:8.2px;background:#6a7882;"></div>
<span class="t" style="left:685px;top:252.48px;font-size:18.4px;color:#fff;font-weight:bold;font-style:italic;transform:scale(0.2325,0.25);">All FamilyInstance.ByGeometry</span>
<div style="left:672.7px;top:258.9px;width:58px;height:7.34px;background:#dde3e5;"></div>
<span class="t" style="left:674.3px;top:260.6px;font-size:18.4px;color:#4a4a4a;transform:scale(0.2300,0.25);">geometry</span>
<svg style="left:726.3px;top:260.92px" width="2.6" height="3.4" viewBox="0 0 2.6 3.4"><path d="M0.4 0.3L2.2 1.7L0.4 3.1" fill="none" stroke="#2a2a2a" stroke-width="1"/></svg>
<div style="left:672.7px;top:266.94px;width:58px;height:7.34px;background:#dde3e5;"></div>
<span class="t" style="left:674.3px;top:268.64px;font-size:18.4px;color:#4a4a4a;transform:scale(0.2300,0.25);">familyTemplatePath</span>
<svg style="left:726.3px;top:268.96px" width="2.6" height="3.4" viewBox="0 0 2.6 3.4"><path d="M0.4 0.3L2.2 1.7L0.4 3.1" fill="none" stroke="#2a2a2a" stroke-width="1"/></svg>
<div style="left:672.7px;top:274.98px;width:58px;height:7.34px;background:#dde3e5;"></div>
<span class="t" style="left:674.3px;top:276.68px;font-size:18.4px;color:#4a4a4a;transform:scale(0.2300,0.25);">familyName</span>
<svg style="left:726.3px;top:277px" width="2.6" height="3.4" viewBox="0 0 2.6 3.4"><path d="M0.4 0.3L2.2 1.7L0.4 3.1" fill="none" stroke="#2a2a2a" stroke-width="1"/></svg>
<div style="left:672.7px;top:283.02px;width:58px;height:7.34px;background:#dde3e5;"></div>
<span class="t" style="left:674.3px;top:284.72px;font-size:18.4px;color:#4a4a4a;transform:scale(0.2300,0.25);">category</span>
<svg style="left:726.3px;top:285.04px" width="2.6" height="3.4" viewBox="0 0 2.6 3.4"><path d="M0.4 0.3L2.2 1.7L0.4 3.1" fill="none" stroke="#2a2a2a" stroke-width="1"/></svg>
<div style="left:672.7px;top:291.06px;width:58px;height:7.34px;background:#dde3e5;"></div>
<span class="t" style="left:674.3px;top:292.76px;font-size:18.4px;color:#4a4a4a;transform:scale(0.2300,0.25);">materialName</span>
<svg style="left:726.3px;top:293.08px" width="2.6" height="3.4" viewBox="0 0 2.6 3.4"><path d="M0.4 0.3L2.2 1.7L0.4 3.1" fill="none" stroke="#2a2a2a" stroke-width="1"/></svg>
<div style="left:672.7px;top:299.1px;width:58px;height:7.34px;background:#dde3e5;"></div>
<span class="t" style="left:674.3px;top:300.8px;font-size:18.4px;color:#4a4a4a;transform:scale(0.2300,0.25);">isVoid</span>
<svg style="left:726.3px;top:301.12px" width="2.6" height="3.4" viewBox="0 0 2.6 3.4"><path d="M0.4 0.3L2.2 1.7L0.4 3.1" fill="none" stroke="#2a2a2a" stroke-width="1"/></svg>
<div style="left:672.7px;top:307.14px;width:58px;height:7.34px;background:#dde3e5;"></div>
<span class="t" style="left:674.3px;top:308.84px;font-size:18.4px;color:#4a4a4a;transform:scale(0.2300,0.25);">subcategoryName</span>
<svg style="left:726.3px;top:309.16px" width="2.6" height="3.4" viewBox="0 0 2.6 3.4"><path d="M0.4 0.3L2.2 1.7L0.4 3.1" fill="none" stroke="#2a2a2a" stroke-width="1"/></svg>
<div style="left:743.1px;top:258.9px;width:18.4px;height:7.34px;background:#dde3e5;"></div>
<span class="t" style="left:744.7px;top:260.6px;font-size:18.4px;color:#4a4a4a;transform:scale(0.2300,0.25);">Instance</span>
<div style="left:743.1px;top:266.94px;width:18.4px;height:7.34px;background:#dde3e5;"></div>
<span class="t" style="left:744.7px;top:268.64px;font-size:18.4px;color:#4a4a4a;transform:scale(0.2300,0.25);">Family</span>
<span class="t" style="left:753.9px;top:317.73px;font-size:18.4px;color:#7a7f84;font-style:italic;transform:scale(0.1675,0.25);">auto</span>
<div style="left:505.2px;top:298.5px;width:103.6px;height:24.55px;background:#b5c0c4;box-shadow:inset 0 0 0 0.5px rgba(70,80,88,0.55);"></div>
<div style="left:505.2px;top:298.5px;width:103.6px;height:8.2px;background:#6a7882;"></div>
<span class="t" style="left:525.18px;top:300.68px;font-size:18.4px;color:#fff;font-weight:bold;transform:scale(0.2325,0.25);">&quot;Generic Model&quot; Template Path</span>
<div style="left:505.8px;top:306.7px;width:96px;height:7.6px;background:#e6e9ea;box-shadow:inset 0 0 0 0.4px #9aa4a8;"></div>
<span class="t" style="left:545.6px;top:308.38px;font-size:18.4px;color:#333;transform:scale(0.1956,0.25);">Browse...</span>
<div style="left:602.2px;top:306.7px;width:6.2px;height:7.6px;background:#dde3e5;"></div>
<span class="t" style="left:604.2px;top:308.48px;font-size:18.4px;color:#444;transform:scale(0.2047,0.25);">&gt;</span>
<span class="t" style="left:506px;top:316.38px;font-size:18.4px;color:#222;transform:scale(0.2107,0.25);">C:\...\Family Templates\English\Metric Generic Model.rft</span>
<div style="left:580.3px;top:334.6px;width:28.5px;height:16.45px;background:#b5c0c4;box-shadow:inset 0 0 0 0.5px rgba(70,80,88,0.55);"></div>
<div style="left:580.3px;top:334.6px;width:28.5px;height:8.2px;background:#6a7882;"></div>
<span class="t" style="left:581.35px;top:336.78px;font-size:18.4px;color:#fff;font-weight:bold;transform:scale(0.2325,0.25);">Family Name</span>
<div style="left:580.8px;top:342.8px;width:21px;height:7.3px;background:#dde3e5;"></div>
<div style="left:602.2px;top:342.8px;width:6.2px;height:7.3px;background:#dde3e5;box-shadow:inset 0 0 0 0.3px #aab;"></div>
<span class="t" style="left:604.2px;top:344.48px;font-size:18.4px;color:#444;transform:scale(0.2047,0.25);">&gt;</span>
<div style="left:572.2px;top:359.8px;width:36.6px;height:16.45px;background:#b5c0c4;box-shadow:inset 0 0 0 0.5px rgba(70,80,88,0.55);"></div>
<div style="left:572.2px;top:359.8px;width:36.6px;height:8.2px;background:#6a7882;"></div>
<span class="t" style="left:584.32px;top:361.98px;font-size:18.4px;color:#fff;font-weight:bold;transform:scale(0.2325,0.25);">String</span>
<div style="left:572.8px;top:368px;width:29px;height:7.3px;background:#e4e8ea;box-shadow:inset 0 0 0 0.4px #8a9499;"></div>
<span class="t" style="left:574.2px;top:369.68px;font-size:18.4px;color:#222;transform:scale(0.2049,0.25);">Generic Models</span>
<div style="left:602.2px;top:368px;width:6.2px;height:7.3px;background:#dde3e5;"></div>
<span class="t" style="left:604.2px;top:369.68px;font-size:18.4px;color:#444;transform:scale(0.2047,0.25);">&gt;</span>
<div style="left:505.2px;top:384.4px;width:21.7px;height:16.45px;background:#b5c0c4;box-shadow:inset 0 0 0 0.5px rgba(70,80,88,0.55);"></div>
<div style="left:505.2px;top:384.4px;width:21.7px;height:8.2px;background:#6a7882;"></div>
<span class="t" style="left:509.87px;top:386.58px;font-size:18.4px;color:#fff;font-weight:bold;transform:scale(0.2325,0.25);">String</span>
<div style="left:505.8px;top:392.6px;width:14.4px;height:7.3px;background:#e4e8ea;box-shadow:inset 0 0 0 0.4px #8a9499;"></div>
<span class="t" style="left:507px;top:394.28px;font-size:18.4px;color:#222;transform:scale(0.2127,0.25);">Default</span>
<div style="left:520.6px;top:392.6px;width:5.8px;height:7.3px;background:#dde3e5;"></div>
<span class="t" style="left:522.4px;top:394.28px;font-size:18.4px;color:#444;transform:scale(0.2047,0.25);">&gt;</span>
<div style="left:545.3px;top:384.4px;width:63.5px;height:24.55px;background:#b5c0c4;box-shadow:inset 0 0 0 0.5px rgba(70,80,88,0.55);"></div>
<div style="left:545.3px;top:384.4px;width:63.5px;height:8.2px;background:#6a7882;"></div>
<span class="t" style="left:559.81px;top:386.58px;font-size:18.4px;color:#fff;font-weight:bold;transform:scale(0.2325,0.25);">Material.ByName</span>
<div style="left:545.7px;top:393px;width:31.6px;height:7.34px;background:#dde3e5;"></div>
<span class="t" style="left:547.3px;top:394.7px;font-size:18.4px;color:#4a4a4a;transform:scale(0.2300,0.25);">name</span>
<svg style="left:572.9px;top:395.02px" width="2.6" height="3.4" viewBox="0 0 2.6 3.4"><path d="M0.4 0.3L2.2 1.7L0.4 3.1" fill="none" stroke="#2a2a2a" stroke-width="1"/></svg>
<div style="left:589.8px;top:393px;width:18.6px;height:7.34px;background:#dde3e5;"></div>
<span class="t" style="left:591.4px;top:394.7px;font-size:18.4px;color:#4a4a4a;transform:scale(0.2300,0.25);">Material</span>
<span class="t" style="left:600.8px;top:403.63px;font-size:18.4px;color:#7a7f84;font-style:italic;transform:scale(0.1675,0.25);">auto</span>
<div style="left:671.4px;top:236.9px;width:19.2px;height:11px;background:#ececec;border-radius:1.2px;box-shadow:0 0 0 0.4px #dcdcdc;"></div>
<span class="t" style="left:674.4px;top:240.68px;font-size:18.4px;color:#333;transform:scale(0.2148,0.25);">Springs</span>
<div style="left:796.2px;top:208.2px;width:2.4px;height:24px;background:#cdc8bf;"></div>
<div style="left:796.2px;top:208.2px;width:2.4px;height:8px;background:#5d5956;"></div>
<div style="left:796px;top:236.4px;width:2.6px;height:11px;background:#e6e6e6;"></div>
<div style="left:796.2px;top:250.1px;width:2.4px;height:24.4px;background:#cdc8bf;"></div>
<div style="left:796.2px;top:250.1px;width:2.4px;height:8.2px;background:#5d5956;"></div>
<div style="left:789.6px;top:298.4px;width:9px;height:24.1px;background:#b5c0c4;"></div>
<div style="left:789.6px;top:298.4px;width:9px;height:8.2px;background:#6a7882;"></div>
<div style="left:790px;top:306.9px;width:8.6px;height:7.4px;background:#dde3e5;"></div>
<span class="t" style="left:791.4px;top:308.48px;font-size:18.4px;color:#3a3a3a;transform:scale(0.2500,0.25);">fam</span>
<div style="left:438.4px;top:53.8px;width:9.8px;height:33px;background:#353535;"></div>
<span class="t" style="left:441px;top:79.49px;font-size:19.2px;color:#b0b0b0;transform:rotate(-90deg) scale(0.2500,0.25);">Library</span>
<div style="left:752.6px;top:50.3px;width:44px;height:10.2px;background:#fff;box-shadow:inset 0 0 0 0.4px #dcdcdc;"></div>
<div style="left:774.4px;top:50.3px;width:0.4px;height:10.2px;background:#dcdcdc;"></div>
<div style="left:786.8px;top:75.3px;width:9.4px;height:31px;background:#fff;box-shadow:inset 0 0 0 0.4px #e0e0e0;border-radius:1px;"></div>
<div style="left:786.8px;top:109.2px;width:9.4px;height:10px;background:#fff;box-shadow:inset 0 0 0 0.4px #e0e0e0;border-radius:1px;"></div>
<div style="left:438px;top:416.7px;width:360.8px;height:19.2px;background:#1d1d1d;"></div>
<div style="left:437.2px;top:435.9px;width:362.8px;height:2.1px;background:#c6c6c6;"></div>
<div style="left:440px;top:419px;width:48.6px;height:15.8px;background:#2e2e2e;box-shadow:inset 0 0 0 0.4px #3c3c3c;"></div>
<span class="t" style="left:442.8px;top:424.62px;font-size:21.6px;color:#c4c4c4;transform:scale(0.2823,0.25);">Manual</span>
<div style="left:491px;top:419.6px;width:40.8px;height:14.8px;background:#353535;"></div>
<span class="t" style="left:506px;top:424.52px;font-size:21.6px;color:#5c5c5c;transform:scale(0.2675,0.25);">Run</span>
<span class="t" style="left:575.4px;top:425.13px;font-size:18.8px;color:#f0503c;font-style:italic;transform:scale(0.2668,0.25);">Dynamo is not pointing at the current document.</span>
<svg id="dyn-icons" style="left:0;top:0" width="800" height="438" viewBox="0 0 800 438"><path d="M751 6.4H756" stroke="#8a8a8a" stroke-width="0.5"/><rect x="768.4" y="4" width="4.6" height="4.6" fill="none" stroke="#7a7a7a" stroke-width="0.5"/><path d="M787.4 3.8L792 8.6M792 3.8L787.4 8.6" stroke="#7a7a7a" stroke-width="0.5"/><circle cx="658.8" cy="18" r="2.6" fill="none" stroke="#c8c8c8" stroke-width="0.5"/><path d="M657.4 18.6L658.4 17.2L659.4 18.6L660.4 17.2" fill="none" stroke="#c8c8c8" stroke-width="0.5"/><circle cx="699.6" cy="18" r="3" fill="#e4e4e4"/><circle cx="705.6" cy="18" r="3" fill="#76d07a"/><rect x="699.2" y="16" width="0.9" height="2.6" fill="#444"/><rect x="699.2" y="19.2" width="0.9" height="0.9" fill="#444"/><path d="M445 26.6H448.6L450.2 28.2V33.4H445Z" fill="#8a8a8a"/><path d="M460.6 29.4H467.6V33.4H460.6Z M462.2 26.4H466.6V29H462.2Z" fill="#8a8a8a"/><rect x="478.2" y="26.6" width="6.4" height="6.6" fill="none" stroke="#9a9a9a" stroke-width="0.8"/><path d="M478.4 29.4H484.4" stroke="#9a9a9a" stroke-width="0.8"/><path d="M495.4 28.2H499.4C501 28.4 501.6 30 501.6 32" fill="none" stroke="#9a9a9a" stroke-width="1.1"/><path d="M496.8 26L494.4 28.2L496.8 30.4Z" fill="#9a9a9a"/><path d="M518.6 28.2H514.6C513 28.4 512.4 30 512.4 32" fill="none" stroke="#555" stroke-width="1.1"/><path d="M517.2 26L519.6 28.2L517.2 30.4Z" fill="#555"/><path d="M783 28.6H785.2L786 27.4H789L789.8 28.6H792V33.6H783Z" fill="#8e8e8e"/><circle cx="787.5" cy="31" r="1.3" fill="#3a3a3a"/><path d="M538.2 39.6L541 42.4M541 39.6L538.2 42.4" stroke="#9a9a9a" stroke-width="0.5"/><path d="M793.2 39.8H797.6M793.2 41.4H797.6M793.2 43H797.6" stroke="#8a8a8a" stroke-width="0.7"/><path d="M441.4 59.6H446M444.4 58L446 59.6L444.4 61.2" fill="none" stroke="#e8e8e8" stroke-width="1"/><circle cx="759.4" cy="56.2" r="2.3" fill="none" stroke="#888" stroke-width="0.5"/><path d="M759 57.8L761.4 53.4L763.8 57.8Z" fill="#fff" stroke="#888" stroke-width="0.5"/><path d="M765.6 54L768.8 53.4V57.6L765.6 58.2Z M768.8 53.4L770.4 52.8V57L768.8 57.6" fill="#fff" stroke="#888" stroke-width="0.5"/><rect x="778.4" y="52.8" width="5" height="2.4" fill="#4aa0e8"/><rect x="780" y="56.4" width="4.6" height="2.2" fill="#4aa0e8"/><rect x="788.4" y="54" width="5.6" height="2.6" fill="#4aa0e8"/><path d="M783.4 54H786V55.4H788.4M784.6 57.4H786.4V55.6" fill="none" stroke="#4aa0e8" stroke-width="0.5"/><circle cx="781.1" cy="68.1" r="3.4" fill="#fff" stroke="#333" stroke-width="0.55"/><path d="M782 66.4L780.2 68.1L782 69.8" fill="none" stroke="#333" stroke-width="0.6"/><path d="M788.2 67L790 65.8H795.4L797.2 67V70.2H788.2Z" fill="#3a3a3a"/><rect x="788.8" y="67.2" width="3.6" height="2.8" fill="#2f8fe0"/><rect x="793.2" y="67.2" width="3.6" height="2.8" fill="#e02f3a"/><path d="M789.2 80V79H790.2M792.8 79H793.8V80M793.8 82.6V83.6H792.8M790.2 83.6H789.2V82.6" fill="none" stroke="#555" stroke-width="0.6"/><path d="M789.2 91.2H793.8M791.5 88.9V93.5" stroke="#555" stroke-width="0.6"/><path d="M789.4 100.7H793.6" stroke="#555" stroke-width="0.6"/><path d="M791.5 111.4V117M788.7 114.2H794.3" stroke="#555" stroke-width="0.6"/><path d="M790.6 112.2L791.5 111.2L792.4 112.2M790.6 116.2L791.5 117.2L792.4 116.2M789.6 113.3L788.6 114.2L789.6 115.1M793.4 113.3L794.4 114.2L793.4 115.1" fill="none" stroke="#555" stroke-width="0.5"/><path d="M481.6 426.2H484.8L483.2 428.2Z" fill="#bdbdbd"/><path d="M797.8 433.6L794.4 437M797.8 435.4L796.2 437" stroke="#888" stroke-width="0.5"/></svg>
<div style="left:437.4px;top:12.8px;width:0.9px;height:423.2px;background:#1a1a1a;"></div>
<div style="left:798.2px;top:44.8px;width:0.5px;height:372px;background:#2a2a2a;"></div>
</div>
</body>
</html>
